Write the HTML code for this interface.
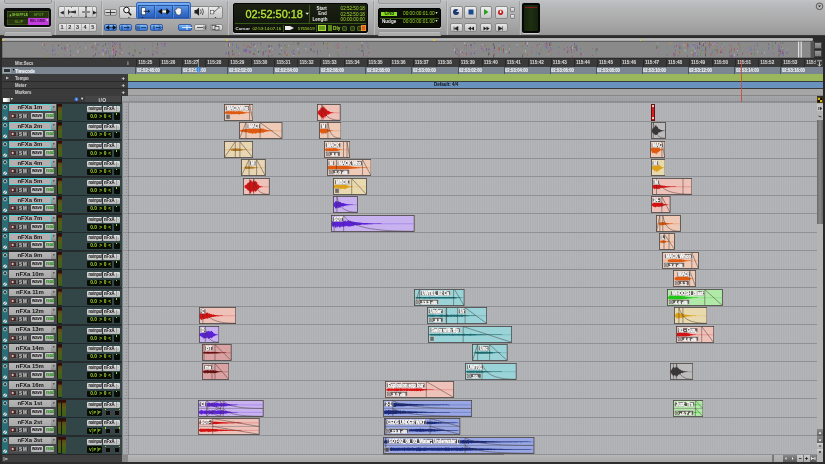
<!DOCTYPE html><html><head><meta charset="utf-8"><style>
*{margin:0;padding:0;box-sizing:border-box}
html,body{width:825px;height:464px;overflow:hidden;background:#2a2a2a}
body{position:relative;font-family:"Liberation Sans",sans-serif;}
.a{position:absolute}
.t{position:absolute;white-space:nowrap;line-height:1}
.btn{position:absolute;background:linear-gradient(#ececec,#c4c4c4);border:1px solid #8a8a8a;border-radius:2px}
.bbtn{position:absolute;background:linear-gradient(#8cc4ff,#4a90e8 50%,#3a7ad8);border:1px solid #3a5a9a;border-radius:2px}
</style></head><body><div style="position:absolute;left:0;top:0;width:825px;height:464px;overflow:hidden;will-change:transform;opacity:0.999"><div class="a" style="left:0.00px;top:0.00px;width:825.00px;height:36.00px;background:linear-gradient(#c4c5c9 0px,#bebfc0 2px,#b6b7b8 8px,#acacac 20px,#9c9c9c 33px,#969696 35px);"></div>
<div class="a" style="left:0.00px;top:35.00px;width:825.00px;height:1.00px;background:#3a3a3a"></div>
<div class="a" style="left:4.00px;top:-3.00px;width:48.00px;height:7.30px;border:0.6px solid #9a9a9a;border-radius:2px;background:linear-gradient(#bcbcbc,#b6b6b6);box-shadow:0 0.6px 0 #d2d2d2"></div>
<div class="a" style="left:4.00px;top:31.40px;width:48.00px;height:7.60px;border:0.6px solid #9a9a9a;border-radius:2px;background:linear-gradient(#b0b0b0,#a8a8a8);box-shadow:inset 0 0.6px 0 #cacaca"></div>
<div class="a" style="left:377.50px;top:-3.00px;width:63.50px;height:7.30px;border:0.6px solid #9a9a9a;border-radius:2px;background:linear-gradient(#bcbcbc,#b6b6b6);box-shadow:0 0.6px 0 #d2d2d2"></div>
<div class="a" style="left:377.50px;top:31.40px;width:63.50px;height:7.60px;border:0.6px solid #9a9a9a;border-radius:2px;background:linear-gradient(#b0b0b0,#a8a8a8);box-shadow:inset 0 0.6px 0 #cacaca"></div>
<div class="a" style="left:53.60px;top:1.00px;width:0.60px;height:34.00px;background:#a2a2a2;box-shadow:0.6px 0 0 #cfcfcf"></div>
<div class="a" style="left:100.80px;top:1.00px;width:0.60px;height:34.00px;background:#a2a2a2;box-shadow:0.6px 0 0 #cfcfcf"></div>
<div class="a" style="left:226.80px;top:1.00px;width:0.60px;height:34.00px;background:#a2a2a2;box-shadow:0.6px 0 0 #cfcfcf"></div>
<div class="a" style="left:372.50px;top:1.00px;width:0.60px;height:34.00px;background:#a2a2a2;box-shadow:0.6px 0 0 #cfcfcf"></div>
<div class="a" style="left:445.50px;top:1.00px;width:0.60px;height:34.00px;background:#a2a2a2;box-shadow:0.6px 0 0 #cfcfcf"></div>
<div class="a" style="left:518.50px;top:1.00px;width:0.60px;height:34.00px;background:#a2a2a2;box-shadow:0.6px 0 0 #cfcfcf"></div>
<div class="a" style="left:4.10px;top:8.20px;width:47.00px;height:19.20px;background:#0e0e0e;border-radius:2.5px;box-shadow:0 1px 0 #d8d8d8"></div>
<div class="a" style="left:7.00px;top:11.00px;width:42.10px;height:14.40px;background:#26350f;border:0.5px solid #3c5418"></div>
<div class="a" style="left:27.60px;top:11.20px;width:0.30px;height:14.00px;background:#1a2408"></div>
<div class="a" style="left:7.20px;top:18.00px;width:41.70px;height:0.30px;background:#1a2408"></div>
<div class="a" style="left:27.80px;top:18.20px;width:21.10px;height:6.90px;background:#c43de0"></div>
<svg class="a" style="left:8.8px;top:13.2px" width="3" height="4"><path d="M0.3 3.2 L1.4 1 L2.5 3.2z" fill="#8ad040"/></svg>
<div class="t" style="left:11.6px;top:13.7px;font-size:3.7px;font-weight:bold;color:#86c83a;transform:scaleX(0.95);transform-origin:0 0">SHUFFLE</div>
<div class="t" style="left:33.4px;top:13.1px;font-size:3.9px;font-weight:bold;color:#5c8e28">SPOT</div>
<div class="t" style="left:14.6px;top:20.1px;font-size:3.9px;font-weight:bold;color:#5c8e28">SLIP</div>
<div class="t" style="left:29.6px;top:20.3px;font-size:3.5px;font-weight:bold;color:#3a1048;transform:scaleX(0.92);transform-origin:0 0">REL GRID</div>
<svg class="a" style="left:46px;top:18.6px" width="3" height="3"><path d="M0.3 0.5h2.2L1.4 2z" fill="#f0f0f0"/></svg>
<div class="a" style="left:58.40px;top:5.60px;width:38.30px;height:12.80px;background:linear-gradient(#ececec,#c8c8c8);border:1px solid #8e8e8e;border-radius:2px"></div>
<div class="a" style="left:63.50px;top:6.20px;width:0.60px;height:11.60px;background:#a8a8a8"></div>
<div class="a" style="left:77.50px;top:6.20px;width:0.60px;height:11.60px;background:#a8a8a8"></div>
<div class="a" style="left:91.50px;top:6.20px;width:0.60px;height:11.60px;background:#a8a8a8"></div>
<div class="t" style="left:59.6px;top:9.5px;font-size:5px;color:#222">&#9664;</div>
<div class="t" style="left:92.6px;top:9.5px;font-size:5px;color:#222">&#9654;</div>
<svg class="a" style="left:64px;top:6px" width="32" height="12" viewBox="0 0 32 12"><path d="M3 6 L12 4.5 L12 7.5 Z M4 3 L6 6 L4 9 Z" fill="#333"/><path d="M7 1 l1 1 l-1 0z M7 11 l1 -1 l-1 0z" fill="#222"/><path d="M18 6 h8 M22 2 v8" stroke="#8a8a8a" stroke-width="2"/><circle cx="22" cy="1.2" r="0.8" fill="#222"/><circle cx="22" cy="10.8" r="0.8" fill="#222"/></svg>
<div class="a" style="left:58.40px;top:23.30px;width:38.30px;height:8.60px;background:linear-gradient(#ececec,#c8c8c8);border:1px solid #8e8e8e;border-radius:2px"></div>
<div class="t" style="left:60.60px;top:25.2px;font-size:5.5px;font-weight:bold;color:#333">1</div>
<div class="a" style="left:66.06px;top:23.80px;width:0.50px;height:7.60px;background:#b0b0b0"></div>
<div class="t" style="left:68.26px;top:25.2px;font-size:5.5px;font-weight:bold;color:#333">2</div>
<div class="a" style="left:73.72px;top:23.80px;width:0.50px;height:7.60px;background:#b0b0b0"></div>
<div class="t" style="left:75.92px;top:25.2px;font-size:5.5px;font-weight:bold;color:#333">3</div>
<div class="a" style="left:81.38px;top:23.80px;width:0.50px;height:7.60px;background:#b0b0b0"></div>
<div class="t" style="left:83.58px;top:25.2px;font-size:5.5px;font-weight:bold;color:#333">4</div>
<div class="a" style="left:89.04px;top:23.80px;width:0.50px;height:7.60px;background:#b0b0b0"></div>
<div class="t" style="left:91.24px;top:25.2px;font-size:5.5px;font-weight:bold;color:#333">5</div>
<div class="a" style="left:103.90px;top:8.70px;width:13.10px;height:7.80px;background:linear-gradient(#e8e8e8,#c0c0c0);border:1px solid #8a8a8a;border-radius:2px"></div>
<svg class="a" style="left:104px;top:9px" width="13" height="7"><path d="M1.5 3.5h10M6.5 1v5" stroke="#333" stroke-width="0.9"/></svg>
<div class="a" style="left:119.20px;top:5.50px;width:103.40px;height:13.10px;background:linear-gradient(#ececec,#c4c4c4);border:1px solid #8a8a8a;border-radius:2px"></div>
<div class="a" style="left:135.50px;top:1.90px;width:55.10px;height:16.70px;background:linear-gradient(#7ab4f4,#5a94e4 30%,#4a84d8);border:0.8px solid #3a66b8;border-radius:2px"></div>
<div class="a" style="left:137.60px;top:4.60px;width:51.00px;height:13.60px;background:linear-gradient(#5e9ae8,#3a74d0 55%,#2c62c0);border:0.5px solid #2a56a8"></div>
<div class="a" style="left:154.30px;top:4.80px;width:0.60px;height:13.20px;background:#2a56a8;box-shadow:0.6px 0 0 #6a9ee8"></div>
<div class="a" style="left:171.60px;top:4.80px;width:0.60px;height:13.20px;background:#2a56a8;box-shadow:0.6px 0 0 #6a9ee8"></div>
<div class="a" style="left:207.80px;top:6.00px;width:0.60px;height:12.00px;background:#a0a0a0"></div>
<svg class="a" style="left:119px;top:5px" width="104" height="14" viewBox="0 0 104 14"><circle cx="7.5" cy="5" r="2.8" stroke="#111" stroke-width="1" fill="#f8f8f8"/><path d="M9.5 7.2 L12.2 10.2" stroke="#111" stroke-width="1.5"/><path d="M9 12 h2 l-1 1z" fill="#222"/><rect x="22.5" y="2.8" width="4" height="7" fill="#fff" stroke="#111" stroke-width="0.5"/><path d="M24.5 6.3 h6 M29 5 l1.5 1.3 l-1.5 1.3" stroke="#112" stroke-width="0.8" fill="none"/><path d="M22.5 12 h2 l-1 1z" fill="#112"/><path d="M39 6.5 L43 3.5 L43 5 L47.5 5 L47.5 3 L51 6.5 L47.5 10 L47.5 8 L43 8 L43 9.5 Z" fill="#111"/><rect x="43.3" y="5.3" width="3.8" height="2.4" fill="#fff"/><path d="M57.5 9.5 L56 5.5 Q56 3.8 57.2 4.6 L57.6 3.2 Q58.6 2.6 59 3.4 L59.6 2.6 Q60.6 2.4 60.8 3.4 L61.6 3.2 Q62.6 3.4 62.4 4.6 L62.2 8 Q61.8 10 60 10.2 Z" fill="#f6f6f6" stroke="#222" stroke-width="0.5"/><path d="M75.5 5 h1.8 l2.8 -2.4 v8.2 l-2.8 -2.4 h-1.8z" fill="#222"/><path d="M81.6 4.4 q1.2 2.3 0 4.6 M83.4 3.4 q2 3.3 0 6.6" stroke="#333" stroke-width="0.8" fill="none"/><rect x="91.5" y="5.5" width="3.4" height="3.4" fill="#f4f4f4" stroke="#333" stroke-width="0.5"/><path d="M94.5 7.5 L100 2.5 M99 1.5 l2 2" stroke="#333" stroke-width="0.7"/><path d="M95.5 12 h2 l-1 1z" fill="#222"/></svg>
<div class="bbtn" style="left:103.5px;top:23.6px;width:13.0px;height:7.9px"></div>
<div class="bbtn" style="left:119.2px;top:23.6px;width:13.1px;height:7.9px"></div>
<div class="bbtn" style="left:134.7px;top:23.6px;width:12.9px;height:7.9px"></div>
<div class="bbtn" style="left:150.1px;top:23.6px;width:12.9px;height:7.9px"></div>
<div class="bbtn" style="left:178.3px;top:23.6px;width:13.4px;height:7.9px"></div>
<div class="btn" style="left:194.2px;top:23.6px;width:12.6px;height:7.9px"></div>
<div class="btn" style="left:209.5px;top:23.6px;width:13.1px;height:7.9px"></div>
<svg class="a" style="left:103px;top:23px" width="120" height="9" viewBox="0 0 120 9"><path d="M3 4.5 L6 2.5 V6.5Z M10 2.5 L13 4.5 L10 6.5Z M6 4.5h4" fill="#111" stroke="#111" stroke-width="0.5"/><path d="M19 2.5v4 M21 4.5h5 M24 2.5 L26 4.5 L24 6.5" stroke="#112" stroke-width="0.7" fill="none"/><path d="M34 2.5v4 M36 2.5v4 M38 4.5h5" stroke="#223" stroke-width="0.7" fill="none"/><path d="M51 2.5v4 M53 4.5h4 M56 2.5 L58 4.5 L56 6.5" stroke="#112" stroke-width="0.7" fill="none"/><path d="M79 4.5h10 M84 2v5" stroke="#fff" stroke-width="0.8"/><path d="M94 4.5h6 M101 2.5v4 M102.5 2.5v4" stroke="#222" stroke-width="0.7"/><rect x="109" y="2.5" width="4" height="4" fill="none" stroke="#222" stroke-width="0.6"/><rect x="112" y="3.5" width="4" height="3.5" fill="#ddd" stroke="#222" stroke-width="0.6"/></svg>
<div class="a" style="left:233.20px;top:2.70px;width:134.50px;height:30.00px;background:linear-gradient(#1c2214,#10140c);border:1px solid #050505;border-radius:2px;box-shadow:0 1px 0 #d4d4d4"></div>
<div class="t" style="left:245.5px;top:9.3px;font-size:10.95px;color:#bae834;letter-spacing:-0.05px;-webkit-text-stroke:0.3px #bae834">02:52:50:18</div>
<svg class="a" style="left:304.6px;top:12.4px" width="5" height="4"><path d="M0.4 0.8h3.6l-1.8 2z" fill="#eee"/></svg>
<div class="a" style="left:309.30px;top:5.00px;width:0.50px;height:18.00px;background:#3a5a18"></div>
<div class="a" style="left:235.00px;top:23.40px;width:131.00px;height:0.50px;background:#3a5a18"></div>
<div class="t" style="left:316.5px;top:6.60px;font-size:4.5px;font-weight:bold;color:#e8e8e8">Start</div>
<div class="t" style="left:318.2px;top:12.10px;font-size:4.5px;font-weight:bold;color:#e8e8e8">End</div>
<div class="t" style="left:312.6px;top:17.60px;font-size:4.5px;font-weight:bold;color:#e8e8e8">Length</div>
<div class="t" style="left:340.6px;top:7.20px;font-size:4.6px;color:#a8dc30">02:52:50:18</div>
<div class="t" style="left:340.6px;top:12.70px;font-size:4.6px;color:#a8dc30">02:52:50:18</div>
<div class="t" style="left:340.6px;top:18.20px;font-size:4.6px;color:#a8dc30">00:00:00:00</div>
<div class="t" style="left:235.5px;top:26.6px;font-size:4.4px;font-weight:bold;color:#e8e8e8">Cursor</div>
<div class="t" style="left:252.4px;top:26.9px;font-size:4.3px;color:#b8e838">02:53:14:07.16</div>
<div class="a" style="left:282.80px;top:24.50px;width:0.40px;height:7.00px;background:#3a5a18"></div>
<svg class="a" style="left:284px;top:25px" width="12" height="6"><path d="M1 1h5l4 2l-4 2h-5z" fill="#eee"/></svg>
<div class="t" style="left:297.8px;top:26.9px;font-size:4.3px;color:#b8e838">5765619</div>
<div class="a" style="left:316.00px;top:24.50px;width:0.40px;height:7.00px;background:#3a5a18"></div>
<div class="a" style="left:318.20px;top:25.00px;width:8.30px;height:6.20px;background:#6a9a20;border:0.5px solid #a8d838"></div>
<div class="a" style="left:328.00px;top:25.20px;width:4.00px;height:5.80px;background:#5a8a18"></div>
<div class="t" style="left:333px;top:26.8px;font-size:4.8px;font-weight:bold;color:#a8dc30">Dly</div>
<div class="a" style="left:342.00px;top:25.50px;width:5.00px;height:5.30px;background:#2a3a14;border:0.5px solid #4a6a20;border-radius:1px"></div>
<div class="a" style="left:349.50px;top:25.50px;width:5.00px;height:5.30px;background:#2a3a14;border:0.5px solid #4a6a20;border-radius:1px"></div>
<div class="a" style="left:356.50px;top:25.50px;width:5.00px;height:5.30px;background:#2a3a14;border:0.5px solid #4a6a20;border-radius:1px"></div>
<div class="a" style="left:360.50px;top:25.30px;width:5.50px;height:5.70px;background:#e06018;border:0.5px solid #f09030"></div>
<div class="a" style="left:377.90px;top:8.20px;width:63.00px;height:19.40px;background:#0c0f08;border:1px solid #030303;border-radius:2px;box-shadow:0 1px 0 #d4d4d4"></div>
<div class="a" style="left:380.90px;top:11.50px;width:15.80px;height:4.90px;background:#8ae020"></div>
<div class="t" style="left:384.6px;top:11.9px;font-size:4.6px;font-weight:bold;color:#1e3a04;-webkit-text-stroke:0.1px #1e3a04">Grid</div>
<div class="t" style="left:403px;top:12.1px;font-size:4.75px;color:#9cd828">00:00:00:01.00</div>
<div class="t" style="left:434.8px;top:12.4px;font-size:3.6px;color:#ddd">&#9660;</div>
<div class="a" style="left:380.00px;top:17.80px;width:59.00px;height:0.40px;background:#3c6014"></div>
<div class="t" style="left:382px;top:20.1px;font-size:4.6px;font-weight:bold;color:#eee">Nudge</div>
<div class="t" style="left:403px;top:20.2px;font-size:4.75px;color:#9cd828">00:00:00:01.00</div>
<div class="t" style="left:434.8px;top:20.4px;font-size:3.6px;color:#ddd">&#9660;</div>
<div class="btn" style="left:449.5px;top:5.8px;width:13.0px;height:12.8px;background:linear-gradient(#f0f0f0,#c6c6c6)"></div>
<div class="btn" style="left:449.5px;top:23.3px;width:13.0px;height:8.4px;background:linear-gradient(#eaeaea,#c2c2c2)"></div>
<div class="btn" style="left:464.4px;top:5.8px;width:13.1px;height:12.8px;background:linear-gradient(#f0f0f0,#c6c6c6)"></div>
<div class="btn" style="left:464.4px;top:23.3px;width:13.1px;height:8.4px;background:linear-gradient(#eaeaea,#c2c2c2)"></div>
<div class="btn" style="left:479.6px;top:5.8px;width:12.8px;height:12.8px;background:linear-gradient(#f0f0f0,#c6c6c6)"></div>
<div class="btn" style="left:479.6px;top:23.3px;width:12.8px;height:8.4px;background:linear-gradient(#eaeaea,#c2c2c2)"></div>
<div class="btn" style="left:494.5px;top:5.8px;width:13.1px;height:12.8px;background:linear-gradient(#f0f0f0,#c6c6c6)"></div>
<div class="btn" style="left:494.5px;top:23.3px;width:13.1px;height:8.4px;background:linear-gradient(#eaeaea,#c2c2c2)"></div>
<svg class="a" style="left:449px;top:5px" width="60" height="28" viewBox="0 0 60 28"><circle cx="7" cy="7" r="3" fill="#1a3a70"/><path d="M7 7 L10 4 L10 7z" fill="#ddd"/><rect x="19.5" y="4.5" width="5" height="5" fill="#1a4a90"/><path d="M35 4 L39.5 7 L35 10z" fill="#2aa020"/><circle cx="51.6" cy="7.3" r="2.6" fill="#c01818"/><rect x="50.8" y="5.5" width="1.6" height="2.6" fill="#fff"/><path d="M5 21.5 v4 M5.5 23.5 L9 21.5 V25.5z" fill="#222" stroke="#222" stroke-width="0.6"/><path d="M22 21.5 L19 23.5 L22 25.5z M25 21.5 L22 23.5 L25 25.5z" fill="#222"/><path d="M34.5 21.5 L37.5 23.5 L34.5 25.5z M37.5 21.5 L40.5 23.5 L37.5 25.5z" fill="#222"/><path d="M49.5 21.5 L53 23.5 L49.5 25.5z M53.5 21.5 v4" fill="#222" stroke="#222" stroke-width="0.6"/></svg>
<div class="a" style="left:510.00px;top:7.30px;width:5.30px;height:4.30px;background:linear-gradient(#eee,#c0c0c0);border:0.5px solid #888;border-radius:1px"></div>
<div class="a" style="left:510.00px;top:13.80px;width:5.30px;height:4.80px;background:linear-gradient(#eee,#c0c0c0);border:0.5px solid #888;border-radius:1px"></div>
<div class="a" style="left:522.20px;top:2.90px;width:17.40px;height:30.30px;background:#080808;border-radius:2px;box-shadow:0 1px 0 #d4d4d4"></div>
<div class="a" style="left:524.20px;top:5.00px;width:13.40px;height:26.20px;background:linear-gradient(90deg,#16240e,#1e3012 50%,#16240e)"></div>
<div class="a" style="left:525.00px;top:7.20px;width:12.00px;height:0.60px;background:#8a1a1a"></div>
<svg class="a" style="left:815px;top:2px" width="9" height="9"><circle cx="4.5" cy="4.3" r="3.3" fill="#b8b8b8" stroke="#333" stroke-width="0.7"/><path d="M3 3.5h3l-1.5 1.8z" fill="#222"/></svg>
<div class="a" style="left:0.00px;top:36.00px;width:825.00px;height:23.00px;background:#2c2c2c"></div>
<div class="a" style="left:2.00px;top:38.30px;width:811.00px;height:2.60px;background:linear-gradient(#a8a8a8,#bcbcbc 50%,#a0a0a0);border-radius:1.3px"></div>
<div class="a" style="left:2.00px;top:41.10px;width:808.50px;height:16.50px;background:#8b8b8b;box-shadow:inset 0 0.6px 0 #555, inset 0 0 0 0.5px #5a5a5a"></div>
<div class="a" style="left:2.3px;top:38.8px;width:1.8px;height:1.8px;border-radius:1px;background:#f0d020"></div>
<div class="a" style="left:226.1px;top:38.8px;width:1.8px;height:1.8px;border-radius:1px;background:#f0d020"></div>
<div class="a" style="left:433.1px;top:38.8px;width:1.8px;height:1.8px;border-radius:1px;background:#f0d020"></div>
<div class="a" style="left:639.6px;top:38.8px;width:1.8px;height:1.8px;border-radius:1px;background:#f0d020"></div>
<svg class="a" style="left:0;top:0" width="825" height="60"><path d="M75.5 47.3v0.8M110.0 47.6v1M98.5 51.8v1.5M62.0 47.3v2M58.5 54.9v1.5M52.5 49.7v1.5M52.5 50.6v1.5M163.5 53.3v0.8M115.5 47.8v0.8M70.0 45.4v0.8M93.5 47.2v1M306.0 43.6v1M226.0 52.0v3M368.0 44.3v0.8M280.0 53.1v2M263.0 51.7v3M244.0 48.2v3M367.0 55.3v1.5M292.0 50.6v2M346.5 46.8v1.5M363.5 51.3v1M263.5 46.0v1M293.5 52.7v2M254.0 43.5v0.8M275.5 49.3v1M545.0 43.3v2M571.0 48.5v2M568.0 50.9v1M503.5 50.2v3M550.5 47.1v2M459.0 50.3v3M551.0 42.2v0.8M539.0 52.7v2M536.5 51.6v1M674.5 45.6v0.8M697.5 55.0v2M711.0 52.7v1M709.5 46.2v2M749.0 46.3v0.8M757.5 42.9v1.5M762.0 52.5v1.5M694.0 55.4v2M721.0 46.3v1.5M712.5 51.6v1.5M731.5 55.2v3M730.0 54.3v3M722.5 52.8v0.8M717.0 45.7v1.5" stroke="#8a50a8" stroke-width="0.8" opacity="0.7"/><path d="M75.5 53.1v0.8M108.5 49.9v1M135.5 49.9v2M67.5 44.0v3M46.5 44.0v0.8M46.5 54.9v3M133.0 49.0v1M135.0 44.7v2M58.5 54.9v2M115.5 53.3v2M65.0 53.3v0.8M42.5 52.6v1M112.5 45.8v0.8M333.0 46.2v2M317.5 46.7v0.8M284.5 46.2v3M281.5 53.1v2M246.5 42.3v0.8M327.5 42.8v3M230.0 43.4v1M326.0 42.9v3M271.5 54.6v0.8M545.0 47.7v0.8M528.0 51.8v3M494.0 53.2v1.5M483.5 52.5v0.8M509.5 50.2v1.5M592.5 55.0v0.8M499.5 46.9v3M488.5 47.0v0.8M488.5 46.3v0.8M547.0 44.3v1.5M521.0 43.1v3M476.0 49.8v0.8M781.5 42.5v0.8M751.5 53.8v0.8M693.5 49.4v3M714.5 49.0v2M748.5 44.3v1.5M709.5 55.0v2M730.0 44.6v1.5M658.5 45.4v2M732.0 45.4v2M681.5 46.4v2M715.0 48.5v1M714.0 46.0v2M685.0 51.3v1M685.0 49.5v2M717.0 52.5v1M717.0 48.8v1.5" stroke="#a09030" stroke-width="0.8" opacity="0.7"/><path d="M110.0 44.9v0.8M108.5 50.4v2M55.0 49.4v1M55.0 53.7v1.5M113.5 52.1v1M65.0 46.4v3M157.5 53.3v1M157.5 43.0v1M152.5 45.7v1M52.5 45.8v1M113.5 42.2v3M120.0 42.6v3M165.0 45.4v1.5M238.5 47.2v2M229.0 42.3v2M229.0 43.1v1M359.0 48.7v1.5M368.0 45.8v1.5M299.0 52.2v1M317.5 53.0v1.5M281.5 44.7v0.8M281.5 49.4v1.5M281.5 46.2v1M269.0 46.8v1M245.5 49.0v3M293.5 51.4v0.8M294.0 50.3v0.8M509.0 52.7v1.5M455.5 52.0v2M577.0 50.5v0.8M489.0 48.5v0.8M546.5 42.2v2M567.5 51.5v1.5M551.0 49.5v1.5M483.5 51.0v0.8M581.0 53.6v1M525.5 42.5v0.8M592.5 54.9v1M493.5 54.5v1.5M474.5 52.2v1.5M574.5 42.9v3M754.5 49.0v1M754.5 45.6v1M754.5 53.8v0.8M715.0 49.2v1M667.0 54.9v1M695.5 52.4v3M695.5 49.0v3M783.0 49.1v0.8M787.0 51.3v3M740.0 48.8v1M740.0 46.8v0.8M783.0 53.1v3M693.0 46.9v1.5M780.5 42.7v1M724.5 46.5v0.8M694.0 43.5v2" stroke="#5050c8" stroke-width="0.8" opacity="0.7"/><path d="M110.0 49.4v0.8M109.0 47.7v3M108.5 53.0v1M115.5 52.8v0.8M103.0 43.9v3M129.0 46.6v1.5M129.0 52.1v2M165.0 53.5v1.5M229.5 55.1v1M336.0 52.3v1.5M255.0 50.4v1M294.0 53.8v1M232.5 52.5v0.8M281.5 54.2v2M261.0 51.0v1.5M338.0 53.6v3M236.5 45.1v0.8M294.0 42.4v3M539.5 52.6v3M509.0 45.7v0.8M577.0 53.5v1M551.0 43.1v2M457.0 50.4v1.5M483.5 50.4v1M525.5 48.4v2M464.5 47.8v0.8M524.0 53.7v2M596.0 53.1v2M501.5 48.2v2M657.5 45.2v2M721.5 52.3v0.8M779.0 50.4v1.5M779.0 54.8v1.5M700.5 53.1v3M754.5 52.3v3M722.0 44.0v1.5M740.0 44.5v3M772.5 44.1v3M680.0 47.3v1.5M708.5 45.1v1M729.5 50.5v3M712.5 50.4v1M705.5 53.0v1.5M705.5 46.8v1.5" stroke="#4a9a4a" stroke-width="0.8" opacity="0.7"/><path d="M110.0 54.8v3M109.0 42.7v1M108.5 43.3v0.8M133.0 54.6v2M70.5 50.2v2M113.5 54.9v3M85.5 43.4v2M85.5 44.2v1.5M103.0 52.6v0.8M103.0 45.4v1.5M161.5 43.1v1.5M121.5 50.1v1.5M153.0 53.3v3M144.5 48.5v1.5M229.0 51.5v1.5M228.5 43.9v0.8M279.0 53.0v2M279.5 46.9v1.5M294.0 53.3v1.5M284.5 51.0v2M261.0 42.6v3M248.0 45.2v1.5M254.0 43.6v3M246.5 48.6v3M311.0 45.4v0.8M311.0 44.5v1M236.5 46.5v1.5M366.5 42.4v1M471.0 52.2v3M546.5 45.7v2M486.5 48.4v3M494.0 47.7v3M499.0 43.7v0.8M457.0 47.8v3M580.5 48.1v1M551.0 54.3v0.8M571.5 45.6v1M466.5 47.6v1M527.5 44.5v2M493.5 44.5v1.5M674.0 52.5v2M674.0 52.9v0.8M779.0 45.7v3M695.5 47.3v1.5M674.5 46.8v1M702.0 50.4v0.8M702.0 45.0v2M732.0 54.2v3M732.0 55.2v0.8M687.5 43.4v2M705.5 54.8v2" stroke="#6a50b0" stroke-width="0.8" opacity="0.7"/><path d="M109.0 49.5v1M67.5 44.7v1.5M67.5 49.2v1M85.5 47.3v1.5M74.0 54.6v0.8M112.5 51.2v2M338.5 49.7v0.8M226.0 44.8v1M288.5 45.3v1M338.0 44.6v2M258.5 52.0v0.8M258.5 53.1v1.5M293.5 54.9v1M239.5 52.7v1M539.5 45.5v1M506.0 51.9v0.8M499.5 44.6v1M517.0 44.1v1.5M527.5 42.0v3M462.5 49.8v0.8M734.5 54.0v2M722.0 45.9v1.5M787.0 48.9v0.8M713.0 44.1v0.8M732.0 54.6v0.8M724.5 43.8v1.5M670.5 42.6v1.5M782.5 47.7v1M764.5 51.8v1.5" stroke="#c8c8c8" stroke-width="0.8" opacity="0.7"/><path d="M135.5 46.0v1M55.0 55.3v2M135.0 52.9v2M106.0 55.0v0.8M153.0 49.7v0.8M140.0 45.2v1M306.0 44.8v2M265.5 49.1v3M279.0 42.4v2M258.5 51.9v0.8M269.0 44.1v0.8M493.5 53.5v2M545.0 49.8v0.8M596.0 48.3v3M580.5 48.4v1.5M541.0 47.2v2M556.5 45.5v3M547.0 47.0v1M521.0 52.8v1M517.0 45.6v2M474.5 55.4v1M536.5 53.4v3M493.5 43.8v1.5M773.0 45.3v0.8M721.5 43.6v1M751.5 49.0v1.5M669.5 48.8v0.8M779.0 49.0v2M715.0 49.8v3M667.0 46.4v3M702.0 47.9v3M697.5 45.3v2M687.5 49.5v2M695.0 49.9v1.5M658.5 45.9v1.5M713.0 50.5v1M762.0 47.6v2M724.5 43.8v1M685.0 51.0v2M779.0 53.1v0.8M699.5 46.5v0.8" stroke="#4a9aa0" stroke-width="0.8" opacity="0.7"/><path d="M135.5 43.1v1.5M96.0 49.0v1M113.5 42.2v0.8M163.0 45.4v1.5M65.0 54.1v3M103.0 49.5v1.5M107.0 48.0v3M113.0 51.4v2M113.0 49.2v2M163.5 44.2v2M106.0 49.0v1.5M155.5 50.4v0.8M92.0 42.5v0.8M115.5 51.0v2M116.0 42.0v0.8M116.0 54.1v0.8M93.5 49.8v1M338.5 55.0v1.5M317.5 43.3v1.5M228.5 46.4v1M272.5 45.4v1M232.5 54.6v1.5M308.0 46.7v1M346.5 52.8v3M248.0 50.0v3M317.5 55.0v2M246.5 50.4v2M245.5 53.0v1M271.5 54.3v3M537.0 44.3v0.8M482.5 47.8v3M471.0 46.7v1.5M537.5 46.5v1M559.0 51.8v3M476.0 49.3v2M545.0 46.1v2M551.0 48.7v1M574.5 46.5v1.5M459.0 50.2v0.8M531.5 49.8v1.5M476.0 49.0v2M773.0 48.0v0.8M657.5 50.6v2M781.5 51.4v3M696.0 43.6v3M709.5 44.9v0.8M749.0 49.6v1.5M780.5 52.0v2M715.0 42.0v3M712.5 43.0v0.8M731.5 43.1v1.5M731.5 46.0v1.5M685.0 50.8v1M730.0 49.3v0.8M770.0 52.8v1M679.5 45.1v3M679.5 43.0v1.5" stroke="#a060c0" stroke-width="0.8" opacity="0.7"/><path d="M98.5 43.6v2M70.5 54.7v1.5M53.0 48.5v3M44.5 48.3v0.8M103.0 48.9v2M103.0 50.2v1M62.0 47.4v2M155.5 51.6v0.8M287.0 44.6v0.8M228.5 51.9v0.8M299.0 49.5v1.5M255.0 48.7v2M232.5 43.2v3M251.5 42.6v3M263.5 53.9v0.8M593.5 55.2v0.8M577.0 45.3v2M503.5 44.8v2M488.5 49.3v0.8M547.0 47.3v2M574.5 51.9v1.5M657.5 46.7v0.8M693.5 46.0v0.8M779.0 51.0v1M772.5 42.4v0.8M688.5 44.2v3M658.5 54.2v0.8M751.0 47.5v3M678.5 45.4v0.8M681.5 48.0v0.8M768.5 47.0v3M703.0 43.5v1.5M679.5 47.3v2" stroke="#5a6ac0" stroke-width="0.8" opacity="0.7"/><path d="M133.0 55.0v0.8M135.0 49.3v3M115.5 54.0v2M157.5 43.6v2M80.0 51.7v0.8M106.0 51.5v2M92.0 46.9v1.5M114.5 43.0v1M129.0 53.3v0.8M287.0 46.6v0.8M285.0 44.8v1.5M228.5 44.5v2M279.5 44.6v0.8M244.0 50.2v1.5M268.5 55.2v2M320.5 50.6v0.8M254.0 44.2v1.5M258.5 50.6v3M362.0 44.6v2M471.0 44.1v2M559.0 46.7v1M489.0 49.0v1M571.0 46.8v1.5M549.5 42.8v3M550.5 42.3v0.8M457.0 53.6v1.5M522.5 54.8v3M522.5 45.9v0.8M466.5 45.4v0.8M596.0 50.5v1M501.5 45.5v0.8M597.0 48.0v3M576.5 49.0v1.5M781.5 46.6v1M751.5 53.4v0.8M780.0 53.6v1M705.5 47.4v3M783.0 51.2v3M680.0 46.5v2M768.5 43.4v1.5M699.5 47.2v1.5" stroke="#505050" stroke-width="0.8" opacity="0.7"/><path d="M78.0 50.0v3M95.5 42.8v1.5M85.5 44.6v1M103.0 52.4v3M42.5 43.9v1M113.5 42.9v0.8M105.5 48.9v1M122.0 51.6v1.5M329.5 54.6v2M306.0 48.1v1.5M229.5 43.0v3M257.5 49.1v0.8M362.0 42.1v1.5M255.0 45.2v2M272.5 49.1v0.8M281.5 47.3v1.5M298.0 48.3v2M369.0 46.9v0.8M270.0 47.1v2M482.5 44.3v1M493.5 48.8v1.5M476.0 49.0v0.8M454.5 49.0v2M572.5 46.8v2M549.0 53.5v1M525.5 49.8v2M506.0 50.5v2M464.5 42.5v1.5M460.5 51.1v1.5M509.5 48.5v1M583.5 53.4v0.8M657.5 42.6v0.8M721.5 53.6v1M696.0 54.2v0.8M692.0 52.0v1.5M737.5 49.4v1.5M722.0 47.1v2M695.5 50.0v1.5M695.0 48.8v1M695.0 51.1v1.5M693.0 46.7v2M757.5 51.1v1M694.0 43.0v0.8M715.0 43.2v0.8M685.0 49.2v3M703.0 42.3v3M684.0 44.3v1.5" stroke="#d0d0d0" stroke-width="0.8" opacity="0.7"/><path d="M78.0 42.9v0.8M46.5 50.3v1M97.0 43.9v1.5M133.0 55.2v0.8M129.5 52.7v2M92.0 45.7v0.8M121.5 48.2v1M116.0 51.2v2M116.0 42.9v2M93.5 55.1v2M157.0 51.6v1.5M165.0 43.0v2M250.0 46.6v1.5M285.0 52.2v2M336.0 45.1v1M279.5 42.8v0.8M338.0 46.0v3M232.5 53.7v2M317.5 50.8v2M363.5 53.2v3M254.0 54.1v1M317.5 49.8v0.8M369.0 52.0v1.5M327.5 43.3v1M236.5 44.4v0.8M263.5 51.2v3M271.5 45.5v1.5M471.0 44.3v2M577.0 48.1v1.5M567.5 46.8v1M581.0 52.6v3M571.5 51.3v1.5M481.5 48.3v1M493.5 49.9v1M564.0 48.4v1.5M474.5 53.3v0.8M527.5 54.3v1M738.5 42.3v1M674.0 53.7v3M780.0 49.5v2M700.5 43.9v1M779.0 48.7v3M697.5 46.1v3M730.0 45.2v0.8M780.5 52.3v0.8M678.5 55.1v1M694.0 52.1v1.5M721.0 50.7v3M706.0 49.4v1.5M705.5 42.5v1M675.5 49.9v1.5" stroke="#8a3a8a" stroke-width="0.8" opacity="0.7"/><path d="M70.5 54.0v1.5M53.0 44.0v1M96.0 46.9v3M44.5 44.3v1M113.5 49.4v1M163.0 53.2v1M52.5 54.1v1.5M299.0 52.4v2M229.5 55.1v2M257.5 43.1v0.8M362.0 47.2v1M263.0 54.5v1.5M272.5 55.4v0.8M338.0 50.8v1M327.5 47.4v1.5M270.0 50.5v2M537.0 44.7v0.8M455.5 50.2v2M567.5 51.2v2M568.0 49.2v1.5M550.5 44.4v1.5M532.5 47.4v0.8M464.5 44.9v1M547.0 42.8v3M509.5 45.2v1M574.5 49.9v1M773.0 52.9v1M738.5 43.4v1.5M721.5 52.1v1M737.5 48.3v1.5M687.5 55.1v2M656.5 46.1v3M779.0 53.4v3M783.0 52.9v0.8M711.0 53.8v2M693.0 54.6v1M703.5 45.2v1M779.0 44.3v1.5" stroke="#9a4a5a" stroke-width="0.8" opacity="0.7"/><path d="M62.0 43.7v1M113.5 48.2v3M152.5 53.5v1.5M105.0 53.2v1M153.0 50.6v0.8M112.5 45.1v2M157.0 47.0v2M250.0 52.0v1.5M287.0 54.0v2M228.5 43.4v2M232.5 50.6v1M338.0 43.1v3M311.0 42.8v0.8M254.0 54.0v0.8M493.5 48.3v0.8M454.5 44.8v1M549.5 44.1v1.5M499.0 47.4v3M459.0 54.3v3M541.0 49.9v1M503.5 49.3v2M481.5 46.2v0.8M531.5 52.4v1M466.5 44.7v1M583.5 52.5v0.8M462.5 51.6v1.5M751.5 52.9v1.5M687.5 44.5v3M722.0 46.8v3M742.5 52.6v2M711.0 44.3v1.5M676.5 44.9v2M709.5 43.2v1.5M757.5 45.1v1M721.0 52.1v0.8M714.0 54.2v1M717.0 52.5v0.8M679.5 51.4v2" stroke="#c03838" stroke-width="0.8" opacity="0.7"/><path d="M46.5 50.3v0.8M135.0 50.6v3M157.5 53.8v1.5M163.5 47.5v2M105.0 55.1v1.5M105.0 55.3v1.5M92.0 45.3v1.5M34.5 48.6v0.8M122.0 48.3v0.8M299.0 53.0v2M287.0 45.2v1.5M285.0 51.3v3M359.0 46.9v2M363.0 54.4v0.8M368.0 54.9v0.8M280.0 42.7v2M338.0 47.0v1.5M288.5 53.9v3M232.5 55.1v3M317.5 46.6v0.8M317.5 55.5v0.8M323.5 50.4v0.8M285.0 53.7v1.5M250.0 43.5v2M248.0 45.4v2M357.0 42.2v3M263.5 45.5v1M254.0 43.4v1M593.5 55.0v0.8M586.5 42.5v3M596.0 54.5v0.8M551.0 52.6v1.5M457.0 48.4v3M574.5 52.7v1.5M464.5 55.3v0.8M499.5 50.0v1M493.5 42.3v0.8M460.5 46.3v0.8M574.5 44.8v3M669.5 42.9v2M737.5 45.0v2M740.0 45.9v3M772.5 48.9v1M676.5 50.5v3M757.5 53.3v2M670.5 42.2v2M731.5 53.9v0.8M687.0 42.6v3M684.0 50.0v0.8M789.0 54.4v0.8" stroke="#b08a4a" stroke-width="0.8" opacity="0.7"/><path d="M95.5 53.5v2M58.5 45.0v1M58.5 44.7v1M115.5 54.3v1M105.5 43.4v2M80.0 46.5v0.8M120.0 47.3v1.5M140.0 52.0v2M112.5 42.3v0.8M314.0 50.7v1.5M250.0 50.9v1.5M265.5 50.7v1M363.0 50.2v1M279.0 44.6v1.5M228.5 52.7v2M299.0 42.9v0.8M323.5 42.4v2M232.5 50.3v1M298.0 42.3v3M269.0 44.8v3M311.0 48.0v3M362.0 50.1v2M254.0 53.1v1.5M503.5 48.6v1M539.5 53.0v1M539.5 44.2v0.8M489.0 52.5v2M486.5 48.5v1M488.5 53.4v2M574.5 46.7v1M509.5 51.8v1M494.5 45.7v3M493.5 55.4v3M576.0 45.5v3M474.5 42.8v1M493.5 43.2v2M737.5 54.0v1.5M775.5 42.3v1.5M705.5 53.9v2M780.5 51.1v1M703.5 43.8v2M717.0 49.3v1M703.0 43.5v0.8M783.0 42.3v1M699.5 42.1v3" stroke="#404040" stroke-width="0.8" opacity="0.7"/><path d="M44.5 44.0v2M113.5 55.2v1.5M65.0 47.7v3M70.0 45.6v0.8M116.0 49.9v3M120.0 44.0v3M120.0 51.9v3M153.0 43.1v0.8M114.5 45.4v1.5M93.5 45.5v1.5M165.0 42.7v1.5M314.0 42.7v3M285.0 49.8v1.5M238.5 54.9v0.8M363.0 47.6v0.8M244.0 44.5v1.5M234.0 52.7v3M292.0 43.8v0.8M308.0 52.0v1M251.5 47.2v0.8M346.5 47.4v0.8M248.0 45.7v2M369.0 47.1v1.5M246.5 46.9v0.8M269.0 49.9v3M293.5 49.6v1M537.5 44.6v1.5M596.0 48.2v1M572.5 55.4v3M549.0 50.2v3M571.5 48.9v2M525.5 42.9v2M592.5 48.3v1M522.5 53.7v0.8M494.5 53.0v3M499.5 47.4v3M488.5 50.5v0.8M466.5 52.4v3M485.0 44.4v2M466.5 53.2v1.5M734.5 47.9v3M705.5 50.8v3M772.5 47.5v0.8M730.0 51.0v1.5M687.5 43.3v1.5M709.5 42.4v3M693.0 53.4v2M703.5 43.2v1.5M721.0 50.8v0.8M706.0 46.3v1.5M782.5 50.1v0.8M782.5 51.3v1M731.5 48.2v3M731.5 54.9v2M687.0 48.2v0.8M675.5 53.8v2M717.0 42.6v1M717.0 49.7v3" stroke="#b04a4a" stroke-width="0.8" opacity="0.7"/><rect x="798" y="41.5" width="1.2" height="16" fill="#e0e0e0"/><rect x="800.6" y="41.5" width="1.2" height="16" fill="#e0e0e0"/></svg>
<div class="a" style="left:811.00px;top:41.20px;width:2.50px;height:16.40px;background:#555"></div>
<div class="a" style="left:814.30px;top:41.50px;width:7.70px;height:7.10px;background:linear-gradient(#9a9a9a,#7a7a7a);border:0.5px solid #444"></div>
<div class="a" style="left:814.30px;top:49.80px;width:7.70px;height:7.20px;background:linear-gradient(#9a9a9a,#7a7a7a);border:0.5px solid #444"></div>
<div class="a" style="left:2.00px;top:59.00px;width:821.00px;height:7.90px;background:#3b3b3b"></div>
<div class="t" style="left:15.1px;top:61.1px;font-size:5px;font-weight:bold;color:#c8c8c8;transform:scaleX(0.84);transform-origin:0 0;-webkit-text-stroke:0.12px #c8c8c8">Min:Secs</div>
<div class="t" style="left:127.3px;top:60.6px;font-size:5px;font-weight:bold;color:#ccc">i</div>
<div class="a" style="left:136.20px;top:59.00px;width:0.70px;height:7.90px;background:#2a2a2a"></div>
<div class="t" style="left:138.20px;top:61.2px;font-size:4.6px;font-weight:bold;color:#d4d4d4;-webkit-text-stroke:0.08px #d4d4d4">115:25</div>
<div class="a" style="left:159.24px;top:59.00px;width:0.70px;height:7.90px;background:#2a2a2a"></div>
<div class="t" style="left:161.24px;top:61.2px;font-size:4.6px;font-weight:bold;color:#d4d4d4;-webkit-text-stroke:0.08px #d4d4d4">115:26</div>
<div class="a" style="left:182.27px;top:59.00px;width:0.70px;height:7.90px;background:#2a2a2a"></div>
<div class="t" style="left:184.27px;top:61.2px;font-size:4.6px;font-weight:bold;color:#d4d4d4;-webkit-text-stroke:0.08px #d4d4d4">115:27</div>
<div class="a" style="left:205.31px;top:59.00px;width:0.70px;height:7.90px;background:#2a2a2a"></div>
<div class="t" style="left:207.31px;top:61.2px;font-size:4.6px;font-weight:bold;color:#d4d4d4;-webkit-text-stroke:0.08px #d4d4d4">115:28</div>
<div class="a" style="left:228.34px;top:59.00px;width:0.70px;height:7.90px;background:#2a2a2a"></div>
<div class="t" style="left:230.34px;top:61.2px;font-size:4.6px;font-weight:bold;color:#d4d4d4;-webkit-text-stroke:0.08px #d4d4d4">115:29</div>
<div class="a" style="left:251.38px;top:59.00px;width:0.70px;height:7.90px;background:#2a2a2a"></div>
<div class="t" style="left:253.38px;top:61.2px;font-size:4.6px;font-weight:bold;color:#d4d4d4;-webkit-text-stroke:0.08px #d4d4d4">115:30</div>
<div class="a" style="left:274.42px;top:59.00px;width:0.70px;height:7.90px;background:#2a2a2a"></div>
<div class="t" style="left:276.42px;top:61.2px;font-size:4.6px;font-weight:bold;color:#d4d4d4;-webkit-text-stroke:0.08px #d4d4d4">115:31</div>
<div class="a" style="left:297.45px;top:59.00px;width:0.70px;height:7.90px;background:#2a2a2a"></div>
<div class="t" style="left:299.45px;top:61.2px;font-size:4.6px;font-weight:bold;color:#d4d4d4;-webkit-text-stroke:0.08px #d4d4d4">115:32</div>
<div class="a" style="left:320.49px;top:59.00px;width:0.70px;height:7.90px;background:#2a2a2a"></div>
<div class="t" style="left:322.49px;top:61.2px;font-size:4.6px;font-weight:bold;color:#d4d4d4;-webkit-text-stroke:0.08px #d4d4d4">115:33</div>
<div class="a" style="left:343.52px;top:59.00px;width:0.70px;height:7.90px;background:#2a2a2a"></div>
<div class="t" style="left:345.52px;top:61.2px;font-size:4.6px;font-weight:bold;color:#d4d4d4;-webkit-text-stroke:0.08px #d4d4d4">115:34</div>
<div class="a" style="left:366.56px;top:59.00px;width:0.70px;height:7.90px;background:#2a2a2a"></div>
<div class="t" style="left:368.56px;top:61.2px;font-size:4.6px;font-weight:bold;color:#d4d4d4;-webkit-text-stroke:0.08px #d4d4d4">115:35</div>
<div class="a" style="left:389.60px;top:59.00px;width:0.70px;height:7.90px;background:#2a2a2a"></div>
<div class="t" style="left:391.60px;top:61.2px;font-size:4.6px;font-weight:bold;color:#d4d4d4;-webkit-text-stroke:0.08px #d4d4d4">115:36</div>
<div class="a" style="left:412.63px;top:59.00px;width:0.70px;height:7.90px;background:#2a2a2a"></div>
<div class="t" style="left:414.63px;top:61.2px;font-size:4.6px;font-weight:bold;color:#d4d4d4;-webkit-text-stroke:0.08px #d4d4d4">115:37</div>
<div class="a" style="left:435.67px;top:59.00px;width:0.70px;height:7.90px;background:#2a2a2a"></div>
<div class="t" style="left:437.67px;top:61.2px;font-size:4.6px;font-weight:bold;color:#d4d4d4;-webkit-text-stroke:0.08px #d4d4d4">115:38</div>
<div class="a" style="left:458.70px;top:59.00px;width:0.70px;height:7.90px;background:#2a2a2a"></div>
<div class="t" style="left:460.70px;top:61.2px;font-size:4.6px;font-weight:bold;color:#d4d4d4;-webkit-text-stroke:0.08px #d4d4d4">115:39</div>
<div class="a" style="left:481.74px;top:59.00px;width:0.70px;height:7.90px;background:#2a2a2a"></div>
<div class="t" style="left:483.74px;top:61.2px;font-size:4.6px;font-weight:bold;color:#d4d4d4;-webkit-text-stroke:0.08px #d4d4d4">115:40</div>
<div class="a" style="left:504.78px;top:59.00px;width:0.70px;height:7.90px;background:#2a2a2a"></div>
<div class="t" style="left:506.78px;top:61.2px;font-size:4.6px;font-weight:bold;color:#d4d4d4;-webkit-text-stroke:0.08px #d4d4d4">115:41</div>
<div class="a" style="left:527.81px;top:59.00px;width:0.70px;height:7.90px;background:#2a2a2a"></div>
<div class="t" style="left:529.81px;top:61.2px;font-size:4.6px;font-weight:bold;color:#d4d4d4;-webkit-text-stroke:0.08px #d4d4d4">115:42</div>
<div class="a" style="left:550.85px;top:59.00px;width:0.70px;height:7.90px;background:#2a2a2a"></div>
<div class="t" style="left:552.85px;top:61.2px;font-size:4.6px;font-weight:bold;color:#d4d4d4;-webkit-text-stroke:0.08px #d4d4d4">115:43</div>
<div class="a" style="left:573.88px;top:59.00px;width:0.70px;height:7.90px;background:#2a2a2a"></div>
<div class="t" style="left:575.88px;top:61.2px;font-size:4.6px;font-weight:bold;color:#d4d4d4;-webkit-text-stroke:0.08px #d4d4d4">115:44</div>
<div class="a" style="left:596.92px;top:59.00px;width:0.70px;height:7.90px;background:#2a2a2a"></div>
<div class="t" style="left:598.92px;top:61.2px;font-size:4.6px;font-weight:bold;color:#d4d4d4;-webkit-text-stroke:0.08px #d4d4d4">115:45</div>
<div class="a" style="left:619.96px;top:59.00px;width:0.70px;height:7.90px;background:#2a2a2a"></div>
<div class="t" style="left:621.96px;top:61.2px;font-size:4.6px;font-weight:bold;color:#d4d4d4;-webkit-text-stroke:0.08px #d4d4d4">115:46</div>
<div class="a" style="left:642.99px;top:59.00px;width:0.70px;height:7.90px;background:#2a2a2a"></div>
<div class="t" style="left:644.99px;top:61.2px;font-size:4.6px;font-weight:bold;color:#d4d4d4;-webkit-text-stroke:0.08px #d4d4d4">115:47</div>
<div class="a" style="left:666.03px;top:59.00px;width:0.70px;height:7.90px;background:#2a2a2a"></div>
<div class="t" style="left:668.03px;top:61.2px;font-size:4.6px;font-weight:bold;color:#d4d4d4;-webkit-text-stroke:0.08px #d4d4d4">115:48</div>
<div class="a" style="left:689.06px;top:59.00px;width:0.70px;height:7.90px;background:#2a2a2a"></div>
<div class="t" style="left:691.06px;top:61.2px;font-size:4.6px;font-weight:bold;color:#d4d4d4;-webkit-text-stroke:0.08px #d4d4d4">115:49</div>
<div class="a" style="left:712.10px;top:59.00px;width:0.70px;height:7.90px;background:#2a2a2a"></div>
<div class="t" style="left:714.10px;top:61.2px;font-size:4.6px;font-weight:bold;color:#d4d4d4;-webkit-text-stroke:0.08px #d4d4d4">115:50</div>
<div class="a" style="left:735.14px;top:59.00px;width:0.70px;height:7.90px;background:#2a2a2a"></div>
<div class="t" style="left:737.14px;top:61.2px;font-size:4.6px;font-weight:bold;color:#d4d4d4;-webkit-text-stroke:0.08px #d4d4d4">115:51</div>
<div class="a" style="left:758.17px;top:59.00px;width:0.70px;height:7.90px;background:#2a2a2a"></div>
<div class="t" style="left:760.17px;top:61.2px;font-size:4.6px;font-weight:bold;color:#d4d4d4;-webkit-text-stroke:0.08px #d4d4d4">115:52</div>
<div class="a" style="left:781.21px;top:59.00px;width:0.70px;height:7.90px;background:#2a2a2a"></div>
<div class="t" style="left:783.21px;top:61.2px;font-size:4.6px;font-weight:bold;color:#d4d4d4;-webkit-text-stroke:0.08px #d4d4d4">115:53</div>
<div class="a" style="left:804.24px;top:59.00px;width:0.70px;height:7.90px;background:#2a2a2a"></div>
<div class="t" style="left:806.24px;top:61.2px;font-size:4.6px;font-weight:bold;color:#d4d4d4;-webkit-text-stroke:0.08px #d4d4d4">115:54</div>
<div class="a" style="left:2.00px;top:66.90px;width:821.00px;height:0.30px;background:#2a2a2a"></div>
<div class="a" style="left:2.00px;top:67.20px;width:821.00px;height:6.80px;background:#7c8793"></div>
<div class="a" style="left:3.00px;top:68.20px;width:8.20px;height:4.80px;background:#2e3338;border:0.5px solid #9aa"></div>
<div class="t" style="left:12px;top:68.6px;font-size:3.5px;color:#111">&#9660;</div>
<div class="t" style="left:15.4px;top:68.8px;font-size:5.1px;font-weight:bold;color:#fafafa;transform:scaleX(0.84);transform-origin:0 0;-webkit-text-stroke:0.12px #fafafa">Timecode</div>
<div class="a" style="left:135.00px;top:67.20px;width:0.70px;height:6.80px;background:#4a5460"></div>
<div class="t" style="left:136.60px;top:69.1px;font-size:4.9px;font-weight:bold;color:#f6f6f6;transform:scaleX(0.86);transform-origin:0 0;-webkit-text-stroke:0.12px #f6f6f6">02:52:48:00</div>
<div class="a" style="left:181.07px;top:67.20px;width:0.70px;height:6.80px;background:#4a5460"></div>
<div class="t" style="left:182.67px;top:69.1px;font-size:4.9px;font-weight:bold;color:#f6f6f6;transform:scaleX(0.86);transform-origin:0 0;-webkit-text-stroke:0.12px #f6f6f6">02:52:50:00</div>
<div class="a" style="left:227.14px;top:67.20px;width:0.70px;height:6.80px;background:#4a5460"></div>
<div class="t" style="left:228.74px;top:69.1px;font-size:4.9px;font-weight:bold;color:#f6f6f6;transform:scaleX(0.86);transform-origin:0 0;-webkit-text-stroke:0.12px #f6f6f6">02:52:52:00</div>
<div class="a" style="left:273.22px;top:67.20px;width:0.70px;height:6.80px;background:#4a5460"></div>
<div class="t" style="left:274.82px;top:69.1px;font-size:4.9px;font-weight:bold;color:#f6f6f6;transform:scaleX(0.86);transform-origin:0 0;-webkit-text-stroke:0.12px #f6f6f6">02:52:54:00</div>
<div class="a" style="left:319.29px;top:67.20px;width:0.70px;height:6.80px;background:#4a5460"></div>
<div class="t" style="left:320.89px;top:69.1px;font-size:4.9px;font-weight:bold;color:#f6f6f6;transform:scaleX(0.86);transform-origin:0 0;-webkit-text-stroke:0.12px #f6f6f6">02:52:56:00</div>
<div class="a" style="left:365.36px;top:67.20px;width:0.70px;height:6.80px;background:#4a5460"></div>
<div class="t" style="left:366.96px;top:69.1px;font-size:4.9px;font-weight:bold;color:#f6f6f6;transform:scaleX(0.86);transform-origin:0 0;-webkit-text-stroke:0.12px #f6f6f6">02:52:58:00</div>
<div class="a" style="left:411.43px;top:67.20px;width:0.70px;height:6.80px;background:#4a5460"></div>
<div class="t" style="left:413.03px;top:69.1px;font-size:4.9px;font-weight:bold;color:#f6f6f6;transform:scaleX(0.86);transform-origin:0 0;-webkit-text-stroke:0.12px #f6f6f6">02:53:00:00</div>
<div class="a" style="left:457.50px;top:67.20px;width:0.70px;height:6.80px;background:#4a5460"></div>
<div class="t" style="left:459.10px;top:69.1px;font-size:4.9px;font-weight:bold;color:#f6f6f6;transform:scaleX(0.86);transform-origin:0 0;-webkit-text-stroke:0.12px #f6f6f6">02:53:02:00</div>
<div class="a" style="left:503.58px;top:67.20px;width:0.70px;height:6.80px;background:#4a5460"></div>
<div class="t" style="left:505.18px;top:69.1px;font-size:4.9px;font-weight:bold;color:#f6f6f6;transform:scaleX(0.86);transform-origin:0 0;-webkit-text-stroke:0.12px #f6f6f6">02:53:04:00</div>
<div class="a" style="left:549.65px;top:67.20px;width:0.70px;height:6.80px;background:#4a5460"></div>
<div class="t" style="left:551.25px;top:69.1px;font-size:4.9px;font-weight:bold;color:#f6f6f6;transform:scaleX(0.86);transform-origin:0 0;-webkit-text-stroke:0.12px #f6f6f6">02:53:06:00</div>
<div class="a" style="left:595.72px;top:67.20px;width:0.70px;height:6.80px;background:#4a5460"></div>
<div class="t" style="left:597.32px;top:69.1px;font-size:4.9px;font-weight:bold;color:#f6f6f6;transform:scaleX(0.86);transform-origin:0 0;-webkit-text-stroke:0.12px #f6f6f6">02:53:08:00</div>
<div class="a" style="left:641.79px;top:67.20px;width:0.70px;height:6.80px;background:#4a5460"></div>
<div class="t" style="left:643.39px;top:69.1px;font-size:4.9px;font-weight:bold;color:#f6f6f6;transform:scaleX(0.86);transform-origin:0 0;-webkit-text-stroke:0.12px #f6f6f6">02:53:10:00</div>
<div class="a" style="left:687.86px;top:67.20px;width:0.70px;height:6.80px;background:#4a5460"></div>
<div class="t" style="left:689.46px;top:69.1px;font-size:4.9px;font-weight:bold;color:#f6f6f6;transform:scaleX(0.86);transform-origin:0 0;-webkit-text-stroke:0.12px #f6f6f6">02:53:12:00</div>
<div class="a" style="left:733.94px;top:67.20px;width:0.70px;height:6.80px;background:#4a5460"></div>
<div class="t" style="left:735.54px;top:69.1px;font-size:4.9px;font-weight:bold;color:#f6f6f6;transform:scaleX(0.86);transform-origin:0 0;-webkit-text-stroke:0.12px #f6f6f6">02:53:14:00</div>
<div class="a" style="left:780.01px;top:67.20px;width:0.70px;height:6.80px;background:#4a5460"></div>
<div class="t" style="left:781.61px;top:69.1px;font-size:4.9px;font-weight:bold;color:#f6f6f6;transform:scaleX(0.86);transform-origin:0 0;-webkit-text-stroke:0.12px #f6f6f6">02:53:16:00</div>
<svg class="a" style="left:194px;top:59px" width="9" height="16"><path d="M4.5 0v10" stroke="#e8e8e8" stroke-width="0.5"/><path d="M2.6 8.5 q1.9 -1.5 3.8 0 v3 l-1.9 3 l-1.9 -3z" fill="#3a88e0"/><path d="M4.5 9v5" stroke="#aad0ff" stroke-width="0.4"/></svg>
<div class="a" style="left:2.00px;top:74.00px;width:821.00px;height:0.30px;background:#2a2a2a"></div>
<div class="a" style="left:128.00px;top:74.00px;width:695.00px;height:22.20px;background:#454a4e"></div>
<div class="a" style="left:2.00px;top:74.30px;width:126.00px;height:7.10px;background:#3c3c3c"></div>
<div class="a" style="left:128.00px;top:74.30px;width:695.00px;height:7.10px;background:#9cb85c"></div>
<div class="t" style="left:15.1px;top:75.90px;font-size:5px;font-weight:bold;color:#c8c8c8;transform:scaleX(0.85);transform-origin:0 0;-webkit-text-stroke:0.12px #c8c8c8">Tempo</div>
<div class="t" style="left:121.6px;top:74.90px;font-size:6px;font-weight:bold;color:#e8e8e8">+</div>
<div class="a" style="left:128.00px;top:80.80px;width:695.00px;height:0.60px;background:rgba(0,0,0,0.18)"></div>
<div class="a" style="left:2.00px;top:81.40px;width:126.00px;height:0.20px;background:#2a2a2a"></div>
<div class="a" style="left:2.00px;top:81.60px;width:126.00px;height:6.90px;background:#3c3c3c"></div>
<div class="a" style="left:128.00px;top:81.60px;width:695.00px;height:6.90px;background:#6b93c0"></div>
<div class="t" style="left:15.1px;top:83.20px;font-size:5px;font-weight:bold;color:#c8c8c8;transform:scaleX(0.85);transform-origin:0 0;-webkit-text-stroke:0.12px #c8c8c8">Meter</div>
<div class="t" style="left:121.6px;top:82.20px;font-size:6px;font-weight:bold;color:#e8e8e8">+</div>
<div class="a" style="left:128.00px;top:87.90px;width:695.00px;height:0.60px;background:rgba(0,0,0,0.18)"></div>
<div class="a" style="left:2.00px;top:88.50px;width:126.00px;height:0.20px;background:#2a2a2a"></div>
<div class="a" style="left:2.00px;top:88.70px;width:126.00px;height:7.30px;background:#3c3c3c"></div>
<div class="a" style="left:128.00px;top:88.70px;width:695.00px;height:7.30px;background:#a7a7a7"></div>
<div class="t" style="left:15.1px;top:90.30px;font-size:5px;font-weight:bold;color:#c8c8c8;transform:scaleX(0.85);transform-origin:0 0;-webkit-text-stroke:0.12px #c8c8c8">Markers</div>
<div class="t" style="left:121.6px;top:89.30px;font-size:6px;font-weight:bold;color:#e8e8e8">+</div>
<div class="a" style="left:128.00px;top:95.40px;width:695.00px;height:0.60px;background:rgba(0,0,0,0.18)"></div>
<div class="a" style="left:2.00px;top:96.00px;width:126.00px;height:0.20px;background:#2a2a2a"></div>
<div class="t" style="left:6px;top:75.6px;font-size:4px;color:#bbb">&#9654;</div>
<div class="t" style="left:433.8px;top:82.4px;font-size:5px;font-weight:bold;color:#111;transform:scaleX(0.9);transform-origin:0 0">Default: 4/4</div>
<div class="a" style="left:816.30px;top:59.00px;width:6.70px;height:7.90px;background:#3b3b3b"></div>
<svg class="a" style="left:816px;top:59.5px" width="7" height="7"><path d="M1.2 0.8h4.6M3.5 1.8v4.4M1.8 4.4l1.7 1.8l1.7-1.8" stroke="#e0e0e0" stroke-width="0.8" fill="none"/></svg>
<div class="a" style="left:2.00px;top:96.20px;width:83.00px;height:6.55px;background:#3b3b3b"></div>
<div class="a" style="left:85.30px;top:96.20px;width:36.20px;height:6.55px;background:#464646"></div>
<div class="a" style="left:3.20px;top:97.50px;width:6.60px;height:4.10px;background:linear-gradient(90deg,#fff 40%,#aaa)"></div>
<div class="t" style="left:10px;top:97.8px;font-size:3.6px;color:#eee">&#9660;</div>
<svg class="a" style="left:74px;top:97.4px" width="5" height="5"><circle cx="2.4" cy="2.2" r="1.9" fill="#3a78d8"/><path d="M2.4 1.5v1.8" stroke="#fff" stroke-width="0.6"/></svg>
<div class="t" style="left:80.2px;top:97.6px;font-size:3.8px;color:#eee">&#9660;</div>
<div class="t" style="left:98.6px;top:97.6px;font-size:5px;font-weight:bold;color:#d8d8d8;letter-spacing:0.5px">I/O</div>
<div class="a" style="left:122.00px;top:96.20px;width:695.00px;height:6.55px;background:linear-gradient(#a6a9ac 0,#a2a5a8 65%,#8c8f92 80%,#878a8d)"></div>
<div class="a" style="left:816.70px;top:96.50px;width:6.00px;height:6.70px;background:#d8b020;border:0.5px solid #604a00"></div>
<svg class="a" style="left:817px;top:97px" width="6" height="6"><rect x="3" y="0.5" width="2.5" height="2.5" fill="#111"/><rect x="0.5" y="3" width="2.5" height="2.5" fill="#111"/></svg>
<div class="a" style="left:740.50px;top:60.00px;width:0.80px;height:43.20px;background:#d84838;opacity:0.85"></div>
<div class="a" style="left:121.50px;top:102.75px;width:6.50px;height:351.50px;background:#a9abae;box-shadow:inset 1px 0 0 #7a7c7e"></div>
<div class="a" style="left:128.00px;top:102.75px;width:689.00px;height:351.50px;background:#b5b6b9"></div>
<svg class="a" style="left:128px;top:96.2px" width="689" height="360"><path d="M1.74 0v360M4.04 0v360M6.35 0v360M8.65 0v360M10.95 0v360M13.26 0v360M15.56 0v360M17.86 0v360M20.16 0v360M22.47 0v360M24.77 0v360M27.07 0v360M29.38 0v360M31.68 0v360M33.98 0v360M36.29 0v360M38.59 0v360M40.89 0v360M43.19 0v360M45.50 0v360M47.80 0v360M50.10 0v360M52.41 0v360M54.71 0v360M57.01 0v360M59.32 0v360M61.62 0v360M63.92 0v360M66.22 0v360M68.53 0v360M70.83 0v360M73.13 0v360M75.44 0v360M77.74 0v360M80.04 0v360M82.35 0v360M84.65 0v360M86.95 0v360M89.25 0v360M91.56 0v360M93.86 0v360M96.16 0v360M98.47 0v360M100.77 0v360M103.07 0v360M105.38 0v360M107.68 0v360M109.98 0v360M112.28 0v360M114.59 0v360M116.89 0v360M119.19 0v360M121.50 0v360M123.80 0v360M126.10 0v360M128.41 0v360M130.71 0v360M133.01 0v360M135.31 0v360M137.62 0v360M139.92 0v360M142.22 0v360M144.53 0v360M146.83 0v360M149.13 0v360M151.44 0v360M153.74 0v360M156.04 0v360M158.34 0v360M160.65 0v360M162.95 0v360M165.25 0v360M167.56 0v360M169.86 0v360M172.16 0v360M174.47 0v360M176.77 0v360M179.07 0v360M181.37 0v360M183.68 0v360M185.98 0v360M188.28 0v360M190.59 0v360M192.89 0v360M195.19 0v360M197.50 0v360M199.80 0v360M202.10 0v360M204.40 0v360M206.71 0v360M209.01 0v360M211.31 0v360M213.62 0v360M215.92 0v360M218.22 0v360M220.53 0v360M222.83 0v360M225.13 0v360M227.43 0v360M229.74 0v360M232.04 0v360M234.34 0v360M236.65 0v360M238.95 0v360M241.25 0v360M243.56 0v360M245.86 0v360M248.16 0v360M250.46 0v360M252.77 0v360M255.07 0v360M257.37 0v360M259.68 0v360M261.98 0v360M264.28 0v360M266.59 0v360M268.89 0v360M271.19 0v360M273.49 0v360M275.80 0v360M278.10 0v360M280.40 0v360M282.71 0v360M285.01 0v360M287.31 0v360M289.62 0v360M291.92 0v360M294.22 0v360M296.52 0v360M298.83 0v360M301.13 0v360M303.43 0v360M305.74 0v360M308.04 0v360M310.34 0v360M312.65 0v360M314.95 0v360M317.25 0v360M319.55 0v360M321.86 0v360M324.16 0v360M326.46 0v360M328.77 0v360M331.07 0v360M333.37 0v360M335.68 0v360M337.98 0v360M340.28 0v360M342.58 0v360M344.89 0v360M347.19 0v360M349.49 0v360M351.80 0v360M354.10 0v360M356.40 0v360M358.71 0v360M361.01 0v360M363.31 0v360M365.61 0v360M367.92 0v360M370.22 0v360M372.52 0v360M374.83 0v360M377.13 0v360M379.43 0v360M381.74 0v360M384.04 0v360M386.34 0v360M388.64 0v360M390.95 0v360M393.25 0v360M395.55 0v360M397.86 0v360M400.16 0v360M402.46 0v360M404.77 0v360M407.07 0v360M409.37 0v360M411.67 0v360M413.98 0v360M416.28 0v360M418.58 0v360M420.89 0v360M423.19 0v360M425.49 0v360M427.80 0v360M430.10 0v360M432.40 0v360M434.70 0v360M437.01 0v360M439.31 0v360M441.61 0v360M443.92 0v360M446.22 0v360M448.52 0v360M450.83 0v360M453.13 0v360M455.43 0v360M457.73 0v360M460.04 0v360M462.34 0v360M464.64 0v360M466.95 0v360M469.25 0v360M471.55 0v360M473.86 0v360M476.16 0v360M478.46 0v360M480.76 0v360M483.07 0v360M485.37 0v360M487.67 0v360M489.98 0v360M492.28 0v360M494.58 0v360M496.89 0v360M499.19 0v360M501.49 0v360M503.79 0v360M506.10 0v360M508.40 0v360M510.70 0v360M513.01 0v360M515.31 0v360M517.61 0v360M519.92 0v360M522.22 0v360M524.52 0v360M526.82 0v360M529.13 0v360M531.43 0v360M533.73 0v360M536.04 0v360M538.34 0v360M540.64 0v360M542.95 0v360M545.25 0v360M547.55 0v360M549.85 0v360M552.16 0v360M554.46 0v360M556.76 0v360M559.07 0v360M561.37 0v360M563.67 0v360M565.98 0v360M568.28 0v360M570.58 0v360M572.88 0v360M575.19 0v360M577.49 0v360M579.79 0v360M582.10 0v360M584.40 0v360M586.70 0v360M589.01 0v360M591.31 0v360M593.61 0v360M595.91 0v360M598.22 0v360M600.52 0v360M602.82 0v360M605.13 0v360M607.43 0v360M609.73 0v360M612.04 0v360M614.34 0v360M616.64 0v360M618.94 0v360M621.25 0v360M623.55 0v360M625.85 0v360M628.16 0v360M630.46 0v360M632.76 0v360M635.07 0v360M637.37 0v360M639.67 0v360M641.97 0v360M644.28 0v360M646.58 0v360M648.88 0v360M651.19 0v360M653.49 0v360M655.79 0v360M658.10 0v360M660.40 0v360M662.70 0v360M665.00 0v360M667.31 0v360M669.61 0v360M671.91 0v360M674.22 0v360M676.52 0v360M678.82 0v360M681.13 0v360M683.43 0v360M685.73 0v360M688.03 0v360" stroke="#000" stroke-width="0.9" opacity="0.04"/></svg>
<div class="a" style="left:122.00px;top:102.25px;width:695.00px;height:1.00px;background:#909295"></div>
<div class="a" style="left:2.00px;top:102.25px;width:119.50px;height:1.00px;background:#222b2e"></div>
<div class="a" style="left:122.00px;top:120.75px;width:695.00px;height:1.00px;background:#909295"></div>
<div class="a" style="left:2.00px;top:120.75px;width:119.50px;height:1.00px;background:#222b2e"></div>
<div class="a" style="left:122.00px;top:139.25px;width:695.00px;height:1.00px;background:#909295"></div>
<div class="a" style="left:2.00px;top:139.25px;width:119.50px;height:1.00px;background:#222b2e"></div>
<div class="a" style="left:122.00px;top:157.75px;width:695.00px;height:1.00px;background:#909295"></div>
<div class="a" style="left:2.00px;top:157.75px;width:119.50px;height:1.00px;background:#222b2e"></div>
<div class="a" style="left:122.00px;top:176.25px;width:695.00px;height:1.00px;background:#909295"></div>
<div class="a" style="left:2.00px;top:176.25px;width:119.50px;height:1.00px;background:#222b2e"></div>
<div class="a" style="left:122.00px;top:194.75px;width:695.00px;height:1.00px;background:#909295"></div>
<div class="a" style="left:2.00px;top:194.75px;width:119.50px;height:1.00px;background:#222b2e"></div>
<div class="a" style="left:122.00px;top:213.25px;width:695.00px;height:1.00px;background:#909295"></div>
<div class="a" style="left:2.00px;top:213.25px;width:119.50px;height:1.00px;background:#222b2e"></div>
<div class="a" style="left:122.00px;top:231.75px;width:695.00px;height:1.00px;background:#909295"></div>
<div class="a" style="left:2.00px;top:231.75px;width:119.50px;height:1.00px;background:#222b2e"></div>
<div class="a" style="left:122.00px;top:250.25px;width:695.00px;height:1.00px;background:#909295"></div>
<div class="a" style="left:2.00px;top:250.25px;width:119.50px;height:1.00px;background:#222b2e"></div>
<div class="a" style="left:122.00px;top:268.75px;width:695.00px;height:1.00px;background:#909295"></div>
<div class="a" style="left:2.00px;top:268.75px;width:119.50px;height:1.00px;background:#222b2e"></div>
<div class="a" style="left:122.00px;top:287.25px;width:695.00px;height:1.00px;background:#909295"></div>
<div class="a" style="left:2.00px;top:287.25px;width:119.50px;height:1.00px;background:#222b2e"></div>
<div class="a" style="left:122.00px;top:305.75px;width:695.00px;height:1.00px;background:#909295"></div>
<div class="a" style="left:2.00px;top:305.75px;width:119.50px;height:1.00px;background:#222b2e"></div>
<div class="a" style="left:122.00px;top:324.25px;width:695.00px;height:1.00px;background:#909295"></div>
<div class="a" style="left:2.00px;top:324.25px;width:119.50px;height:1.00px;background:#222b2e"></div>
<div class="a" style="left:122.00px;top:342.75px;width:695.00px;height:1.00px;background:#909295"></div>
<div class="a" style="left:2.00px;top:342.75px;width:119.50px;height:1.00px;background:#222b2e"></div>
<div class="a" style="left:122.00px;top:361.25px;width:695.00px;height:1.00px;background:#909295"></div>
<div class="a" style="left:2.00px;top:361.25px;width:119.50px;height:1.00px;background:#222b2e"></div>
<div class="a" style="left:122.00px;top:379.75px;width:695.00px;height:1.00px;background:#909295"></div>
<div class="a" style="left:2.00px;top:379.75px;width:119.50px;height:1.00px;background:#222b2e"></div>
<div class="a" style="left:122.00px;top:398.25px;width:695.00px;height:1.00px;background:#909295"></div>
<div class="a" style="left:2.00px;top:398.25px;width:119.50px;height:1.00px;background:#222b2e"></div>
<div class="a" style="left:122.00px;top:416.75px;width:695.00px;height:1.00px;background:#909295"></div>
<div class="a" style="left:2.00px;top:416.75px;width:119.50px;height:1.00px;background:#222b2e"></div>
<div class="a" style="left:122.00px;top:435.25px;width:695.00px;height:1.00px;background:#909295"></div>
<div class="a" style="left:2.00px;top:435.25px;width:119.50px;height:1.00px;background:#222b2e"></div>
<div class="a" style="left:122.00px;top:453.75px;width:695.00px;height:1.00px;background:#909295"></div>
<div class="a" style="left:2.00px;top:453.75px;width:119.50px;height:1.00px;background:#222b2e"></div>
<div class="a" style="left:2.00px;top:103.65px;width:119.50px;height:17.10px;background:#334748"></div>
<div class="a" style="left:8.20px;top:103.65px;width:48.40px;height:17.10px;background:#464a4c"></div>
<div class="a" style="left:56.60px;top:103.65px;width:5.80px;height:17.10px;background:#1e2426"></div>
<div class="a" style="left:2.00px;top:103.65px;width:6.20px;height:17.10px;background:#2a6e77"></div>
<svg class="a" style="left:2px;top:103.75px" width="6.2" height="17" viewBox="0 0 6.2 17"><circle cx="3.1" cy="3.2" r="1.7" fill="#2e3a3c" stroke="#b8c8ca" stroke-width="0.9"/><circle cx="3.1" cy="14.3" r="1.8" fill="#e8eeee"/><path d="M2 15.4 L4.2 13.2" stroke="#333" stroke-width="0.7"/></svg>
<div class="a" style="left:8.60px;top:103.85px;width:42.50px;height:7.20px;background:#b8b0b0;border:0.8px solid #4ed6d8"></div>
<div class="t" style="left:8.6px;width:42.5px;text-align:center;top:105.05px;font-size:5.95px;font-weight:bold;color:#141414">nFXa 1m</div>
<div class="a" style="left:51.40px;top:103.85px;width:4.60px;height:7.20px;background:linear-gradient(#b0b0b0,#8e8e8e)"></div>
<div class="t" style="left:52.3px;top:105.75px;font-size:3.2px;color:#333">&#9660;</div>
<div class="a" style="left:9.80px;top:112.85px;width:19.10px;height:5.90px;background:linear-gradient(#3a3a3a,#2e2e2e);border-radius:1.5px;border:0.5px solid #5a5a5a"></div>
<svg class="a" style="left:9.8px;top:112.85px" width="19.1" height="5.9" viewBox="0 0 19.1 5.9"><circle cx="2.7" cy="2.95" r="2.2" fill="#5c2222"/><path d="M1.5 2.95h2.4M2.7 1.75v2.4" stroke="#f0f0f0" stroke-width="0.8"/><path d="M7 1.2v3.5" stroke="#c0c0c0" stroke-width="0.9"/></svg>
<div class="t" style="left:19px;top:113.65px;font-size:5px;font-weight:bold;color:#d0d0d0;transform:scaleX(0.9);transform-origin:0 0;-webkit-text-stroke:0.1px #d0d0d0">S</div>
<div class="t" style="left:23.3px;top:113.65px;font-size:5px;font-weight:bold;color:#d0d0d0;transform:scaleX(0.9);transform-origin:0 0;-webkit-text-stroke:0.1px #d0d0d0">M</div>
<div class="a" style="left:30.80px;top:112.85px;width:12.40px;height:5.90px;background:linear-gradient(#d8d8d8,#b0b0b0);border-radius:1px"></div>
<div class="t" style="left:32.2px;top:113.85px;font-size:4.8px;font-weight:bold;color:#1a1a1a;transform:scaleX(0.85);transform-origin:0 0;-webkit-text-stroke:0.1px #1a1a1a">wave</div>
<div class="a" style="left:44.90px;top:112.85px;width:9.20px;height:5.90px;background:linear-gradient(#d0d0d0,#a8a8a8);border-radius:1px"></div>
<div class="t" style="left:45.7px;top:113.85px;font-size:4.8px;font-weight:bold;color:#2a8a1c;transform:scaleX(0.85);transform-origin:0 0;-webkit-text-stroke:0.1px #2a8a1c">read</div>
<div class="a" style="left:57.10px;top:103.95px;width:4.90px;height:16.00px;background:#161a14"></div>
<div class="a" style="left:57.50px;top:104.25px;width:4.10px;height:15.40px;background:linear-gradient(#3a0c08 0,#3a0c08 14%,#5a4a16 20%,#5e5a18 45%,#4a6216 62%,#42601a 100%)"></div>
<div class="a" style="left:86.80px;top:105.65px;width:15.00px;height:6.10px;background:linear-gradient(#e4e4e4,#bcbcbc);border-radius:1px"></div>
<div class="t" style="left:86.8px;width:15px;text-align:center;top:106.65px;font-size:4.8px;font-weight:bold;color:#1a1a1a;transform:scaleX(0.8);transform-origin:50% 0;-webkit-text-stroke:0.1px #1a1a1a">noinput</div>
<div class="a" style="left:103.20px;top:105.65px;width:16.80px;height:6.10px;background:linear-gradient(#e0e0e0,#b8b8b8);border-radius:1px"></div>
<div class="a" style="left:116.20px;top:106.05px;width:0.40px;height:5.30px;background:#999"></div>
<div class="t" style="left:104.4px;top:106.65px;font-size:4.8px;font-weight:bold;color:#1a1a1a;transform:scaleX(0.88);transform-origin:0 0;-webkit-text-stroke:0.1px #1a1a1a">nFxA</div>
<div class="t" style="left:117.2px;top:107.05px;font-size:3.2px;color:#666">&#8597;</div>
<div class="a" style="left:86.80px;top:113.15px;width:25.00px;height:6.50px;background:#0a0c08;border-radius:1px"></div>
<div class="t" style="left:90.3px;top:114.65px;font-size:4.8px;font-weight:bold;color:#a6e024">0.0</div>
<div class="t" style="left:99.3px;top:114.65px;font-size:4.8px;font-weight:bold;color:#a6e024">&gt;</div>
<div class="t" style="left:103.8px;top:114.65px;font-size:4.8px;font-weight:bold;color:#a6e024">0</div>
<div class="t" style="left:108.3px;top:114.65px;font-size:4.8px;font-weight:bold;color:#a6e024">&lt;</div>
<div class="a" style="left:114.00px;top:113.15px;width:5.80px;height:6.50px;background:#0a0c08;border-radius:1px"></div>
<div class="a" style="left:116.3px;top:113.35px;width:1.2px;height:1.2px;background:#90e020"></div>
<div class="a" style="left:125.80px;top:105.75px;width:1.40px;height:0.40px;background:#8a8c8e"></div>
<div class="a" style="left:125.80px;top:108.75px;width:1.40px;height:0.40px;background:#8a8c8e"></div>
<div class="a" style="left:125.80px;top:111.75px;width:1.40px;height:0.40px;background:#8a8c8e"></div>
<div class="a" style="left:125.80px;top:114.75px;width:1.40px;height:0.40px;background:#8a8c8e"></div>
<div class="a" style="left:125.80px;top:117.75px;width:1.40px;height:0.40px;background:#8a8c8e"></div>
<div class="a" style="left:2.00px;top:122.15px;width:119.50px;height:17.10px;background:#334748"></div>
<div class="a" style="left:8.20px;top:122.15px;width:48.40px;height:17.10px;background:#464a4c"></div>
<div class="a" style="left:56.60px;top:122.15px;width:5.80px;height:17.10px;background:#1e2426"></div>
<div class="a" style="left:2.00px;top:122.15px;width:6.20px;height:17.10px;background:#2a6e77"></div>
<svg class="a" style="left:2px;top:122.25px" width="6.2" height="17" viewBox="0 0 6.2 17"><circle cx="3.1" cy="3.2" r="1.7" fill="#2e3a3c" stroke="#b8c8ca" stroke-width="0.9"/><circle cx="3.1" cy="14.3" r="1.8" fill="#e8eeee"/><path d="M2 15.4 L4.2 13.2" stroke="#333" stroke-width="0.7"/></svg>
<div class="a" style="left:8.60px;top:122.35px;width:42.50px;height:7.20px;background:#b8b0b0;border:0.8px solid #4ed6d8"></div>
<div class="t" style="left:8.6px;width:42.5px;text-align:center;top:123.55px;font-size:5.95px;font-weight:bold;color:#141414">nFXa 2m</div>
<div class="a" style="left:51.40px;top:122.35px;width:4.60px;height:7.20px;background:linear-gradient(#b0b0b0,#8e8e8e)"></div>
<div class="t" style="left:52.3px;top:124.25px;font-size:3.2px;color:#333">&#9660;</div>
<div class="a" style="left:9.80px;top:131.35px;width:19.10px;height:5.90px;background:linear-gradient(#3a3a3a,#2e2e2e);border-radius:1.5px;border:0.5px solid #5a5a5a"></div>
<svg class="a" style="left:9.8px;top:131.35px" width="19.1" height="5.9" viewBox="0 0 19.1 5.9"><circle cx="2.7" cy="2.95" r="2.2" fill="#5c2222"/><path d="M1.5 2.95h2.4M2.7 1.75v2.4" stroke="#f0f0f0" stroke-width="0.8"/><path d="M7 1.2v3.5" stroke="#c0c0c0" stroke-width="0.9"/></svg>
<div class="t" style="left:19px;top:132.15px;font-size:5px;font-weight:bold;color:#d0d0d0;transform:scaleX(0.9);transform-origin:0 0;-webkit-text-stroke:0.1px #d0d0d0">S</div>
<div class="t" style="left:23.3px;top:132.15px;font-size:5px;font-weight:bold;color:#d0d0d0;transform:scaleX(0.9);transform-origin:0 0;-webkit-text-stroke:0.1px #d0d0d0">M</div>
<div class="a" style="left:30.80px;top:131.35px;width:12.40px;height:5.90px;background:linear-gradient(#d8d8d8,#b0b0b0);border-radius:1px"></div>
<div class="t" style="left:32.2px;top:132.35px;font-size:4.8px;font-weight:bold;color:#1a1a1a;transform:scaleX(0.85);transform-origin:0 0;-webkit-text-stroke:0.1px #1a1a1a">wave</div>
<div class="a" style="left:44.90px;top:131.35px;width:9.20px;height:5.90px;background:linear-gradient(#d0d0d0,#a8a8a8);border-radius:1px"></div>
<div class="t" style="left:45.7px;top:132.35px;font-size:4.8px;font-weight:bold;color:#2a8a1c;transform:scaleX(0.85);transform-origin:0 0;-webkit-text-stroke:0.1px #2a8a1c">read</div>
<div class="a" style="left:57.10px;top:122.45px;width:4.90px;height:16.00px;background:#161a14"></div>
<div class="a" style="left:57.50px;top:122.75px;width:4.10px;height:15.40px;background:linear-gradient(#3a0c08 0,#3a0c08 14%,#5a4a16 20%,#5e5a18 45%,#4a6216 62%,#42601a 100%)"></div>
<div class="a" style="left:86.80px;top:124.15px;width:15.00px;height:6.10px;background:linear-gradient(#e4e4e4,#bcbcbc);border-radius:1px"></div>
<div class="t" style="left:86.8px;width:15px;text-align:center;top:125.15px;font-size:4.8px;font-weight:bold;color:#1a1a1a;transform:scaleX(0.8);transform-origin:50% 0;-webkit-text-stroke:0.1px #1a1a1a">noinput</div>
<div class="a" style="left:103.20px;top:124.15px;width:16.80px;height:6.10px;background:linear-gradient(#e0e0e0,#b8b8b8);border-radius:1px"></div>
<div class="a" style="left:116.20px;top:124.55px;width:0.40px;height:5.30px;background:#999"></div>
<div class="t" style="left:104.4px;top:125.15px;font-size:4.8px;font-weight:bold;color:#1a1a1a;transform:scaleX(0.88);transform-origin:0 0;-webkit-text-stroke:0.1px #1a1a1a">nFxA</div>
<div class="t" style="left:117.2px;top:125.55px;font-size:3.2px;color:#666">&#8597;</div>
<div class="a" style="left:86.80px;top:131.65px;width:25.00px;height:6.50px;background:#0a0c08;border-radius:1px"></div>
<div class="t" style="left:90.3px;top:133.15px;font-size:4.8px;font-weight:bold;color:#a6e024">0.0</div>
<div class="t" style="left:99.3px;top:133.15px;font-size:4.8px;font-weight:bold;color:#a6e024">&gt;</div>
<div class="t" style="left:103.8px;top:133.15px;font-size:4.8px;font-weight:bold;color:#a6e024">0</div>
<div class="t" style="left:108.3px;top:133.15px;font-size:4.8px;font-weight:bold;color:#a6e024">&lt;</div>
<div class="a" style="left:114.00px;top:131.65px;width:5.80px;height:6.50px;background:#0a0c08;border-radius:1px"></div>
<div class="a" style="left:116.3px;top:131.85px;width:1.2px;height:1.2px;background:#90e020"></div>
<div class="a" style="left:125.80px;top:124.25px;width:1.40px;height:0.40px;background:#8a8c8e"></div>
<div class="a" style="left:125.80px;top:127.25px;width:1.40px;height:0.40px;background:#8a8c8e"></div>
<div class="a" style="left:125.80px;top:130.25px;width:1.40px;height:0.40px;background:#8a8c8e"></div>
<div class="a" style="left:125.80px;top:133.25px;width:1.40px;height:0.40px;background:#8a8c8e"></div>
<div class="a" style="left:125.80px;top:136.25px;width:1.40px;height:0.40px;background:#8a8c8e"></div>
<div class="a" style="left:2.00px;top:140.65px;width:119.50px;height:17.10px;background:#334748"></div>
<div class="a" style="left:8.20px;top:140.65px;width:48.40px;height:17.10px;background:#464a4c"></div>
<div class="a" style="left:56.60px;top:140.65px;width:5.80px;height:17.10px;background:#1e2426"></div>
<div class="a" style="left:2.00px;top:140.65px;width:6.20px;height:17.10px;background:#2a6e77"></div>
<svg class="a" style="left:2px;top:140.75px" width="6.2" height="17" viewBox="0 0 6.2 17"><circle cx="3.1" cy="3.2" r="1.7" fill="#2e3a3c" stroke="#b8c8ca" stroke-width="0.9"/><circle cx="3.1" cy="14.3" r="1.8" fill="#e8eeee"/><path d="M2 15.4 L4.2 13.2" stroke="#333" stroke-width="0.7"/></svg>
<div class="a" style="left:8.60px;top:140.85px;width:42.50px;height:7.20px;background:#b8b0b0;border:0.8px solid #4ed6d8"></div>
<div class="t" style="left:8.6px;width:42.5px;text-align:center;top:142.05px;font-size:5.95px;font-weight:bold;color:#141414">nFXa 3m</div>
<div class="a" style="left:51.40px;top:140.85px;width:4.60px;height:7.20px;background:linear-gradient(#b0b0b0,#8e8e8e)"></div>
<div class="t" style="left:52.3px;top:142.75px;font-size:3.2px;color:#333">&#9660;</div>
<div class="a" style="left:9.80px;top:149.85px;width:19.10px;height:5.90px;background:linear-gradient(#3a3a3a,#2e2e2e);border-radius:1.5px;border:0.5px solid #5a5a5a"></div>
<svg class="a" style="left:9.8px;top:149.85px" width="19.1" height="5.9" viewBox="0 0 19.1 5.9"><circle cx="2.7" cy="2.95" r="2.2" fill="#5c2222"/><path d="M1.5 2.95h2.4M2.7 1.75v2.4" stroke="#f0f0f0" stroke-width="0.8"/><path d="M7 1.2v3.5" stroke="#c0c0c0" stroke-width="0.9"/></svg>
<div class="t" style="left:19px;top:150.65px;font-size:5px;font-weight:bold;color:#d0d0d0;transform:scaleX(0.9);transform-origin:0 0;-webkit-text-stroke:0.1px #d0d0d0">S</div>
<div class="t" style="left:23.3px;top:150.65px;font-size:5px;font-weight:bold;color:#d0d0d0;transform:scaleX(0.9);transform-origin:0 0;-webkit-text-stroke:0.1px #d0d0d0">M</div>
<div class="a" style="left:30.80px;top:149.85px;width:12.40px;height:5.90px;background:linear-gradient(#d8d8d8,#b0b0b0);border-radius:1px"></div>
<div class="t" style="left:32.2px;top:150.85px;font-size:4.8px;font-weight:bold;color:#1a1a1a;transform:scaleX(0.85);transform-origin:0 0;-webkit-text-stroke:0.1px #1a1a1a">wave</div>
<div class="a" style="left:44.90px;top:149.85px;width:9.20px;height:5.90px;background:linear-gradient(#d0d0d0,#a8a8a8);border-radius:1px"></div>
<div class="t" style="left:45.7px;top:150.85px;font-size:4.8px;font-weight:bold;color:#2a8a1c;transform:scaleX(0.85);transform-origin:0 0;-webkit-text-stroke:0.1px #2a8a1c">read</div>
<div class="a" style="left:57.10px;top:140.95px;width:4.90px;height:16.00px;background:#161a14"></div>
<div class="a" style="left:57.50px;top:141.25px;width:4.10px;height:15.40px;background:linear-gradient(#3a0c08 0,#3a0c08 14%,#5a4a16 20%,#5e5a18 45%,#4a6216 62%,#42601a 100%)"></div>
<div class="a" style="left:86.80px;top:142.65px;width:15.00px;height:6.10px;background:linear-gradient(#e4e4e4,#bcbcbc);border-radius:1px"></div>
<div class="t" style="left:86.8px;width:15px;text-align:center;top:143.65px;font-size:4.8px;font-weight:bold;color:#1a1a1a;transform:scaleX(0.8);transform-origin:50% 0;-webkit-text-stroke:0.1px #1a1a1a">noinput</div>
<div class="a" style="left:103.20px;top:142.65px;width:16.80px;height:6.10px;background:linear-gradient(#e0e0e0,#b8b8b8);border-radius:1px"></div>
<div class="a" style="left:116.20px;top:143.05px;width:0.40px;height:5.30px;background:#999"></div>
<div class="t" style="left:104.4px;top:143.65px;font-size:4.8px;font-weight:bold;color:#1a1a1a;transform:scaleX(0.88);transform-origin:0 0;-webkit-text-stroke:0.1px #1a1a1a">nFxA</div>
<div class="t" style="left:117.2px;top:144.05px;font-size:3.2px;color:#666">&#8597;</div>
<div class="a" style="left:86.80px;top:150.15px;width:25.00px;height:6.50px;background:#0a0c08;border-radius:1px"></div>
<div class="t" style="left:90.3px;top:151.65px;font-size:4.8px;font-weight:bold;color:#a6e024">0.0</div>
<div class="t" style="left:99.3px;top:151.65px;font-size:4.8px;font-weight:bold;color:#a6e024">&gt;</div>
<div class="t" style="left:103.8px;top:151.65px;font-size:4.8px;font-weight:bold;color:#a6e024">0</div>
<div class="t" style="left:108.3px;top:151.65px;font-size:4.8px;font-weight:bold;color:#a6e024">&lt;</div>
<div class="a" style="left:114.00px;top:150.15px;width:5.80px;height:6.50px;background:#0a0c08;border-radius:1px"></div>
<div class="a" style="left:116.3px;top:150.35px;width:1.2px;height:1.2px;background:#90e020"></div>
<div class="a" style="left:125.80px;top:142.75px;width:1.40px;height:0.40px;background:#8a8c8e"></div>
<div class="a" style="left:125.80px;top:145.75px;width:1.40px;height:0.40px;background:#8a8c8e"></div>
<div class="a" style="left:125.80px;top:148.75px;width:1.40px;height:0.40px;background:#8a8c8e"></div>
<div class="a" style="left:125.80px;top:151.75px;width:1.40px;height:0.40px;background:#8a8c8e"></div>
<div class="a" style="left:125.80px;top:154.75px;width:1.40px;height:0.40px;background:#8a8c8e"></div>
<div class="a" style="left:2.00px;top:159.15px;width:119.50px;height:17.10px;background:#334748"></div>
<div class="a" style="left:8.20px;top:159.15px;width:48.40px;height:17.10px;background:#464a4c"></div>
<div class="a" style="left:56.60px;top:159.15px;width:5.80px;height:17.10px;background:#1e2426"></div>
<div class="a" style="left:2.00px;top:159.15px;width:6.20px;height:17.10px;background:#2a6e77"></div>
<svg class="a" style="left:2px;top:159.25px" width="6.2" height="17" viewBox="0 0 6.2 17"><circle cx="3.1" cy="3.2" r="1.7" fill="#2e3a3c" stroke="#b8c8ca" stroke-width="0.9"/><circle cx="3.1" cy="14.3" r="1.8" fill="#e8eeee"/><path d="M2 15.4 L4.2 13.2" stroke="#333" stroke-width="0.7"/></svg>
<div class="a" style="left:8.60px;top:159.35px;width:42.50px;height:7.20px;background:#b8b0b0;border:0.8px solid #4ed6d8"></div>
<div class="t" style="left:8.6px;width:42.5px;text-align:center;top:160.55px;font-size:5.95px;font-weight:bold;color:#141414">nFXa 4m</div>
<div class="a" style="left:51.40px;top:159.35px;width:4.60px;height:7.20px;background:linear-gradient(#b0b0b0,#8e8e8e)"></div>
<div class="t" style="left:52.3px;top:161.25px;font-size:3.2px;color:#333">&#9660;</div>
<div class="a" style="left:9.80px;top:168.35px;width:19.10px;height:5.90px;background:linear-gradient(#3a3a3a,#2e2e2e);border-radius:1.5px;border:0.5px solid #5a5a5a"></div>
<svg class="a" style="left:9.8px;top:168.35px" width="19.1" height="5.9" viewBox="0 0 19.1 5.9"><circle cx="2.7" cy="2.95" r="2.2" fill="#5c2222"/><path d="M1.5 2.95h2.4M2.7 1.75v2.4" stroke="#f0f0f0" stroke-width="0.8"/><path d="M7 1.2v3.5" stroke="#c0c0c0" stroke-width="0.9"/></svg>
<div class="t" style="left:19px;top:169.15px;font-size:5px;font-weight:bold;color:#d0d0d0;transform:scaleX(0.9);transform-origin:0 0;-webkit-text-stroke:0.1px #d0d0d0">S</div>
<div class="t" style="left:23.3px;top:169.15px;font-size:5px;font-weight:bold;color:#d0d0d0;transform:scaleX(0.9);transform-origin:0 0;-webkit-text-stroke:0.1px #d0d0d0">M</div>
<div class="a" style="left:30.80px;top:168.35px;width:12.40px;height:5.90px;background:linear-gradient(#d8d8d8,#b0b0b0);border-radius:1px"></div>
<div class="t" style="left:32.2px;top:169.35px;font-size:4.8px;font-weight:bold;color:#1a1a1a;transform:scaleX(0.85);transform-origin:0 0;-webkit-text-stroke:0.1px #1a1a1a">wave</div>
<div class="a" style="left:44.90px;top:168.35px;width:9.20px;height:5.90px;background:linear-gradient(#d0d0d0,#a8a8a8);border-radius:1px"></div>
<div class="t" style="left:45.7px;top:169.35px;font-size:4.8px;font-weight:bold;color:#2a8a1c;transform:scaleX(0.85);transform-origin:0 0;-webkit-text-stroke:0.1px #2a8a1c">read</div>
<div class="a" style="left:57.10px;top:159.45px;width:4.90px;height:16.00px;background:#161a14"></div>
<div class="a" style="left:57.50px;top:159.75px;width:4.10px;height:15.40px;background:linear-gradient(#3a0c08 0,#3a0c08 14%,#5a4a16 20%,#5e5a18 45%,#4a6216 62%,#42601a 100%)"></div>
<div class="a" style="left:86.80px;top:161.15px;width:15.00px;height:6.10px;background:linear-gradient(#e4e4e4,#bcbcbc);border-radius:1px"></div>
<div class="t" style="left:86.8px;width:15px;text-align:center;top:162.15px;font-size:4.8px;font-weight:bold;color:#1a1a1a;transform:scaleX(0.8);transform-origin:50% 0;-webkit-text-stroke:0.1px #1a1a1a">noinput</div>
<div class="a" style="left:103.20px;top:161.15px;width:16.80px;height:6.10px;background:linear-gradient(#e0e0e0,#b8b8b8);border-radius:1px"></div>
<div class="a" style="left:116.20px;top:161.55px;width:0.40px;height:5.30px;background:#999"></div>
<div class="t" style="left:104.4px;top:162.15px;font-size:4.8px;font-weight:bold;color:#1a1a1a;transform:scaleX(0.88);transform-origin:0 0;-webkit-text-stroke:0.1px #1a1a1a">nFxA</div>
<div class="t" style="left:117.2px;top:162.55px;font-size:3.2px;color:#666">&#8597;</div>
<div class="a" style="left:86.80px;top:168.65px;width:25.00px;height:6.50px;background:#0a0c08;border-radius:1px"></div>
<div class="t" style="left:90.3px;top:170.15px;font-size:4.8px;font-weight:bold;color:#a6e024">0.0</div>
<div class="t" style="left:99.3px;top:170.15px;font-size:4.8px;font-weight:bold;color:#a6e024">&gt;</div>
<div class="t" style="left:103.8px;top:170.15px;font-size:4.8px;font-weight:bold;color:#a6e024">0</div>
<div class="t" style="left:108.3px;top:170.15px;font-size:4.8px;font-weight:bold;color:#a6e024">&lt;</div>
<div class="a" style="left:114.00px;top:168.65px;width:5.80px;height:6.50px;background:#0a0c08;border-radius:1px"></div>
<div class="a" style="left:116.3px;top:168.85px;width:1.2px;height:1.2px;background:#90e020"></div>
<div class="a" style="left:125.80px;top:161.25px;width:1.40px;height:0.40px;background:#8a8c8e"></div>
<div class="a" style="left:125.80px;top:164.25px;width:1.40px;height:0.40px;background:#8a8c8e"></div>
<div class="a" style="left:125.80px;top:167.25px;width:1.40px;height:0.40px;background:#8a8c8e"></div>
<div class="a" style="left:125.80px;top:170.25px;width:1.40px;height:0.40px;background:#8a8c8e"></div>
<div class="a" style="left:125.80px;top:173.25px;width:1.40px;height:0.40px;background:#8a8c8e"></div>
<div class="a" style="left:2.00px;top:177.65px;width:119.50px;height:17.10px;background:#334748"></div>
<div class="a" style="left:8.20px;top:177.65px;width:48.40px;height:17.10px;background:#464a4c"></div>
<div class="a" style="left:56.60px;top:177.65px;width:5.80px;height:17.10px;background:#1e2426"></div>
<div class="a" style="left:2.00px;top:177.65px;width:6.20px;height:17.10px;background:#2a6e77"></div>
<svg class="a" style="left:2px;top:177.75px" width="6.2" height="17" viewBox="0 0 6.2 17"><circle cx="3.1" cy="3.2" r="1.7" fill="#2e3a3c" stroke="#b8c8ca" stroke-width="0.9"/><circle cx="3.1" cy="14.3" r="1.8" fill="#e8eeee"/><path d="M2 15.4 L4.2 13.2" stroke="#333" stroke-width="0.7"/></svg>
<div class="a" style="left:8.60px;top:177.85px;width:42.50px;height:7.20px;background:#b8b0b0;border:0.8px solid #4ed6d8"></div>
<div class="t" style="left:8.6px;width:42.5px;text-align:center;top:179.05px;font-size:5.95px;font-weight:bold;color:#141414">nFXa 5m</div>
<div class="a" style="left:51.40px;top:177.85px;width:4.60px;height:7.20px;background:linear-gradient(#b0b0b0,#8e8e8e)"></div>
<div class="t" style="left:52.3px;top:179.75px;font-size:3.2px;color:#333">&#9660;</div>
<div class="a" style="left:9.80px;top:186.85px;width:19.10px;height:5.90px;background:linear-gradient(#3a3a3a,#2e2e2e);border-radius:1.5px;border:0.5px solid #5a5a5a"></div>
<svg class="a" style="left:9.8px;top:186.85px" width="19.1" height="5.9" viewBox="0 0 19.1 5.9"><circle cx="2.7" cy="2.95" r="2.2" fill="#5c2222"/><path d="M1.5 2.95h2.4M2.7 1.75v2.4" stroke="#f0f0f0" stroke-width="0.8"/><path d="M7 1.2v3.5" stroke="#c0c0c0" stroke-width="0.9"/></svg>
<div class="t" style="left:19px;top:187.65px;font-size:5px;font-weight:bold;color:#d0d0d0;transform:scaleX(0.9);transform-origin:0 0;-webkit-text-stroke:0.1px #d0d0d0">S</div>
<div class="t" style="left:23.3px;top:187.65px;font-size:5px;font-weight:bold;color:#d0d0d0;transform:scaleX(0.9);transform-origin:0 0;-webkit-text-stroke:0.1px #d0d0d0">M</div>
<div class="a" style="left:30.80px;top:186.85px;width:12.40px;height:5.90px;background:linear-gradient(#d8d8d8,#b0b0b0);border-radius:1px"></div>
<div class="t" style="left:32.2px;top:187.85px;font-size:4.8px;font-weight:bold;color:#1a1a1a;transform:scaleX(0.85);transform-origin:0 0;-webkit-text-stroke:0.1px #1a1a1a">wave</div>
<div class="a" style="left:44.90px;top:186.85px;width:9.20px;height:5.90px;background:linear-gradient(#d0d0d0,#a8a8a8);border-radius:1px"></div>
<div class="t" style="left:45.7px;top:187.85px;font-size:4.8px;font-weight:bold;color:#2a8a1c;transform:scaleX(0.85);transform-origin:0 0;-webkit-text-stroke:0.1px #2a8a1c">read</div>
<div class="a" style="left:57.10px;top:177.95px;width:4.90px;height:16.00px;background:#161a14"></div>
<div class="a" style="left:57.50px;top:178.25px;width:4.10px;height:15.40px;background:linear-gradient(#3a0c08 0,#3a0c08 14%,#5a4a16 20%,#5e5a18 45%,#4a6216 62%,#42601a 100%)"></div>
<div class="a" style="left:86.80px;top:179.65px;width:15.00px;height:6.10px;background:linear-gradient(#e4e4e4,#bcbcbc);border-radius:1px"></div>
<div class="t" style="left:86.8px;width:15px;text-align:center;top:180.65px;font-size:4.8px;font-weight:bold;color:#1a1a1a;transform:scaleX(0.8);transform-origin:50% 0;-webkit-text-stroke:0.1px #1a1a1a">noinput</div>
<div class="a" style="left:103.20px;top:179.65px;width:16.80px;height:6.10px;background:linear-gradient(#e0e0e0,#b8b8b8);border-radius:1px"></div>
<div class="a" style="left:116.20px;top:180.05px;width:0.40px;height:5.30px;background:#999"></div>
<div class="t" style="left:104.4px;top:180.65px;font-size:4.8px;font-weight:bold;color:#1a1a1a;transform:scaleX(0.88);transform-origin:0 0;-webkit-text-stroke:0.1px #1a1a1a">nFxA</div>
<div class="t" style="left:117.2px;top:181.05px;font-size:3.2px;color:#666">&#8597;</div>
<div class="a" style="left:86.80px;top:187.15px;width:25.00px;height:6.50px;background:#0a0c08;border-radius:1px"></div>
<div class="t" style="left:90.3px;top:188.65px;font-size:4.8px;font-weight:bold;color:#a6e024">0.0</div>
<div class="t" style="left:99.3px;top:188.65px;font-size:4.8px;font-weight:bold;color:#a6e024">&gt;</div>
<div class="t" style="left:103.8px;top:188.65px;font-size:4.8px;font-weight:bold;color:#a6e024">0</div>
<div class="t" style="left:108.3px;top:188.65px;font-size:4.8px;font-weight:bold;color:#a6e024">&lt;</div>
<div class="a" style="left:114.00px;top:187.15px;width:5.80px;height:6.50px;background:#0a0c08;border-radius:1px"></div>
<div class="a" style="left:116.3px;top:187.35px;width:1.2px;height:1.2px;background:#90e020"></div>
<div class="a" style="left:125.80px;top:179.75px;width:1.40px;height:0.40px;background:#8a8c8e"></div>
<div class="a" style="left:125.80px;top:182.75px;width:1.40px;height:0.40px;background:#8a8c8e"></div>
<div class="a" style="left:125.80px;top:185.75px;width:1.40px;height:0.40px;background:#8a8c8e"></div>
<div class="a" style="left:125.80px;top:188.75px;width:1.40px;height:0.40px;background:#8a8c8e"></div>
<div class="a" style="left:125.80px;top:191.75px;width:1.40px;height:0.40px;background:#8a8c8e"></div>
<div class="a" style="left:2.00px;top:196.15px;width:119.50px;height:17.10px;background:#334748"></div>
<div class="a" style="left:8.20px;top:196.15px;width:48.40px;height:17.10px;background:#464a4c"></div>
<div class="a" style="left:56.60px;top:196.15px;width:5.80px;height:17.10px;background:#1e2426"></div>
<div class="a" style="left:2.00px;top:196.15px;width:6.20px;height:17.10px;background:#2a6e77"></div>
<svg class="a" style="left:2px;top:196.25px" width="6.2" height="17" viewBox="0 0 6.2 17"><circle cx="3.1" cy="3.2" r="1.7" fill="#2e3a3c" stroke="#b8c8ca" stroke-width="0.9"/><circle cx="3.1" cy="14.3" r="1.8" fill="#e8eeee"/><path d="M2 15.4 L4.2 13.2" stroke="#333" stroke-width="0.7"/></svg>
<div class="a" style="left:8.60px;top:196.35px;width:42.50px;height:7.20px;background:#b8b0b0;border:0.8px solid #4ed6d8"></div>
<div class="t" style="left:8.6px;width:42.5px;text-align:center;top:197.55px;font-size:5.95px;font-weight:bold;color:#141414">nFXa 6m</div>
<div class="a" style="left:51.40px;top:196.35px;width:4.60px;height:7.20px;background:linear-gradient(#b0b0b0,#8e8e8e)"></div>
<div class="t" style="left:52.3px;top:198.25px;font-size:3.2px;color:#333">&#9660;</div>
<div class="a" style="left:9.80px;top:205.35px;width:19.10px;height:5.90px;background:linear-gradient(#3a3a3a,#2e2e2e);border-radius:1.5px;border:0.5px solid #5a5a5a"></div>
<svg class="a" style="left:9.8px;top:205.35px" width="19.1" height="5.9" viewBox="0 0 19.1 5.9"><circle cx="2.7" cy="2.95" r="2.2" fill="#5c2222"/><path d="M1.5 2.95h2.4M2.7 1.75v2.4" stroke="#f0f0f0" stroke-width="0.8"/><path d="M7 1.2v3.5" stroke="#c0c0c0" stroke-width="0.9"/></svg>
<div class="t" style="left:19px;top:206.15px;font-size:5px;font-weight:bold;color:#d0d0d0;transform:scaleX(0.9);transform-origin:0 0;-webkit-text-stroke:0.1px #d0d0d0">S</div>
<div class="t" style="left:23.3px;top:206.15px;font-size:5px;font-weight:bold;color:#d0d0d0;transform:scaleX(0.9);transform-origin:0 0;-webkit-text-stroke:0.1px #d0d0d0">M</div>
<div class="a" style="left:30.80px;top:205.35px;width:12.40px;height:5.90px;background:linear-gradient(#d8d8d8,#b0b0b0);border-radius:1px"></div>
<div class="t" style="left:32.2px;top:206.35px;font-size:4.8px;font-weight:bold;color:#1a1a1a;transform:scaleX(0.85);transform-origin:0 0;-webkit-text-stroke:0.1px #1a1a1a">wave</div>
<div class="a" style="left:44.90px;top:205.35px;width:9.20px;height:5.90px;background:linear-gradient(#d0d0d0,#a8a8a8);border-radius:1px"></div>
<div class="t" style="left:45.7px;top:206.35px;font-size:4.8px;font-weight:bold;color:#2a8a1c;transform:scaleX(0.85);transform-origin:0 0;-webkit-text-stroke:0.1px #2a8a1c">read</div>
<div class="a" style="left:57.10px;top:196.45px;width:4.90px;height:16.00px;background:#161a14"></div>
<div class="a" style="left:57.50px;top:196.75px;width:4.10px;height:15.40px;background:linear-gradient(#3a0c08 0,#3a0c08 14%,#5a4a16 20%,#5e5a18 45%,#4a6216 62%,#42601a 100%)"></div>
<div class="a" style="left:86.80px;top:198.15px;width:15.00px;height:6.10px;background:linear-gradient(#e4e4e4,#bcbcbc);border-radius:1px"></div>
<div class="t" style="left:86.8px;width:15px;text-align:center;top:199.15px;font-size:4.8px;font-weight:bold;color:#1a1a1a;transform:scaleX(0.8);transform-origin:50% 0;-webkit-text-stroke:0.1px #1a1a1a">noinput</div>
<div class="a" style="left:103.20px;top:198.15px;width:16.80px;height:6.10px;background:linear-gradient(#e0e0e0,#b8b8b8);border-radius:1px"></div>
<div class="a" style="left:116.20px;top:198.55px;width:0.40px;height:5.30px;background:#999"></div>
<div class="t" style="left:104.4px;top:199.15px;font-size:4.8px;font-weight:bold;color:#1a1a1a;transform:scaleX(0.88);transform-origin:0 0;-webkit-text-stroke:0.1px #1a1a1a">nFxA</div>
<div class="t" style="left:117.2px;top:199.55px;font-size:3.2px;color:#666">&#8597;</div>
<div class="a" style="left:86.80px;top:205.65px;width:25.00px;height:6.50px;background:#0a0c08;border-radius:1px"></div>
<div class="t" style="left:90.3px;top:207.15px;font-size:4.8px;font-weight:bold;color:#a6e024">0.0</div>
<div class="t" style="left:99.3px;top:207.15px;font-size:4.8px;font-weight:bold;color:#a6e024">&gt;</div>
<div class="t" style="left:103.8px;top:207.15px;font-size:4.8px;font-weight:bold;color:#a6e024">0</div>
<div class="t" style="left:108.3px;top:207.15px;font-size:4.8px;font-weight:bold;color:#a6e024">&lt;</div>
<div class="a" style="left:114.00px;top:205.65px;width:5.80px;height:6.50px;background:#0a0c08;border-radius:1px"></div>
<div class="a" style="left:116.3px;top:205.85px;width:1.2px;height:1.2px;background:#90e020"></div>
<div class="a" style="left:125.80px;top:198.25px;width:1.40px;height:0.40px;background:#8a8c8e"></div>
<div class="a" style="left:125.80px;top:201.25px;width:1.40px;height:0.40px;background:#8a8c8e"></div>
<div class="a" style="left:125.80px;top:204.25px;width:1.40px;height:0.40px;background:#8a8c8e"></div>
<div class="a" style="left:125.80px;top:207.25px;width:1.40px;height:0.40px;background:#8a8c8e"></div>
<div class="a" style="left:125.80px;top:210.25px;width:1.40px;height:0.40px;background:#8a8c8e"></div>
<div class="a" style="left:2.00px;top:214.65px;width:119.50px;height:17.10px;background:#334748"></div>
<div class="a" style="left:8.20px;top:214.65px;width:48.40px;height:17.10px;background:#464a4c"></div>
<div class="a" style="left:56.60px;top:214.65px;width:5.80px;height:17.10px;background:#1e2426"></div>
<div class="a" style="left:2.00px;top:214.65px;width:6.20px;height:17.10px;background:#2a6e77"></div>
<svg class="a" style="left:2px;top:214.75px" width="6.2" height="17" viewBox="0 0 6.2 17"><circle cx="3.1" cy="3.2" r="1.7" fill="#2e3a3c" stroke="#b8c8ca" stroke-width="0.9"/><circle cx="3.1" cy="14.3" r="1.8" fill="#e8eeee"/><path d="M2 15.4 L4.2 13.2" stroke="#333" stroke-width="0.7"/></svg>
<div class="a" style="left:8.60px;top:214.85px;width:42.50px;height:7.20px;background:#b8b0b0;border:0.8px solid #4ed6d8"></div>
<div class="t" style="left:8.6px;width:42.5px;text-align:center;top:216.05px;font-size:5.95px;font-weight:bold;color:#141414">nFXa 7m</div>
<div class="a" style="left:51.40px;top:214.85px;width:4.60px;height:7.20px;background:linear-gradient(#b0b0b0,#8e8e8e)"></div>
<div class="t" style="left:52.3px;top:216.75px;font-size:3.2px;color:#333">&#9660;</div>
<div class="a" style="left:9.80px;top:223.85px;width:19.10px;height:5.90px;background:linear-gradient(#3a3a3a,#2e2e2e);border-radius:1.5px;border:0.5px solid #5a5a5a"></div>
<svg class="a" style="left:9.8px;top:223.85px" width="19.1" height="5.9" viewBox="0 0 19.1 5.9"><circle cx="2.7" cy="2.95" r="2.2" fill="#5c2222"/><path d="M1.5 2.95h2.4M2.7 1.75v2.4" stroke="#f0f0f0" stroke-width="0.8"/><path d="M7 1.2v3.5" stroke="#c0c0c0" stroke-width="0.9"/></svg>
<div class="t" style="left:19px;top:224.65px;font-size:5px;font-weight:bold;color:#d0d0d0;transform:scaleX(0.9);transform-origin:0 0;-webkit-text-stroke:0.1px #d0d0d0">S</div>
<div class="t" style="left:23.3px;top:224.65px;font-size:5px;font-weight:bold;color:#d0d0d0;transform:scaleX(0.9);transform-origin:0 0;-webkit-text-stroke:0.1px #d0d0d0">M</div>
<div class="a" style="left:30.80px;top:223.85px;width:12.40px;height:5.90px;background:linear-gradient(#d8d8d8,#b0b0b0);border-radius:1px"></div>
<div class="t" style="left:32.2px;top:224.85px;font-size:4.8px;font-weight:bold;color:#1a1a1a;transform:scaleX(0.85);transform-origin:0 0;-webkit-text-stroke:0.1px #1a1a1a">wave</div>
<div class="a" style="left:44.90px;top:223.85px;width:9.20px;height:5.90px;background:linear-gradient(#d0d0d0,#a8a8a8);border-radius:1px"></div>
<div class="t" style="left:45.7px;top:224.85px;font-size:4.8px;font-weight:bold;color:#2a8a1c;transform:scaleX(0.85);transform-origin:0 0;-webkit-text-stroke:0.1px #2a8a1c">read</div>
<div class="a" style="left:57.10px;top:214.95px;width:4.90px;height:16.00px;background:#161a14"></div>
<div class="a" style="left:57.50px;top:215.25px;width:4.10px;height:15.40px;background:linear-gradient(#3a0c08 0,#3a0c08 14%,#5a4a16 20%,#5e5a18 45%,#4a6216 62%,#42601a 100%)"></div>
<div class="a" style="left:86.80px;top:216.65px;width:15.00px;height:6.10px;background:linear-gradient(#e4e4e4,#bcbcbc);border-radius:1px"></div>
<div class="t" style="left:86.8px;width:15px;text-align:center;top:217.65px;font-size:4.8px;font-weight:bold;color:#1a1a1a;transform:scaleX(0.8);transform-origin:50% 0;-webkit-text-stroke:0.1px #1a1a1a">noinput</div>
<div class="a" style="left:103.20px;top:216.65px;width:16.80px;height:6.10px;background:linear-gradient(#e0e0e0,#b8b8b8);border-radius:1px"></div>
<div class="a" style="left:116.20px;top:217.05px;width:0.40px;height:5.30px;background:#999"></div>
<div class="t" style="left:104.4px;top:217.65px;font-size:4.8px;font-weight:bold;color:#1a1a1a;transform:scaleX(0.88);transform-origin:0 0;-webkit-text-stroke:0.1px #1a1a1a">nFxA</div>
<div class="t" style="left:117.2px;top:218.05px;font-size:3.2px;color:#666">&#8597;</div>
<div class="a" style="left:86.80px;top:224.15px;width:25.00px;height:6.50px;background:#0a0c08;border-radius:1px"></div>
<div class="t" style="left:90.3px;top:225.65px;font-size:4.8px;font-weight:bold;color:#a6e024">0.0</div>
<div class="t" style="left:99.3px;top:225.65px;font-size:4.8px;font-weight:bold;color:#a6e024">&gt;</div>
<div class="t" style="left:103.8px;top:225.65px;font-size:4.8px;font-weight:bold;color:#a6e024">0</div>
<div class="t" style="left:108.3px;top:225.65px;font-size:4.8px;font-weight:bold;color:#a6e024">&lt;</div>
<div class="a" style="left:114.00px;top:224.15px;width:5.80px;height:6.50px;background:#0a0c08;border-radius:1px"></div>
<div class="a" style="left:116.3px;top:224.35px;width:1.2px;height:1.2px;background:#90e020"></div>
<div class="a" style="left:125.80px;top:216.75px;width:1.40px;height:0.40px;background:#8a8c8e"></div>
<div class="a" style="left:125.80px;top:219.75px;width:1.40px;height:0.40px;background:#8a8c8e"></div>
<div class="a" style="left:125.80px;top:222.75px;width:1.40px;height:0.40px;background:#8a8c8e"></div>
<div class="a" style="left:125.80px;top:225.75px;width:1.40px;height:0.40px;background:#8a8c8e"></div>
<div class="a" style="left:125.80px;top:228.75px;width:1.40px;height:0.40px;background:#8a8c8e"></div>
<div class="a" style="left:2.00px;top:233.15px;width:119.50px;height:17.10px;background:#334748"></div>
<div class="a" style="left:8.20px;top:233.15px;width:48.40px;height:17.10px;background:#464a4c"></div>
<div class="a" style="left:56.60px;top:233.15px;width:5.80px;height:17.10px;background:#1e2426"></div>
<div class="a" style="left:2.00px;top:233.15px;width:6.20px;height:17.10px;background:#2a6e77"></div>
<svg class="a" style="left:2px;top:233.25px" width="6.2" height="17" viewBox="0 0 6.2 17"><circle cx="3.1" cy="3.2" r="1.7" fill="#2e3a3c" stroke="#b8c8ca" stroke-width="0.9"/><circle cx="3.1" cy="14.3" r="1.8" fill="#e8eeee"/><path d="M2 15.4 L4.2 13.2" stroke="#333" stroke-width="0.7"/></svg>
<div class="a" style="left:8.60px;top:233.35px;width:42.50px;height:7.20px;background:#b8b0b0;border:0.8px solid #4ed6d8"></div>
<div class="t" style="left:8.6px;width:42.5px;text-align:center;top:234.55px;font-size:5.95px;font-weight:bold;color:#141414">nFXa 8m</div>
<div class="a" style="left:51.40px;top:233.35px;width:4.60px;height:7.20px;background:linear-gradient(#b0b0b0,#8e8e8e)"></div>
<div class="t" style="left:52.3px;top:235.25px;font-size:3.2px;color:#333">&#9660;</div>
<div class="a" style="left:9.80px;top:242.35px;width:19.10px;height:5.90px;background:linear-gradient(#3a3a3a,#2e2e2e);border-radius:1.5px;border:0.5px solid #5a5a5a"></div>
<svg class="a" style="left:9.8px;top:242.35px" width="19.1" height="5.9" viewBox="0 0 19.1 5.9"><circle cx="2.7" cy="2.95" r="2.2" fill="#5c2222"/><path d="M1.5 2.95h2.4M2.7 1.75v2.4" stroke="#f0f0f0" stroke-width="0.8"/><path d="M7 1.2v3.5" stroke="#c0c0c0" stroke-width="0.9"/></svg>
<div class="t" style="left:19px;top:243.15px;font-size:5px;font-weight:bold;color:#d0d0d0;transform:scaleX(0.9);transform-origin:0 0;-webkit-text-stroke:0.1px #d0d0d0">S</div>
<div class="t" style="left:23.3px;top:243.15px;font-size:5px;font-weight:bold;color:#d0d0d0;transform:scaleX(0.9);transform-origin:0 0;-webkit-text-stroke:0.1px #d0d0d0">M</div>
<div class="a" style="left:30.80px;top:242.35px;width:12.40px;height:5.90px;background:linear-gradient(#d8d8d8,#b0b0b0);border-radius:1px"></div>
<div class="t" style="left:32.2px;top:243.35px;font-size:4.8px;font-weight:bold;color:#1a1a1a;transform:scaleX(0.85);transform-origin:0 0;-webkit-text-stroke:0.1px #1a1a1a">wave</div>
<div class="a" style="left:44.90px;top:242.35px;width:9.20px;height:5.90px;background:linear-gradient(#d0d0d0,#a8a8a8);border-radius:1px"></div>
<div class="t" style="left:45.7px;top:243.35px;font-size:4.8px;font-weight:bold;color:#2a8a1c;transform:scaleX(0.85);transform-origin:0 0;-webkit-text-stroke:0.1px #2a8a1c">read</div>
<div class="a" style="left:57.10px;top:233.45px;width:4.90px;height:16.00px;background:#161a14"></div>
<div class="a" style="left:57.50px;top:233.75px;width:4.10px;height:15.40px;background:linear-gradient(#3a0c08 0,#3a0c08 14%,#5a4a16 20%,#5e5a18 45%,#4a6216 62%,#42601a 100%)"></div>
<div class="a" style="left:86.80px;top:235.15px;width:15.00px;height:6.10px;background:linear-gradient(#e4e4e4,#bcbcbc);border-radius:1px"></div>
<div class="t" style="left:86.8px;width:15px;text-align:center;top:236.15px;font-size:4.8px;font-weight:bold;color:#1a1a1a;transform:scaleX(0.8);transform-origin:50% 0;-webkit-text-stroke:0.1px #1a1a1a">noinput</div>
<div class="a" style="left:103.20px;top:235.15px;width:16.80px;height:6.10px;background:linear-gradient(#e0e0e0,#b8b8b8);border-radius:1px"></div>
<div class="a" style="left:116.20px;top:235.55px;width:0.40px;height:5.30px;background:#999"></div>
<div class="t" style="left:104.4px;top:236.15px;font-size:4.8px;font-weight:bold;color:#1a1a1a;transform:scaleX(0.88);transform-origin:0 0;-webkit-text-stroke:0.1px #1a1a1a">nFxA</div>
<div class="t" style="left:117.2px;top:236.55px;font-size:3.2px;color:#666">&#8597;</div>
<div class="a" style="left:86.80px;top:242.65px;width:25.00px;height:6.50px;background:#0a0c08;border-radius:1px"></div>
<div class="t" style="left:90.3px;top:244.15px;font-size:4.8px;font-weight:bold;color:#a6e024">0.0</div>
<div class="t" style="left:99.3px;top:244.15px;font-size:4.8px;font-weight:bold;color:#a6e024">&gt;</div>
<div class="t" style="left:103.8px;top:244.15px;font-size:4.8px;font-weight:bold;color:#a6e024">0</div>
<div class="t" style="left:108.3px;top:244.15px;font-size:4.8px;font-weight:bold;color:#a6e024">&lt;</div>
<div class="a" style="left:114.00px;top:242.65px;width:5.80px;height:6.50px;background:#0a0c08;border-radius:1px"></div>
<div class="a" style="left:116.3px;top:242.85px;width:1.2px;height:1.2px;background:#90e020"></div>
<div class="a" style="left:125.80px;top:235.25px;width:1.40px;height:0.40px;background:#8a8c8e"></div>
<div class="a" style="left:125.80px;top:238.25px;width:1.40px;height:0.40px;background:#8a8c8e"></div>
<div class="a" style="left:125.80px;top:241.25px;width:1.40px;height:0.40px;background:#8a8c8e"></div>
<div class="a" style="left:125.80px;top:244.25px;width:1.40px;height:0.40px;background:#8a8c8e"></div>
<div class="a" style="left:125.80px;top:247.25px;width:1.40px;height:0.40px;background:#8a8c8e"></div>
<div class="a" style="left:2.00px;top:251.65px;width:119.50px;height:17.10px;background:#334748"></div>
<div class="a" style="left:8.20px;top:251.65px;width:48.40px;height:17.10px;background:#464a4c"></div>
<div class="a" style="left:56.60px;top:251.65px;width:5.80px;height:17.10px;background:#1e2426"></div>
<div class="a" style="left:2.00px;top:251.65px;width:6.20px;height:17.10px;background:#2a6e77"></div>
<svg class="a" style="left:2px;top:251.75px" width="6.2" height="17" viewBox="0 0 6.2 17"><circle cx="3.1" cy="3.2" r="1.7" fill="#2e3a3c" stroke="#b8c8ca" stroke-width="0.9"/><circle cx="3.1" cy="14.3" r="1.8" fill="#e8eeee"/><path d="M2 15.4 L4.2 13.2" stroke="#333" stroke-width="0.7"/></svg>
<div class="a" style="left:8.60px;top:251.85px;width:42.50px;height:7.20px;background:linear-gradient(#b8b8b8,#aaaaaa)"></div>
<div class="t" style="left:8.6px;width:42.5px;text-align:center;top:253.05px;font-size:5.95px;font-weight:bold;color:#141414">nFXa 9m</div>
<div class="a" style="left:51.40px;top:251.85px;width:4.60px;height:7.20px;background:linear-gradient(#b0b0b0,#8e8e8e)"></div>
<div class="t" style="left:52.3px;top:253.75px;font-size:3.2px;color:#333">&#9660;</div>
<div class="a" style="left:9.80px;top:260.85px;width:19.10px;height:5.90px;background:linear-gradient(#3a3a3a,#2e2e2e);border-radius:1.5px;border:0.5px solid #5a5a5a"></div>
<svg class="a" style="left:9.8px;top:260.85px" width="19.1" height="5.9" viewBox="0 0 19.1 5.9"><circle cx="2.7" cy="2.95" r="2.2" fill="#5c2222"/><path d="M1.5 2.95h2.4M2.7 1.75v2.4" stroke="#f0f0f0" stroke-width="0.8"/><path d="M7 1.2v3.5" stroke="#c0c0c0" stroke-width="0.9"/></svg>
<div class="t" style="left:19px;top:261.65px;font-size:5px;font-weight:bold;color:#d0d0d0;transform:scaleX(0.9);transform-origin:0 0;-webkit-text-stroke:0.1px #d0d0d0">S</div>
<div class="t" style="left:23.3px;top:261.65px;font-size:5px;font-weight:bold;color:#d0d0d0;transform:scaleX(0.9);transform-origin:0 0;-webkit-text-stroke:0.1px #d0d0d0">M</div>
<div class="a" style="left:30.80px;top:260.85px;width:12.40px;height:5.90px;background:linear-gradient(#d8d8d8,#b0b0b0);border-radius:1px"></div>
<div class="t" style="left:32.2px;top:261.85px;font-size:4.8px;font-weight:bold;color:#1a1a1a;transform:scaleX(0.85);transform-origin:0 0;-webkit-text-stroke:0.1px #1a1a1a">wave</div>
<div class="a" style="left:44.90px;top:260.85px;width:9.20px;height:5.90px;background:linear-gradient(#d0d0d0,#a8a8a8);border-radius:1px"></div>
<div class="t" style="left:45.7px;top:261.85px;font-size:4.8px;font-weight:bold;color:#2a8a1c;transform:scaleX(0.85);transform-origin:0 0;-webkit-text-stroke:0.1px #2a8a1c">read</div>
<div class="a" style="left:57.10px;top:251.95px;width:4.90px;height:16.00px;background:#161a14"></div>
<div class="a" style="left:57.50px;top:252.25px;width:4.10px;height:15.40px;background:linear-gradient(#3a0c08 0,#3a0c08 14%,#5a4a16 20%,#5e5a18 45%,#4a6216 62%,#42601a 100%)"></div>
<div class="a" style="left:86.80px;top:253.65px;width:15.00px;height:6.10px;background:linear-gradient(#e4e4e4,#bcbcbc);border-radius:1px"></div>
<div class="t" style="left:86.8px;width:15px;text-align:center;top:254.65px;font-size:4.8px;font-weight:bold;color:#1a1a1a;transform:scaleX(0.8);transform-origin:50% 0;-webkit-text-stroke:0.1px #1a1a1a">noinput</div>
<div class="a" style="left:103.20px;top:253.65px;width:16.80px;height:6.10px;background:linear-gradient(#e0e0e0,#b8b8b8);border-radius:1px"></div>
<div class="a" style="left:116.20px;top:254.05px;width:0.40px;height:5.30px;background:#999"></div>
<div class="t" style="left:104.4px;top:254.65px;font-size:4.8px;font-weight:bold;color:#1a1a1a;transform:scaleX(0.88);transform-origin:0 0;-webkit-text-stroke:0.1px #1a1a1a">nFxA</div>
<div class="t" style="left:117.2px;top:255.05px;font-size:3.2px;color:#666">&#8597;</div>
<div class="a" style="left:86.80px;top:261.15px;width:25.00px;height:6.50px;background:#0a0c08;border-radius:1px"></div>
<div class="t" style="left:90.3px;top:262.65px;font-size:4.8px;font-weight:bold;color:#a6e024">0.0</div>
<div class="t" style="left:99.3px;top:262.65px;font-size:4.8px;font-weight:bold;color:#a6e024">&gt;</div>
<div class="t" style="left:103.8px;top:262.65px;font-size:4.8px;font-weight:bold;color:#a6e024">0</div>
<div class="t" style="left:108.3px;top:262.65px;font-size:4.8px;font-weight:bold;color:#a6e024">&lt;</div>
<div class="a" style="left:114.00px;top:261.15px;width:5.80px;height:6.50px;background:#0a0c08;border-radius:1px"></div>
<div class="a" style="left:116.3px;top:261.35px;width:1.2px;height:1.2px;background:#90e020"></div>
<div class="a" style="left:125.80px;top:253.75px;width:1.40px;height:0.40px;background:#8a8c8e"></div>
<div class="a" style="left:125.80px;top:256.75px;width:1.40px;height:0.40px;background:#8a8c8e"></div>
<div class="a" style="left:125.80px;top:259.75px;width:1.40px;height:0.40px;background:#8a8c8e"></div>
<div class="a" style="left:125.80px;top:262.75px;width:1.40px;height:0.40px;background:#8a8c8e"></div>
<div class="a" style="left:125.80px;top:265.75px;width:1.40px;height:0.40px;background:#8a8c8e"></div>
<div class="a" style="left:2.00px;top:270.15px;width:119.50px;height:17.10px;background:#334748"></div>
<div class="a" style="left:8.20px;top:270.15px;width:48.40px;height:17.10px;background:#464a4c"></div>
<div class="a" style="left:56.60px;top:270.15px;width:5.80px;height:17.10px;background:#1e2426"></div>
<div class="a" style="left:2.00px;top:270.15px;width:6.20px;height:17.10px;background:#2a6e77"></div>
<svg class="a" style="left:2px;top:270.25px" width="6.2" height="17" viewBox="0 0 6.2 17"><circle cx="3.1" cy="3.2" r="1.7" fill="#2e3a3c" stroke="#b8c8ca" stroke-width="0.9"/><circle cx="3.1" cy="14.3" r="1.8" fill="#e8eeee"/><path d="M2 15.4 L4.2 13.2" stroke="#333" stroke-width="0.7"/></svg>
<div class="a" style="left:8.60px;top:270.35px;width:42.50px;height:7.20px;background:linear-gradient(#b8b8b8,#aaaaaa)"></div>
<div class="t" style="left:8.6px;width:42.5px;text-align:center;top:271.55px;font-size:5.95px;font-weight:bold;color:#141414">nFXa 10m</div>
<div class="a" style="left:51.40px;top:270.35px;width:4.60px;height:7.20px;background:linear-gradient(#b0b0b0,#8e8e8e)"></div>
<div class="t" style="left:52.3px;top:272.25px;font-size:3.2px;color:#333">&#9660;</div>
<div class="a" style="left:9.80px;top:279.35px;width:19.10px;height:5.90px;background:linear-gradient(#3a3a3a,#2e2e2e);border-radius:1.5px;border:0.5px solid #5a5a5a"></div>
<svg class="a" style="left:9.8px;top:279.35px" width="19.1" height="5.9" viewBox="0 0 19.1 5.9"><circle cx="2.7" cy="2.95" r="2.2" fill="#5c2222"/><path d="M1.5 2.95h2.4M2.7 1.75v2.4" stroke="#f0f0f0" stroke-width="0.8"/><path d="M7 1.2v3.5" stroke="#c0c0c0" stroke-width="0.9"/></svg>
<div class="t" style="left:19px;top:280.15px;font-size:5px;font-weight:bold;color:#d0d0d0;transform:scaleX(0.9);transform-origin:0 0;-webkit-text-stroke:0.1px #d0d0d0">S</div>
<div class="t" style="left:23.3px;top:280.15px;font-size:5px;font-weight:bold;color:#d0d0d0;transform:scaleX(0.9);transform-origin:0 0;-webkit-text-stroke:0.1px #d0d0d0">M</div>
<div class="a" style="left:30.80px;top:279.35px;width:12.40px;height:5.90px;background:linear-gradient(#d8d8d8,#b0b0b0);border-radius:1px"></div>
<div class="t" style="left:32.2px;top:280.35px;font-size:4.8px;font-weight:bold;color:#1a1a1a;transform:scaleX(0.85);transform-origin:0 0;-webkit-text-stroke:0.1px #1a1a1a">wave</div>
<div class="a" style="left:44.90px;top:279.35px;width:9.20px;height:5.90px;background:linear-gradient(#d0d0d0,#a8a8a8);border-radius:1px"></div>
<div class="t" style="left:45.7px;top:280.35px;font-size:4.8px;font-weight:bold;color:#2a8a1c;transform:scaleX(0.85);transform-origin:0 0;-webkit-text-stroke:0.1px #2a8a1c">read</div>
<div class="a" style="left:57.10px;top:270.45px;width:4.90px;height:16.00px;background:#161a14"></div>
<div class="a" style="left:57.50px;top:270.75px;width:4.10px;height:15.40px;background:linear-gradient(#3a0c08 0,#3a0c08 14%,#5a4a16 20%,#5e5a18 45%,#4a6216 62%,#42601a 100%)"></div>
<div class="a" style="left:86.80px;top:272.15px;width:15.00px;height:6.10px;background:linear-gradient(#e4e4e4,#bcbcbc);border-radius:1px"></div>
<div class="t" style="left:86.8px;width:15px;text-align:center;top:273.15px;font-size:4.8px;font-weight:bold;color:#1a1a1a;transform:scaleX(0.8);transform-origin:50% 0;-webkit-text-stroke:0.1px #1a1a1a">noinput</div>
<div class="a" style="left:103.20px;top:272.15px;width:16.80px;height:6.10px;background:linear-gradient(#e0e0e0,#b8b8b8);border-radius:1px"></div>
<div class="a" style="left:116.20px;top:272.55px;width:0.40px;height:5.30px;background:#999"></div>
<div class="t" style="left:104.4px;top:273.15px;font-size:4.8px;font-weight:bold;color:#1a1a1a;transform:scaleX(0.88);transform-origin:0 0;-webkit-text-stroke:0.1px #1a1a1a">nFxA</div>
<div class="t" style="left:117.2px;top:273.55px;font-size:3.2px;color:#666">&#8597;</div>
<div class="a" style="left:86.80px;top:279.65px;width:25.00px;height:6.50px;background:#0a0c08;border-radius:1px"></div>
<div class="t" style="left:90.3px;top:281.15px;font-size:4.8px;font-weight:bold;color:#a6e024">0.0</div>
<div class="t" style="left:99.3px;top:281.15px;font-size:4.8px;font-weight:bold;color:#a6e024">&gt;</div>
<div class="t" style="left:103.8px;top:281.15px;font-size:4.8px;font-weight:bold;color:#a6e024">0</div>
<div class="t" style="left:108.3px;top:281.15px;font-size:4.8px;font-weight:bold;color:#a6e024">&lt;</div>
<div class="a" style="left:114.00px;top:279.65px;width:5.80px;height:6.50px;background:#0a0c08;border-radius:1px"></div>
<div class="a" style="left:116.3px;top:279.85px;width:1.2px;height:1.2px;background:#90e020"></div>
<div class="a" style="left:125.80px;top:272.25px;width:1.40px;height:0.40px;background:#8a8c8e"></div>
<div class="a" style="left:125.80px;top:275.25px;width:1.40px;height:0.40px;background:#8a8c8e"></div>
<div class="a" style="left:125.80px;top:278.25px;width:1.40px;height:0.40px;background:#8a8c8e"></div>
<div class="a" style="left:125.80px;top:281.25px;width:1.40px;height:0.40px;background:#8a8c8e"></div>
<div class="a" style="left:125.80px;top:284.25px;width:1.40px;height:0.40px;background:#8a8c8e"></div>
<div class="a" style="left:2.00px;top:288.65px;width:119.50px;height:17.10px;background:#334748"></div>
<div class="a" style="left:8.20px;top:288.65px;width:48.40px;height:17.10px;background:#464a4c"></div>
<div class="a" style="left:56.60px;top:288.65px;width:5.80px;height:17.10px;background:#1e2426"></div>
<div class="a" style="left:2.00px;top:288.65px;width:6.20px;height:17.10px;background:#2a6e77"></div>
<svg class="a" style="left:2px;top:288.75px" width="6.2" height="17" viewBox="0 0 6.2 17"><circle cx="3.1" cy="3.2" r="1.7" fill="#2e3a3c" stroke="#b8c8ca" stroke-width="0.9"/><circle cx="3.1" cy="14.3" r="1.8" fill="#e8eeee"/><path d="M2 15.4 L4.2 13.2" stroke="#333" stroke-width="0.7"/></svg>
<div class="a" style="left:8.60px;top:288.85px;width:42.50px;height:7.20px;background:linear-gradient(#b8b8b8,#aaaaaa)"></div>
<div class="t" style="left:8.6px;width:42.5px;text-align:center;top:290.05px;font-size:5.95px;font-weight:bold;color:#141414">nFXa 11m</div>
<div class="a" style="left:51.40px;top:288.85px;width:4.60px;height:7.20px;background:linear-gradient(#b0b0b0,#8e8e8e)"></div>
<div class="t" style="left:52.3px;top:290.75px;font-size:3.2px;color:#333">&#9660;</div>
<div class="a" style="left:9.80px;top:297.85px;width:19.10px;height:5.90px;background:linear-gradient(#3a3a3a,#2e2e2e);border-radius:1.5px;border:0.5px solid #5a5a5a"></div>
<svg class="a" style="left:9.8px;top:297.85px" width="19.1" height="5.9" viewBox="0 0 19.1 5.9"><circle cx="2.7" cy="2.95" r="2.2" fill="#5c2222"/><path d="M1.5 2.95h2.4M2.7 1.75v2.4" stroke="#f0f0f0" stroke-width="0.8"/><path d="M7 1.2v3.5" stroke="#c0c0c0" stroke-width="0.9"/></svg>
<div class="t" style="left:19px;top:298.65px;font-size:5px;font-weight:bold;color:#d0d0d0;transform:scaleX(0.9);transform-origin:0 0;-webkit-text-stroke:0.1px #d0d0d0">S</div>
<div class="t" style="left:23.3px;top:298.65px;font-size:5px;font-weight:bold;color:#d0d0d0;transform:scaleX(0.9);transform-origin:0 0;-webkit-text-stroke:0.1px #d0d0d0">M</div>
<div class="a" style="left:30.80px;top:297.85px;width:12.40px;height:5.90px;background:linear-gradient(#d8d8d8,#b0b0b0);border-radius:1px"></div>
<div class="t" style="left:32.2px;top:298.85px;font-size:4.8px;font-weight:bold;color:#1a1a1a;transform:scaleX(0.85);transform-origin:0 0;-webkit-text-stroke:0.1px #1a1a1a">wave</div>
<div class="a" style="left:44.90px;top:297.85px;width:9.20px;height:5.90px;background:linear-gradient(#d0d0d0,#a8a8a8);border-radius:1px"></div>
<div class="t" style="left:45.7px;top:298.85px;font-size:4.8px;font-weight:bold;color:#2a8a1c;transform:scaleX(0.85);transform-origin:0 0;-webkit-text-stroke:0.1px #2a8a1c">read</div>
<div class="a" style="left:57.10px;top:288.95px;width:4.90px;height:16.00px;background:#161a14"></div>
<div class="a" style="left:57.50px;top:289.25px;width:4.10px;height:15.40px;background:linear-gradient(#3a0c08 0,#3a0c08 14%,#5a4a16 20%,#5e5a18 45%,#4a6216 62%,#42601a 100%)"></div>
<div class="a" style="left:86.80px;top:290.65px;width:15.00px;height:6.10px;background:linear-gradient(#e4e4e4,#bcbcbc);border-radius:1px"></div>
<div class="t" style="left:86.8px;width:15px;text-align:center;top:291.65px;font-size:4.8px;font-weight:bold;color:#1a1a1a;transform:scaleX(0.8);transform-origin:50% 0;-webkit-text-stroke:0.1px #1a1a1a">noinput</div>
<div class="a" style="left:103.20px;top:290.65px;width:16.80px;height:6.10px;background:linear-gradient(#e0e0e0,#b8b8b8);border-radius:1px"></div>
<div class="a" style="left:116.20px;top:291.05px;width:0.40px;height:5.30px;background:#999"></div>
<div class="t" style="left:104.4px;top:291.65px;font-size:4.8px;font-weight:bold;color:#1a1a1a;transform:scaleX(0.88);transform-origin:0 0;-webkit-text-stroke:0.1px #1a1a1a">nFxA</div>
<div class="t" style="left:117.2px;top:292.05px;font-size:3.2px;color:#666">&#8597;</div>
<div class="a" style="left:86.80px;top:298.15px;width:25.00px;height:6.50px;background:#0a0c08;border-radius:1px"></div>
<div class="t" style="left:90.3px;top:299.65px;font-size:4.8px;font-weight:bold;color:#a6e024">0.0</div>
<div class="t" style="left:99.3px;top:299.65px;font-size:4.8px;font-weight:bold;color:#a6e024">&gt;</div>
<div class="t" style="left:103.8px;top:299.65px;font-size:4.8px;font-weight:bold;color:#a6e024">0</div>
<div class="t" style="left:108.3px;top:299.65px;font-size:4.8px;font-weight:bold;color:#a6e024">&lt;</div>
<div class="a" style="left:114.00px;top:298.15px;width:5.80px;height:6.50px;background:#0a0c08;border-radius:1px"></div>
<div class="a" style="left:116.3px;top:298.35px;width:1.2px;height:1.2px;background:#90e020"></div>
<div class="a" style="left:125.80px;top:290.75px;width:1.40px;height:0.40px;background:#8a8c8e"></div>
<div class="a" style="left:125.80px;top:293.75px;width:1.40px;height:0.40px;background:#8a8c8e"></div>
<div class="a" style="left:125.80px;top:296.75px;width:1.40px;height:0.40px;background:#8a8c8e"></div>
<div class="a" style="left:125.80px;top:299.75px;width:1.40px;height:0.40px;background:#8a8c8e"></div>
<div class="a" style="left:125.80px;top:302.75px;width:1.40px;height:0.40px;background:#8a8c8e"></div>
<div class="a" style="left:2.00px;top:307.15px;width:119.50px;height:17.10px;background:#334748"></div>
<div class="a" style="left:8.20px;top:307.15px;width:48.40px;height:17.10px;background:#464a4c"></div>
<div class="a" style="left:56.60px;top:307.15px;width:5.80px;height:17.10px;background:#1e2426"></div>
<div class="a" style="left:2.00px;top:307.15px;width:6.20px;height:17.10px;background:#2a6e77"></div>
<svg class="a" style="left:2px;top:307.25px" width="6.2" height="17" viewBox="0 0 6.2 17"><circle cx="3.1" cy="3.2" r="1.7" fill="#2e3a3c" stroke="#b8c8ca" stroke-width="0.9"/><circle cx="3.1" cy="14.3" r="1.8" fill="#e8eeee"/><path d="M2 15.4 L4.2 13.2" stroke="#333" stroke-width="0.7"/></svg>
<div class="a" style="left:8.60px;top:307.35px;width:42.50px;height:7.20px;background:linear-gradient(#b8b8b8,#aaaaaa)"></div>
<div class="t" style="left:8.6px;width:42.5px;text-align:center;top:308.55px;font-size:5.95px;font-weight:bold;color:#141414">nFXa 12m</div>
<div class="a" style="left:51.40px;top:307.35px;width:4.60px;height:7.20px;background:linear-gradient(#b0b0b0,#8e8e8e)"></div>
<div class="t" style="left:52.3px;top:309.25px;font-size:3.2px;color:#333">&#9660;</div>
<div class="a" style="left:9.80px;top:316.35px;width:19.10px;height:5.90px;background:linear-gradient(#3a3a3a,#2e2e2e);border-radius:1.5px;border:0.5px solid #5a5a5a"></div>
<svg class="a" style="left:9.8px;top:316.35px" width="19.1" height="5.9" viewBox="0 0 19.1 5.9"><circle cx="2.7" cy="2.95" r="2.2" fill="#5c2222"/><path d="M1.5 2.95h2.4M2.7 1.75v2.4" stroke="#f0f0f0" stroke-width="0.8"/><path d="M7 1.2v3.5" stroke="#c0c0c0" stroke-width="0.9"/></svg>
<div class="t" style="left:19px;top:317.15px;font-size:5px;font-weight:bold;color:#d0d0d0;transform:scaleX(0.9);transform-origin:0 0;-webkit-text-stroke:0.1px #d0d0d0">S</div>
<div class="t" style="left:23.3px;top:317.15px;font-size:5px;font-weight:bold;color:#d0d0d0;transform:scaleX(0.9);transform-origin:0 0;-webkit-text-stroke:0.1px #d0d0d0">M</div>
<div class="a" style="left:30.80px;top:316.35px;width:12.40px;height:5.90px;background:linear-gradient(#d8d8d8,#b0b0b0);border-radius:1px"></div>
<div class="t" style="left:32.2px;top:317.35px;font-size:4.8px;font-weight:bold;color:#1a1a1a;transform:scaleX(0.85);transform-origin:0 0;-webkit-text-stroke:0.1px #1a1a1a">wave</div>
<div class="a" style="left:44.90px;top:316.35px;width:9.20px;height:5.90px;background:linear-gradient(#d0d0d0,#a8a8a8);border-radius:1px"></div>
<div class="t" style="left:45.7px;top:317.35px;font-size:4.8px;font-weight:bold;color:#2a8a1c;transform:scaleX(0.85);transform-origin:0 0;-webkit-text-stroke:0.1px #2a8a1c">read</div>
<div class="a" style="left:57.10px;top:307.45px;width:4.90px;height:16.00px;background:#161a14"></div>
<div class="a" style="left:57.50px;top:307.75px;width:4.10px;height:15.40px;background:linear-gradient(#3a0c08 0,#3a0c08 14%,#5a4a16 20%,#5e5a18 45%,#4a6216 62%,#42601a 100%)"></div>
<div class="a" style="left:86.80px;top:309.15px;width:15.00px;height:6.10px;background:linear-gradient(#e4e4e4,#bcbcbc);border-radius:1px"></div>
<div class="t" style="left:86.8px;width:15px;text-align:center;top:310.15px;font-size:4.8px;font-weight:bold;color:#1a1a1a;transform:scaleX(0.8);transform-origin:50% 0;-webkit-text-stroke:0.1px #1a1a1a">noinput</div>
<div class="a" style="left:103.20px;top:309.15px;width:16.80px;height:6.10px;background:linear-gradient(#e0e0e0,#b8b8b8);border-radius:1px"></div>
<div class="a" style="left:116.20px;top:309.55px;width:0.40px;height:5.30px;background:#999"></div>
<div class="t" style="left:104.4px;top:310.15px;font-size:4.8px;font-weight:bold;color:#1a1a1a;transform:scaleX(0.88);transform-origin:0 0;-webkit-text-stroke:0.1px #1a1a1a">nFxA</div>
<div class="t" style="left:117.2px;top:310.55px;font-size:3.2px;color:#666">&#8597;</div>
<div class="a" style="left:86.80px;top:316.65px;width:25.00px;height:6.50px;background:#0a0c08;border-radius:1px"></div>
<div class="t" style="left:90.3px;top:318.15px;font-size:4.8px;font-weight:bold;color:#a6e024">0.0</div>
<div class="t" style="left:99.3px;top:318.15px;font-size:4.8px;font-weight:bold;color:#a6e024">&gt;</div>
<div class="t" style="left:103.8px;top:318.15px;font-size:4.8px;font-weight:bold;color:#a6e024">0</div>
<div class="t" style="left:108.3px;top:318.15px;font-size:4.8px;font-weight:bold;color:#a6e024">&lt;</div>
<div class="a" style="left:114.00px;top:316.65px;width:5.80px;height:6.50px;background:#0a0c08;border-radius:1px"></div>
<div class="a" style="left:116.3px;top:316.85px;width:1.2px;height:1.2px;background:#90e020"></div>
<div class="a" style="left:125.80px;top:309.25px;width:1.40px;height:0.40px;background:#8a8c8e"></div>
<div class="a" style="left:125.80px;top:312.25px;width:1.40px;height:0.40px;background:#8a8c8e"></div>
<div class="a" style="left:125.80px;top:315.25px;width:1.40px;height:0.40px;background:#8a8c8e"></div>
<div class="a" style="left:125.80px;top:318.25px;width:1.40px;height:0.40px;background:#8a8c8e"></div>
<div class="a" style="left:125.80px;top:321.25px;width:1.40px;height:0.40px;background:#8a8c8e"></div>
<div class="a" style="left:2.00px;top:325.65px;width:119.50px;height:17.10px;background:#334748"></div>
<div class="a" style="left:8.20px;top:325.65px;width:48.40px;height:17.10px;background:#464a4c"></div>
<div class="a" style="left:56.60px;top:325.65px;width:5.80px;height:17.10px;background:#1e2426"></div>
<div class="a" style="left:2.00px;top:325.65px;width:6.20px;height:17.10px;background:#2a6e77"></div>
<svg class="a" style="left:2px;top:325.75px" width="6.2" height="17" viewBox="0 0 6.2 17"><circle cx="3.1" cy="3.2" r="1.7" fill="#2e3a3c" stroke="#b8c8ca" stroke-width="0.9"/><circle cx="3.1" cy="14.3" r="1.8" fill="#e8eeee"/><path d="M2 15.4 L4.2 13.2" stroke="#333" stroke-width="0.7"/></svg>
<div class="a" style="left:8.60px;top:325.85px;width:42.50px;height:7.20px;background:linear-gradient(#b8b8b8,#aaaaaa)"></div>
<div class="t" style="left:8.6px;width:42.5px;text-align:center;top:327.05px;font-size:5.95px;font-weight:bold;color:#141414">nFXa 13m</div>
<div class="a" style="left:51.40px;top:325.85px;width:4.60px;height:7.20px;background:linear-gradient(#b0b0b0,#8e8e8e)"></div>
<div class="t" style="left:52.3px;top:327.75px;font-size:3.2px;color:#333">&#9660;</div>
<div class="a" style="left:9.80px;top:334.85px;width:19.10px;height:5.90px;background:linear-gradient(#3a3a3a,#2e2e2e);border-radius:1.5px;border:0.5px solid #5a5a5a"></div>
<svg class="a" style="left:9.8px;top:334.85px" width="19.1" height="5.9" viewBox="0 0 19.1 5.9"><circle cx="2.7" cy="2.95" r="2.2" fill="#5c2222"/><path d="M1.5 2.95h2.4M2.7 1.75v2.4" stroke="#f0f0f0" stroke-width="0.8"/><path d="M7 1.2v3.5" stroke="#c0c0c0" stroke-width="0.9"/></svg>
<div class="t" style="left:19px;top:335.65px;font-size:5px;font-weight:bold;color:#d0d0d0;transform:scaleX(0.9);transform-origin:0 0;-webkit-text-stroke:0.1px #d0d0d0">S</div>
<div class="t" style="left:23.3px;top:335.65px;font-size:5px;font-weight:bold;color:#d0d0d0;transform:scaleX(0.9);transform-origin:0 0;-webkit-text-stroke:0.1px #d0d0d0">M</div>
<div class="a" style="left:30.80px;top:334.85px;width:12.40px;height:5.90px;background:linear-gradient(#d8d8d8,#b0b0b0);border-radius:1px"></div>
<div class="t" style="left:32.2px;top:335.85px;font-size:4.8px;font-weight:bold;color:#1a1a1a;transform:scaleX(0.85);transform-origin:0 0;-webkit-text-stroke:0.1px #1a1a1a">wave</div>
<div class="a" style="left:44.90px;top:334.85px;width:9.20px;height:5.90px;background:linear-gradient(#d0d0d0,#a8a8a8);border-radius:1px"></div>
<div class="t" style="left:45.7px;top:335.85px;font-size:4.8px;font-weight:bold;color:#2a8a1c;transform:scaleX(0.85);transform-origin:0 0;-webkit-text-stroke:0.1px #2a8a1c">read</div>
<div class="a" style="left:57.10px;top:325.95px;width:4.90px;height:16.00px;background:#161a14"></div>
<div class="a" style="left:57.50px;top:326.25px;width:4.10px;height:15.40px;background:linear-gradient(#3a0c08 0,#3a0c08 14%,#5a4a16 20%,#5e5a18 45%,#4a6216 62%,#42601a 100%)"></div>
<div class="a" style="left:86.80px;top:327.65px;width:15.00px;height:6.10px;background:linear-gradient(#e4e4e4,#bcbcbc);border-radius:1px"></div>
<div class="t" style="left:86.8px;width:15px;text-align:center;top:328.65px;font-size:4.8px;font-weight:bold;color:#1a1a1a;transform:scaleX(0.8);transform-origin:50% 0;-webkit-text-stroke:0.1px #1a1a1a">noinput</div>
<div class="a" style="left:103.20px;top:327.65px;width:16.80px;height:6.10px;background:linear-gradient(#e0e0e0,#b8b8b8);border-radius:1px"></div>
<div class="a" style="left:116.20px;top:328.05px;width:0.40px;height:5.30px;background:#999"></div>
<div class="t" style="left:104.4px;top:328.65px;font-size:4.8px;font-weight:bold;color:#1a1a1a;transform:scaleX(0.88);transform-origin:0 0;-webkit-text-stroke:0.1px #1a1a1a">nFxA</div>
<div class="t" style="left:117.2px;top:329.05px;font-size:3.2px;color:#666">&#8597;</div>
<div class="a" style="left:86.80px;top:335.15px;width:25.00px;height:6.50px;background:#0a0c08;border-radius:1px"></div>
<div class="t" style="left:90.3px;top:336.65px;font-size:4.8px;font-weight:bold;color:#a6e024">0.0</div>
<div class="t" style="left:99.3px;top:336.65px;font-size:4.8px;font-weight:bold;color:#a6e024">&gt;</div>
<div class="t" style="left:103.8px;top:336.65px;font-size:4.8px;font-weight:bold;color:#a6e024">0</div>
<div class="t" style="left:108.3px;top:336.65px;font-size:4.8px;font-weight:bold;color:#a6e024">&lt;</div>
<div class="a" style="left:114.00px;top:335.15px;width:5.80px;height:6.50px;background:#0a0c08;border-radius:1px"></div>
<div class="a" style="left:116.3px;top:335.35px;width:1.2px;height:1.2px;background:#90e020"></div>
<div class="a" style="left:125.80px;top:327.75px;width:1.40px;height:0.40px;background:#8a8c8e"></div>
<div class="a" style="left:125.80px;top:330.75px;width:1.40px;height:0.40px;background:#8a8c8e"></div>
<div class="a" style="left:125.80px;top:333.75px;width:1.40px;height:0.40px;background:#8a8c8e"></div>
<div class="a" style="left:125.80px;top:336.75px;width:1.40px;height:0.40px;background:#8a8c8e"></div>
<div class="a" style="left:125.80px;top:339.75px;width:1.40px;height:0.40px;background:#8a8c8e"></div>
<div class="a" style="left:2.00px;top:344.15px;width:119.50px;height:17.10px;background:#334748"></div>
<div class="a" style="left:8.20px;top:344.15px;width:48.40px;height:17.10px;background:#464a4c"></div>
<div class="a" style="left:56.60px;top:344.15px;width:5.80px;height:17.10px;background:#1e2426"></div>
<div class="a" style="left:2.00px;top:344.15px;width:6.20px;height:17.10px;background:#2a6e77"></div>
<svg class="a" style="left:2px;top:344.25px" width="6.2" height="17" viewBox="0 0 6.2 17"><circle cx="3.1" cy="3.2" r="1.7" fill="#2e3a3c" stroke="#b8c8ca" stroke-width="0.9"/><circle cx="3.1" cy="14.3" r="1.8" fill="#e8eeee"/><path d="M2 15.4 L4.2 13.2" stroke="#333" stroke-width="0.7"/></svg>
<div class="a" style="left:8.60px;top:344.35px;width:42.50px;height:7.20px;background:linear-gradient(#b8b8b8,#aaaaaa)"></div>
<div class="t" style="left:8.6px;width:42.5px;text-align:center;top:345.55px;font-size:5.95px;font-weight:bold;color:#141414">nFXa 14m</div>
<div class="a" style="left:51.40px;top:344.35px;width:4.60px;height:7.20px;background:linear-gradient(#b0b0b0,#8e8e8e)"></div>
<div class="t" style="left:52.3px;top:346.25px;font-size:3.2px;color:#333">&#9660;</div>
<div class="a" style="left:9.80px;top:353.35px;width:19.10px;height:5.90px;background:linear-gradient(#3a3a3a,#2e2e2e);border-radius:1.5px;border:0.5px solid #5a5a5a"></div>
<svg class="a" style="left:9.8px;top:353.35px" width="19.1" height="5.9" viewBox="0 0 19.1 5.9"><circle cx="2.7" cy="2.95" r="2.2" fill="#5c2222"/><path d="M1.5 2.95h2.4M2.7 1.75v2.4" stroke="#f0f0f0" stroke-width="0.8"/><path d="M7 1.2v3.5" stroke="#c0c0c0" stroke-width="0.9"/></svg>
<div class="t" style="left:19px;top:354.15px;font-size:5px;font-weight:bold;color:#d0d0d0;transform:scaleX(0.9);transform-origin:0 0;-webkit-text-stroke:0.1px #d0d0d0">S</div>
<div class="t" style="left:23.3px;top:354.15px;font-size:5px;font-weight:bold;color:#d0d0d0;transform:scaleX(0.9);transform-origin:0 0;-webkit-text-stroke:0.1px #d0d0d0">M</div>
<div class="a" style="left:30.80px;top:353.35px;width:12.40px;height:5.90px;background:linear-gradient(#d8d8d8,#b0b0b0);border-radius:1px"></div>
<div class="t" style="left:32.2px;top:354.35px;font-size:4.8px;font-weight:bold;color:#1a1a1a;transform:scaleX(0.85);transform-origin:0 0;-webkit-text-stroke:0.1px #1a1a1a">wave</div>
<div class="a" style="left:44.90px;top:353.35px;width:9.20px;height:5.90px;background:linear-gradient(#d0d0d0,#a8a8a8);border-radius:1px"></div>
<div class="t" style="left:45.7px;top:354.35px;font-size:4.8px;font-weight:bold;color:#2a8a1c;transform:scaleX(0.85);transform-origin:0 0;-webkit-text-stroke:0.1px #2a8a1c">read</div>
<div class="a" style="left:57.10px;top:344.45px;width:4.90px;height:16.00px;background:#161a14"></div>
<div class="a" style="left:57.50px;top:344.75px;width:4.10px;height:15.40px;background:linear-gradient(#3a0c08 0,#3a0c08 14%,#5a4a16 20%,#5e5a18 45%,#4a6216 62%,#42601a 100%)"></div>
<div class="a" style="left:86.80px;top:346.15px;width:15.00px;height:6.10px;background:linear-gradient(#e4e4e4,#bcbcbc);border-radius:1px"></div>
<div class="t" style="left:86.8px;width:15px;text-align:center;top:347.15px;font-size:4.8px;font-weight:bold;color:#1a1a1a;transform:scaleX(0.8);transform-origin:50% 0;-webkit-text-stroke:0.1px #1a1a1a">noinput</div>
<div class="a" style="left:103.20px;top:346.15px;width:16.80px;height:6.10px;background:linear-gradient(#e0e0e0,#b8b8b8);border-radius:1px"></div>
<div class="a" style="left:116.20px;top:346.55px;width:0.40px;height:5.30px;background:#999"></div>
<div class="t" style="left:104.4px;top:347.15px;font-size:4.8px;font-weight:bold;color:#1a1a1a;transform:scaleX(0.88);transform-origin:0 0;-webkit-text-stroke:0.1px #1a1a1a">nFxA</div>
<div class="t" style="left:117.2px;top:347.55px;font-size:3.2px;color:#666">&#8597;</div>
<div class="a" style="left:86.80px;top:353.65px;width:25.00px;height:6.50px;background:#0a0c08;border-radius:1px"></div>
<div class="t" style="left:90.3px;top:355.15px;font-size:4.8px;font-weight:bold;color:#a6e024">0.0</div>
<div class="t" style="left:99.3px;top:355.15px;font-size:4.8px;font-weight:bold;color:#a6e024">&gt;</div>
<div class="t" style="left:103.8px;top:355.15px;font-size:4.8px;font-weight:bold;color:#a6e024">0</div>
<div class="t" style="left:108.3px;top:355.15px;font-size:4.8px;font-weight:bold;color:#a6e024">&lt;</div>
<div class="a" style="left:114.00px;top:353.65px;width:5.80px;height:6.50px;background:#0a0c08;border-radius:1px"></div>
<div class="a" style="left:116.3px;top:353.85px;width:1.2px;height:1.2px;background:#90e020"></div>
<div class="a" style="left:125.80px;top:346.25px;width:1.40px;height:0.40px;background:#8a8c8e"></div>
<div class="a" style="left:125.80px;top:349.25px;width:1.40px;height:0.40px;background:#8a8c8e"></div>
<div class="a" style="left:125.80px;top:352.25px;width:1.40px;height:0.40px;background:#8a8c8e"></div>
<div class="a" style="left:125.80px;top:355.25px;width:1.40px;height:0.40px;background:#8a8c8e"></div>
<div class="a" style="left:125.80px;top:358.25px;width:1.40px;height:0.40px;background:#8a8c8e"></div>
<div class="a" style="left:2.00px;top:362.65px;width:119.50px;height:17.10px;background:#334748"></div>
<div class="a" style="left:8.20px;top:362.65px;width:48.40px;height:17.10px;background:#464a4c"></div>
<div class="a" style="left:56.60px;top:362.65px;width:5.80px;height:17.10px;background:#1e2426"></div>
<div class="a" style="left:2.00px;top:362.65px;width:6.20px;height:17.10px;background:#2a6e77"></div>
<svg class="a" style="left:2px;top:362.75px" width="6.2" height="17" viewBox="0 0 6.2 17"><circle cx="3.1" cy="3.2" r="1.7" fill="#2e3a3c" stroke="#b8c8ca" stroke-width="0.9"/><circle cx="3.1" cy="14.3" r="1.8" fill="#e8eeee"/><path d="M2 15.4 L4.2 13.2" stroke="#333" stroke-width="0.7"/></svg>
<div class="a" style="left:8.60px;top:362.85px;width:42.50px;height:7.20px;background:linear-gradient(#b8b8b8,#aaaaaa)"></div>
<div class="t" style="left:8.6px;width:42.5px;text-align:center;top:364.05px;font-size:5.95px;font-weight:bold;color:#141414">nFXa 15m</div>
<div class="a" style="left:51.40px;top:362.85px;width:4.60px;height:7.20px;background:linear-gradient(#b0b0b0,#8e8e8e)"></div>
<div class="t" style="left:52.3px;top:364.75px;font-size:3.2px;color:#333">&#9660;</div>
<div class="a" style="left:9.80px;top:371.85px;width:19.10px;height:5.90px;background:linear-gradient(#3a3a3a,#2e2e2e);border-radius:1.5px;border:0.5px solid #5a5a5a"></div>
<svg class="a" style="left:9.8px;top:371.85px" width="19.1" height="5.9" viewBox="0 0 19.1 5.9"><circle cx="2.7" cy="2.95" r="2.2" fill="#5c2222"/><path d="M1.5 2.95h2.4M2.7 1.75v2.4" stroke="#f0f0f0" stroke-width="0.8"/><path d="M7 1.2v3.5" stroke="#c0c0c0" stroke-width="0.9"/></svg>
<div class="t" style="left:19px;top:372.65px;font-size:5px;font-weight:bold;color:#d0d0d0;transform:scaleX(0.9);transform-origin:0 0;-webkit-text-stroke:0.1px #d0d0d0">S</div>
<div class="t" style="left:23.3px;top:372.65px;font-size:5px;font-weight:bold;color:#d0d0d0;transform:scaleX(0.9);transform-origin:0 0;-webkit-text-stroke:0.1px #d0d0d0">M</div>
<div class="a" style="left:30.80px;top:371.85px;width:12.40px;height:5.90px;background:linear-gradient(#d8d8d8,#b0b0b0);border-radius:1px"></div>
<div class="t" style="left:32.2px;top:372.85px;font-size:4.8px;font-weight:bold;color:#1a1a1a;transform:scaleX(0.85);transform-origin:0 0;-webkit-text-stroke:0.1px #1a1a1a">wave</div>
<div class="a" style="left:44.90px;top:371.85px;width:9.20px;height:5.90px;background:linear-gradient(#d0d0d0,#a8a8a8);border-radius:1px"></div>
<div class="t" style="left:45.7px;top:372.85px;font-size:4.8px;font-weight:bold;color:#2a8a1c;transform:scaleX(0.85);transform-origin:0 0;-webkit-text-stroke:0.1px #2a8a1c">read</div>
<div class="a" style="left:57.10px;top:362.95px;width:4.90px;height:16.00px;background:#161a14"></div>
<div class="a" style="left:57.50px;top:363.25px;width:4.10px;height:15.40px;background:linear-gradient(#3a0c08 0,#3a0c08 14%,#5a4a16 20%,#5e5a18 45%,#4a6216 62%,#42601a 100%)"></div>
<div class="a" style="left:86.80px;top:364.65px;width:15.00px;height:6.10px;background:linear-gradient(#e4e4e4,#bcbcbc);border-radius:1px"></div>
<div class="t" style="left:86.8px;width:15px;text-align:center;top:365.65px;font-size:4.8px;font-weight:bold;color:#1a1a1a;transform:scaleX(0.8);transform-origin:50% 0;-webkit-text-stroke:0.1px #1a1a1a">noinput</div>
<div class="a" style="left:103.20px;top:364.65px;width:16.80px;height:6.10px;background:linear-gradient(#e0e0e0,#b8b8b8);border-radius:1px"></div>
<div class="a" style="left:116.20px;top:365.05px;width:0.40px;height:5.30px;background:#999"></div>
<div class="t" style="left:104.4px;top:365.65px;font-size:4.8px;font-weight:bold;color:#1a1a1a;transform:scaleX(0.88);transform-origin:0 0;-webkit-text-stroke:0.1px #1a1a1a">nFxA</div>
<div class="t" style="left:117.2px;top:366.05px;font-size:3.2px;color:#666">&#8597;</div>
<div class="a" style="left:86.80px;top:372.15px;width:25.00px;height:6.50px;background:#0a0c08;border-radius:1px"></div>
<div class="t" style="left:90.3px;top:373.65px;font-size:4.8px;font-weight:bold;color:#a6e024">0.0</div>
<div class="t" style="left:99.3px;top:373.65px;font-size:4.8px;font-weight:bold;color:#a6e024">&gt;</div>
<div class="t" style="left:103.8px;top:373.65px;font-size:4.8px;font-weight:bold;color:#a6e024">0</div>
<div class="t" style="left:108.3px;top:373.65px;font-size:4.8px;font-weight:bold;color:#a6e024">&lt;</div>
<div class="a" style="left:114.00px;top:372.15px;width:5.80px;height:6.50px;background:#0a0c08;border-radius:1px"></div>
<div class="a" style="left:116.3px;top:372.35px;width:1.2px;height:1.2px;background:#90e020"></div>
<div class="a" style="left:125.80px;top:364.75px;width:1.40px;height:0.40px;background:#8a8c8e"></div>
<div class="a" style="left:125.80px;top:367.75px;width:1.40px;height:0.40px;background:#8a8c8e"></div>
<div class="a" style="left:125.80px;top:370.75px;width:1.40px;height:0.40px;background:#8a8c8e"></div>
<div class="a" style="left:125.80px;top:373.75px;width:1.40px;height:0.40px;background:#8a8c8e"></div>
<div class="a" style="left:125.80px;top:376.75px;width:1.40px;height:0.40px;background:#8a8c8e"></div>
<div class="a" style="left:2.00px;top:381.15px;width:119.50px;height:17.10px;background:#334748"></div>
<div class="a" style="left:8.20px;top:381.15px;width:48.40px;height:17.10px;background:#464a4c"></div>
<div class="a" style="left:56.60px;top:381.15px;width:5.80px;height:17.10px;background:#1e2426"></div>
<div class="a" style="left:2.00px;top:381.15px;width:6.20px;height:17.10px;background:#2a6e77"></div>
<svg class="a" style="left:2px;top:381.25px" width="6.2" height="17" viewBox="0 0 6.2 17"><circle cx="3.1" cy="3.2" r="1.7" fill="#2e3a3c" stroke="#b8c8ca" stroke-width="0.9"/><circle cx="3.1" cy="14.3" r="1.8" fill="#e8eeee"/><path d="M2 15.4 L4.2 13.2" stroke="#333" stroke-width="0.7"/></svg>
<div class="a" style="left:8.60px;top:381.35px;width:42.50px;height:7.20px;background:linear-gradient(#b8b8b8,#aaaaaa)"></div>
<div class="t" style="left:8.6px;width:42.5px;text-align:center;top:382.55px;font-size:5.95px;font-weight:bold;color:#141414">nFXa 16m</div>
<div class="a" style="left:51.40px;top:381.35px;width:4.60px;height:7.20px;background:linear-gradient(#b0b0b0,#8e8e8e)"></div>
<div class="t" style="left:52.3px;top:383.25px;font-size:3.2px;color:#333">&#9660;</div>
<div class="a" style="left:9.80px;top:390.35px;width:19.10px;height:5.90px;background:linear-gradient(#3a3a3a,#2e2e2e);border-radius:1.5px;border:0.5px solid #5a5a5a"></div>
<svg class="a" style="left:9.8px;top:390.35px" width="19.1" height="5.9" viewBox="0 0 19.1 5.9"><circle cx="2.7" cy="2.95" r="2.2" fill="#5c2222"/><path d="M1.5 2.95h2.4M2.7 1.75v2.4" stroke="#f0f0f0" stroke-width="0.8"/><path d="M7 1.2v3.5" stroke="#c0c0c0" stroke-width="0.9"/></svg>
<div class="t" style="left:19px;top:391.15px;font-size:5px;font-weight:bold;color:#d0d0d0;transform:scaleX(0.9);transform-origin:0 0;-webkit-text-stroke:0.1px #d0d0d0">S</div>
<div class="t" style="left:23.3px;top:391.15px;font-size:5px;font-weight:bold;color:#d0d0d0;transform:scaleX(0.9);transform-origin:0 0;-webkit-text-stroke:0.1px #d0d0d0">M</div>
<div class="a" style="left:30.80px;top:390.35px;width:12.40px;height:5.90px;background:linear-gradient(#d8d8d8,#b0b0b0);border-radius:1px"></div>
<div class="t" style="left:32.2px;top:391.35px;font-size:4.8px;font-weight:bold;color:#1a1a1a;transform:scaleX(0.85);transform-origin:0 0;-webkit-text-stroke:0.1px #1a1a1a">wave</div>
<div class="a" style="left:44.90px;top:390.35px;width:9.20px;height:5.90px;background:linear-gradient(#d0d0d0,#a8a8a8);border-radius:1px"></div>
<div class="t" style="left:45.7px;top:391.35px;font-size:4.8px;font-weight:bold;color:#2a8a1c;transform:scaleX(0.85);transform-origin:0 0;-webkit-text-stroke:0.1px #2a8a1c">read</div>
<div class="a" style="left:57.10px;top:381.45px;width:4.90px;height:16.00px;background:#161a14"></div>
<div class="a" style="left:57.50px;top:381.75px;width:4.10px;height:15.40px;background:linear-gradient(#3a0c08 0,#3a0c08 14%,#5a4a16 20%,#5e5a18 45%,#4a6216 62%,#42601a 100%)"></div>
<div class="a" style="left:86.80px;top:383.15px;width:15.00px;height:6.10px;background:linear-gradient(#e4e4e4,#bcbcbc);border-radius:1px"></div>
<div class="t" style="left:86.8px;width:15px;text-align:center;top:384.15px;font-size:4.8px;font-weight:bold;color:#1a1a1a;transform:scaleX(0.8);transform-origin:50% 0;-webkit-text-stroke:0.1px #1a1a1a">noinput</div>
<div class="a" style="left:103.20px;top:383.15px;width:16.80px;height:6.10px;background:linear-gradient(#e0e0e0,#b8b8b8);border-radius:1px"></div>
<div class="a" style="left:116.20px;top:383.55px;width:0.40px;height:5.30px;background:#999"></div>
<div class="t" style="left:104.4px;top:384.15px;font-size:4.8px;font-weight:bold;color:#1a1a1a;transform:scaleX(0.88);transform-origin:0 0;-webkit-text-stroke:0.1px #1a1a1a">nFxA</div>
<div class="t" style="left:117.2px;top:384.55px;font-size:3.2px;color:#666">&#8597;</div>
<div class="a" style="left:86.80px;top:390.65px;width:25.00px;height:6.50px;background:#0a0c08;border-radius:1px"></div>
<div class="t" style="left:90.3px;top:392.15px;font-size:4.8px;font-weight:bold;color:#a6e024">0.0</div>
<div class="t" style="left:99.3px;top:392.15px;font-size:4.8px;font-weight:bold;color:#a6e024">&gt;</div>
<div class="t" style="left:103.8px;top:392.15px;font-size:4.8px;font-weight:bold;color:#a6e024">0</div>
<div class="t" style="left:108.3px;top:392.15px;font-size:4.8px;font-weight:bold;color:#a6e024">&lt;</div>
<div class="a" style="left:114.00px;top:390.65px;width:5.80px;height:6.50px;background:#0a0c08;border-radius:1px"></div>
<div class="a" style="left:116.3px;top:390.85px;width:1.2px;height:1.2px;background:#90e020"></div>
<div class="a" style="left:125.80px;top:383.25px;width:1.40px;height:0.40px;background:#8a8c8e"></div>
<div class="a" style="left:125.80px;top:386.25px;width:1.40px;height:0.40px;background:#8a8c8e"></div>
<div class="a" style="left:125.80px;top:389.25px;width:1.40px;height:0.40px;background:#8a8c8e"></div>
<div class="a" style="left:125.80px;top:392.25px;width:1.40px;height:0.40px;background:#8a8c8e"></div>
<div class="a" style="left:125.80px;top:395.25px;width:1.40px;height:0.40px;background:#8a8c8e"></div>
<div class="a" style="left:2.00px;top:399.65px;width:119.50px;height:17.10px;background:#334748"></div>
<div class="a" style="left:8.20px;top:399.65px;width:48.40px;height:17.10px;background:#464a4c"></div>
<div class="a" style="left:56.60px;top:399.65px;width:5.80px;height:17.10px;background:#1e2426"></div>
<div class="a" style="left:2.00px;top:399.65px;width:6.20px;height:17.10px;background:#2a6e77"></div>
<svg class="a" style="left:2px;top:399.75px" width="6.2" height="17" viewBox="0 0 6.2 17"><circle cx="3.1" cy="3.2" r="1.7" fill="#2e3a3c" stroke="#b8c8ca" stroke-width="0.9"/><circle cx="3.1" cy="14.3" r="1.8" fill="#e8eeee"/><path d="M2 15.4 L4.2 13.2" stroke="#333" stroke-width="0.7"/></svg>
<div class="a" style="left:8.60px;top:399.85px;width:42.50px;height:7.20px;background:linear-gradient(#b8b8b8,#aaaaaa)"></div>
<div class="t" style="left:8.6px;width:42.5px;text-align:center;top:401.05px;font-size:5.95px;font-weight:bold;color:#141414">nFXa 1st</div>
<div class="a" style="left:51.40px;top:399.85px;width:4.60px;height:7.20px;background:linear-gradient(#b0b0b0,#8e8e8e)"></div>
<div class="t" style="left:52.3px;top:401.75px;font-size:3.2px;color:#333">&#9660;</div>
<div class="a" style="left:9.80px;top:408.85px;width:19.10px;height:5.90px;background:linear-gradient(#3a3a3a,#2e2e2e);border-radius:1.5px;border:0.5px solid #5a5a5a"></div>
<svg class="a" style="left:9.8px;top:408.85px" width="19.1" height="5.9" viewBox="0 0 19.1 5.9"><circle cx="2.7" cy="2.95" r="2.2" fill="#5c2222"/><path d="M1.5 2.95h2.4M2.7 1.75v2.4" stroke="#f0f0f0" stroke-width="0.8"/><path d="M7 1.2v3.5" stroke="#c0c0c0" stroke-width="0.9"/></svg>
<div class="t" style="left:19px;top:409.65px;font-size:5px;font-weight:bold;color:#d0d0d0;transform:scaleX(0.9);transform-origin:0 0;-webkit-text-stroke:0.1px #d0d0d0">S</div>
<div class="t" style="left:23.3px;top:409.65px;font-size:5px;font-weight:bold;color:#d0d0d0;transform:scaleX(0.9);transform-origin:0 0;-webkit-text-stroke:0.1px #d0d0d0">M</div>
<div class="a" style="left:30.80px;top:408.85px;width:12.40px;height:5.90px;background:linear-gradient(#d8d8d8,#b0b0b0);border-radius:1px"></div>
<div class="t" style="left:32.2px;top:409.85px;font-size:4.8px;font-weight:bold;color:#1a1a1a;transform:scaleX(0.85);transform-origin:0 0;-webkit-text-stroke:0.1px #1a1a1a">wave</div>
<div class="a" style="left:44.90px;top:408.85px;width:9.20px;height:5.90px;background:linear-gradient(#d0d0d0,#a8a8a8);border-radius:1px"></div>
<div class="t" style="left:45.7px;top:409.85px;font-size:4.8px;font-weight:bold;color:#2a8a1c;transform:scaleX(0.85);transform-origin:0 0;-webkit-text-stroke:0.1px #2a8a1c">read</div>
<div class="a" style="left:57.10px;top:399.95px;width:9.00px;height:16.00px;background:#161a14"></div>
<div class="a" style="left:57.50px;top:400.25px;width:3.90px;height:15.40px;background:linear-gradient(#3a0c08 0,#3a0c08 14%,#5a4a16 20%,#5e5a18 45%,#4a6216 62%,#42601a 100%)"></div>
<div class="a" style="left:61.80px;top:400.25px;width:3.90px;height:15.40px;background:linear-gradient(#3a0c08 0,#3a0c08 14%,#5a4a16 20%,#5e5a18 45%,#4a6216 62%,#42601a 100%)"></div>
<div class="a" style="left:86.80px;top:401.65px;width:15.00px;height:6.10px;background:linear-gradient(#e4e4e4,#bcbcbc);border-radius:1px"></div>
<div class="t" style="left:86.8px;width:15px;text-align:center;top:402.65px;font-size:4.8px;font-weight:bold;color:#1a1a1a;transform:scaleX(0.8);transform-origin:50% 0;-webkit-text-stroke:0.1px #1a1a1a">noinput</div>
<div class="a" style="left:103.20px;top:401.65px;width:16.80px;height:6.10px;background:linear-gradient(#e0e0e0,#b8b8b8);border-radius:1px"></div>
<div class="a" style="left:116.20px;top:402.05px;width:0.40px;height:5.30px;background:#999"></div>
<div class="t" style="left:104.4px;top:402.65px;font-size:4.8px;font-weight:bold;color:#1a1a1a;transform:scaleX(0.88);transform-origin:0 0;-webkit-text-stroke:0.1px #1a1a1a">nFxA</div>
<div class="t" style="left:117.2px;top:403.05px;font-size:3.2px;color:#666">&#8597;</div>
<div class="a" style="left:86.80px;top:409.15px;width:15.00px;height:6.50px;background:#0a0c08;border-radius:1px"></div>
<div class="t" style="left:89px;top:410.85px;font-size:4px;font-weight:bold;color:#a6e024">V</div>
<div class="t" style="left:93.6px;top:410.85px;font-size:4px;font-weight:bold;color:#a6e024">P</div>
<div class="t" style="left:98px;top:410.85px;font-size:4px;font-weight:bold;color:#a6e024">P</div>
<div class="a" style="left:92.20px;top:409.75px;width:0.40px;height:5.30px;background:#3a5a18"></div>
<div class="a" style="left:96.60px;top:409.75px;width:0.40px;height:5.30px;background:#3a5a18"></div>
<div class="a" style="left:104.80px;top:409.65px;width:5.80px;height:6.00px;background:#0a0c08;border:0.5px solid #444;border-radius:1px"></div>
<div class="a" style="left:114.00px;top:409.65px;width:5.80px;height:6.00px;background:#0a0c08;border:0.5px solid #444;border-radius:1px"></div>
<div class="a" style="left:104.6px;top:408.85px;width:1.3px;height:1.3px;background:#90e020"></div>
<div class="a" style="left:118.9px;top:408.85px;width:1.3px;height:1.3px;background:#90e020"></div>
<div class="a" style="left:125.80px;top:401.75px;width:1.40px;height:0.40px;background:#8a8c8e"></div>
<div class="a" style="left:125.80px;top:404.75px;width:1.40px;height:0.40px;background:#8a8c8e"></div>
<div class="a" style="left:125.80px;top:407.75px;width:1.40px;height:0.40px;background:#8a8c8e"></div>
<div class="a" style="left:125.80px;top:410.75px;width:1.40px;height:0.40px;background:#8a8c8e"></div>
<div class="a" style="left:125.80px;top:413.75px;width:1.40px;height:0.40px;background:#8a8c8e"></div>
<div class="a" style="left:2.00px;top:418.15px;width:119.50px;height:17.10px;background:#334748"></div>
<div class="a" style="left:8.20px;top:418.15px;width:48.40px;height:17.10px;background:#464a4c"></div>
<div class="a" style="left:56.60px;top:418.15px;width:5.80px;height:17.10px;background:#1e2426"></div>
<div class="a" style="left:2.00px;top:418.15px;width:6.20px;height:17.10px;background:#2a6e77"></div>
<svg class="a" style="left:2px;top:418.25px" width="6.2" height="17" viewBox="0 0 6.2 17"><circle cx="3.1" cy="3.2" r="1.7" fill="#2e3a3c" stroke="#b8c8ca" stroke-width="0.9"/><circle cx="3.1" cy="14.3" r="1.8" fill="#e8eeee"/><path d="M2 15.4 L4.2 13.2" stroke="#333" stroke-width="0.7"/></svg>
<div class="a" style="left:8.60px;top:418.35px;width:42.50px;height:7.20px;background:linear-gradient(#b8b8b8,#aaaaaa)"></div>
<div class="t" style="left:8.6px;width:42.5px;text-align:center;top:419.55px;font-size:5.95px;font-weight:bold;color:#141414">nFXa 2st</div>
<div class="a" style="left:51.40px;top:418.35px;width:4.60px;height:7.20px;background:linear-gradient(#b0b0b0,#8e8e8e)"></div>
<div class="t" style="left:52.3px;top:420.25px;font-size:3.2px;color:#333">&#9660;</div>
<div class="a" style="left:9.80px;top:427.35px;width:19.10px;height:5.90px;background:linear-gradient(#3a3a3a,#2e2e2e);border-radius:1.5px;border:0.5px solid #5a5a5a"></div>
<svg class="a" style="left:9.8px;top:427.35px" width="19.1" height="5.9" viewBox="0 0 19.1 5.9"><circle cx="2.7" cy="2.95" r="2.2" fill="#5c2222"/><path d="M1.5 2.95h2.4M2.7 1.75v2.4" stroke="#f0f0f0" stroke-width="0.8"/><path d="M7 1.2v3.5" stroke="#c0c0c0" stroke-width="0.9"/></svg>
<div class="t" style="left:19px;top:428.15px;font-size:5px;font-weight:bold;color:#d0d0d0;transform:scaleX(0.9);transform-origin:0 0;-webkit-text-stroke:0.1px #d0d0d0">S</div>
<div class="t" style="left:23.3px;top:428.15px;font-size:5px;font-weight:bold;color:#d0d0d0;transform:scaleX(0.9);transform-origin:0 0;-webkit-text-stroke:0.1px #d0d0d0">M</div>
<div class="a" style="left:30.80px;top:427.35px;width:12.40px;height:5.90px;background:linear-gradient(#d8d8d8,#b0b0b0);border-radius:1px"></div>
<div class="t" style="left:32.2px;top:428.35px;font-size:4.8px;font-weight:bold;color:#1a1a1a;transform:scaleX(0.85);transform-origin:0 0;-webkit-text-stroke:0.1px #1a1a1a">wave</div>
<div class="a" style="left:44.90px;top:427.35px;width:9.20px;height:5.90px;background:linear-gradient(#d0d0d0,#a8a8a8);border-radius:1px"></div>
<div class="t" style="left:45.7px;top:428.35px;font-size:4.8px;font-weight:bold;color:#2a8a1c;transform:scaleX(0.85);transform-origin:0 0;-webkit-text-stroke:0.1px #2a8a1c">read</div>
<div class="a" style="left:57.10px;top:418.45px;width:9.00px;height:16.00px;background:#161a14"></div>
<div class="a" style="left:57.50px;top:418.75px;width:3.90px;height:15.40px;background:linear-gradient(#3a0c08 0,#3a0c08 14%,#5a4a16 20%,#5e5a18 45%,#4a6216 62%,#42601a 100%)"></div>
<div class="a" style="left:61.80px;top:418.75px;width:3.90px;height:15.40px;background:linear-gradient(#3a0c08 0,#3a0c08 14%,#5a4a16 20%,#5e5a18 45%,#4a6216 62%,#42601a 100%)"></div>
<div class="a" style="left:86.80px;top:420.15px;width:15.00px;height:6.10px;background:linear-gradient(#e4e4e4,#bcbcbc);border-radius:1px"></div>
<div class="t" style="left:86.8px;width:15px;text-align:center;top:421.15px;font-size:4.8px;font-weight:bold;color:#1a1a1a;transform:scaleX(0.8);transform-origin:50% 0;-webkit-text-stroke:0.1px #1a1a1a">noinput</div>
<div class="a" style="left:103.20px;top:420.15px;width:16.80px;height:6.10px;background:linear-gradient(#e0e0e0,#b8b8b8);border-radius:1px"></div>
<div class="a" style="left:116.20px;top:420.55px;width:0.40px;height:5.30px;background:#999"></div>
<div class="t" style="left:104.4px;top:421.15px;font-size:4.8px;font-weight:bold;color:#1a1a1a;transform:scaleX(0.88);transform-origin:0 0;-webkit-text-stroke:0.1px #1a1a1a">nFxA</div>
<div class="t" style="left:117.2px;top:421.55px;font-size:3.2px;color:#666">&#8597;</div>
<div class="a" style="left:86.80px;top:427.65px;width:15.00px;height:6.50px;background:#0a0c08;border-radius:1px"></div>
<div class="t" style="left:89px;top:429.35px;font-size:4px;font-weight:bold;color:#a6e024">V</div>
<div class="t" style="left:93.6px;top:429.35px;font-size:4px;font-weight:bold;color:#a6e024">P</div>
<div class="t" style="left:98px;top:429.35px;font-size:4px;font-weight:bold;color:#a6e024">P</div>
<div class="a" style="left:92.20px;top:428.25px;width:0.40px;height:5.30px;background:#3a5a18"></div>
<div class="a" style="left:96.60px;top:428.25px;width:0.40px;height:5.30px;background:#3a5a18"></div>
<div class="a" style="left:104.80px;top:428.15px;width:5.80px;height:6.00px;background:#0a0c08;border:0.5px solid #444;border-radius:1px"></div>
<div class="a" style="left:114.00px;top:428.15px;width:5.80px;height:6.00px;background:#0a0c08;border:0.5px solid #444;border-radius:1px"></div>
<div class="a" style="left:104.6px;top:427.35px;width:1.3px;height:1.3px;background:#90e020"></div>
<div class="a" style="left:118.9px;top:427.35px;width:1.3px;height:1.3px;background:#90e020"></div>
<div class="a" style="left:125.80px;top:420.25px;width:1.40px;height:0.40px;background:#8a8c8e"></div>
<div class="a" style="left:125.80px;top:423.25px;width:1.40px;height:0.40px;background:#8a8c8e"></div>
<div class="a" style="left:125.80px;top:426.25px;width:1.40px;height:0.40px;background:#8a8c8e"></div>
<div class="a" style="left:125.80px;top:429.25px;width:1.40px;height:0.40px;background:#8a8c8e"></div>
<div class="a" style="left:125.80px;top:432.25px;width:1.40px;height:0.40px;background:#8a8c8e"></div>
<div class="a" style="left:2.00px;top:436.65px;width:119.50px;height:17.10px;background:#334748"></div>
<div class="a" style="left:8.20px;top:436.65px;width:48.40px;height:17.10px;background:#464a4c"></div>
<div class="a" style="left:56.60px;top:436.65px;width:5.80px;height:17.10px;background:#1e2426"></div>
<div class="a" style="left:2.00px;top:436.65px;width:6.20px;height:17.10px;background:#2a6e77"></div>
<svg class="a" style="left:2px;top:436.75px" width="6.2" height="17" viewBox="0 0 6.2 17"><circle cx="3.1" cy="3.2" r="1.7" fill="#2e3a3c" stroke="#b8c8ca" stroke-width="0.9"/><circle cx="3.1" cy="14.3" r="1.8" fill="#e8eeee"/><path d="M2 15.4 L4.2 13.2" stroke="#333" stroke-width="0.7"/></svg>
<div class="a" style="left:8.60px;top:436.85px;width:42.50px;height:7.20px;background:linear-gradient(#b8b8b8,#aaaaaa)"></div>
<div class="t" style="left:8.6px;width:42.5px;text-align:center;top:438.05px;font-size:5.95px;font-weight:bold;color:#141414">nFXa 3st</div>
<div class="a" style="left:51.40px;top:436.85px;width:4.60px;height:7.20px;background:linear-gradient(#b0b0b0,#8e8e8e)"></div>
<div class="t" style="left:52.3px;top:438.75px;font-size:3.2px;color:#333">&#9660;</div>
<div class="a" style="left:9.80px;top:445.85px;width:19.10px;height:5.90px;background:linear-gradient(#3a3a3a,#2e2e2e);border-radius:1.5px;border:0.5px solid #5a5a5a"></div>
<svg class="a" style="left:9.8px;top:445.85px" width="19.1" height="5.9" viewBox="0 0 19.1 5.9"><circle cx="2.7" cy="2.95" r="2.2" fill="#5c2222"/><path d="M1.5 2.95h2.4M2.7 1.75v2.4" stroke="#f0f0f0" stroke-width="0.8"/><path d="M7 1.2v3.5" stroke="#c0c0c0" stroke-width="0.9"/></svg>
<div class="t" style="left:19px;top:446.65px;font-size:5px;font-weight:bold;color:#d0d0d0;transform:scaleX(0.9);transform-origin:0 0;-webkit-text-stroke:0.1px #d0d0d0">S</div>
<div class="t" style="left:23.3px;top:446.65px;font-size:5px;font-weight:bold;color:#d0d0d0;transform:scaleX(0.9);transform-origin:0 0;-webkit-text-stroke:0.1px #d0d0d0">M</div>
<div class="a" style="left:30.80px;top:445.85px;width:12.40px;height:5.90px;background:linear-gradient(#d8d8d8,#b0b0b0);border-radius:1px"></div>
<div class="t" style="left:32.2px;top:446.85px;font-size:4.8px;font-weight:bold;color:#1a1a1a;transform:scaleX(0.85);transform-origin:0 0;-webkit-text-stroke:0.1px #1a1a1a">wave</div>
<div class="a" style="left:44.90px;top:445.85px;width:9.20px;height:5.90px;background:linear-gradient(#d0d0d0,#a8a8a8);border-radius:1px"></div>
<div class="t" style="left:45.7px;top:446.85px;font-size:4.8px;font-weight:bold;color:#2a8a1c;transform:scaleX(0.85);transform-origin:0 0;-webkit-text-stroke:0.1px #2a8a1c">read</div>
<div class="a" style="left:57.10px;top:436.95px;width:9.00px;height:16.00px;background:#161a14"></div>
<div class="a" style="left:57.50px;top:437.25px;width:3.90px;height:15.40px;background:linear-gradient(#3a0c08 0,#3a0c08 14%,#5a4a16 20%,#5e5a18 45%,#4a6216 62%,#42601a 100%)"></div>
<div class="a" style="left:61.80px;top:437.25px;width:3.90px;height:15.40px;background:linear-gradient(#3a0c08 0,#3a0c08 14%,#5a4a16 20%,#5e5a18 45%,#4a6216 62%,#42601a 100%)"></div>
<div class="a" style="left:86.80px;top:438.65px;width:15.00px;height:6.10px;background:linear-gradient(#e4e4e4,#bcbcbc);border-radius:1px"></div>
<div class="t" style="left:86.8px;width:15px;text-align:center;top:439.65px;font-size:4.8px;font-weight:bold;color:#1a1a1a;transform:scaleX(0.8);transform-origin:50% 0;-webkit-text-stroke:0.1px #1a1a1a">noinput</div>
<div class="a" style="left:103.20px;top:438.65px;width:16.80px;height:6.10px;background:linear-gradient(#e0e0e0,#b8b8b8);border-radius:1px"></div>
<div class="a" style="left:116.20px;top:439.05px;width:0.40px;height:5.30px;background:#999"></div>
<div class="t" style="left:104.4px;top:439.65px;font-size:4.8px;font-weight:bold;color:#1a1a1a;transform:scaleX(0.88);transform-origin:0 0;-webkit-text-stroke:0.1px #1a1a1a">nFxA</div>
<div class="t" style="left:117.2px;top:440.05px;font-size:3.2px;color:#666">&#8597;</div>
<div class="a" style="left:86.80px;top:446.15px;width:15.00px;height:6.50px;background:#0a0c08;border-radius:1px"></div>
<div class="t" style="left:89px;top:447.85px;font-size:4px;font-weight:bold;color:#a6e024">V</div>
<div class="t" style="left:93.6px;top:447.85px;font-size:4px;font-weight:bold;color:#a6e024">P</div>
<div class="t" style="left:98px;top:447.85px;font-size:4px;font-weight:bold;color:#a6e024">P</div>
<div class="a" style="left:92.20px;top:446.75px;width:0.40px;height:5.30px;background:#3a5a18"></div>
<div class="a" style="left:96.60px;top:446.75px;width:0.40px;height:5.30px;background:#3a5a18"></div>
<div class="a" style="left:104.80px;top:446.65px;width:5.80px;height:6.00px;background:#0a0c08;border:0.5px solid #444;border-radius:1px"></div>
<div class="a" style="left:114.00px;top:446.65px;width:5.80px;height:6.00px;background:#0a0c08;border:0.5px solid #444;border-radius:1px"></div>
<div class="a" style="left:104.6px;top:445.85px;width:1.3px;height:1.3px;background:#90e020"></div>
<div class="a" style="left:118.9px;top:445.85px;width:1.3px;height:1.3px;background:#90e020"></div>
<div class="a" style="left:125.80px;top:438.75px;width:1.40px;height:0.40px;background:#8a8c8e"></div>
<div class="a" style="left:125.80px;top:441.75px;width:1.40px;height:0.40px;background:#8a8c8e"></div>
<div class="a" style="left:125.80px;top:444.75px;width:1.40px;height:0.40px;background:#8a8c8e"></div>
<div class="a" style="left:125.80px;top:447.75px;width:1.40px;height:0.40px;background:#8a8c8e"></div>
<div class="a" style="left:125.80px;top:450.75px;width:1.40px;height:0.40px;background:#8a8c8e"></div>
<div class="a" style="left:127.50px;top:102.75px;width:0.70px;height:351.50px;background:rgba(70,72,75,0.35)"></div>
<svg class="a" style="left:224.00px;top:103.95px" width="29.40" height="16.90" viewBox="0 0 29.40 16.90"><rect x="0.4" y="0.4" width="28.60" height="16.10" fill="#efcbb8"/><path d="M0.8 8.79 H28.60" stroke="#e05a10" stroke-width="0.45" opacity="0.55"/><path d="M1.0 8.3 L1.5 8.0 L1.9 7.5 L2.4 7.1 L2.8 7.3 L3.3 7.0 L3.8 7.5 L4.2 7.2 L4.7 7.0 L5.2 7.1 L5.6 7.4 L6.1 7.0 L6.5 7.3 L7.0 7.3 L7.5 7.0 L7.9 7.3 L8.4 7.5 L8.8 7.3 L9.3 7.1 L9.8 7.1 L10.2 7.7 L10.7 7.0 L11.2 7.4 L11.6 7.5 L12.1 7.5 L12.5 7.1 L13.0 7.6 L13.5 7.3 L13.9 7.6 L14.4 7.1 L14.8 7.1 L15.3 7.0 L15.8 7.2 L16.2 7.2 L16.7 7.2 L17.2 7.6 L17.6 7.4 L18.1 7.6 L18.5 7.6 L19.0 7.7 L19.5 7.9 L19.9 8.1 L20.4 8.1 L20.8 8.2 L21.3 8.3 L21.8 8.3 L22.2 8.4 L22.7 8.4 L23.2 8.5 L23.6 8.5 L24.1 8.5 L24.5 8.5 L25.0 8.5 L25.0 9.0 L24.5 9.0 L24.1 9.1 L23.6 9.0 L23.2 9.0 L22.7 9.2 L22.2 9.1 L21.8 9.2 L21.3 9.3 L20.8 9.4 L20.4 9.3 L19.9 9.4 L19.5 9.7 L19.0 9.9 L18.5 9.9 L18.1 9.7 L17.6 10.1 L17.2 9.8 L16.7 10.1 L16.2 10.1 L15.8 10.2 L15.3 10.5 L14.8 10.4 L14.4 10.3 L13.9 9.9 L13.5 10.3 L13.0 9.8 L12.5 10.3 L12.1 10.1 L11.6 10.0 L11.2 10.2 L10.7 10.2 L10.2 9.8 L9.8 10.4 L9.3 10.2 L8.8 9.9 L8.4 10.1 L7.9 10.3 L7.5 10.6 L7.0 10.1 L6.5 9.9 L6.1 10.5 L5.6 10.1 L5.2 10.5 L4.7 10.7 L4.2 10.1 L3.8 10.1 L3.3 10.4 L2.8 10.2 L2.4 10.2 L1.9 9.9 L1.5 9.5 L1.0 9.3 Z" fill="#e05a10"/><path d="M25.60 0.6 V16.30" stroke="#3c3430" stroke-width="0.55" fill="none" opacity="0.85"/><path d="M25.60 0.60 L28.80 16.30" stroke="#3c3430" stroke-width="0.55" fill="none" opacity="0.85"/><rect x="1.80" y="1.9" width="23.78" height="4.6" rx="0.8" fill="#554a46" fill-opacity="0.85" stroke="#e8e8e8" stroke-opacity="0.85" stroke-width="0.55"/><text x="2.90" y="5.75" font-family="Liberation Sans" font-weight="bold" font-size="4.5" fill="#fff" stroke="#fff" stroke-width="0.32" textLength="21.38" lengthAdjust="spacingAndGlyphs">MACKWho</text><rect x="1.8" y="10.30" width="4.4" height="5" rx="0.6" fill="#5a5250" fill-opacity="0.8" stroke="#f4f4f4" stroke-opacity="0.85" stroke-width="0.6"/><rect x="0.4" y="0.4" width="28.60" height="16.10" fill="none" stroke="#4a4442" stroke-width="0.8"/></svg>
<svg class="a" style="left:317.40px;top:103.95px" width="23.60" height="16.90" viewBox="0 0 23.60 16.90"><rect x="0.4" y="0.4" width="22.80" height="16.10" fill="#efc2ba"/><path d="M0.8 8.79 H22.80" stroke="#d41414" stroke-width="0.45" opacity="0.55"/><path d="M0.9 7.7 L1.4 7.2 L1.8 6.4 L2.3 6.1 L2.7 5.7 L3.2 5.8 L3.7 3.7 L4.1 3.4 L4.6 4.1 L5.1 2.8 L5.5 2.7 L6.0 4.4 L6.4 1.8 L6.9 2.9 L7.4 4.8 L7.8 2.3 L8.3 4.5 L8.8 5.1 L9.2 5.3 L9.7 5.4 L10.1 6.5 L10.6 6.5 L11.1 6.7 L11.5 6.9 L12.0 7.1 L12.4 7.5 L12.9 7.8 L13.4 7.9 L13.8 8.2 L14.3 8.2 L14.8 8.4 L15.2 8.5 L15.7 8.5 L16.1 8.5 L16.6 8.5 L16.6 9.0 L16.1 9.0 L15.7 9.0 L15.2 9.1 L14.8 9.1 L14.3 9.3 L13.8 9.4 L13.4 9.5 L12.9 9.6 L12.4 9.9 L12.0 10.2 L11.5 10.5 L11.1 10.8 L10.6 10.5 L10.1 10.7 L9.7 12.2 L9.2 11.5 L8.8 12.2 L8.3 13.2 L7.8 14.3 L7.4 12.0 L6.9 13.3 L6.4 16.1 L6.0 13.1 L5.5 14.6 L5.1 14.1 L4.6 12.7 L4.1 13.8 L3.7 12.7 L3.2 11.9 L2.7 11.4 L2.3 11.0 L1.8 11.1 L1.4 10.1 L0.9 9.7 Z" fill="#d41414"/><path d="M4.90 0.6 V16.30" stroke="#3c3430" stroke-width="0.55" fill="none" opacity="0.85"/><path d="M4.90 0.60 C7.14 12.37 12.38 16.20 23.00 16.30" stroke="#3c3430" stroke-width="0.55" fill="none" opacity="0.85"/><rect x="0.4" y="0.4" width="22.80" height="16.10" fill="none" stroke="#4a4442" stroke-width="0.8"/></svg>
<svg class="a" style="left:239.20px;top:122.45px" width="43.40" height="16.90" viewBox="0 0 43.40 16.90"><rect x="0.4" y="0.4" width="42.60" height="16.10" fill="#efcbb8"/><path d="M0.8 8.79 H42.60" stroke="#e05a10" stroke-width="0.45" opacity="0.55"/><path d="M1.3 8.1 L1.8 8.0 L2.2 8.0 L2.7 7.7 L3.1 7.7 L3.6 7.7 L4.0 7.8 L4.5 7.2 L5.0 7.6 L5.4 6.9 L5.9 7.2 L6.3 6.8 L6.8 7.3 L7.3 7.3 L7.7 7.1 L8.2 6.9 L8.6 6.9 L9.1 7.0 L9.5 5.9 L10.0 6.6 L10.5 5.9 L10.9 6.6 L11.4 5.9 L11.8 6.6 L12.3 6.0 L12.7 6.5 L13.2 5.5 L13.7 5.3 L14.1 6.3 L14.6 5.9 L15.0 6.1 L15.5 5.6 L15.9 5.5 L16.4 5.8 L16.9 5.7 L17.3 6.0 L17.8 6.7 L18.2 6.6 L18.7 6.3 L19.2 5.7 L19.6 6.4 L20.1 5.8 L20.5 6.7 L21.0 6.5 L21.4 6.8 L21.9 5.8 L22.4 6.6 L22.8 6.6 L23.3 6.4 L23.7 6.9 L24.2 6.9 L24.6 6.5 L25.1 7.1 L25.6 7.5 L26.0 7.4 L26.5 7.3 L26.9 7.7 L27.4 7.7 L27.8 8.0 L28.3 8.0 L28.8 8.1 L29.2 8.2 L29.7 8.2 L30.1 8.3 L30.6 8.4 L31.1 8.4 L31.5 8.4 L32.0 8.5 L32.4 8.5 L32.9 8.5 L33.3 8.5 L33.8 8.5 L33.8 9.0 L33.3 9.0 L32.9 9.0 L32.4 9.1 L32.0 9.1 L31.5 9.1 L31.1 9.2 L30.6 9.2 L30.1 9.3 L29.7 9.2 L29.2 9.3 L28.8 9.5 L28.3 9.6 L27.8 9.6 L27.4 9.6 L26.9 9.7 L26.5 10.0 L26.0 10.1 L25.6 10.0 L25.1 10.1 L24.6 10.9 L24.2 10.5 L23.7 10.4 L23.3 10.7 L22.8 10.6 L22.4 10.6 L21.9 11.5 L21.4 10.3 L21.0 10.9 L20.5 10.4 L20.1 11.3 L19.6 10.6 L19.2 11.2 L18.7 10.7 L18.2 10.7 L17.8 10.8 L17.3 11.5 L16.9 12.0 L16.4 11.3 L15.9 11.3 L15.5 11.3 L15.0 11.6 L14.6 11.4 L14.1 10.8 L13.7 12.0 L13.2 11.9 L12.7 11.1 L12.3 11.3 L11.8 10.9 L11.4 11.3 L10.9 10.9 L10.5 11.2 L10.0 10.4 L9.5 11.2 L9.1 10.5 L8.6 10.2 L8.2 10.6 L7.7 10.4 L7.3 9.9 L6.8 10.1 L6.3 10.6 L5.9 10.3 L5.4 10.4 L5.0 9.8 L4.5 10.2 L4.0 9.6 L3.6 9.9 L3.1 9.6 L2.7 9.9 L2.2 9.5 L1.8 9.6 L1.3 9.5 Z" fill="#e05a10"/><path d="M7.00 0.6 V16.30" stroke="#3c3430" stroke-width="0.55" fill="none" opacity="0.85"/><path d="M21.10 0.6 V16.30" stroke="#3c3430" stroke-width="0.55" fill="none" opacity="0.85"/><path d="M0.6 16.30 L7.00 0.60" stroke="#3c3430" stroke-width="0.55" fill="none" opacity="0.85"/><path d="M21.10 0.60 L42.80 16.30" stroke="#3c3430" stroke-width="0.55" fill="none" opacity="0.85"/><rect x="8.30" y="1.9" width="12.98" height="4.6" rx="0.8" fill="#554a46" fill-opacity="0.85" stroke="#e8e8e8" stroke-opacity="0.85" stroke-width="0.55"/><text x="9.40" y="5.75" font-family="Liberation Sans" font-weight="bold" font-size="4.5" fill="#fff" stroke="#fff" stroke-width="0.32" textLength="10.58" lengthAdjust="spacingAndGlyphs">MACI</text><rect x="0.4" y="0.4" width="42.60" height="16.10" fill="none" stroke="#4a4442" stroke-width="0.8"/></svg>
<svg class="a" style="left:319.10px;top:122.45px" width="22.40" height="16.90" viewBox="0 0 22.40 16.90"><rect x="0.4" y="0.4" width="21.60" height="16.10" fill="#efcbb8"/><path d="M0.8 8.79 H21.60" stroke="#e05a10" stroke-width="0.45" opacity="0.55"/><path d="M0.9 8.2 L1.4 6.8 L1.8 6.5 L2.3 6.2 L2.8 5.4 L3.2 5.3 L3.7 6.4 L4.1 6.5 L4.6 5.9 L5.1 5.4 L5.5 6.0 L6.0 6.7 L6.5 5.8 L6.9 6.0 L7.4 6.3 L7.9 7.2 L8.3 7.2 L8.8 7.0 L9.3 7.8 L9.7 7.8 L10.2 8.0 L10.6 8.1 L11.1 8.3 L11.6 8.3 L12.0 8.4 L12.5 8.5 L13.0 8.5 L13.4 8.5 L13.9 8.5 L13.9 9.0 L13.4 9.1 L13.0 9.0 L12.5 9.1 L12.0 9.2 L11.6 9.3 L11.1 9.3 L10.6 9.4 L10.2 9.6 L9.7 9.7 L9.3 9.6 L8.8 10.2 L8.3 10.4 L7.9 10.3 L7.4 11.4 L6.9 11.5 L6.5 11.7 L6.0 10.8 L5.5 10.9 L5.1 12.0 L4.6 11.7 L4.1 11.0 L3.7 10.6 L3.2 12.4 L2.8 11.8 L2.3 11.2 L1.8 10.7 L1.4 10.6 L0.9 9.3 Z" fill="#e05a10"/><path d="M8.90 0.6 V16.30" stroke="#3c3430" stroke-width="0.55" fill="none" opacity="0.85"/><path d="M8.90 0.60 C10.52 12.37 14.30 16.20 21.80 16.30" stroke="#3c3430" stroke-width="0.55" fill="none" opacity="0.85"/><rect x="1.70" y="1.9" width="5.85" height="4.6" rx="0.8" fill="#554a46" fill-opacity="0.85" stroke="#e8e8e8" stroke-opacity="0.85" stroke-width="0.55"/><text x="2.80" y="5.75" font-family="Liberation Sans" font-weight="bold" font-size="4.5" fill="#fff" stroke="#fff" stroke-width="0.32" textLength="3.45" lengthAdjust="spacingAndGlyphs">M</text><rect x="0.4" y="0.4" width="21.60" height="16.10" fill="none" stroke="#4a4442" stroke-width="0.8"/></svg>
<svg class="a" style="left:650.70px;top:122.45px" width="15.00" height="16.90" viewBox="0 0 15.00 16.90"><rect x="0.4" y="0.4" width="14.20" height="16.10" fill="#bdbdbd"/><path d="M0.8 8.79 H14.20" stroke="#3a3a3a" stroke-width="0.45" opacity="0.55"/><path d="M0.8 7.9 L1.3 7.6 L1.7 6.0 L2.2 6.5 L2.7 4.5 L3.1 5.6 L3.6 5.2 L4.0 4.0 L4.5 3.1 L5.0 4.0 L5.4 3.3 L5.9 4.9 L6.4 4.7 L6.8 5.3 L7.3 6.5 L7.7 6.9 L8.2 7.3 L8.7 7.0 L9.1 7.2 L9.6 7.9 L10.1 8.1 L10.5 8.1 L11.0 8.3 L11.4 8.4 L11.9 8.4 L12.4 8.5 L12.8 8.5 L13.3 8.5 L13.3 9.0 L12.8 9.1 L12.4 9.1 L11.9 9.1 L11.4 9.2 L11.0 9.2 L10.5 9.4 L10.1 9.4 L9.6 9.6 L9.1 10.4 L8.7 10.4 L8.2 10.1 L7.7 10.3 L7.3 11.0 L6.8 12.3 L6.4 12.0 L5.9 12.7 L5.4 13.1 L5.0 12.5 L4.5 13.3 L4.0 13.1 L3.6 12.2 L3.1 12.0 L2.7 12.6 L2.2 10.8 L1.7 11.4 L1.3 9.8 L0.8 9.7 Z" fill="#3a3a3a"/><path d="M2.30 0.6 V16.30" stroke="#3c3430" stroke-width="0.55" fill="none" opacity="0.85"/><path d="M2.30 0.60 C3.82 12.37 7.38 16.20 14.40 16.30" stroke="#3c3430" stroke-width="0.55" fill="none" opacity="0.85"/><rect x="0.4" y="0.4" width="14.20" height="16.10" fill="none" stroke="#4a4442" stroke-width="0.8"/></svg>
<svg class="a" style="left:224.40px;top:140.95px" width="29.10" height="16.90" viewBox="0 0 29.10 16.90"><rect x="0.4" y="0.4" width="28.30" height="16.10" fill="#e9d6b2"/><path d="M0.8 8.79 H28.30" stroke="#b27a22" stroke-width="0.45" opacity="0.55"/><path d="M6.6 8.4 L7.1 8.0 L7.5 7.7 L8.0 7.8 L8.4 7.4 L8.9 7.7 L9.3 7.2 L9.8 7.7 L10.3 7.6 L10.7 7.5 L11.2 7.3 L11.6 7.4 L12.1 7.4 L12.5 7.6 L13.0 7.7 L13.5 7.4 L13.9 7.3 L14.4 7.4 L14.8 7.7 L15.3 7.7 L15.7 7.8 L16.2 7.8 L16.7 8.0 L17.1 8.1 L17.6 8.1 L18.0 8.3 L18.5 8.3 L18.9 8.4 L19.4 8.4 L19.9 8.4 L20.3 8.5 L20.8 8.5 L21.2 8.5 L21.7 8.5 L22.1 8.5 L22.6 8.5 L22.6 9.0 L22.1 9.0 L21.7 9.0 L21.2 9.0 L20.8 9.1 L20.3 9.1 L19.9 9.1 L19.4 9.0 L18.9 9.2 L18.5 9.2 L18.0 9.2 L17.6 9.5 L17.1 9.5 L16.7 9.6 L16.2 9.8 L15.7 9.8 L15.3 9.8 L14.8 9.7 L14.4 10.0 L13.9 10.0 L13.5 9.9 L13.0 9.9 L12.5 9.8 L12.1 10.1 L11.6 10.2 L11.2 10.3 L10.7 10.0 L10.3 9.9 L9.8 9.9 L9.3 10.1 L8.9 9.8 L8.4 9.8 L8.0 9.6 L7.5 9.9 L7.1 9.4 L6.6 9.1 Z" fill="#b27a22"/><path d="M11.30 0.6 V16.30" stroke="#3c3430" stroke-width="0.55" fill="none" opacity="0.85"/><path d="M15.90 0.6 V16.30" stroke="#3c3430" stroke-width="0.55" fill="none" opacity="0.85"/><path d="M0.6 16.30 L11.30 0.60" stroke="#3c3430" stroke-width="0.55" fill="none" opacity="0.85"/><path d="M15.90 0.60 L28.50 16.30" stroke="#3c3430" stroke-width="0.55" fill="none" opacity="0.85"/><rect x="0.4" y="0.4" width="28.30" height="16.10" fill="none" stroke="#4a4442" stroke-width="0.8"/></svg>
<svg class="a" style="left:324.00px;top:140.95px" width="26.30" height="16.90" viewBox="0 0 26.30 16.90"><rect x="0.4" y="0.4" width="25.50" height="16.10" fill="#efcbb8"/><path d="M0.8 8.79 H25.50" stroke="#e05a10" stroke-width="0.45" opacity="0.55"/><path d="M1.0 8.4 L1.5 8.0 L1.9 7.4 L2.4 6.8 L2.8 6.9 L3.3 7.4 L3.8 7.4 L4.2 7.5 L4.7 7.4 L5.1 7.0 L5.6 7.1 L6.1 7.1 L6.5 7.5 L7.0 7.5 L7.4 7.3 L7.9 7.3 L8.4 7.4 L8.8 6.8 L9.3 6.9 L9.7 7.0 L10.2 7.3 L10.6 7.2 L11.1 7.0 L11.6 7.1 L12.0 7.4 L12.5 7.5 L12.9 7.3 L13.4 7.7 L13.9 8.0 L14.3 7.9 L14.8 8.2 L15.2 8.3 L15.7 8.3 L16.2 8.4 L16.6 8.5 L17.1 8.5 L17.5 8.5 L18.0 8.5 L18.0 9.0 L17.5 9.0 L17.1 9.0 L16.6 9.1 L16.2 9.1 L15.7 9.2 L15.2 9.2 L14.8 9.4 L14.3 9.7 L13.9 9.5 L13.4 9.8 L12.9 10.2 L12.5 10.0 L12.0 10.0 L11.6 10.1 L11.1 10.1 L10.6 10.3 L10.2 10.1 L9.7 10.2 L9.3 10.3 L8.8 10.4 L8.4 10.2 L7.9 10.3 L7.4 10.0 L7.0 9.9 L6.5 9.9 L6.1 10.4 L5.6 10.3 L5.1 10.5 L4.7 9.9 L4.2 10.0 L3.8 10.2 L3.3 10.0 L2.8 10.6 L2.4 10.7 L1.9 9.9 L1.5 9.6 L1.0 9.2 Z" fill="#e05a10"/><path d="M19.50 0.6 V16.30" stroke="#3c3430" stroke-width="0.55" fill="none" opacity="0.85"/><path d="M23.00 0.6 V16.30" stroke="#3c3430" stroke-width="0.55" fill="none" opacity="0.85"/><path d="M23.00 0.60 L25.70 16.30" stroke="#3c3430" stroke-width="0.55" fill="none" opacity="0.85"/><rect x="1.80" y="1.9" width="14.82" height="4.6" rx="0.8" fill="#554a46" fill-opacity="0.85" stroke="#e8e8e8" stroke-opacity="0.85" stroke-width="0.55"/><text x="2.90" y="5.75" font-family="Liberation Sans" font-weight="bold" font-size="4.5" fill="#fff" stroke="#fff" stroke-width="0.32" textLength="12.42" lengthAdjust="spacingAndGlyphs">MACK</text><rect x="1.8" y="10.60" width="14.22" height="4.6" rx="0.7" fill="#554a46" fill-opacity="0.85" stroke="#e8e8e8" stroke-opacity="0.85" stroke-width="0.55"/><circle cx="4.2" cy="12.90" r="1.5" fill="none" stroke="#fff" stroke-width="0.45"/><path d="M4.2 11.90 v2" stroke="#fff" stroke-width="0.45"/><text x="6.4" y="14.60" font-family="Liberation Sans" font-weight="bold" font-size="4.3" fill="#fff" stroke="#fff" stroke-width="0.3">-8.6</text><rect x="0.4" y="0.4" width="25.50" height="16.10" fill="none" stroke="#4a4442" stroke-width="0.8"/></svg>
<svg class="a" style="left:650.10px;top:140.95px" width="15.30" height="16.90" viewBox="0 0 15.30 16.90"><rect x="0.4" y="0.4" width="14.50" height="16.10" fill="#efcbb8"/><path d="M0.8 8.79 H14.50" stroke="#e05a10" stroke-width="0.45" opacity="0.55"/><path d="M0.9 7.8 L1.4 7.2 L1.8 5.8 L2.3 5.4 L2.7 4.5 L3.2 4.9 L3.7 5.6 L4.1 5.2 L4.6 4.8 L5.1 5.7 L5.5 3.6 L6.0 4.8 L6.4 5.5 L6.9 3.8 L7.4 6.0 L7.8 6.3 L8.3 6.0 L8.7 6.6 L9.2 7.0 L9.7 7.3 L10.1 7.9 L10.6 8.0 L11.1 8.2 L11.5 8.4 L12.0 8.5 L12.4 8.5 L12.9 8.5 L12.9 9.0 L12.4 9.0 L12.0 9.1 L11.5 9.2 L11.1 9.4 L10.6 9.6 L10.1 9.5 L9.7 10.2 L9.2 10.3 L8.7 11.0 L8.3 11.3 L7.8 11.3 L7.4 11.7 L6.9 13.8 L6.4 12.0 L6.0 12.7 L5.5 12.7 L5.1 11.4 L4.6 11.9 L4.1 12.4 L3.7 11.5 L3.2 12.1 L2.7 12.6 L2.3 11.9 L1.8 11.1 L1.4 10.0 L0.9 9.6 Z" fill="#e05a10"/><path d="M11.90 0.6 V16.30" stroke="#3c3430" stroke-width="0.55" fill="none" opacity="0.85"/><path d="M11.90 0.60 L14.70 16.30" stroke="#3c3430" stroke-width="0.55" fill="none" opacity="0.85"/><rect x="1.40" y="1.9" width="11.83" height="4.6" rx="0.8" fill="#554a46" fill-opacity="0.85" stroke="#e8e8e8" stroke-opacity="0.85" stroke-width="0.55"/><text x="2.50" y="5.75" font-family="Liberation Sans" font-weight="bold" font-size="4.5" fill="#fff" stroke="#fff" stroke-width="0.32" textLength="9.43" lengthAdjust="spacingAndGlyphs">MAC</text><rect x="0.4" y="0.4" width="14.50" height="16.10" fill="none" stroke="#4a4442" stroke-width="0.8"/></svg>
<svg class="a" style="left:241.40px;top:159.45px" width="24.70" height="16.90" viewBox="0 0 24.70 16.90"><rect x="0.4" y="0.4" width="23.90" height="16.10" fill="#e9d6b2"/><path d="M0.8 8.79 H23.90" stroke="#b27a22" stroke-width="0.45" opacity="0.55"/><path d="M3.6 8.4 L4.1 8.0 L4.5 7.8 L5.0 7.6 L5.5 7.3 L5.9 7.3 L6.4 7.8 L6.8 7.3 L7.3 7.7 L7.8 7.3 L8.2 7.6 L8.7 7.3 L9.2 7.7 L9.6 7.8 L10.1 7.8 L10.6 7.6 L11.0 7.6 L11.5 7.7 L12.0 8.0 L12.4 8.0 L12.9 8.2 L13.3 8.2 L13.8 8.3 L14.3 8.4 L14.7 8.5 L15.2 8.5 L15.7 8.5 L16.1 8.5 L16.6 8.5 L16.6 9.0 L16.1 9.1 L15.7 9.0 L15.2 9.0 L14.7 9.0 L14.3 9.1 L13.8 9.2 L13.3 9.3 L12.9 9.4 L12.4 9.5 L12.0 9.5 L11.5 9.7 L11.0 9.8 L10.6 9.8 L10.1 9.7 L9.6 9.6 L9.2 9.7 L8.7 10.0 L8.2 9.7 L7.8 10.0 L7.3 9.8 L6.8 10.2 L6.4 9.6 L5.9 10.3 L5.5 10.3 L5.0 9.9 L4.5 9.7 L4.1 9.6 L3.6 9.1 Z" fill="#b27a22"/><path d="M8.10 0.6 V16.30" stroke="#3c3430" stroke-width="0.55" fill="none" opacity="0.85"/><path d="M15.60 0.6 V16.30" stroke="#3c3430" stroke-width="0.55" fill="none" opacity="0.85"/><path d="M0.6 16.30 L8.10 0.60" stroke="#3c3430" stroke-width="0.55" fill="none" opacity="0.85"/><path d="M15.60 0.60 L24.10 16.30" stroke="#3c3430" stroke-width="0.55" fill="none" opacity="0.85"/><rect x="8.90" y="1.9" width="5.85" height="4.6" rx="0.8" fill="#554a46" fill-opacity="0.85" stroke="#e8e8e8" stroke-opacity="0.85" stroke-width="0.55"/><text x="10.00" y="5.75" font-family="Liberation Sans" font-weight="bold" font-size="4.5" fill="#fff" stroke="#fff" stroke-width="0.32" textLength="3.45" lengthAdjust="spacingAndGlyphs">M</text><rect x="0.4" y="0.4" width="23.90" height="16.10" fill="none" stroke="#4a4442" stroke-width="0.8"/></svg>
<svg class="a" style="left:326.50px;top:159.45px" width="44.50" height="16.90" viewBox="0 0 44.50 16.90"><rect x="0.4" y="0.4" width="43.70" height="16.10" fill="#efcbb8"/><path d="M0.8 8.79 H43.70" stroke="#e05a10" stroke-width="0.45" opacity="0.55"/><path d="M0.5 8.3 L1.0 7.6 L1.4 7.0 L1.9 6.8 L2.3 6.4 L2.8 7.0 L3.3 6.5 L3.7 6.6 L4.2 6.4 L4.6 6.4 L5.1 6.5 L5.5 6.6 L6.0 6.8 L6.5 7.1 L6.9 6.8 L7.4 7.2 L7.8 6.3 L8.3 6.4 L8.8 6.5 L9.2 6.5 L9.7 6.5 L10.1 7.0 L10.6 6.9 L11.1 6.9 L11.5 6.7 L12.0 6.3 L12.4 7.2 L12.9 6.6 L13.3 6.3 L13.8 6.3 L14.3 7.1 L14.7 6.9 L15.2 6.7 L15.6 6.7 L16.1 7.1 L16.6 6.2 L17.0 6.6 L17.5 6.6 L17.9 6.9 L18.4 7.0 L18.9 6.6 L19.3 7.3 L19.8 6.8 L20.2 7.0 L20.7 7.3 L21.1 6.7 L21.6 7.0 L22.1 7.4 L22.5 7.6 L23.0 7.1 L23.4 7.3 L23.9 7.7 L24.4 7.6 L24.8 7.5 L25.3 7.8 L25.7 7.8 L26.2 7.7 L26.7 7.8 L27.1 7.9 L27.6 8.0 L28.0 7.9 L28.5 8.1 L28.9 8.1 L29.4 8.1 L29.9 8.2 L30.3 8.2 L30.8 8.2 L31.2 8.3 L31.7 8.3 L32.2 8.3 L32.6 8.3 L33.1 8.4 L33.5 8.4 L34.0 8.4 L34.5 8.5 L34.9 8.5 L35.4 8.5 L35.8 8.5 L36.3 8.5 L36.7 8.5 L37.2 8.5 L37.7 8.5 L38.1 8.5 L38.6 8.5 L39.0 8.5 L39.5 8.5 L39.5 9.0 L39.0 9.0 L38.6 9.0 L38.1 9.0 L37.7 9.1 L37.2 9.0 L36.7 9.0 L36.3 9.0 L35.8 9.0 L35.4 9.0 L34.9 9.1 L34.5 9.1 L34.0 9.1 L33.5 9.1 L33.1 9.1 L32.6 9.1 L32.2 9.2 L31.7 9.2 L31.2 9.2 L30.8 9.3 L30.3 9.3 L29.9 9.2 L29.4 9.3 L28.9 9.5 L28.5 9.4 L28.0 9.6 L27.6 9.4 L27.1 9.7 L26.7 9.6 L26.2 9.7 L25.7 9.7 L25.3 9.6 L24.8 9.8 L24.4 9.9 L23.9 9.6 L23.4 10.0 L23.0 10.3 L22.5 9.7 L22.1 10.0 L21.6 10.2 L21.1 10.9 L20.7 10.2 L20.2 10.6 L19.8 10.7 L19.3 10.0 L18.9 10.9 L18.4 10.6 L17.9 10.4 L17.5 10.6 L17.0 10.9 L16.6 10.9 L16.1 10.5 L15.6 10.8 L15.2 10.8 L14.7 10.3 L14.3 10.1 L13.8 11.2 L13.3 11.2 L12.9 10.7 L12.4 10.1 L12.0 11.3 L11.5 10.6 L11.1 10.7 L10.6 10.5 L10.1 10.2 L9.7 10.7 L9.2 10.9 L8.8 11.0 L8.3 10.9 L7.8 11.4 L7.4 10.3 L6.9 10.3 L6.5 10.1 L6.0 10.9 L5.5 10.5 L5.1 10.6 L4.6 10.6 L4.2 10.8 L3.7 11.1 L3.3 10.5 L2.8 10.2 L2.3 10.7 L1.9 10.8 L1.4 10.3 L1.0 9.9 L0.5 9.2 Z" fill="#e05a10"/><path d="M9.50 0.6 V16.30" stroke="#3c3430" stroke-width="0.55" fill="none" opacity="0.85"/><path d="M35.50 0.6 V16.30" stroke="#3c3430" stroke-width="0.55" fill="none" opacity="0.85"/><path d="M35.50 0.60 L43.90 16.30" stroke="#3c3430" stroke-width="0.55" fill="none" opacity="0.85"/><rect x="1.30" y="1.9" width="5.85" height="4.6" rx="0.8" fill="#554a46" fill-opacity="0.85" stroke="#e8e8e8" stroke-opacity="0.85" stroke-width="0.55"/><text x="2.40" y="5.75" font-family="Liberation Sans" font-weight="bold" font-size="4.5" fill="#fff" stroke="#fff" stroke-width="0.32" textLength="3.45" lengthAdjust="spacingAndGlyphs">M</text><rect x="10.50" y="1.9" width="24.93" height="4.6" rx="0.8" fill="#554a46" fill-opacity="0.85" stroke="#e8e8e8" stroke-opacity="0.85" stroke-width="0.55"/><text x="11.60" y="5.75" font-family="Liberation Sans" font-weight="bold" font-size="4.5" fill="#fff" stroke="#fff" stroke-width="0.32" textLength="22.53" lengthAdjust="spacingAndGlyphs">MACK Who</text><rect x="1.8" y="10.60" width="20.59" height="4.6" rx="0.7" fill="#554a46" fill-opacity="0.85" stroke="#e8e8e8" stroke-opacity="0.85" stroke-width="0.55"/><circle cx="4.2" cy="12.90" r="1.5" fill="none" stroke="#fff" stroke-width="0.45"/><path d="M4.2 11.90 v2" stroke="#fff" stroke-width="0.45"/><text x="6.4" y="14.60" font-family="Liberation Sans" font-weight="bold" font-size="4.3" fill="#fff" stroke="#fff" stroke-width="0.3">-1.0 dB</text><rect x="0.4" y="0.4" width="43.70" height="16.10" fill="none" stroke="#4a4442" stroke-width="0.8"/></svg>
<svg class="a" style="left:650.70px;top:159.45px" width="14.50" height="16.90" viewBox="0 0 14.50 16.90"><rect x="0.4" y="0.4" width="13.70" height="16.10" fill="#eadab0"/><path d="M0.8 8.79 H13.70" stroke="#dca21c" stroke-width="0.45" opacity="0.55"/><path d="M0.5 8.1 L1.0 7.4 L1.4 6.9 L1.9 6.3 L2.3 6.8 L2.8 6.5 L3.2 4.5 L3.7 5.3 L4.2 5.5 L4.6 5.5 L5.1 4.5 L5.5 5.4 L6.0 4.7 L6.4 4.1 L6.9 4.5 L7.4 5.9 L7.8 5.0 L8.3 6.5 L8.7 6.0 L9.2 7.0 L9.6 7.0 L10.1 7.6 L10.6 7.8 L11.0 8.0 L11.5 8.3 L11.9 8.4 L12.4 8.5 L12.8 8.5 L13.3 8.5 L13.3 9.0 L12.8 9.0 L12.4 9.1 L11.9 9.1 L11.5 9.2 L11.0 9.5 L10.6 9.7 L10.1 10.0 L9.6 10.2 L9.2 10.5 L8.7 11.1 L8.3 11.1 L7.8 12.3 L7.4 11.3 L6.9 12.2 L6.4 12.5 L6.0 13.0 L5.5 12.3 L5.1 13.2 L4.6 11.6 L4.2 11.5 L3.7 12.2 L3.2 12.4 L2.8 11.1 L2.3 10.6 L1.9 11.0 L1.4 10.4 L1.0 10.1 L0.5 9.4 Z" fill="#dca21c"/><rect x="1.30" y="1.9" width="5.85" height="4.6" rx="0.8" fill="#554a46" fill-opacity="0.85" stroke="#e8e8e8" stroke-opacity="0.85" stroke-width="0.55"/><text x="2.40" y="5.75" font-family="Liberation Sans" font-weight="bold" font-size="4.5" fill="#fff" stroke="#fff" stroke-width="0.32" textLength="3.45" lengthAdjust="spacingAndGlyphs">M</text><rect x="0.4" y="0.4" width="13.70" height="16.10" fill="none" stroke="#4a4442" stroke-width="0.8"/></svg>
<svg class="a" style="left:243.30px;top:177.95px" width="26.70" height="16.90" viewBox="0 0 26.70 16.90"><rect x="0.4" y="0.4" width="25.90" height="16.10" fill="#efc2ba"/><path d="M0.8 8.79 H25.90" stroke="#d41414" stroke-width="0.45" opacity="0.55"/><path d="M1.7 7.5 L2.2 7.2 L2.6 7.0 L3.1 6.6 L3.5 6.4 L4.0 6.6 L4.5 4.8 L4.9 4.9 L5.4 4.9 L5.9 4.0 L6.3 4.4 L6.8 2.2 L7.2 2.4 L7.7 2.0 L8.2 2.1 L8.6 3.5 L9.1 3.4 L9.5 3.3 L10.0 4.3 L10.5 2.3 L10.9 2.1 L11.4 4.0 L11.9 3.4 L12.3 3.3 L12.8 3.0 L13.2 4.1 L13.7 3.8 L14.2 4.7 L14.6 6.6 L15.1 6.4 L15.5 6.4 L16.0 7.5 L16.5 7.8 L16.9 8.0 L17.4 8.1 L17.9 8.2 L18.3 8.4 L18.8 8.5 L19.2 8.5 L19.7 8.5 L19.7 9.0 L19.2 9.0 L18.8 9.1 L18.3 9.1 L17.9 9.3 L17.4 9.5 L16.9 9.6 L16.5 9.6 L16.0 10.1 L15.5 11.2 L15.1 10.7 L14.6 11.1 L14.2 12.2 L13.7 13.2 L13.2 12.4 L12.8 14.0 L12.3 13.6 L11.9 13.2 L11.4 12.6 L10.9 13.8 L10.5 15.5 L10.0 12.3 L9.5 13.5 L9.1 14.2 L8.6 13.1 L8.2 14.2 L7.7 15.9 L7.2 14.4 L6.8 15.6 L6.3 12.8 L5.9 12.8 L5.4 12.4 L4.9 12.4 L4.5 12.0 L4.0 11.0 L3.5 10.8 L3.1 10.5 L2.6 10.3 L2.2 10.1 L1.7 9.9 Z" fill="#d41414"/><path d="M6.70 0.6 V16.30" stroke="#3c3430" stroke-width="0.55" fill="none" opacity="0.85"/><path d="M10.70 0.6 V16.30" stroke="#3c3430" stroke-width="0.55" fill="none" opacity="0.85"/><path d="M10.70 0.60 C12.62 12.38 17.10 16.20 26.10 16.30" stroke="#3c3430" stroke-width="0.55" fill="none" opacity="0.85"/><rect x="0.4" y="0.4" width="25.90" height="16.10" fill="none" stroke="#4a4442" stroke-width="0.8"/></svg>
<svg class="a" style="left:333.30px;top:177.95px" width="34.00" height="16.90" viewBox="0 0 34.00 16.90"><rect x="0.4" y="0.4" width="33.20" height="16.10" fill="#eadab0"/><path d="M0.8 8.79 H33.20" stroke="#dca21c" stroke-width="0.45" opacity="0.55"/><path d="M0.7 8.2 L1.2 7.3 L1.6 6.8 L2.1 7.0 L2.6 6.8 L3.0 6.7 L3.5 6.0 L3.9 6.7 L4.4 6.8 L4.9 6.5 L5.3 7.0 L5.8 6.1 L6.3 7.0 L6.7 6.6 L7.2 6.2 L7.7 6.6 L8.1 6.5 L8.6 6.3 L9.0 7.1 L9.5 6.8 L10.0 6.4 L10.4 6.6 L10.9 6.5 L11.4 6.3 L11.8 5.9 L12.3 6.5 L12.7 6.7 L13.2 6.8 L13.7 7.3 L14.1 7.3 L14.6 7.7 L15.1 7.5 L15.5 7.8 L16.0 8.2 L16.5 8.2 L16.9 8.2 L17.4 8.3 L17.8 8.4 L18.3 8.5 L18.8 8.5 L19.2 8.5 L19.7 8.5 L19.7 9.0 L19.2 9.0 L18.8 9.0 L18.3 9.0 L17.8 9.1 L17.4 9.3 L16.9 9.3 L16.5 9.3 L16.0 9.4 L15.5 9.6 L15.1 9.8 L14.6 9.8 L14.1 10.3 L13.7 10.0 L13.2 10.6 L12.7 10.9 L12.3 11.0 L11.8 11.2 L11.4 10.9 L10.9 10.6 L10.4 10.8 L10.0 10.7 L9.5 10.8 L9.0 10.3 L8.6 10.7 L8.1 11.1 L7.7 10.7 L7.2 11.3 L6.7 10.7 L6.3 10.6 L5.8 11.4 L5.3 10.3 L4.9 10.8 L4.4 10.4 L3.9 10.4 L3.5 11.5 L3.0 10.8 L2.6 10.4 L2.1 10.6 L1.6 10.8 L1.2 10.2 L0.7 9.2 Z" fill="#dca21c"/><path d="M18.70 0.6 V16.30" stroke="#3c3430" stroke-width="0.55" fill="none" opacity="0.85"/><path d="M18.70 0.60 L33.40 16.30" stroke="#3c3430" stroke-width="0.55" fill="none" opacity="0.85"/><rect x="1.90" y="1.9" width="14.82" height="4.6" rx="0.8" fill="#554a46" fill-opacity="0.85" stroke="#e8e8e8" stroke-opacity="0.85" stroke-width="0.55"/><text x="3.00" y="5.75" font-family="Liberation Sans" font-weight="bold" font-size="4.5" fill="#fff" stroke="#fff" stroke-width="0.32" textLength="12.42" lengthAdjust="spacingAndGlyphs">MBCK</text><rect x="1.8" y="10.30" width="4.4" height="5" rx="0.6" fill="#5a5250" fill-opacity="0.8" stroke="#f4f4f4" stroke-opacity="0.85" stroke-width="0.6"/><rect x="0.4" y="0.4" width="33.20" height="16.10" fill="none" stroke="#4a4442" stroke-width="0.8"/></svg>
<svg class="a" style="left:652.00px;top:177.95px" width="40.30" height="16.90" viewBox="0 0 40.30 16.90"><rect x="0.4" y="0.4" width="39.50" height="16.10" fill="#efc2ba"/><path d="M0.8 8.79 H39.50" stroke="#d41414" stroke-width="0.45" opacity="0.55"/><path d="M0.5 8.2 L1.0 7.4 L1.4 6.8 L1.9 6.8 L2.3 6.0 L2.8 6.5 L3.3 7.0 L3.7 6.3 L4.2 6.7 L4.6 6.0 L5.1 7.1 L5.6 6.1 L6.0 6.3 L6.5 6.8 L7.0 6.7 L7.4 6.8 L7.9 6.6 L8.3 7.4 L8.8 7.5 L9.3 7.5 L9.7 7.4 L10.2 7.5 L10.6 7.5 L11.1 7.4 L11.6 7.8 L12.0 7.8 L12.5 7.6 L12.9 7.9 L13.4 7.9 L13.9 8.1 L14.3 8.1 L14.8 8.1 L15.2 8.2 L15.7 8.2 L16.2 8.3 L16.6 8.3 L17.1 8.3 L17.5 8.3 L18.0 8.3 L18.5 8.4 L18.9 8.4 L19.4 8.5 L19.9 8.5 L20.3 8.5 L20.8 8.5 L21.2 8.5 L21.7 8.5 L22.2 8.5 L22.6 8.5 L23.1 8.5 L23.5 8.5 L24.0 8.5 L24.0 9.0 L23.5 9.0 L23.1 9.0 L22.6 9.0 L22.2 9.0 L21.7 9.1 L21.2 9.0 L20.8 9.1 L20.3 9.0 L19.9 9.0 L19.4 9.1 L18.9 9.1 L18.5 9.1 L18.0 9.2 L17.5 9.1 L17.1 9.2 L16.6 9.2 L16.2 9.3 L15.7 9.3 L15.2 9.3 L14.8 9.4 L14.3 9.4 L13.9 9.4 L13.4 9.7 L12.9 9.5 L12.5 9.7 L12.0 9.7 L11.6 9.6 L11.1 10.0 L10.6 9.7 L10.2 10.1 L9.7 9.9 L9.3 9.8 L8.8 9.8 L8.3 10.2 L7.9 11.1 L7.4 10.8 L7.0 10.7 L6.5 10.7 L6.0 11.4 L5.6 11.1 L5.1 10.5 L4.6 11.2 L4.2 10.6 L3.7 10.8 L3.3 10.5 L2.8 11.0 L2.3 11.5 L1.9 10.5 L1.4 10.3 L1.0 10.1 L0.5 9.3 Z" fill="#d41414"/><path d="M4.50 0.6 V16.30" stroke="#3c3430" stroke-width="0.55" fill="none" opacity="0.85"/><path d="M31.00 0.6 V16.30" stroke="#3c3430" stroke-width="0.55" fill="none" opacity="0.85"/><path d="M4.50 0.60 C8.80 12.38 18.82 16.20 39.70 16.30" stroke="#3c3430" stroke-width="0.55" fill="none" opacity="0.85"/><rect x="1.30" y="1.9" width="5.85" height="4.6" rx="0.8" fill="#554a46" fill-opacity="0.85" stroke="#e8e8e8" stroke-opacity="0.85" stroke-width="0.55"/><text x="2.40" y="5.75" font-family="Liberation Sans" font-weight="bold" font-size="4.5" fill="#fff" stroke="#fff" stroke-width="0.32" textLength="3.45" lengthAdjust="spacingAndGlyphs">M</text><rect x="0.4" y="0.4" width="39.50" height="16.10" fill="none" stroke="#4a4442" stroke-width="0.8"/></svg>
<svg class="a" style="left:333.10px;top:196.45px" width="24.80" height="16.90" viewBox="0 0 24.80 16.90"><rect x="0.4" y="0.4" width="24.00" height="16.10" fill="#c9b3f1"/><path d="M0.8 8.79 H24.00" stroke="#5c22d8" stroke-width="0.45" opacity="0.55"/><path d="M0.5 8.0 L1.0 7.2 L1.4 6.6 L1.9 6.2 L2.3 4.9 L2.8 5.5 L3.3 4.5 L3.7 5.9 L4.2 4.9 L4.7 6.1 L5.1 5.6 L5.6 5.2 L6.0 6.4 L6.5 5.8 L7.0 6.1 L7.4 5.8 L7.9 6.6 L8.4 7.0 L8.8 6.9 L9.3 7.0 L9.7 6.9 L10.2 7.1 L10.7 7.2 L11.1 7.6 L11.6 7.6 L12.0 7.8 L12.5 7.7 L13.0 7.8 L13.4 8.1 L13.9 8.1 L14.4 8.2 L14.8 8.3 L15.3 8.3 L15.7 8.4 L16.2 8.4 L16.7 8.4 L17.1 8.5 L17.6 8.5 L18.1 8.5 L18.5 8.5 L19.0 8.5 L19.4 8.5 L19.9 8.5 L19.9 9.0 L19.4 9.0 L19.0 9.0 L18.5 9.0 L18.1 9.0 L17.6 9.0 L17.1 9.1 L16.7 9.1 L16.2 9.2 L15.7 9.2 L15.3 9.3 L14.8 9.3 L14.4 9.4 L13.9 9.4 L13.4 9.3 L13.0 9.6 L12.5 9.8 L12.0 9.7 L11.6 10.0 L11.1 10.0 L10.7 10.5 L10.2 10.5 L9.7 10.4 L9.3 10.2 L8.8 10.3 L8.4 10.2 L7.9 10.6 L7.4 11.8 L7.0 11.4 L6.5 11.7 L6.0 11.2 L5.6 12.1 L5.1 11.7 L4.7 11.2 L4.2 12.8 L3.7 11.7 L3.3 12.3 L2.8 12.2 L2.3 12.7 L1.9 10.9 L1.4 10.9 L1.0 10.2 L0.5 9.4 Z" fill="#5c22d8"/><path d="M3.90 0.6 V16.30" stroke="#3c3430" stroke-width="0.55" fill="none" opacity="0.85"/><path d="M3.90 0.60 C6.41 12.38 12.26 16.20 24.20 16.30" stroke="#3c3430" stroke-width="0.55" fill="none" opacity="0.85"/><rect x="0.4" y="0.4" width="24.00" height="16.10" fill="none" stroke="#4a4442" stroke-width="0.8"/></svg>
<svg class="a" style="left:651.20px;top:196.45px" width="19.50" height="16.90" viewBox="0 0 19.50 16.90"><rect x="0.4" y="0.4" width="18.70" height="16.10" fill="#efc2ba"/><path d="M0.8 8.79 H18.70" stroke="#d41414" stroke-width="0.45" opacity="0.55"/><path d="M0.8 8.2 L1.3 7.8 L1.7 7.0 L2.2 7.0 L2.6 6.7 L3.1 6.0 L3.5 6.2 L4.0 6.1 L4.5 6.1 L4.9 6.0 L5.4 6.5 L5.8 7.0 L6.3 6.4 L6.7 6.8 L7.2 6.5 L7.7 6.5 L8.1 7.1 L8.6 6.4 L9.0 6.9 L9.5 6.8 L9.9 6.5 L10.4 7.1 L10.9 6.1 L11.3 6.7 L11.8 7.5 L12.2 7.7 L12.7 7.6 L13.1 7.9 L13.6 8.1 L14.1 8.1 L14.5 8.3 L15.0 8.4 L15.4 8.5 L15.9 8.5 L16.3 8.5 L16.8 8.5 L16.8 9.0 L16.3 9.0 L15.9 9.1 L15.4 9.1 L15.0 9.1 L14.5 9.3 L14.1 9.5 L13.6 9.5 L13.1 9.5 L12.7 9.7 L12.2 9.7 L11.8 10.1 L11.3 10.5 L10.9 11.6 L10.4 10.2 L9.9 10.7 L9.5 10.4 L9.0 10.2 L8.6 11.3 L8.1 10.5 L7.7 11.1 L7.2 10.8 L6.7 10.7 L6.3 10.7 L5.8 10.5 L5.4 10.6 L4.9 11.4 L4.5 11.2 L4.0 10.9 L3.5 10.7 L3.1 11.2 L2.6 10.8 L2.2 10.5 L1.7 10.3 L1.3 9.7 L0.8 9.4 Z" fill="#d41414"/><path d="M10.80 0.6 V16.30" stroke="#3c3430" stroke-width="0.55" fill="none" opacity="0.85"/><path d="M10.80 0.60 L18.90 16.30" stroke="#3c3430" stroke-width="0.55" fill="none" opacity="0.85"/><rect x="1.30" y="1.9" width="8.38" height="4.6" rx="0.8" fill="#554a46" fill-opacity="0.85" stroke="#e8e8e8" stroke-opacity="0.85" stroke-width="0.55"/><text x="2.40" y="5.75" font-family="Liberation Sans" font-weight="bold" font-size="4.5" fill="#fff" stroke="#fff" stroke-width="0.32" textLength="5.98" lengthAdjust="spacingAndGlyphs">24-</text><rect x="0.4" y="0.4" width="18.70" height="16.10" fill="none" stroke="#4a4442" stroke-width="0.8"/></svg>
<svg class="a" style="left:331.40px;top:214.95px" width="83.60" height="16.90" viewBox="0 0 83.60 16.90"><rect x="0.4" y="0.4" width="82.80" height="16.10" fill="#c9b3f1"/><path d="M0.8 8.79 H82.80" stroke="#5c22d8" stroke-width="0.45" opacity="0.55"/><path d="M0.6 8.2 L1.1 7.3 L1.5 5.6 L2.0 5.2 L2.4 4.8 L2.9 5.7 L3.3 6.1 L3.8 5.4 L4.2 5.4 L4.7 4.7 L5.1 4.5 L5.6 6.2 L6.1 4.5 L6.5 4.8 L7.0 6.1 L7.4 5.5 L7.9 4.9 L8.3 5.1 L8.8 4.4 L9.2 4.8 L9.7 5.1 L10.1 6.1 L10.6 5.2 L11.1 5.2 L11.5 6.0 L12.0 6.0 L12.4 4.4 L12.9 6.0 L13.3 6.2 L13.8 5.9 L14.2 5.2 L14.7 6.3 L15.1 6.3 L15.6 6.5 L16.1 6.2 L16.5 5.1 L17.0 6.5 L17.4 5.7 L17.9 5.4 L18.3 5.5 L18.8 6.4 L19.2 5.8 L19.7 5.7 L20.1 6.2 L20.6 6.4 L21.1 6.6 L21.5 6.8 L22.0 6.4 L22.4 6.4 L22.9 6.7 L23.3 7.1 L23.8 7.0 L24.2 7.1 L24.7 7.0 L25.1 7.4 L25.6 7.1 L26.1 7.3 L26.5 7.2 L27.0 7.5 L27.4 7.4 L27.9 7.5 L28.3 7.3 L28.8 7.7 L29.2 7.7 L29.7 7.5 L30.1 7.5 L30.6 7.9 L31.1 7.9 L31.5 7.8 L32.0 7.9 L32.4 7.9 L32.9 7.9 L33.3 7.9 L33.8 8.0 L34.2 7.9 L34.7 8.0 L35.1 8.2 L35.6 8.1 L36.1 8.0 L36.5 8.1 L37.0 8.1 L37.4 8.3 L37.9 8.3 L38.3 8.3 L38.8 8.2 L39.2 8.3 L39.7 8.3 L40.1 8.4 L40.6 8.3 L41.1 8.3 L41.5 8.4 L42.0 8.4 L42.4 8.4 L42.9 8.4 L43.3 8.4 L43.8 8.4 L44.2 8.5 L44.7 8.5 L45.1 8.5 L45.6 8.5 L46.1 8.5 L46.5 8.5 L47.0 8.5 L47.4 8.5 L47.9 8.5 L48.3 8.5 L48.8 8.5 L49.2 8.5 L49.7 8.5 L50.1 8.5 L50.6 8.5 L50.6 9.0 L50.1 9.0 L49.7 9.0 L49.2 9.0 L48.8 9.0 L48.3 9.0 L47.9 9.0 L47.4 9.0 L47.0 9.0 L46.5 9.1 L46.1 9.1 L45.6 9.0 L45.1 9.1 L44.7 9.0 L44.2 9.0 L43.8 9.1 L43.3 9.1 L42.9 9.1 L42.4 9.1 L42.0 9.1 L41.5 9.2 L41.1 9.2 L40.6 9.2 L40.1 9.2 L39.7 9.2 L39.2 9.2 L38.8 9.3 L38.3 9.2 L37.9 9.2 L37.4 9.3 L37.0 9.5 L36.5 9.4 L36.1 9.6 L35.6 9.3 L35.1 9.4 L34.7 9.4 L34.2 9.7 L33.8 9.4 L33.3 9.7 L32.9 9.6 L32.4 9.5 L32.0 9.5 L31.5 9.6 L31.1 9.5 L30.6 9.6 L30.1 9.9 L29.7 10.1 L29.2 9.7 L28.8 9.9 L28.3 10.3 L27.9 10.0 L27.4 9.9 L27.0 10.0 L26.5 10.3 L26.1 10.0 L25.6 10.5 L25.1 9.9 L24.7 10.6 L24.2 10.1 L23.8 10.2 L23.3 10.2 L22.9 10.5 L22.4 11.2 L22.0 11.2 L21.5 10.8 L21.1 11.0 L20.6 10.9 L20.1 11.3 L19.7 11.7 L19.2 11.2 L18.8 10.9 L18.3 11.8 L17.9 11.5 L17.4 11.7 L17.0 10.6 L16.5 12.0 L16.1 10.7 L15.6 10.9 L15.1 11.0 L14.7 11.2 L14.2 11.6 L13.8 11.5 L13.3 10.9 L12.9 11.6 L12.4 12.4 L12.0 10.9 L11.5 11.4 L11.1 12.1 L10.6 11.7 L10.1 11.3 L9.7 11.8 L9.2 12.8 L8.8 12.8 L8.3 11.9 L7.9 11.7 L7.4 11.6 L7.0 10.9 L6.5 12.6 L6.1 12.3 L5.6 11.2 L5.1 12.9 L4.7 13.0 L4.2 12.2 L3.8 11.8 L3.3 10.8 L2.9 11.2 L2.4 12.3 L2.0 12.4 L1.5 11.6 L1.1 10.2 L0.6 9.3 Z" fill="#5c22d8"/><path d="M3.10 0.6 V16.30" stroke="#3c3430" stroke-width="0.55" fill="none" opacity="0.85"/><path d="M12.60 0.6 V16.30" stroke="#3c3430" stroke-width="0.55" fill="none" opacity="0.85"/><path d="M12.60 0.60 C21.12 12.38 41.00 16.20 83.00 16.30" stroke="#3c3430" stroke-width="0.55" fill="none" opacity="0.85"/><rect x="1.60" y="1.9" width="10.91" height="4.6" rx="0.8" fill="#554a46" fill-opacity="0.85" stroke="#e8e8e8" stroke-opacity="0.85" stroke-width="0.55"/><text x="2.70" y="5.75" font-family="Liberation Sans" font-weight="bold" font-size="4.5" fill="#fff" stroke="#fff" stroke-width="0.32" textLength="8.51" lengthAdjust="spacingAndGlyphs">SOT</text><rect x="0.4" y="0.4" width="82.80" height="16.10" fill="none" stroke="#4a4442" stroke-width="0.8"/></svg>
<svg class="a" style="left:656.20px;top:214.95px" width="24.80" height="16.90" viewBox="0 0 24.80 16.90"><rect x="0.4" y="0.4" width="24.00" height="16.10" fill="#efcbb8"/><path d="M0.8 8.79 H24.00" stroke="#e05a10" stroke-width="0.45" opacity="0.55"/><path d="M2.8 8.3 L3.3 7.8 L3.7 7.5 L4.2 7.3 L4.7 7.4 L5.1 7.2 L5.6 7.0 L6.1 7.4 L6.5 7.0 L7.0 7.0 L7.5 7.3 L7.9 7.1 L8.4 7.2 L8.9 7.3 L9.3 7.8 L9.8 7.9 L10.3 8.0 L10.7 7.7 L11.2 7.9 L11.7 8.1 L12.1 8.2 L12.6 8.3 L13.1 8.3 L13.5 8.4 L14.0 8.4 L14.5 8.5 L14.9 8.5 L15.4 8.5 L15.9 8.5 L16.3 8.5 L16.8 8.5 L16.8 9.0 L16.3 9.0 L15.9 9.1 L15.4 9.0 L14.9 9.1 L14.5 9.1 L14.0 9.1 L13.5 9.2 L13.1 9.2 L12.6 9.2 L12.1 9.2 L11.7 9.4 L11.2 9.5 L10.7 9.6 L10.3 9.5 L9.8 9.6 L9.3 9.7 L8.9 10.1 L8.4 10.2 L7.9 10.1 L7.5 9.9 L7.0 10.2 L6.5 10.2 L6.1 10.1 L5.6 10.5 L5.1 10.2 L4.7 10.2 L4.2 10.2 L3.7 9.9 L3.3 9.7 L2.8 9.3 Z" fill="#e05a10"/><path d="M3.80 0.6 V16.30" stroke="#3c3430" stroke-width="0.55" fill="none" opacity="0.85"/><path d="M6.80 0.6 V16.30" stroke="#3c3430" stroke-width="0.55" fill="none" opacity="0.85"/><path d="M0.6 16.30 L3.80 0.60" stroke="#3c3430" stroke-width="0.55" fill="none" opacity="0.85"/><path d="M6.80 0.60 C8.96 12.38 14.00 16.20 24.20 16.30" stroke="#3c3430" stroke-width="0.55" fill="none" opacity="0.85"/><rect x="0.4" y="0.4" width="24.00" height="16.10" fill="none" stroke="#4a4442" stroke-width="0.8"/></svg>
<svg class="a" style="left:659.00px;top:233.45px" width="16.00" height="16.90" viewBox="0 0 16.00 16.90"><rect x="0.4" y="0.4" width="15.20" height="16.10" fill="#efcbb8"/><path d="M0.8 8.79 H15.20" stroke="#e05a10" stroke-width="0.45" opacity="0.55"/><path d="M1.0 8.4 L1.5 7.9 L1.9 7.6 L2.4 7.7 L2.9 7.3 L3.4 7.6 L3.8 7.4 L4.3 7.3 L4.8 7.6 L5.3 7.3 L5.7 7.9 L6.2 7.8 L6.7 8.1 L7.2 8.2 L7.6 8.4 L8.1 8.4 L8.6 8.5 L9.1 8.5 L9.5 8.5 L10.0 8.5 L10.0 9.0 L9.5 9.0 L9.1 9.1 L8.6 9.1 L8.1 9.1 L7.6 9.1 L7.2 9.3 L6.7 9.5 L6.2 9.8 L5.7 9.6 L5.3 9.9 L4.8 9.8 L4.3 10.3 L3.8 10.0 L3.4 9.7 L2.9 10.0 L2.4 9.7 L1.9 9.8 L1.5 9.5 L1.0 9.2 Z" fill="#e05a10"/><path d="M5.00 0.6 V16.30" stroke="#3c3430" stroke-width="0.55" fill="none" opacity="0.85"/><path d="M10.00 0.6 V16.30" stroke="#3c3430" stroke-width="0.55" fill="none" opacity="0.85"/><path d="M5.00 0.60 L15.40 16.30" stroke="#3c3430" stroke-width="0.55" fill="none" opacity="0.85"/><rect x="1.50" y="1.9" width="4.93" height="4.6" rx="0.8" fill="#554a46" fill-opacity="0.85" stroke="#e8e8e8" stroke-opacity="0.85" stroke-width="0.55"/><text x="2.60" y="5.75" font-family="Liberation Sans" font-weight="bold" font-size="4.5" fill="#fff" stroke="#fff" stroke-width="0.32" textLength="2.53" lengthAdjust="spacingAndGlyphs">L</text><rect x="0.4" y="0.4" width="15.20" height="16.10" fill="none" stroke="#4a4442" stroke-width="0.8"/></svg>
<svg class="a" style="left:662.20px;top:251.95px" width="36.90" height="16.90" viewBox="0 0 36.90 16.90"><rect x="0.4" y="0.4" width="36.10" height="16.10" fill="#efcbb8"/><path d="M0.8 8.79 H36.10" stroke="#e05a10" stroke-width="0.45" opacity="0.55"/><path d="M5.8 8.4 L6.3 7.8 L6.7 7.6 L7.2 7.5 L7.6 7.1 L8.1 7.6 L8.6 7.6 L9.0 7.2 L9.5 7.6 L9.9 7.1 L10.4 7.2 L10.9 7.3 L11.3 7.3 L11.8 7.3 L12.2 7.2 L12.7 7.2 L13.2 7.0 L13.6 7.2 L14.1 7.4 L14.5 7.2 L15.0 7.5 L15.5 7.6 L15.9 7.6 L16.4 7.5 L16.8 7.4 L17.3 7.1 L17.8 7.1 L18.2 7.0 L18.7 7.5 L19.1 7.3 L19.6 7.0 L20.1 7.7 L20.5 7.4 L21.0 7.6 L21.4 7.6 L21.9 7.8 L22.4 8.0 L22.8 8.0 L23.3 8.2 L23.7 8.1 L24.2 8.3 L24.7 8.3 L25.1 8.4 L25.6 8.4 L26.0 8.4 L26.5 8.5 L27.0 8.5 L27.4 8.5 L27.9 8.5 L28.3 8.5 L28.8 8.5 L28.8 9.0 L28.3 9.0 L27.9 9.0 L27.4 9.0 L27.0 9.0 L26.5 9.1 L26.0 9.1 L25.6 9.0 L25.1 9.2 L24.7 9.2 L24.2 9.3 L23.7 9.3 L23.3 9.3 L22.8 9.4 L22.4 9.4 L21.9 9.7 L21.4 9.9 L21.0 9.8 L20.5 10.1 L20.1 9.8 L19.6 10.2 L19.1 10.0 L18.7 10.0 L18.2 10.3 L17.8 10.3 L17.3 10.5 L16.8 10.1 L16.4 10.0 L15.9 9.9 L15.5 10.0 L15.0 9.9 L14.5 10.1 L14.1 9.9 L13.6 10.2 L13.2 10.6 L12.7 10.1 L12.2 10.2 L11.8 10.1 L11.3 10.2 L10.9 10.3 L10.4 10.4 L9.9 10.1 L9.5 10.0 L9.0 10.2 L8.6 9.9 L8.1 10.0 L7.6 10.6 L7.2 10.0 L6.7 10.1 L6.3 9.6 L5.8 9.2 Z" fill="#e05a10"/><path d="M29.80 0.6 V16.30" stroke="#3c3430" stroke-width="0.55" fill="none" opacity="0.85"/><path d="M29.80 0.60 L36.30 16.30" stroke="#3c3430" stroke-width="0.55" fill="none" opacity="0.85"/><rect x="2.80" y="1.9" width="27.46" height="4.6" rx="0.8" fill="#554a46" fill-opacity="0.85" stroke="#e8e8e8" stroke-opacity="0.85" stroke-width="0.55"/><text x="3.90" y="5.75" font-family="Liberation Sans" font-weight="bold" font-size="4.5" fill="#fff" stroke="#fff" stroke-width="0.32" textLength="25.06" lengthAdjust="spacingAndGlyphs">MACK Whoo</text><rect x="1.8" y="10.60" width="20.59" height="4.6" rx="0.7" fill="#554a46" fill-opacity="0.85" stroke="#e8e8e8" stroke-opacity="0.85" stroke-width="0.55"/><circle cx="4.2" cy="12.90" r="1.5" fill="none" stroke="#fff" stroke-width="0.45"/><path d="M4.2 11.90 v2" stroke="#fff" stroke-width="0.45"/><text x="6.4" y="14.60" font-family="Liberation Sans" font-weight="bold" font-size="4.3" fill="#fff" stroke="#fff" stroke-width="0.3">-2.6 dB</text><rect x="0.4" y="0.4" width="36.10" height="16.10" fill="none" stroke="#4a4442" stroke-width="0.8"/></svg>
<svg class="a" style="left:673.40px;top:270.45px" width="23.10" height="16.90" viewBox="0 0 23.10 16.90"><rect x="0.4" y="0.4" width="22.30" height="16.10" fill="#efcbb8"/><path d="M0.8 8.79 H22.30" stroke="#e05a10" stroke-width="0.45" opacity="0.55"/><path d="M1.6 8.2 L2.1 7.6 L2.5 7.1 L3.0 7.4 L3.4 6.9 L3.9 6.5 L4.4 6.3 L4.8 5.9 L5.3 5.8 L5.7 5.7 L6.2 5.6 L6.7 6.2 L7.1 6.2 L7.6 5.0 L8.0 5.0 L8.5 6.1 L9.0 5.1 L9.4 6.2 L9.9 6.0 L10.3 5.5 L10.8 5.1 L11.2 5.7 L11.7 6.0 L12.2 6.3 L12.6 4.9 L13.1 5.8 L13.5 5.1 L14.0 5.9 L14.5 6.4 L14.9 6.4 L15.4 7.2 L15.8 7.5 L16.3 7.4 L16.8 8.0 L17.2 8.3 L17.7 8.4 L18.1 8.5 L18.6 8.5 L18.6 9.0 L18.1 9.0 L17.7 9.2 L17.2 9.1 L16.8 9.5 L16.3 10.1 L15.8 9.9 L15.4 10.2 L14.9 11.1 L14.5 10.9 L14.0 11.4 L13.5 12.4 L13.1 11.7 L12.6 12.3 L12.2 11.2 L11.7 11.7 L11.2 12.1 L10.8 12.6 L10.3 12.0 L9.9 11.5 L9.4 11.2 L9.0 12.4 L8.5 11.4 L8.0 11.7 L7.6 12.1 L7.1 11.1 L6.7 10.8 L6.2 11.8 L5.7 11.7 L5.3 11.1 L4.8 11.5 L4.4 11.3 L3.9 10.8 L3.4 10.2 L3.0 10.0 L2.5 10.2 L2.1 9.7 L1.6 9.3 Z" fill="#e05a10"/><path d="M16.60 0.6 V16.30" stroke="#3c3430" stroke-width="0.55" fill="none" opacity="0.85"/><path d="M16.60 0.60 L22.50 16.30" stroke="#3c3430" stroke-width="0.55" fill="none" opacity="0.85"/><rect x="4.10" y="1.9" width="13.21" height="4.6" rx="0.8" fill="#554a46" fill-opacity="0.85" stroke="#e8e8e8" stroke-opacity="0.85" stroke-width="0.55"/><text x="5.20" y="5.75" font-family="Liberation Sans" font-weight="bold" font-size="4.5" fill="#fff" stroke="#fff" stroke-width="0.32" textLength="10.81" lengthAdjust="spacingAndGlyphs">MACt</text><rect x="1.8" y="10.60" width="14.22" height="4.6" rx="0.7" fill="#554a46" fill-opacity="0.85" stroke="#e8e8e8" stroke-opacity="0.85" stroke-width="0.55"/><circle cx="4.2" cy="12.90" r="1.5" fill="none" stroke="#fff" stroke-width="0.45"/><path d="M4.2 11.90 v2" stroke="#fff" stroke-width="0.45"/><text x="6.4" y="14.60" font-family="Liberation Sans" font-weight="bold" font-size="4.3" fill="#fff" stroke="#fff" stroke-width="0.3">-1.2</text><rect x="0.4" y="0.4" width="22.30" height="16.10" fill="none" stroke="#4a4442" stroke-width="0.8"/></svg>
<svg class="a" style="left:414.40px;top:288.95px" width="50.50" height="16.90" viewBox="0 0 50.50 16.90"><rect x="0.4" y="0.4" width="49.70" height="16.10" fill="#9cd5d9"/><path d="M0.8 8.79 H49.70" stroke="#1e6a70" stroke-width="0.45" opacity="0.55"/><path d="M1.6 8.5 L2.1 8.2 L2.5 8.2 L3.0 8.1 L3.4 8.1 L3.9 8.0 L4.3 8.1 L4.8 8.1 L5.2 8.1 L5.7 8.0 L6.2 8.1 L6.6 8.0 L7.1 7.9 L7.5 8.1 L8.0 7.9 L8.4 8.0 L8.9 8.1 L9.3 8.1 L9.8 7.9 L10.3 7.9 L10.7 8.0 L11.2 7.9 L11.6 7.9 L12.1 8.0 L12.5 8.0 L13.0 8.1 L13.4 7.9 L13.9 8.1 L14.4 8.0 L14.8 7.9 L15.3 7.8 L15.7 7.8 L16.2 8.0 L16.6 7.9 L17.1 8.1 L17.5 8.0 L18.0 8.0 L18.5 7.9 L18.9 8.1 L19.4 8.1 L19.8 8.1 L20.3 8.0 L20.7 7.9 L21.2 8.2 L21.6 7.9 L22.1 8.1 L22.6 7.9 L23.0 8.1 L23.5 8.0 L23.9 8.1 L24.4 8.1 L24.8 7.9 L25.3 8.0 L25.7 7.9 L26.2 8.0 L26.6 8.1 L27.1 8.0 L27.6 7.9 L28.0 8.0 L28.5 8.0 L28.9 8.1 L29.4 8.1 L29.8 7.9 L30.3 7.9 L30.7 7.9 L31.2 8.0 L31.7 7.9 L32.1 8.0 L32.6 7.9 L33.0 8.0 L33.5 8.0 L33.9 8.0 L34.4 7.8 L34.8 8.1 L35.3 8.1 L35.8 7.9 L36.2 7.9 L36.7 8.0 L37.1 7.9 L37.6 8.0 L38.0 7.8 L38.5 8.1 L38.9 8.1 L39.4 8.1 L39.9 7.9 L40.3 8.0 L40.8 8.1 L41.2 8.0 L41.7 8.2 L42.1 8.3 L42.6 8.3 L43.0 8.3 L43.5 8.4 L44.0 8.4 L44.4 8.4 L44.9 8.5 L45.3 8.5 L45.8 8.5 L46.2 8.5 L46.7 8.5 L47.1 8.5 L47.6 8.5 L47.6 9.0 L47.1 9.0 L46.7 9.0 L46.2 9.0 L45.8 9.0 L45.3 9.1 L44.9 9.0 L44.4 9.1 L44.0 9.1 L43.5 9.1 L43.0 9.2 L42.6 9.3 L42.1 9.2 L41.7 9.4 L41.2 9.4 L40.8 9.5 L40.3 9.6 L39.9 9.6 L39.4 9.4 L38.9 9.5 L38.5 9.4 L38.0 9.6 L37.6 9.5 L37.1 9.6 L36.7 9.5 L36.2 9.5 L35.8 9.5 L35.3 9.4 L34.8 9.4 L34.4 9.5 L33.9 9.5 L33.5 9.5 L33.0 9.6 L32.6 9.5 L32.1 9.5 L31.7 9.7 L31.2 9.4 L30.7 9.5 L30.3 9.5 L29.8 9.7 L29.4 9.4 L28.9 9.3 L28.5 9.5 L28.0 9.5 L27.6 9.6 L27.1 9.5 L26.6 9.5 L26.2 9.6 L25.7 9.5 L25.3 9.4 L24.8 9.7 L24.4 9.5 L23.9 9.5 L23.5 9.6 L23.0 9.3 L22.6 9.7 L22.1 9.4 L21.6 9.7 L21.2 9.4 L20.7 9.5 L20.3 9.5 L19.8 9.5 L19.4 9.3 L18.9 9.4 L18.5 9.5 L18.0 9.5 L17.5 9.6 L17.1 9.4 L16.6 9.7 L16.2 9.5 L15.7 9.7 L15.3 9.7 L14.8 9.5 L14.4 9.4 L13.9 9.4 L13.4 9.5 L13.0 9.5 L12.5 9.5 L12.1 9.5 L11.6 9.6 L11.2 9.7 L10.7 9.6 L10.3 9.7 L9.8 9.5 L9.3 9.5 L8.9 9.4 L8.4 9.4 L8.0 9.5 L7.5 9.3 L7.1 9.5 L6.6 9.5 L6.2 9.5 L5.7 9.6 L5.2 9.5 L4.8 9.4 L4.3 9.3 L3.9 9.6 L3.4 9.4 L3.0 9.3 L2.5 9.2 L2.1 9.3 L1.6 9.1 Z" fill="#1e6a70"/><path d="M5.60 0.6 V16.30" stroke="#3c3430" stroke-width="0.55" fill="none" opacity="0.85"/><path d="M39.60 0.6 V16.30" stroke="#3c3430" stroke-width="0.55" fill="none" opacity="0.85"/><path d="M0.6 16.30 L5.60 0.60" stroke="#3c3430" stroke-width="0.55" fill="none" opacity="0.85"/><path d="M40.60 0.60 L49.90 16.30" stroke="#3c3430" stroke-width="0.55" fill="none" opacity="0.85"/><rect x="6.60" y="1.9" width="29.78" height="4.6" rx="0.8" fill="#554a46" fill-opacity="0.85" stroke="#e8e8e8" stroke-opacity="0.85" stroke-width="0.55"/><text x="7.70" y="5.75" font-family="Liberation Sans" font-weight="bold" font-size="4.5" fill="#fff" stroke="#fff" stroke-width="0.32" textLength="27.38" lengthAdjust="spacingAndGlyphs">UWT01_02 Ca</text><rect x="1.8" y="10.60" width="22.79" height="4.6" rx="0.7" fill="#554a46" fill-opacity="0.85" stroke="#e8e8e8" stroke-opacity="0.85" stroke-width="0.55"/><circle cx="4.2" cy="12.90" r="1.5" fill="none" stroke="#fff" stroke-width="0.45"/><path d="M4.2 11.90 v2" stroke="#fff" stroke-width="0.45"/><text x="6.4" y="14.60" font-family="Liberation Sans" font-weight="bold" font-size="4.3" fill="#fff" stroke="#fff" stroke-width="0.3">-13.3 dB</text><rect x="0.4" y="0.4" width="49.70" height="16.10" fill="none" stroke="#4a4442" stroke-width="0.8"/></svg>
<svg class="a" style="left:667.20px;top:288.95px" width="55.80" height="16.90" viewBox="0 0 55.80 16.90"><rect x="0.4" y="0.4" width="55.00" height="16.10" fill="#b2eaaa"/><path d="M0.8 8.79 H55.00" stroke="#22c818" stroke-width="0.45" opacity="0.55"/><path d="M0.8 8.1 L1.3 7.9 L1.7 7.6 L2.2 7.0 L2.6 6.5 L3.1 6.7 L3.5 6.1 L4.0 6.5 L4.4 6.0 L4.9 6.3 L5.3 5.7 L5.8 5.7 L6.3 6.3 L6.7 6.7 L7.2 5.8 L7.6 6.5 L8.1 6.8 L8.5 5.6 L9.0 6.2 L9.4 6.1 L9.9 5.9 L10.3 5.7 L10.8 6.4 L11.3 5.9 L11.7 5.7 L12.2 6.3 L12.6 6.9 L13.1 6.1 L13.5 7.0 L14.0 6.9 L14.4 6.5 L14.9 7.1 L15.3 7.3 L15.8 7.2 L16.3 7.3 L16.7 7.2 L17.2 7.1 L17.6 7.6 L18.1 7.2 L18.5 7.7 L19.0 7.9 L19.4 7.5 L19.9 7.9 L20.3 7.8 L20.8 8.0 L21.3 8.1 L21.7 8.1 L22.2 8.1 L22.6 8.2 L23.1 8.2 L23.5 8.3 L24.0 8.2 L24.4 8.3 L24.9 8.3 L25.3 8.4 L25.8 8.4 L26.3 8.4 L26.7 8.5 L27.2 8.5 L27.6 8.5 L28.1 8.5 L28.5 8.5 L29.0 8.5 L29.4 8.5 L29.9 8.5 L30.3 8.5 L30.8 8.5 L30.8 9.0 L30.3 9.0 L29.9 9.0 L29.4 9.1 L29.0 9.1 L28.5 9.1 L28.1 9.0 L27.6 9.0 L27.2 9.1 L26.7 9.0 L26.3 9.1 L25.8 9.1 L25.3 9.2 L24.9 9.2 L24.4 9.2 L24.0 9.4 L23.5 9.3 L23.1 9.3 L22.6 9.4 L22.2 9.5 L21.7 9.4 L21.3 9.5 L20.8 9.4 L20.3 9.8 L19.9 9.5 L19.4 9.9 L19.0 9.7 L18.5 9.9 L18.1 10.0 L17.6 9.8 L17.2 10.2 L16.7 10.3 L16.3 10.2 L15.8 10.1 L15.3 9.9 L14.9 10.5 L14.4 10.9 L14.0 10.4 L13.5 10.6 L13.1 10.8 L12.6 10.5 L12.2 11.3 L11.7 11.7 L11.3 11.4 L10.8 11.0 L10.3 11.7 L9.9 11.3 L9.4 11.1 L9.0 11.2 L8.5 11.6 L8.1 10.8 L7.6 10.6 L7.2 11.5 L6.7 10.8 L6.3 11.2 L5.8 11.3 L5.3 12.1 L4.9 10.7 L4.4 11.1 L4.0 11.0 L3.5 11.3 L3.1 10.5 L2.6 10.8 L2.2 10.2 L1.7 9.9 L1.3 9.5 L0.8 9.3 Z" fill="#22c818"/><path d="M37.80 0.6 V16.30" stroke="#3c3430" stroke-width="0.55" fill="none" opacity="0.85"/><path d="M37.80 0.60 L55.20 16.30" stroke="#3c3430" stroke-width="0.55" fill="none" opacity="0.85"/><rect x="3.80" y="1.9" width="33.91" height="4.6" rx="0.8" fill="#554a46" fill-opacity="0.85" stroke="#e8e8e8" stroke-opacity="0.85" stroke-width="0.55"/><text x="4.90" y="5.75" font-family="Liberation Sans" font-weight="bold" font-size="4.5" fill="#fff" stroke="#fff" stroke-width="0.32" textLength="31.51" lengthAdjust="spacingAndGlyphs">WHOOSH_Blast</text><rect x="1.8" y="10.60" width="20.59" height="4.6" rx="0.7" fill="#554a46" fill-opacity="0.85" stroke="#e8e8e8" stroke-opacity="0.85" stroke-width="0.55"/><circle cx="4.2" cy="12.90" r="1.5" fill="none" stroke="#fff" stroke-width="0.45"/><path d="M4.2 11.90 v2" stroke="#fff" stroke-width="0.45"/><text x="6.4" y="14.60" font-family="Liberation Sans" font-weight="bold" font-size="4.3" fill="#fff" stroke="#fff" stroke-width="0.3">-4.6 dB</text><rect x="0.4" y="0.4" width="55.00" height="16.10" fill="none" stroke="#4a4442" stroke-width="0.8"/></svg>
<svg class="a" style="left:199.10px;top:307.45px" width="37.20" height="16.90" viewBox="0 0 37.20 16.90"><rect x="0.4" y="0.4" width="36.40" height="16.10" fill="#efc2ba"/><path d="M0.8 8.79 H36.40" stroke="#d41414" stroke-width="0.45" opacity="0.55"/><path d="M0.4 8.0 L0.9 6.3 L1.3 5.4 L1.8 4.8 L2.2 4.5 L2.7 4.6 L3.2 4.8 L3.6 6.2 L4.1 4.7 L4.5 4.8 L5.0 4.5 L5.5 5.3 L5.9 5.1 L6.4 6.2 L6.9 5.6 L7.3 5.4 L7.8 6.1 L8.2 5.2 L8.7 6.1 L9.2 5.7 L9.6 7.0 L10.1 6.3 L10.5 6.7 L11.0 6.4 L11.5 7.3 L11.9 7.0 L12.4 6.8 L12.8 7.4 L13.3 7.7 L13.8 7.4 L14.2 7.3 L14.7 7.5 L15.1 7.9 L15.6 7.8 L16.1 7.9 L16.5 7.9 L17.0 8.1 L17.4 8.2 L17.9 8.2 L18.4 8.2 L18.8 8.3 L19.3 8.4 L19.8 8.4 L20.2 8.4 L20.7 8.5 L21.1 8.5 L21.6 8.5 L22.1 8.5 L22.5 8.5 L23.0 8.5 L23.4 8.5 L23.9 8.5 L23.9 9.0 L23.4 9.0 L23.0 9.0 L22.5 9.0 L22.1 9.1 L21.6 9.1 L21.1 9.1 L20.7 9.1 L20.2 9.2 L19.8 9.2 L19.3 9.2 L18.8 9.3 L18.4 9.2 L17.9 9.3 L17.4 9.2 L17.0 9.4 L16.5 9.5 L16.1 9.5 L15.6 9.7 L15.1 9.5 L14.7 9.8 L14.2 10.1 L13.8 10.0 L13.3 9.7 L12.8 10.2 L12.4 10.3 L11.9 10.2 L11.5 10.0 L11.0 11.1 L10.5 10.9 L10.1 10.8 L9.6 10.3 L9.2 11.9 L8.7 11.1 L8.2 12.2 L7.8 11.2 L7.3 11.6 L6.9 11.8 L6.4 11.5 L5.9 11.8 L5.5 12.0 L5.0 12.2 L4.5 12.2 L4.1 11.9 L3.6 11.2 L3.2 13.0 L2.7 12.7 L2.2 13.1 L1.8 12.4 L1.3 12.0 L0.9 11.3 L0.4 9.5 Z" fill="#d41414"/><path d="M3.90 0.6 V16.30" stroke="#3c3430" stroke-width="0.55" fill="none" opacity="0.85"/><path d="M3.90 0.60 C7.90 12.38 17.22 16.20 36.60 16.30" stroke="#3c3430" stroke-width="0.55" fill="none" opacity="0.85"/><rect x="1.40" y="1.9" width="5.39" height="4.6" rx="0.8" fill="#554a46" fill-opacity="0.85" stroke="#e8e8e8" stroke-opacity="0.85" stroke-width="0.55"/><text x="2.50" y="5.75" font-family="Liberation Sans" font-weight="bold" font-size="4.5" fill="#fff" stroke="#fff" stroke-width="0.32" textLength="2.99" lengthAdjust="spacingAndGlyphs">C</text><rect x="0.4" y="0.4" width="36.40" height="16.10" fill="none" stroke="#4a4442" stroke-width="0.8"/></svg>
<svg class="a" style="left:427.40px;top:307.45px" width="60.10" height="16.90" viewBox="0 0 60.10 16.90"><rect x="0.4" y="0.4" width="59.30" height="16.10" fill="#9cd5d9"/><path d="M0.8 8.79 H59.30" stroke="#1e6a70" stroke-width="0.45" opacity="0.55"/><path d="M0.6 8.4 L1.1 8.1 L1.5 7.9 L2.0 7.7 L2.4 7.8 L2.9 7.6 L3.3 7.6 L3.8 7.7 L4.3 7.8 L4.7 7.7 L5.2 7.6 L5.6 7.8 L6.1 7.6 L6.5 7.8 L7.0 7.6 L7.5 8.0 L7.9 7.8 L8.4 7.8 L8.8 8.0 L9.3 7.7 L9.7 8.0 L10.2 8.0 L10.7 7.9 L11.1 7.8 L11.6 7.9 L12.0 7.8 L12.5 7.9 L12.9 7.7 L13.4 7.8 L13.9 7.6 L14.3 7.7 L14.8 7.7 L15.2 7.6 L15.7 7.6 L16.1 7.7 L16.6 7.9 L17.1 7.9 L17.5 7.7 L18.0 7.9 L18.4 7.7 L18.9 7.6 L19.3 7.8 L19.8 7.6 L20.3 7.6 L20.7 7.8 L21.2 7.7 L21.6 7.9 L22.1 8.0 L22.5 7.9 L23.0 7.7 L23.5 7.8 L23.9 7.9 L24.4 7.6 L24.8 7.6 L25.3 7.7 L25.7 7.7 L26.2 7.9 L26.7 7.7 L27.1 7.6 L27.6 7.7 L28.0 7.8 L28.5 8.0 L28.9 7.6 L29.4 7.5 L29.9 7.9 L30.3 7.8 L30.8 7.7 L31.2 7.9 L31.7 7.8 L32.1 7.6 L32.6 7.9 L33.1 7.7 L33.5 7.9 L34.0 7.9 L34.4 7.5 L34.9 7.8 L35.3 7.8 L35.8 7.8 L36.3 7.9 L36.7 8.1 L37.2 8.2 L37.6 8.0 L38.1 8.0 L38.5 8.2 L39.0 8.2 L39.5 8.2 L39.9 8.3 L40.4 8.3 L40.8 8.4 L41.3 8.3 L41.7 8.3 L42.2 8.4 L42.7 8.4 L43.1 8.4 L43.6 8.4 L44.0 8.5 L44.5 8.5 L44.9 8.5 L45.4 8.5 L45.9 8.5 L46.3 8.5 L46.8 8.5 L47.2 8.5 L47.7 8.5 L48.1 8.5 L48.6 8.5 L48.6 9.0 L48.1 9.0 L47.7 9.0 L47.2 9.0 L46.8 9.0 L46.3 9.0 L45.9 9.0 L45.4 9.1 L44.9 9.0 L44.5 9.1 L44.0 9.0 L43.6 9.0 L43.1 9.1 L42.7 9.1 L42.2 9.1 L41.7 9.2 L41.3 9.2 L40.8 9.2 L40.4 9.2 L39.9 9.2 L39.5 9.3 L39.0 9.3 L38.5 9.3 L38.1 9.5 L37.6 9.4 L37.2 9.3 L36.7 9.3 L36.3 9.6 L35.8 9.7 L35.3 9.7 L34.9 9.8 L34.4 9.9 L34.0 9.5 L33.5 9.6 L33.1 9.7 L32.6 9.5 L32.1 10.0 L31.7 9.6 L31.2 9.6 L30.8 9.9 L30.3 9.8 L29.9 9.6 L29.4 9.9 L28.9 10.1 L28.5 9.5 L28.0 9.5 L27.6 9.9 L27.1 9.8 L26.7 9.7 L26.2 9.6 L25.7 9.6 L25.3 9.7 L24.8 9.8 L24.4 9.7 L23.9 9.7 L23.5 9.7 L23.0 9.9 L22.5 9.6 L22.1 9.5 L21.6 9.7 L21.2 10.0 L20.7 9.7 L20.3 10.0 L19.8 9.8 L19.3 9.6 L18.9 10.1 L18.4 9.7 L18.0 9.6 L17.5 9.9 L17.1 9.6 L16.6 9.5 L16.1 9.7 L15.7 9.8 L15.2 9.8 L14.8 9.9 L14.3 9.9 L13.9 9.8 L13.4 9.7 L12.9 9.9 L12.5 9.7 L12.0 9.6 L11.6 9.6 L11.1 9.7 L10.7 9.5 L10.2 9.6 L9.7 9.5 L9.3 9.9 L8.8 9.5 L8.4 9.5 L7.9 9.6 L7.5 9.5 L7.0 9.9 L6.5 9.8 L6.1 9.9 L5.6 9.7 L5.2 9.8 L4.7 9.9 L4.3 9.6 L3.8 9.7 L3.3 9.8 L2.9 9.8 L2.4 9.6 L2.0 9.7 L1.5 9.6 L1.1 9.4 L0.6 9.1 Z" fill="#1e6a70"/><path d="M19.60 0.6 V16.30" stroke="#3c3430" stroke-width="0.55" fill="none" opacity="0.85"/><path d="M30.60 0.6 V16.30" stroke="#3c3430" stroke-width="0.55" fill="none" opacity="0.85"/><path d="M38.10 0.6 V16.30" stroke="#3c3430" stroke-width="0.55" fill="none" opacity="0.85"/><path d="M38.10 0.60 L59.50 16.30" stroke="#3c3430" stroke-width="0.55" fill="none" opacity="0.85"/><path d="M19.60 8.45 A5.6 8 0 0 1 30.60 0.6 M19.60 8.45 A5.6 8 0 0 0 30.60 16.30" stroke="#3c3430" stroke-width="0.55" fill="none" opacity="0.85"/><rect x="1.60" y="1.9" width="14.36" height="4.6" rx="0.8" fill="#554a46" fill-opacity="0.85" stroke="#e8e8e8" stroke-opacity="0.85" stroke-width="0.55"/><text x="2.70" y="5.75" font-family="Liberation Sans" font-weight="bold" font-size="4.5" fill="#fff" stroke="#fff" stroke-width="0.32" textLength="11.96" lengthAdjust="spacingAndGlyphs">Under</text><rect x="31.60" y="1.9" width="7.00" height="4.6" rx="0.8" fill="#554a46" fill-opacity="0.85" stroke="#e8e8e8" stroke-opacity="0.85" stroke-width="0.55"/><text x="32.70" y="5.75" font-family="Liberation Sans" font-weight="bold" font-size="4.5" fill="#fff" stroke="#fff" stroke-width="0.32" textLength="4.60" lengthAdjust="spacingAndGlyphs">Ur</text><rect x="1.8" y="10.60" width="14.22" height="4.6" rx="0.7" fill="#554a46" fill-opacity="0.85" stroke="#e8e8e8" stroke-opacity="0.85" stroke-width="0.55"/><circle cx="4.2" cy="12.90" r="1.5" fill="none" stroke="#fff" stroke-width="0.45"/><path d="M4.2 11.90 v2" stroke="#fff" stroke-width="0.45"/><text x="6.4" y="14.60" font-family="Liberation Sans" font-weight="bold" font-size="4.3" fill="#fff" stroke="#fff" stroke-width="0.3">-8.8</text><rect x="0.4" y="0.4" width="59.30" height="16.10" fill="none" stroke="#4a4442" stroke-width="0.8"/></svg>
<svg class="a" style="left:674.10px;top:307.45px" width="33.40" height="16.90" viewBox="0 0 33.40 16.90"><rect x="0.4" y="0.4" width="32.60" height="16.10" fill="#eadab0"/><path d="M0.8 8.79 H32.60" stroke="#dca21c" stroke-width="0.45" opacity="0.55"/><path d="M0.4 8.2 L0.9 7.7 L1.3 7.6 L1.8 7.1 L2.2 6.4 L2.7 6.1 L3.1 6.3 L3.6 5.6 L4.1 5.6 L4.5 6.5 L5.0 6.5 L5.4 5.6 L5.9 6.1 L6.3 6.4 L6.8 6.6 L7.3 6.0 L7.7 6.2 L8.2 6.9 L8.6 7.1 L9.1 6.7 L9.5 7.1 L10.0 6.9 L10.5 7.4 L10.9 7.5 L11.4 7.7 L11.8 7.8 L12.3 7.7 L12.8 7.7 L13.2 7.8 L13.7 8.1 L14.1 7.9 L14.6 8.0 L15.0 8.3 L15.5 8.3 L16.0 8.2 L16.4 8.2 L16.9 8.3 L17.3 8.4 L17.8 8.4 L18.2 8.4 L18.7 8.5 L19.2 8.5 L19.6 8.5 L20.1 8.5 L20.5 8.5 L21.0 8.5 L21.4 8.5 L21.9 8.5 L21.9 9.0 L21.4 9.0 L21.0 9.0 L20.5 9.0 L20.1 9.0 L19.6 9.0 L19.2 9.0 L18.7 9.1 L18.2 9.1 L17.8 9.1 L17.3 9.2 L16.9 9.2 L16.4 9.3 L16.0 9.3 L15.5 9.3 L15.0 9.3 L14.6 9.4 L14.1 9.6 L13.7 9.3 L13.2 9.6 L12.8 9.7 L12.3 9.7 L11.8 9.8 L11.4 9.8 L10.9 10.1 L10.5 10.1 L10.0 10.3 L9.5 10.5 L9.1 10.8 L8.6 10.4 L8.2 10.6 L7.7 11.3 L7.3 11.3 L6.8 10.6 L6.3 11.0 L5.9 11.3 L5.4 11.6 L5.0 10.9 L4.5 10.8 L4.1 11.6 L3.6 11.3 L3.1 11.3 L2.7 11.2 L2.2 11.3 L1.8 10.3 L1.3 9.8 L0.9 9.7 L0.4 9.4 Z" fill="#dca21c"/><path d="M4.90 0.6 V16.30" stroke="#3c3430" stroke-width="0.55" fill="none" opacity="0.85"/><path d="M8.90 0.6 V16.30" stroke="#3c3430" stroke-width="0.55" fill="none" opacity="0.85"/><path d="M4.90 0.60 C8.32 12.38 16.30 16.20 32.80 16.30" stroke="#3c3430" stroke-width="0.55" fill="none" opacity="0.85"/><rect x="0.4" y="0.4" width="32.60" height="16.10" fill="none" stroke="#4a4442" stroke-width="0.8"/></svg>
<svg class="a" style="left:198.70px;top:325.95px" width="20.30" height="16.90" viewBox="0 0 20.30 16.90"><rect x="0.4" y="0.4" width="19.50" height="16.10" fill="#c9b3f1"/><path d="M0.8 8.79 H19.50" stroke="#5c22d8" stroke-width="0.45" opacity="0.55"/><path d="M0.3 8.1 L0.8 7.7 L1.2 7.3 L1.7 7.3 L2.2 7.0 L2.6 7.0 L3.1 6.5 L3.5 5.4 L4.0 5.4 L4.5 5.0 L4.9 4.7 L5.4 5.5 L5.9 4.9 L6.3 5.5 L6.8 5.0 L7.2 5.8 L7.7 4.8 L8.2 5.7 L8.6 4.9 L9.1 5.3 L9.6 5.1 L10.0 4.5 L10.5 5.9 L10.9 4.8 L11.4 5.7 L11.9 5.0 L12.3 5.0 L12.8 5.0 L13.3 5.9 L13.7 5.5 L14.2 6.8 L14.6 7.2 L15.1 7.2 L15.6 7.5 L16.0 7.9 L16.5 8.0 L17.0 8.2 L17.4 8.3 L17.9 8.5 L18.3 8.5 L18.8 8.5 L18.8 9.0 L18.3 9.0 L17.9 9.1 L17.4 9.2 L17.0 9.2 L16.5 9.5 L16.0 9.7 L15.6 9.9 L15.1 10.4 L14.6 10.2 L14.2 10.4 L13.7 11.5 L13.3 11.2 L12.8 12.6 L12.3 11.8 L11.9 12.3 L11.4 11.5 L10.9 12.3 L10.5 11.8 L10.0 13.2 L9.6 12.7 L9.1 12.4 L8.6 11.8 L8.2 11.5 L7.7 12.9 L7.2 11.6 L6.8 12.3 L6.3 11.9 L5.9 12.6 L5.4 11.9 L4.9 12.9 L4.5 12.0 L4.0 11.9 L3.5 11.6 L3.1 11.0 L2.6 10.7 L2.2 10.6 L1.7 10.1 L1.2 10.2 L0.8 9.8 L0.3 9.5 Z" fill="#5c22d8"/><path d="M6.30 0.6 V16.30" stroke="#3c3430" stroke-width="0.55" fill="none" opacity="0.85"/><path d="M6.30 0.60 C7.98 12.38 11.90 16.20 19.70 16.30" stroke="#3c3430" stroke-width="0.55" fill="none" opacity="0.85"/><rect x="1.50" y="1.9" width="5.39" height="4.6" rx="0.8" fill="#554a46" fill-opacity="0.85" stroke="#e8e8e8" stroke-opacity="0.85" stroke-width="0.55"/><text x="2.60" y="5.75" font-family="Liberation Sans" font-weight="bold" font-size="4.5" fill="#fff" stroke="#fff" stroke-width="0.32" textLength="2.99" lengthAdjust="spacingAndGlyphs">D</text><rect x="0.4" y="0.4" width="19.50" height="16.10" fill="none" stroke="#4a4442" stroke-width="0.8"/></svg>
<svg class="a" style="left:427.80px;top:325.95px" width="84.10" height="16.90" viewBox="0 0 84.10 16.90"><rect x="0.4" y="0.4" width="83.30" height="16.10" fill="#9cd5d9"/><path d="M0.8 8.79 H83.30" stroke="#1e6a70" stroke-width="0.45" opacity="0.55"/><path d="M1.2 8.4 L1.7 8.3 L2.1 8.1 L2.6 7.9 L3.0 7.8 L3.5 8.0 L3.9 7.8 L4.4 8.0 L4.8 7.9 L5.3 8.0 L5.8 7.8 L6.2 7.8 L6.7 7.9 L7.1 8.1 L7.6 8.0 L8.0 7.8 L8.5 8.0 L9.0 7.9 L9.4 7.8 L9.9 8.1 L10.3 7.8 L10.8 8.0 L11.2 7.8 L11.7 7.8 L12.1 7.8 L12.6 8.0 L13.1 8.0 L13.5 8.0 L14.0 8.0 L14.4 7.8 L14.9 8.0 L15.3 7.8 L15.8 7.9 L16.3 8.0 L16.7 8.0 L17.2 7.9 L17.6 7.9 L18.1 7.9 L18.5 8.1 L19.0 8.1 L19.4 7.9 L19.9 7.9 L20.4 8.1 L20.8 8.0 L21.3 7.8 L21.7 8.0 L22.2 7.9 L22.6 7.9 L23.1 8.0 L23.6 7.9 L24.0 7.8 L24.5 7.8 L24.9 8.0 L25.4 7.9 L25.8 8.0 L26.3 7.8 L26.7 8.1 L27.2 8.1 L27.7 7.9 L28.1 7.7 L28.6 7.8 L29.0 8.0 L29.5 8.0 L29.9 8.0 L30.4 8.0 L30.9 7.7 L31.3 7.9 L31.8 7.9 L32.2 7.9 L32.7 7.9 L33.1 8.1 L33.6 7.9 L34.0 7.8 L34.5 7.9 L35.0 7.9 L35.4 8.1 L35.9 8.1 L36.3 7.8 L36.8 7.8 L37.2 7.9 L37.7 8.0 L38.2 8.0 L38.6 7.9 L39.1 8.0 L39.5 7.9 L40.0 8.0 L40.4 7.9 L40.9 7.9 L41.3 7.9 L41.8 7.9 L42.3 7.8 L42.7 7.8 L43.2 8.0 L43.6 7.8 L44.1 8.1 L44.5 8.1 L45.0 7.9 L45.5 8.1 L45.9 8.1 L46.4 8.0 L46.8 8.1 L47.3 8.0 L47.7 8.0 L48.2 8.2 L48.6 8.2 L49.1 8.2 L49.6 8.2 L50.0 8.2 L50.5 8.3 L50.9 8.3 L51.4 8.2 L51.8 8.3 L52.3 8.2 L52.8 8.3 L53.2 8.3 L53.7 8.3 L54.1 8.3 L54.6 8.3 L55.0 8.4 L55.5 8.3 L55.9 8.4 L56.4 8.4 L56.9 8.4 L57.3 8.3 L57.8 8.4 L58.2 8.4 L58.7 8.4 L59.1 8.5 L59.6 8.4 L60.1 8.5 L60.5 8.4 L61.0 8.4 L61.4 8.4 L61.9 8.5 L62.3 8.5 L62.8 8.5 L63.2 8.5 L63.7 8.5 L64.2 8.5 L64.6 8.5 L65.1 8.5 L65.5 8.5 L66.0 8.5 L66.4 8.5 L66.9 8.5 L67.4 8.5 L67.8 8.5 L68.3 8.5 L68.7 8.5 L69.2 8.5 L69.6 8.5 L70.1 8.5 L70.5 8.5 L71.0 8.5 L71.5 8.5 L71.9 8.5 L72.4 8.5 L72.8 8.5 L73.3 8.5 L73.7 8.5 L74.2 8.5 L74.2 9.0 L73.7 9.0 L73.3 9.0 L72.8 9.0 L72.4 9.0 L71.9 9.0 L71.5 9.0 L71.0 9.0 L70.5 9.0 L70.1 9.0 L69.6 9.0 L69.2 9.0 L68.7 9.0 L68.3 9.1 L67.8 9.1 L67.4 9.0 L66.9 9.0 L66.4 9.0 L66.0 9.0 L65.5 9.1 L65.1 9.1 L64.6 9.0 L64.2 9.0 L63.7 9.1 L63.2 9.0 L62.8 9.1 L62.3 9.1 L61.9 9.1 L61.4 9.1 L61.0 9.1 L60.5 9.1 L60.1 9.1 L59.6 9.1 L59.1 9.1 L58.7 9.2 L58.2 9.1 L57.8 9.1 L57.3 9.2 L56.9 9.2 L56.4 9.2 L55.9 9.2 L55.5 9.3 L55.0 9.2 L54.6 9.1 L54.1 9.3 L53.7 9.2 L53.2 9.2 L52.8 9.2 L52.3 9.3 L51.8 9.2 L51.4 9.2 L50.9 9.2 L50.5 9.2 L50.0 9.4 L49.6 9.3 L49.1 9.3 L48.6 9.3 L48.2 9.3 L47.7 9.4 L47.3 9.5 L46.8 9.3 L46.4 9.5 L45.9 9.4 L45.5 9.4 L45.0 9.6 L44.5 9.4 L44.1 9.3 L43.6 9.6 L43.2 9.4 L42.7 9.7 L42.3 9.7 L41.8 9.7 L41.3 9.5 L40.9 9.8 L40.4 9.5 L40.0 9.5 L39.5 9.6 L39.1 9.6 L38.6 9.6 L38.2 9.4 L37.7 9.5 L37.2 9.6 L36.8 9.7 L36.3 9.7 L35.9 9.4 L35.4 9.5 L35.0 9.7 L34.5 9.5 L34.0 9.7 L33.6 9.5 L33.1 9.3 L32.7 9.7 L32.2 9.6 L31.8 9.6 L31.3 9.6 L30.9 9.7 L30.4 9.4 L29.9 9.5 L29.5 9.4 L29.0 9.4 L28.6 9.6 L28.1 9.6 L27.7 9.5 L27.2 9.5 L26.7 9.5 L26.3 9.6 L25.8 9.5 L25.4 9.7 L24.9 9.4 L24.5 9.8 L24.0 9.8 L23.6 9.6 L23.1 9.4 L22.6 9.5 L22.2 9.6 L21.7 9.5 L21.3 9.8 L20.8 9.5 L20.4 9.3 L19.9 9.5 L19.4 9.6 L19.0 9.5 L18.5 9.5 L18.1 9.5 L17.6 9.6 L17.2 9.5 L16.7 9.5 L16.3 9.5 L15.8 9.6 L15.3 9.6 L14.9 9.5 L14.4 9.6 L14.0 9.6 L13.5 9.6 L13.1 9.5 L12.6 9.4 L12.1 9.6 L11.7 9.8 L11.2 9.7 L10.8 9.6 L10.3 9.5 L9.9 9.5 L9.4 9.7 L9.0 9.5 L8.5 9.5 L8.0 9.7 L7.6 9.6 L7.1 9.4 L6.7 9.7 L6.2 9.7 L5.8 9.5 L5.3 9.5 L4.8 9.7 L4.4 9.5 L3.9 9.7 L3.5 9.5 L3.0 9.7 L2.6 9.5 L2.1 9.4 L1.7 9.2 L1.2 9.1 Z" fill="#1e6a70"/><path d="M35.20 0.6 V16.30" stroke="#3c3430" stroke-width="0.55" fill="none" opacity="0.85"/><path d="M35.20 0.60 L83.50 16.30" stroke="#3c3430" stroke-width="0.55" fill="none" opacity="0.85"/><rect x="2.20" y="1.9" width="30.00" height="4.6" rx="0.8" fill="#554a46" fill-opacity="0.85" stroke="#e8e8e8" stroke-opacity="0.85" stroke-width="0.55"/><text x="3.30" y="5.75" font-family="Liberation Sans" font-weight="bold" font-size="4.5" fill="#fff" stroke="#fff" stroke-width="0.32" textLength="27.60" lengthAdjust="spacingAndGlyphs">Swim with flip</text><rect x="1.8" y="10.30" width="4.4" height="5" rx="0.6" fill="#5a5250" fill-opacity="0.8" stroke="#f4f4f4" stroke-opacity="0.85" stroke-width="0.6"/><rect x="0.4" y="0.4" width="83.30" height="16.10" fill="none" stroke="#4a4442" stroke-width="0.8"/></svg>
<svg class="a" style="left:676.30px;top:325.95px" width="38.20" height="16.90" viewBox="0 0 38.20 16.90"><rect x="0.4" y="0.4" width="37.40" height="16.10" fill="#efc2ba"/><path d="M0.8 8.79 H37.40" stroke="#d41414" stroke-width="0.45" opacity="0.55"/><path d="M0.7 8.2 L1.2 7.1 L1.6 6.8 L2.1 6.0 L2.6 6.1 L3.0 5.4 L3.5 5.7 L3.9 5.8 L4.4 5.5 L4.9 6.1 L5.3 6.4 L5.8 6.0 L6.3 5.9 L6.7 5.5 L7.2 6.6 L7.7 5.6 L8.1 5.7 L8.6 6.0 L9.0 6.1 L9.5 6.2 L10.0 5.7 L10.4 6.0 L10.9 7.1 L11.4 7.3 L11.8 6.7 L12.3 7.0 L12.7 7.5 L13.2 7.4 L13.7 7.5 L14.1 7.9 L14.6 7.8 L15.1 8.2 L15.5 8.1 L16.0 8.2 L16.5 8.3 L16.9 8.4 L17.4 8.4 L17.8 8.5 L18.3 8.5 L18.8 8.5 L19.2 8.5 L19.7 8.5 L19.7 9.0 L19.2 9.1 L18.8 9.0 L18.3 9.1 L17.8 9.1 L17.4 9.1 L16.9 9.2 L16.5 9.2 L16.0 9.3 L15.5 9.4 L15.1 9.2 L14.6 9.6 L14.1 9.6 L13.7 9.9 L13.2 9.9 L12.7 9.9 L12.3 10.2 L11.8 10.4 L11.4 10.1 L10.9 10.5 L10.4 11.3 L10.0 12.0 L9.5 11.1 L9.0 10.9 L8.6 11.4 L8.1 11.3 L7.7 12.1 L7.2 10.7 L6.7 12.0 L6.3 11.0 L5.8 10.9 L5.3 10.8 L4.9 11.1 L4.4 11.9 L3.9 11.8 L3.5 11.6 L3.0 12.0 L2.6 11.4 L2.1 11.5 L1.6 10.6 L1.2 10.4 L0.7 9.3 Z" fill="#d41414"/><path d="M25.70 0.6 V16.30" stroke="#3c3430" stroke-width="0.55" fill="none" opacity="0.85"/><path d="M25.70 0.60 L37.60 16.30" stroke="#3c3430" stroke-width="0.55" fill="none" opacity="0.85"/><rect x="1.70" y="1.9" width="20.11" height="4.6" rx="0.8" fill="#554a46" fill-opacity="0.85" stroke="#e8e8e8" stroke-opacity="0.85" stroke-width="0.55"/><text x="2.80" y="5.75" font-family="Liberation Sans" font-weight="bold" font-size="4.5" fill="#fff" stroke="#fff" stroke-width="0.32" textLength="17.71" lengthAdjust="spacingAndGlyphs">01 - Gun,</text><rect x="1.8" y="10.60" width="20.59" height="4.6" rx="0.7" fill="#554a46" fill-opacity="0.85" stroke="#e8e8e8" stroke-opacity="0.85" stroke-width="0.55"/><circle cx="4.2" cy="12.90" r="1.5" fill="none" stroke="#fff" stroke-width="0.45"/><path d="M4.2 11.90 v2" stroke="#fff" stroke-width="0.45"/><text x="6.4" y="14.60" font-family="Liberation Sans" font-weight="bold" font-size="4.3" fill="#fff" stroke="#fff" stroke-width="0.3">-4.6 dB</text><rect x="0.4" y="0.4" width="37.40" height="16.10" fill="none" stroke="#4a4442" stroke-width="0.8"/></svg>
<svg class="a" style="left:202.00px;top:344.45px" width="29.60" height="16.90" viewBox="0 0 29.60 16.90"><rect x="0.4" y="0.4" width="28.80" height="16.10" fill="#dba3a3"/><path d="M0.8 8.79 H28.80" stroke="#6a1010" stroke-width="0.45" opacity="0.55"/><path d="M1.0 8.4 L1.5 8.2 L1.9 8.1 L2.4 8.0 L2.8 7.8 L3.3 7.8 L3.8 7.9 L4.2 8.0 L4.7 7.9 L5.1 7.8 L5.6 7.7 L6.1 7.9 L6.5 7.7 L7.0 7.8 L7.4 8.0 L7.9 7.9 L8.4 7.9 L8.8 8.0 L9.3 8.0 L9.7 7.8 L10.2 7.8 L10.7 8.0 L11.1 7.7 L11.6 8.0 L12.0 7.8 L12.5 8.0 L13.0 8.0 L13.4 7.8 L13.9 8.0 L14.3 8.0 L14.8 8.1 L15.3 8.0 L15.7 8.2 L16.2 8.2 L16.6 8.3 L17.1 8.3 L17.6 8.3 L18.0 8.4 L18.5 8.4 L18.9 8.4 L19.4 8.4 L19.9 8.4 L20.3 8.5 L20.8 8.5 L21.2 8.5 L21.7 8.5 L22.2 8.5 L22.6 8.5 L23.1 8.5 L23.5 8.5 L24.0 8.5 L24.0 9.0 L23.5 9.0 L23.1 9.0 L22.6 9.0 L22.2 9.1 L21.7 9.1 L21.2 9.0 L20.8 9.1 L20.3 9.0 L19.9 9.1 L19.4 9.1 L18.9 9.1 L18.5 9.2 L18.0 9.2 L17.6 9.2 L17.1 9.2 L16.6 9.2 L16.2 9.4 L15.7 9.3 L15.3 9.4 L14.8 9.4 L14.3 9.5 L13.9 9.5 L13.4 9.5 L13.0 9.5 L12.5 9.5 L12.0 9.6 L11.6 9.5 L11.1 9.7 L10.7 9.4 L10.2 9.7 L9.7 9.8 L9.3 9.5 L8.8 9.5 L8.4 9.4 L7.9 9.7 L7.4 9.4 L7.0 9.8 L6.5 9.9 L6.1 9.5 L5.6 9.7 L5.1 9.7 L4.7 9.7 L4.2 9.5 L3.8 9.5 L3.3 9.6 L2.8 9.8 L2.4 9.4 L1.9 9.5 L1.5 9.2 L1.0 9.1 Z" fill="#6a1010"/><path d="M2.00 0.6 V16.30" stroke="#3c3430" stroke-width="0.55" fill="none" opacity="0.85"/><path d="M13.00 0.6 V16.30" stroke="#3c3430" stroke-width="0.55" fill="none" opacity="0.85"/><path d="M13.00 0.60 L29.00 16.30" stroke="#3c3430" stroke-width="0.55" fill="none" opacity="0.85"/><rect x="3.00" y="1.9" width="7.92" height="4.6" rx="0.8" fill="#554a46" fill-opacity="0.85" stroke="#e8e8e8" stroke-opacity="0.85" stroke-width="0.55"/><text x="4.10" y="5.75" font-family="Liberation Sans" font-weight="bold" font-size="4.5" fill="#fff" stroke="#fff" stroke-width="0.32" textLength="5.52" lengthAdjust="spacingAndGlyphs">BT</text><rect x="0.4" y="0.4" width="28.80" height="16.10" fill="none" stroke="#4a4442" stroke-width="0.8"/></svg>
<svg class="a" style="left:472.40px;top:344.45px" width="35.60" height="16.90" viewBox="0 0 35.60 16.90"><rect x="0.4" y="0.4" width="34.80" height="16.10" fill="#9cd5d9"/><path d="M0.8 8.79 H34.80" stroke="#1e6a70" stroke-width="0.45" opacity="0.55"/><path d="M2.6 8.4 L3.1 8.3 L3.5 7.8 L4.0 7.7 L4.4 7.8 L4.9 7.9 L5.3 7.9 L5.8 7.8 L6.2 7.6 L6.7 7.9 L7.2 7.7 L7.6 7.9 L8.1 8.0 L8.5 7.7 L9.0 7.8 L9.4 7.6 L9.9 8.0 L10.4 7.6 L10.8 7.8 L11.3 7.9 L11.7 7.6 L12.2 7.6 L12.6 7.8 L13.1 7.9 L13.5 7.8 L14.0 7.6 L14.5 7.8 L14.9 7.5 L15.4 7.5 L15.8 7.8 L16.3 8.0 L16.7 7.9 L17.2 7.6 L17.7 7.9 L18.1 7.7 L18.6 7.7 L19.0 7.9 L19.5 8.1 L19.9 8.1 L20.4 8.0 L20.8 8.2 L21.3 8.3 L21.8 8.3 L22.2 8.3 L22.7 8.4 L23.1 8.4 L23.6 8.4 L24.0 8.4 L24.5 8.5 L25.0 8.5 L25.4 8.5 L25.9 8.5 L26.3 8.5 L26.8 8.5 L27.2 8.5 L27.7 8.5 L28.1 8.5 L28.6 8.5 L28.6 9.0 L28.1 9.0 L27.7 9.0 L27.2 9.0 L26.8 9.0 L26.3 9.0 L25.9 9.1 L25.4 9.1 L25.0 9.1 L24.5 9.0 L24.0 9.1 L23.6 9.1 L23.1 9.1 L22.7 9.2 L22.2 9.2 L21.8 9.1 L21.3 9.2 L20.8 9.2 L20.4 9.5 L19.9 9.4 L19.5 9.4 L19.0 9.5 L18.6 9.7 L18.1 9.8 L17.7 9.5 L17.2 10.0 L16.7 9.6 L16.3 9.5 L15.8 9.6 L15.4 9.8 L14.9 9.8 L14.5 9.7 L14.0 9.9 L13.5 9.6 L13.1 9.6 L12.6 9.8 L12.2 9.8 L11.7 9.9 L11.3 9.5 L10.8 9.7 L10.4 10.0 L9.9 9.6 L9.4 9.9 L9.0 9.8 L8.5 9.9 L8.1 9.6 L7.6 9.6 L7.2 9.9 L6.7 9.7 L6.2 9.9 L5.8 9.7 L5.3 9.6 L4.9 9.5 L4.4 9.6 L4.0 9.6 L3.5 9.6 L3.1 9.2 L2.6 9.1 Z" fill="#1e6a70"/><path d="M5.60 0.6 V16.30" stroke="#3c3430" stroke-width="0.55" fill="none" opacity="0.85"/><path d="M17.60 0.6 V16.30" stroke="#3c3430" stroke-width="0.55" fill="none" opacity="0.85"/><path d="M0.6 16.30 L5.60 0.60" stroke="#3c3430" stroke-width="0.55" fill="none" opacity="0.85"/><path d="M17.60 0.60 L35.00 16.30" stroke="#3c3430" stroke-width="0.55" fill="none" opacity="0.85"/><rect x="6.60" y="1.9" width="10.22" height="4.6" rx="0.8" fill="#554a46" fill-opacity="0.85" stroke="#e8e8e8" stroke-opacity="0.85" stroke-width="0.55"/><text x="7.70" y="5.75" font-family="Liberation Sans" font-weight="bold" font-size="4.5" fill="#fff" stroke="#fff" stroke-width="0.32" textLength="7.82" lengthAdjust="spacingAndGlyphs">Unc</text><rect x="0.4" y="0.4" width="34.80" height="16.10" fill="none" stroke="#4a4442" stroke-width="0.8"/></svg>
<svg class="a" style="left:202.00px;top:362.95px" width="27.30" height="16.90" viewBox="0 0 27.30 16.90"><rect x="0.4" y="0.4" width="26.50" height="16.10" fill="#dba3a3"/><path d="M0.8 8.79 H26.50" stroke="#6a1010" stroke-width="0.45" opacity="0.55"/><path d="M1.0 8.4 L1.5 8.1 L1.9 7.6 L2.4 7.4 L2.9 7.5 L3.3 7.2 L3.8 7.6 L4.2 7.6 L4.7 7.3 L5.2 7.2 L5.6 7.1 L6.1 7.3 L6.6 7.3 L7.0 7.5 L7.5 7.6 L8.0 7.7 L8.4 7.1 L8.9 7.2 L9.3 7.4 L9.8 7.5 L10.3 7.4 L10.7 7.4 L11.2 7.3 L11.7 7.1 L12.1 7.6 L12.6 7.4 L13.0 7.4 L13.5 7.4 L14.0 7.5 L14.4 7.7 L14.9 8.0 L15.4 8.1 L15.8 8.2 L16.3 8.2 L16.8 8.3 L17.2 8.4 L17.7 8.5 L18.1 8.5 L18.6 8.5 L19.1 8.5 L19.5 8.5 L20.0 8.5 L20.0 9.0 L19.5 9.0 L19.1 9.0 L18.6 9.0 L18.1 9.0 L17.7 9.1 L17.2 9.2 L16.8 9.3 L16.3 9.3 L15.8 9.4 L15.4 9.4 L14.9 9.4 L14.4 9.8 L14.0 10.0 L13.5 10.2 L13.0 9.9 L12.6 10.3 L12.1 9.9 L11.7 10.4 L11.2 10.1 L10.7 10.1 L10.3 10.1 L9.8 10.0 L9.3 10.1 L8.9 10.3 L8.4 10.3 L8.0 9.9 L7.5 9.7 L7.0 9.9 L6.6 10.1 L6.1 10.0 L5.6 10.4 L5.2 10.3 L4.7 10.0 L4.2 9.7 L3.8 9.8 L3.3 10.4 L2.9 9.9 L2.4 10.2 L1.9 10.0 L1.5 9.4 L1.0 9.1 Z" fill="#6a1010"/><path d="M10.00 0.6 V16.30" stroke="#3c3430" stroke-width="0.55" fill="none" opacity="0.85"/><path d="M13.00 0.6 V16.30" stroke="#3c3430" stroke-width="0.55" fill="none" opacity="0.85"/><path d="M13.00 0.60 L26.70 16.30" stroke="#3c3430" stroke-width="0.55" fill="none" opacity="0.85"/><rect x="2.00" y="1.9" width="8.38" height="4.6" rx="0.8" fill="#554a46" fill-opacity="0.85" stroke="#e8e8e8" stroke-opacity="0.85" stroke-width="0.55"/><text x="3.10" y="5.75" font-family="Liberation Sans" font-weight="bold" font-size="4.5" fill="#fff" stroke="#fff" stroke-width="0.32" textLength="5.98" lengthAdjust="spacingAndGlyphs">me</text><rect x="0.4" y="0.4" width="26.50" height="16.10" fill="none" stroke="#4a4442" stroke-width="0.8"/></svg>
<svg class="a" style="left:465.00px;top:362.95px" width="51.60" height="16.90" viewBox="0 0 51.60 16.90"><rect x="0.4" y="0.4" width="50.80" height="16.10" fill="#9cd5d9"/><path d="M0.8 8.79 H50.80" stroke="#1e6a70" stroke-width="0.45" opacity="0.55"/><path d="M1.0 8.4 L1.5 8.2 L1.9 8.0 L2.4 7.8 L2.8 7.8 L3.3 7.7 L3.7 7.9 L4.2 7.8 L4.6 7.6 L5.1 7.7 L5.6 7.7 L6.0 7.8 L6.5 7.6 L6.9 7.8 L7.4 7.7 L7.8 7.8 L8.3 7.8 L8.7 7.6 L9.2 7.6 L9.7 7.8 L10.1 7.8 L10.6 7.9 L11.0 7.6 L11.5 7.8 L11.9 7.6 L12.4 7.7 L12.8 7.9 L13.3 7.8 L13.8 7.7 L14.2 7.6 L14.7 7.6 L15.1 7.9 L15.6 7.7 L16.0 7.7 L16.5 7.8 L16.9 7.9 L17.4 7.8 L17.9 7.9 L18.3 8.1 L18.8 8.0 L19.2 8.1 L19.7 8.2 L20.1 8.2 L20.6 8.1 L21.1 8.3 L21.5 8.2 L22.0 8.2 L22.4 8.3 L22.9 8.3 L23.3 8.3 L23.8 8.4 L24.2 8.3 L24.7 8.3 L25.2 8.3 L25.6 8.4 L26.1 8.4 L26.5 8.4 L27.0 8.4 L27.4 8.4 L27.9 8.4 L28.3 8.4 L28.8 8.5 L29.3 8.4 L29.7 8.5 L30.2 8.5 L30.6 8.5 L31.1 8.5 L31.5 8.5 L32.0 8.5 L32.4 8.5 L32.9 8.5 L33.4 8.5 L33.8 8.5 L34.3 8.5 L34.7 8.5 L35.2 8.5 L35.6 8.5 L36.1 8.5 L36.5 8.5 L37.0 8.5 L37.0 9.0 L36.5 9.0 L36.1 9.0 L35.6 9.0 L35.2 9.0 L34.7 9.0 L34.3 9.0 L33.8 9.0 L33.4 9.0 L32.9 9.0 L32.4 9.0 L32.0 9.0 L31.5 9.0 L31.1 9.0 L30.6 9.1 L30.2 9.1 L29.7 9.1 L29.3 9.1 L28.8 9.0 L28.3 9.1 L27.9 9.1 L27.4 9.1 L27.0 9.2 L26.5 9.1 L26.1 9.1 L25.6 9.1 L25.2 9.2 L24.7 9.3 L24.2 9.2 L23.8 9.1 L23.3 9.2 L22.9 9.2 L22.4 9.3 L22.0 9.3 L21.5 9.3 L21.1 9.3 L20.6 9.5 L20.1 9.3 L19.7 9.2 L19.2 9.4 L18.8 9.5 L18.3 9.4 L17.9 9.6 L17.4 9.7 L16.9 9.5 L16.5 9.7 L16.0 9.7 L15.6 9.7 L15.1 9.5 L14.7 9.8 L14.2 9.9 L13.8 9.7 L13.3 9.5 L12.8 9.7 L12.4 9.9 L11.9 10.0 L11.5 9.7 L11.0 9.8 L10.6 9.6 L10.1 9.5 L9.7 9.6 L9.2 9.8 L8.7 9.9 L8.3 9.6 L7.8 9.7 L7.4 9.8 L6.9 9.6 L6.5 9.7 L6.0 9.8 L5.6 9.9 L5.1 9.7 L4.6 9.9 L4.2 9.6 L3.7 9.6 L3.3 9.7 L2.8 9.7 L2.4 9.8 L1.9 9.4 L1.5 9.3 L1.0 9.1 Z" fill="#1e6a70"/><path d="M17.00 0.6 V16.30" stroke="#3c3430" stroke-width="0.55" fill="none" opacity="0.85"/><path d="M17.00 0.60 C21.15 12.38 30.84 16.20 51.00 16.30" stroke="#3c3430" stroke-width="0.55" fill="none" opacity="0.85"/><rect x="2.00" y="1.9" width="16.43" height="4.6" rx="0.8" fill="#554a46" fill-opacity="0.85" stroke="#e8e8e8" stroke-opacity="0.85" stroke-width="0.55"/><text x="3.10" y="5.75" font-family="Liberation Sans" font-weight="bold" font-size="4.5" fill="#fff" stroke="#fff" stroke-width="0.32" textLength="14.03" lengthAdjust="spacingAndGlyphs">UWT01</text><rect x="1.8" y="10.60" width="14.22" height="4.6" rx="0.7" fill="#554a46" fill-opacity="0.85" stroke="#e8e8e8" stroke-opacity="0.85" stroke-width="0.55"/><circle cx="4.2" cy="12.90" r="1.5" fill="none" stroke="#fff" stroke-width="0.45"/><path d="M4.2 11.90 v2" stroke="#fff" stroke-width="0.45"/><text x="6.4" y="14.60" font-family="Liberation Sans" font-weight="bold" font-size="4.3" fill="#fff" stroke="#fff" stroke-width="0.3">-10.</text><rect x="0.4" y="0.4" width="50.80" height="16.10" fill="none" stroke="#4a4442" stroke-width="0.8"/></svg>
<svg class="a" style="left:669.60px;top:362.95px" width="23.20" height="16.90" viewBox="0 0 23.20 16.90"><rect x="0.4" y="0.4" width="22.40" height="16.10" fill="#bdbdbd"/><path d="M0.8 8.79 H22.40" stroke="#3a3a3a" stroke-width="0.45" opacity="0.55"/><path d="M0.4 7.8 L0.9 7.0 L1.3 7.2 L1.8 6.3 L2.2 5.2 L2.7 5.6 L3.2 3.8 L3.6 3.7 L4.1 4.3 L4.5 5.5 L5.0 3.9 L5.5 5.1 L5.9 3.7 L6.4 3.6 L6.8 4.4 L7.3 4.3 L7.8 5.2 L8.2 4.7 L8.7 5.7 L9.1 5.7 L9.6 6.2 L10.0 6.8 L10.5 6.5 L11.0 7.1 L11.4 7.4 L11.9 7.7 L12.3 7.5 L12.8 7.8 L13.3 8.1 L13.7 8.0 L14.2 8.3 L14.6 8.3 L15.1 8.3 L15.6 8.4 L16.0 8.5 L16.5 8.5 L16.9 8.5 L17.4 8.5 L17.4 9.0 L16.9 9.0 L16.5 9.0 L16.0 9.1 L15.6 9.1 L15.1 9.2 L14.6 9.2 L14.2 9.3 L13.7 9.5 L13.3 9.3 L12.8 9.7 L12.3 10.2 L11.9 9.9 L11.4 10.0 L11.0 10.1 L10.5 11.2 L10.0 10.7 L9.6 11.2 L9.1 11.8 L8.7 11.6 L8.2 11.9 L7.8 12.6 L7.3 13.4 L6.8 12.3 L6.4 14.2 L5.9 13.4 L5.5 12.1 L5.0 13.5 L4.5 12.1 L4.1 12.2 L3.6 12.7 L3.2 12.9 L2.7 11.3 L2.2 12.4 L1.8 11.3 L1.3 10.3 L0.9 10.4 L0.4 9.7 Z" fill="#3a3a3a"/><path d="M3.40 0.6 V16.30" stroke="#3c3430" stroke-width="0.55" fill="none" opacity="0.85"/><path d="M6.40 0.6 V16.30" stroke="#3c3430" stroke-width="0.55" fill="none" opacity="0.85"/><path d="M6.40 0.60 C8.42 12.38 13.12 16.20 22.60 16.30" stroke="#3c3430" stroke-width="0.55" fill="none" opacity="0.85"/><rect x="0.4" y="0.4" width="22.40" height="16.10" fill="none" stroke="#4a4442" stroke-width="0.8"/></svg>
<svg class="a" style="left:384.70px;top:381.45px" width="69.10" height="16.90" viewBox="0 0 69.10 16.90"><rect x="0.4" y="0.4" width="68.30" height="16.10" fill="#efc2ba"/><path d="M0.8 8.79 H68.30" stroke="#d41414" stroke-width="0.45" opacity="0.55"/><path d="M1.3 8.4 L1.8 8.1 L2.2 7.9 L2.7 7.6 L3.1 7.3 L3.6 7.7 L4.0 7.3 L4.5 7.5 L5.0 7.8 L5.4 7.7 L5.9 7.5 L6.3 7.7 L6.8 7.4 L7.2 7.5 L7.7 7.8 L8.1 7.4 L8.6 7.7 L9.1 7.5 L9.5 7.5 L10.0 7.3 L10.4 7.6 L10.9 7.7 L11.3 7.3 L11.8 7.3 L12.3 7.6 L12.7 7.4 L13.2 7.4 L13.6 7.4 L14.1 7.8 L14.5 7.6 L15.0 7.6 L15.4 7.3 L15.9 7.3 L16.4 7.6 L16.8 7.4 L17.3 7.8 L17.7 7.6 L18.2 7.6 L18.6 7.7 L19.1 7.7 L19.6 7.3 L20.0 7.8 L20.5 7.4 L20.9 7.8 L21.4 7.4 L21.8 7.2 L22.3 7.5 L22.7 7.6 L23.2 7.8 L23.7 7.5 L24.1 7.7 L24.6 7.7 L25.0 7.7 L25.5 7.5 L25.9 7.6 L26.4 7.7 L26.9 7.5 L27.3 7.4 L27.8 7.7 L28.2 7.4 L28.7 7.8 L29.1 7.3 L29.6 7.3 L30.0 7.8 L30.5 7.5 L31.0 7.8 L31.4 7.3 L31.9 7.3 L32.3 7.3 L32.8 7.4 L33.2 7.4 L33.7 7.5 L34.2 7.7 L34.6 7.5 L35.1 7.3 L35.5 7.4 L36.0 7.5 L36.4 7.5 L36.9 7.6 L37.3 8.0 L37.8 7.9 L38.3 8.0 L38.7 8.1 L39.2 8.1 L39.6 8.1 L40.1 8.3 L40.5 8.3 L41.0 8.2 L41.5 8.3 L41.9 8.3 L42.4 8.4 L42.8 8.4 L43.3 8.4 L43.7 8.4 L44.2 8.4 L44.6 8.5 L45.1 8.5 L45.6 8.5 L46.0 8.5 L46.5 8.5 L46.9 8.5 L47.4 8.5 L47.8 8.5 L48.3 8.5 L48.3 9.0 L47.8 9.0 L47.4 9.0 L46.9 9.0 L46.5 9.0 L46.0 9.1 L45.6 9.0 L45.1 9.0 L44.6 9.1 L44.2 9.1 L43.7 9.1 L43.3 9.1 L42.8 9.1 L42.4 9.1 L41.9 9.3 L41.5 9.3 L41.0 9.4 L40.5 9.2 L40.1 9.3 L39.6 9.3 L39.2 9.3 L38.7 9.4 L38.3 9.5 L37.8 9.7 L37.3 9.5 L36.9 9.8 L36.4 9.8 L36.0 10.1 L35.5 10.3 L35.1 10.3 L34.6 10.0 L34.2 9.6 L33.7 10.1 L33.2 9.9 L32.8 9.9 L32.3 9.9 L31.9 10.3 L31.4 10.3 L31.0 9.8 L30.5 9.9 L30.0 9.8 L29.6 10.0 L29.1 10.2 L28.7 9.8 L28.2 10.1 L27.8 9.7 L27.3 10.1 L26.9 10.0 L26.4 9.9 L25.9 9.8 L25.5 9.9 L25.0 9.8 L24.6 9.7 L24.1 9.9 L23.7 9.8 L23.2 9.6 L22.7 9.9 L22.3 10.0 L21.8 10.3 L21.4 10.0 L20.9 9.7 L20.5 9.8 L20.0 9.6 L19.6 10.0 L19.1 9.8 L18.6 9.7 L18.2 9.8 L17.7 9.7 L17.3 9.8 L16.8 10.0 L16.4 9.8 L15.9 10.0 L15.4 10.2 L15.0 9.8 L14.5 9.8 L14.1 9.6 L13.6 10.0 L13.2 10.0 L12.7 9.9 L12.3 10.0 L11.8 10.3 L11.3 10.4 L10.9 9.7 L10.4 9.7 L10.0 10.3 L9.5 10.0 L9.1 9.8 L8.6 9.7 L8.1 9.8 L7.7 9.8 L7.2 9.8 L6.8 9.9 L6.3 9.7 L5.9 9.8 L5.4 9.7 L5.0 9.7 L4.5 9.8 L4.0 10.0 L3.6 9.9 L3.1 10.1 L2.7 9.9 L2.2 9.5 L1.8 9.5 L1.3 9.1 Z" fill="#d41414"/><path d="M41.30 0.6 V16.30" stroke="#3c3430" stroke-width="0.55" fill="none" opacity="0.85"/><path d="M41.30 0.60 L68.50 16.30" stroke="#3c3430" stroke-width="0.55" fill="none" opacity="0.85"/><rect x="1.60" y="1.9" width="38.28" height="4.6" rx="0.8" fill="#554a46" fill-opacity="0.85" stroke="#e8e8e8" stroke-opacity="0.85" stroke-width="0.55"/><text x="2.70" y="5.75" font-family="Liberation Sans" font-weight="bold" font-size="4.5" fill="#fff" stroke="#fff" stroke-width="0.32" textLength="35.88" lengthAdjust="spacingAndGlyphs">Explosion exp bur</text><rect x="1.8" y="10.60" width="20.59" height="4.6" rx="0.7" fill="#554a46" fill-opacity="0.85" stroke="#e8e8e8" stroke-opacity="0.85" stroke-width="0.55"/><circle cx="4.2" cy="12.90" r="1.5" fill="none" stroke="#fff" stroke-width="0.45"/><path d="M4.2 11.90 v2" stroke="#fff" stroke-width="0.45"/><text x="6.4" y="14.60" font-family="Liberation Sans" font-weight="bold" font-size="4.3" fill="#fff" stroke="#fff" stroke-width="0.3">-9.0 dB</text><rect x="0.4" y="0.4" width="68.30" height="16.10" fill="none" stroke="#4a4442" stroke-width="0.8"/></svg>
<svg class="a" style="left:198.30px;top:399.95px" width="65.60" height="16.90" viewBox="0 0 65.60 16.90"><rect x="0.4" y="0.4" width="64.80" height="16.10" fill="#c9b3f1"/><path d="M0.8 4.90 H64.80" stroke="#5c22d8" stroke-width="0.45" opacity="0.55"/><path d="M0.7 4.4 L1.2 3.9 L1.6 3.2 L2.1 2.8 L2.5 2.9 L3.0 2.6 L3.5 3.3 L3.9 3.2 L4.4 2.7 L4.8 3.0 L5.3 3.1 L5.7 3.1 L6.2 3.0 L6.7 3.3 L7.1 3.2 L7.6 3.1 L8.0 2.7 L8.5 3.3 L9.0 2.8 L9.4 3.4 L9.9 2.6 L10.3 3.1 L10.8 3.1 L11.3 3.1 L11.7 2.8 L12.2 2.9 L12.6 3.4 L13.1 3.2 L13.5 3.0 L14.0 2.7 L14.5 3.0 L14.9 2.6 L15.4 3.4 L15.8 3.1 L16.3 2.7 L16.8 2.9 L17.2 3.3 L17.7 2.6 L18.1 2.7 L18.6 2.7 L19.1 2.7 L19.5 2.7 L20.0 2.9 L20.4 3.3 L20.9 3.3 L21.3 3.4 L21.8 3.2 L22.3 3.4 L22.7 3.4 L23.2 3.0 L23.6 2.8 L24.1 3.2 L24.6 3.5 L25.0 3.4 L25.5 3.0 L25.9 3.3 L26.4 2.8 L26.9 3.1 L27.3 3.5 L27.8 3.5 L28.2 3.7 L28.7 3.5 L29.1 4.0 L29.6 4.0 L30.1 4.0 L30.5 3.9 L31.0 4.1 L31.4 4.1 L31.9 4.2 L32.4 4.4 L32.8 4.3 L33.3 4.3 L33.7 4.4 L34.2 4.4 L34.7 4.5 L35.1 4.5 L35.6 4.6 L36.0 4.6 L36.5 4.6 L36.9 4.6 L37.4 4.6 L37.9 4.6 L38.3 4.6 L38.8 4.6 L39.2 4.6 L39.7 4.7 L39.7 5.1 L39.2 5.1 L38.8 5.1 L38.3 5.1 L37.9 5.2 L37.4 5.2 L36.9 5.1 L36.5 5.2 L36.0 5.2 L35.6 5.2 L35.1 5.3 L34.7 5.2 L34.2 5.4 L33.7 5.4 L33.3 5.5 L32.8 5.4 L32.4 5.4 L31.9 5.5 L31.4 5.7 L31.0 5.7 L30.5 5.9 L30.1 5.6 L29.6 5.8 L29.1 5.8 L28.7 6.2 L28.2 5.9 L27.8 6.3 L27.3 6.2 L26.9 6.4 L26.4 6.6 L25.9 6.1 L25.5 6.8 L25.0 6.3 L24.6 6.2 L24.1 6.6 L23.6 6.9 L23.2 6.6 L22.7 6.1 L22.3 6.1 L21.8 6.2 L21.3 6.5 L20.9 6.5 L20.4 6.5 L20.0 6.4 L19.5 6.5 L19.1 6.7 L18.6 7.1 L18.1 7.2 L17.7 6.7 L17.2 6.4 L16.8 6.8 L16.3 6.9 L15.8 6.5 L15.4 6.4 L14.9 6.7 L14.5 6.7 L14.0 6.8 L13.5 6.5 L13.1 6.3 L12.6 6.5 L12.2 6.7 L11.7 6.8 L11.3 6.4 L10.8 6.7 L10.3 6.2 L9.9 7.0 L9.4 6.3 L9.0 7.1 L8.5 6.2 L8.0 7.2 L7.6 6.6 L7.1 6.6 L6.7 6.5 L6.2 6.5 L5.7 6.7 L5.3 6.7 L4.8 6.6 L4.4 7.2 L3.9 6.4 L3.5 6.5 L3.0 7.0 L2.5 6.8 L2.1 6.6 L1.6 6.6 L1.2 5.8 L0.7 5.4 Z" fill="#5c22d8"/><path d="M0.8 12.34 H64.80" stroke="#5c22d8" stroke-width="0.45" opacity="0.55"/><path d="M0.7 11.8 L1.2 11.4 L1.6 10.4 L2.1 10.5 L2.5 10.5 L3.0 10.2 L3.5 10.1 L3.9 10.0 L4.4 10.6 L4.8 10.5 L5.3 10.9 L5.7 10.7 L6.2 10.7 L6.7 10.5 L7.1 10.7 L7.6 10.2 L8.0 10.4 L8.5 10.6 L9.0 10.0 L9.4 10.7 L9.9 10.8 L10.3 10.9 L10.8 10.7 L11.3 10.6 L11.7 10.1 L12.2 10.8 L12.6 10.7 L13.1 10.4 L13.5 10.1 L14.0 10.8 L14.5 10.0 L14.9 10.2 L15.4 10.3 L15.8 10.6 L16.3 10.6 L16.8 10.5 L17.2 10.9 L17.7 10.0 L18.1 10.9 L18.6 10.5 L19.1 10.7 L19.5 10.2 L20.0 10.2 L20.4 10.6 L20.9 10.3 L21.3 10.4 L21.8 10.2 L22.3 10.2 L22.7 10.8 L23.2 10.0 L23.6 10.0 L24.1 10.7 L24.6 10.4 L25.0 10.1 L25.5 10.7 L25.9 10.1 L26.4 10.9 L26.9 11.0 L27.3 11.0 L27.8 10.7 L28.2 11.3 L28.7 11.0 L29.1 11.1 L29.6 11.4 L30.1 11.5 L30.5 11.5 L31.0 11.5 L31.4 11.5 L31.9 11.6 L32.4 11.7 L32.8 11.8 L33.3 11.8 L33.7 11.9 L34.2 11.9 L34.7 12.0 L35.1 11.9 L35.6 12.0 L36.0 12.0 L36.5 12.0 L36.9 12.0 L37.4 12.1 L37.9 12.1 L38.3 12.1 L38.8 12.1 L39.2 12.1 L39.7 12.1 L39.7 12.5 L39.2 12.5 L38.8 12.5 L38.3 12.6 L37.9 12.6 L37.4 12.6 L36.9 12.7 L36.5 12.6 L36.0 12.6 L35.6 12.6 L35.1 12.6 L34.7 12.7 L34.2 12.8 L33.7 12.7 L33.3 12.9 L32.8 12.8 L32.4 12.8 L31.9 13.0 L31.4 13.1 L31.0 13.0 L30.5 13.2 L30.1 13.2 L29.6 13.3 L29.1 13.3 L28.7 13.6 L28.2 13.4 L27.8 13.7 L27.3 13.7 L26.9 13.7 L26.4 13.5 L25.9 14.0 L25.5 14.0 L25.0 14.3 L24.6 14.1 L24.1 13.7 L23.6 14.3 L23.2 14.2 L22.7 13.7 L22.3 14.4 L21.8 14.3 L21.3 14.1 L20.9 14.2 L20.4 13.7 L20.0 14.1 L19.5 14.5 L19.1 14.0 L18.6 14.0 L18.1 13.8 L17.7 14.2 L17.2 13.6 L16.8 13.9 L16.3 13.8 L15.8 13.7 L15.4 13.9 L14.9 14.4 L14.5 14.5 L14.0 14.0 L13.5 14.6 L13.1 14.2 L12.6 13.7 L12.2 13.8 L11.7 14.0 L11.3 14.1 L10.8 13.8 L10.3 13.7 L9.9 13.6 L9.4 14.0 L9.0 14.2 L8.5 14.2 L8.0 14.3 L7.6 14.1 L7.1 13.8 L6.7 14.2 L6.2 13.7 L5.7 13.8 L5.3 13.6 L4.8 13.8 L4.4 14.1 L3.9 14.6 L3.5 14.5 L3.0 14.3 L2.5 13.9 L2.1 13.8 L1.6 14.0 L1.2 13.1 L0.7 12.8 Z" fill="#5c22d8"/><path d="M8.70 0.6 V16.30" stroke="#3c3430" stroke-width="0.55" fill="none" opacity="0.85"/><path d="M22.70 0.6 V16.30" stroke="#3c3430" stroke-width="0.55" fill="none" opacity="0.85"/><path d="M25.20 0.6 V16.30" stroke="#3c3430" stroke-width="0.55" fill="none" opacity="0.85"/><path d="M25.20 0.60 C30.05 6.49 41.36 8.35 65.00 8.45" stroke="#3c3430" stroke-width="0.55" fill="none" opacity="0.85"/><path d="M8.70 0.60 Q15.70 7.67 22.70 8.45 M8.70 8.45 Q15.70 1.39 22.70 0.60" stroke="#3c3430" stroke-width="0.55" fill="none" opacity="0.85"/><path d="M25.20 8.45 C30.05 14.34 41.36 16.20 65.00 16.30" stroke="#3c3430" stroke-width="0.55" fill="none" opacity="0.85"/><path d="M8.70 8.45 Q15.70 15.52 22.70 16.30 M8.70 16.30 Q15.70 9.24 22.70 8.45" stroke="#3c3430" stroke-width="0.55" fill="none" opacity="0.85"/><path d="M0.6 8.45 H65.00" stroke="#4a4442" stroke-width="0.5" opacity="0.7"/><rect x="1.70" y="1.9" width="6.54" height="4.6" rx="0.8" fill="#554a46" fill-opacity="0.85" stroke="#e8e8e8" stroke-opacity="0.85" stroke-width="0.55"/><text x="2.80" y="5.75" font-family="Liberation Sans" font-weight="bold" font-size="4.5" fill="#fff" stroke="#fff" stroke-width="0.32" textLength="4.14" lengthAdjust="spacingAndGlyphs">Cl</text><rect x="0.4" y="0.4" width="64.80" height="16.10" fill="none" stroke="#4a4442" stroke-width="0.8"/></svg>
<svg class="a" style="left:383.20px;top:399.95px" width="89.10" height="16.90" viewBox="0 0 89.10 16.90"><rect x="0.4" y="0.4" width="88.30" height="16.10" fill="#9aa8e6"/><path d="M0.8 4.90 H88.30" stroke="#1a2a78" stroke-width="0.45" opacity="0.55"/><path d="M0.8 4.3 L1.3 3.6 L1.7 3.5 L2.2 2.5 L2.6 2.6 L3.1 3.3 L3.5 3.0 L4.0 2.6 L4.4 2.9 L4.9 3.3 L5.4 3.2 L5.8 2.6 L6.3 2.5 L6.7 3.0 L7.2 2.8 L7.6 2.9 L8.1 3.1 L8.5 2.8 L9.0 3.0 L9.4 3.2 L9.9 2.6 L10.4 2.7 L10.8 3.2 L11.3 3.0 L11.7 2.9 L12.2 2.7 L12.6 2.8 L13.1 3.1 L13.5 2.9 L14.0 3.5 L14.5 3.5 L14.9 2.9 L15.4 3.2 L15.8 3.5 L16.3 2.9 L16.7 3.7 L17.2 3.5 L17.6 3.3 L18.1 3.4 L18.6 3.6 L19.0 3.5 L19.5 3.1 L19.9 3.6 L20.4 3.4 L20.8 3.3 L21.3 3.5 L21.7 3.7 L22.2 3.6 L22.6 3.4 L23.1 3.8 L23.6 3.7 L24.0 3.7 L24.5 3.8 L24.9 3.7 L25.4 3.9 L25.8 3.7 L26.3 4.0 L26.7 3.7 L27.2 3.7 L27.7 3.7 L28.1 3.9 L28.6 3.8 L29.0 4.0 L29.5 4.1 L29.9 3.9 L30.4 4.1 L30.8 3.9 L31.3 3.9 L31.8 3.9 L32.2 4.2 L32.7 4.1 L33.1 4.0 L33.6 4.1 L34.0 4.1 L34.5 4.1 L34.9 4.3 L35.4 4.2 L35.8 4.1 L36.3 4.1 L36.8 4.2 L37.2 4.2 L37.7 4.2 L38.1 4.2 L38.6 4.3 L39.0 4.3 L39.5 4.3 L39.9 4.2 L40.4 4.4 L40.9 4.3 L41.3 4.4 L41.8 4.4 L42.2 4.3 L42.7 4.4 L43.1 4.4 L43.6 4.4 L44.0 4.4 L44.5 4.4 L45.0 4.5 L45.4 4.4 L45.9 4.4 L46.3 4.5 L46.8 4.5 L47.2 4.5 L47.7 4.5 L48.1 4.5 L48.6 4.5 L49.0 4.5 L49.5 4.5 L50.0 4.5 L50.4 4.5 L50.9 4.5 L51.3 4.6 L51.8 4.5 L52.2 4.6 L52.7 4.6 L53.1 4.6 L53.6 4.6 L54.1 4.6 L54.5 4.6 L55.0 4.6 L55.4 4.6 L55.9 4.6 L56.3 4.6 L56.8 4.6 L57.2 4.6 L57.7 4.6 L58.2 4.6 L58.6 4.6 L59.1 4.6 L59.5 4.6 L60.0 4.6 L60.4 4.6 L60.9 4.6 L61.3 4.6 L61.8 4.6 L62.2 4.6 L62.7 4.6 L63.2 4.6 L63.6 4.6 L64.1 4.6 L64.5 4.6 L65.0 4.7 L65.4 4.7 L65.9 4.7 L66.3 4.7 L66.8 4.7 L66.8 5.1 L66.3 5.2 L65.9 5.2 L65.4 5.2 L65.0 5.2 L64.5 5.1 L64.1 5.2 L63.6 5.1 L63.2 5.2 L62.7 5.1 L62.2 5.2 L61.8 5.1 L61.3 5.1 L60.9 5.1 L60.4 5.2 L60.0 5.2 L59.5 5.2 L59.1 5.1 L58.6 5.1 L58.2 5.1 L57.7 5.2 L57.2 5.2 L56.8 5.2 L56.3 5.2 L55.9 5.2 L55.4 5.2 L55.0 5.1 L54.5 5.2 L54.1 5.2 L53.6 5.2 L53.1 5.2 L52.7 5.2 L52.2 5.2 L51.8 5.3 L51.3 5.2 L50.9 5.2 L50.4 5.2 L50.0 5.2 L49.5 5.3 L49.0 5.3 L48.6 5.2 L48.1 5.3 L47.7 5.3 L47.2 5.2 L46.8 5.3 L46.3 5.3 L45.9 5.3 L45.4 5.4 L45.0 5.4 L44.5 5.3 L44.0 5.4 L43.6 5.3 L43.1 5.3 L42.7 5.4 L42.2 5.5 L41.8 5.3 L41.3 5.3 L40.9 5.4 L40.4 5.4 L39.9 5.4 L39.5 5.5 L39.0 5.4 L38.6 5.4 L38.1 5.5 L37.7 5.6 L37.2 5.5 L36.8 5.6 L36.3 5.6 L35.8 5.6 L35.4 5.5 L34.9 5.4 L34.5 5.7 L34.0 5.7 L33.6 5.5 L33.1 5.8 L32.7 5.7 L32.2 5.5 L31.8 5.8 L31.3 5.8 L30.8 5.8 L30.4 5.7 L29.9 5.7 L29.5 5.5 L29.0 5.8 L28.6 5.8 L28.1 5.9 L27.7 5.8 L27.2 5.8 L26.7 6.0 L26.3 5.6 L25.8 5.8 L25.4 5.8 L24.9 5.9 L24.5 6.1 L24.0 5.9 L23.6 6.0 L23.1 6.1 L22.6 6.2 L22.2 5.9 L21.7 6.2 L21.3 6.2 L20.8 6.2 L20.4 6.5 L19.9 6.1 L19.5 6.6 L19.0 6.2 L18.6 6.2 L18.1 6.4 L17.6 6.5 L17.2 6.3 L16.7 5.9 L16.3 6.5 L15.8 6.1 L15.4 6.5 L14.9 6.6 L14.5 6.3 L14.0 6.1 L13.5 6.5 L13.1 6.6 L12.6 7.0 L12.2 6.9 L11.7 6.9 L11.3 6.8 L10.8 6.2 L10.4 7.1 L9.9 6.8 L9.4 6.3 L9.0 6.4 L8.5 6.6 L8.1 6.4 L7.6 6.6 L7.2 6.6 L6.7 6.5 L6.3 6.9 L5.8 7.0 L5.4 6.6 L4.9 6.3 L4.4 7.0 L4.0 6.9 L3.5 6.7 L3.1 6.5 L2.6 6.7 L2.2 6.8 L1.7 6.0 L1.3 5.9 L0.8 5.4 Z" fill="#1a2a78"/><path d="M0.8 12.34 H88.30" stroke="#1a2a78" stroke-width="0.45" opacity="0.55"/><path d="M0.8 11.8 L1.3 11.1 L1.7 10.4 L2.2 10.1 L2.6 10.7 L3.1 10.2 L3.5 10.3 L4.0 10.8 L4.4 10.8 L4.9 10.0 L5.4 10.0 L5.8 10.0 L6.3 10.5 L6.7 10.3 L7.2 10.3 L7.6 10.2 L8.1 10.7 L8.5 10.3 L9.0 10.5 L9.4 10.3 L9.9 10.5 L10.4 10.6 L10.8 10.1 L11.3 10.6 L11.7 10.2 L12.2 10.1 L12.6 10.3 L13.1 10.7 L13.5 10.2 L14.0 10.2 L14.5 10.9 L14.9 10.8 L15.4 10.8 L15.8 11.0 L16.3 10.7 L16.7 11.0 L17.2 10.6 L17.6 10.6 L18.1 11.0 L18.6 11.2 L19.0 10.9 L19.5 10.7 L19.9 10.9 L20.4 10.9 L20.8 10.6 L21.3 10.7 L21.7 11.2 L22.2 11.1 L22.6 10.9 L23.1 11.2 L23.6 11.3 L24.0 11.4 L24.5 11.1 L24.9 11.4 L25.4 11.2 L25.8 11.1 L26.3 11.0 L26.7 11.5 L27.2 11.2 L27.7 11.2 L28.1 11.4 L28.6 11.2 L29.0 11.2 L29.5 11.2 L29.9 11.5 L30.4 11.5 L30.8 11.4 L31.3 11.3 L31.8 11.5 L32.2 11.3 L32.7 11.4 L33.1 11.4 L33.6 11.5 L34.0 11.6 L34.5 11.5 L34.9 11.7 L35.4 11.7 L35.8 11.6 L36.3 11.7 L36.8 11.7 L37.2 11.6 L37.7 11.8 L38.1 11.7 L38.6 11.7 L39.0 11.8 L39.5 11.6 L39.9 11.7 L40.4 11.8 L40.9 11.7 L41.3 11.8 L41.8 11.7 L42.2 11.8 L42.7 11.8 L43.1 11.8 L43.6 11.9 L44.0 11.9 L44.5 11.8 L45.0 11.9 L45.4 11.9 L45.9 11.9 L46.3 11.9 L46.8 11.9 L47.2 11.9 L47.7 11.9 L48.1 11.9 L48.6 11.9 L49.0 11.9 L49.5 12.0 L50.0 11.9 L50.4 12.0 L50.9 12.0 L51.3 12.0 L51.8 12.0 L52.2 12.0 L52.7 12.0 L53.1 12.0 L53.6 12.0 L54.1 12.0 L54.5 12.0 L55.0 12.0 L55.4 12.0 L55.9 12.0 L56.3 12.0 L56.8 12.0 L57.2 12.0 L57.7 12.0 L58.2 12.1 L58.6 12.1 L59.1 12.1 L59.5 12.1 L60.0 12.1 L60.4 12.1 L60.9 12.1 L61.3 12.1 L61.8 12.1 L62.2 12.1 L62.7 12.1 L63.2 12.1 L63.6 12.1 L64.1 12.1 L64.5 12.1 L65.0 12.1 L65.4 12.1 L65.9 12.1 L66.3 12.1 L66.8 12.1 L66.8 12.6 L66.3 12.6 L65.9 12.6 L65.4 12.6 L65.0 12.6 L64.5 12.5 L64.1 12.6 L63.6 12.6 L63.2 12.5 L62.7 12.6 L62.2 12.6 L61.8 12.5 L61.3 12.6 L60.9 12.6 L60.4 12.5 L60.0 12.6 L59.5 12.6 L59.1 12.6 L58.6 12.6 L58.2 12.6 L57.7 12.6 L57.2 12.6 L56.8 12.6 L56.3 12.6 L55.9 12.6 L55.4 12.6 L55.0 12.6 L54.5 12.6 L54.1 12.6 L53.6 12.6 L53.1 12.6 L52.7 12.6 L52.2 12.6 L51.8 12.7 L51.3 12.6 L50.9 12.7 L50.4 12.7 L50.0 12.7 L49.5 12.7 L49.0 12.8 L48.6 12.7 L48.1 12.7 L47.7 12.7 L47.2 12.8 L46.8 12.7 L46.3 12.7 L45.9 12.8 L45.4 12.7 L45.0 12.8 L44.5 12.8 L44.0 12.7 L43.6 12.7 L43.1 12.8 L42.7 12.9 L42.2 12.8 L41.8 12.8 L41.3 12.9 L40.9 12.8 L40.4 12.8 L39.9 12.8 L39.5 12.9 L39.0 12.8 L38.6 12.9 L38.1 13.0 L37.7 12.9 L37.2 13.0 L36.8 12.8 L36.3 13.0 L35.8 12.9 L35.4 13.0 L34.9 12.8 L34.5 13.2 L34.0 12.9 L33.6 13.2 L33.1 13.2 L32.7 13.1 L32.2 13.1 L31.8 13.1 L31.3 13.1 L30.8 13.2 L30.4 13.0 L29.9 13.2 L29.5 13.2 L29.0 13.3 L28.6 13.5 L28.1 13.2 L27.7 13.5 L27.2 13.4 L26.7 13.1 L26.3 13.6 L25.8 13.5 L25.4 13.3 L24.9 13.2 L24.5 13.5 L24.0 13.3 L23.6 13.2 L23.1 13.5 L22.6 13.7 L22.2 13.6 L21.7 13.5 L21.3 13.6 L20.8 13.7 L20.4 13.8 L19.9 13.8 L19.5 13.7 L19.0 13.5 L18.6 13.5 L18.1 13.7 L17.6 13.8 L17.2 14.1 L16.7 13.5 L16.3 13.8 L15.8 13.8 L15.4 13.6 L14.9 13.8 L14.5 13.6 L14.0 14.1 L13.5 14.0 L13.1 13.7 L12.6 14.0 L12.2 14.0 L11.7 14.1 L11.3 13.7 L10.8 14.6 L10.4 13.9 L9.9 13.9 L9.4 13.9 L9.0 13.9 L8.5 14.2 L8.1 13.6 L7.6 14.3 L7.2 13.9 L6.7 14.0 L6.3 14.1 L5.8 14.5 L5.4 14.8 L4.9 14.6 L4.4 13.6 L4.0 13.7 L3.5 14.1 L3.1 14.1 L2.6 14.0 L2.2 14.1 L1.7 14.3 L1.3 13.4 L0.8 12.8 Z" fill="#1a2a78"/><path d="M9.80 0.6 V16.30" stroke="#3c3430" stroke-width="0.55" fill="none" opacity="0.85"/><path d="M9.80 0.60 C19.32 6.49 41.52 8.35 88.50 8.45" stroke="#3c3430" stroke-width="0.55" fill="none" opacity="0.85"/><path d="M9.80 8.45 C19.32 14.34 41.52 16.20 88.50 16.30" stroke="#3c3430" stroke-width="0.55" fill="none" opacity="0.85"/><path d="M0.6 8.45 H88.50" stroke="#4a4442" stroke-width="0.5" opacity="0.7"/><rect x="1.60" y="1.9" width="8.38" height="4.6" rx="0.8" fill="#554a46" fill-opacity="0.85" stroke="#e8e8e8" stroke-opacity="0.85" stroke-width="0.55"/><text x="2.70" y="5.75" font-family="Liberation Sans" font-weight="bold" font-size="4.5" fill="#fff" stroke="#fff" stroke-width="0.32" textLength="5.98" lengthAdjust="spacingAndGlyphs">2-1</text><rect x="0.4" y="0.4" width="88.30" height="16.10" fill="none" stroke="#4a4442" stroke-width="0.8"/></svg>
<svg class="a" style="left:672.60px;top:399.95px" width="30.40" height="16.90" viewBox="0 0 30.40 16.90"><rect x="0.4" y="0.4" width="29.60" height="16.10" fill="#b2eaaa"/><path d="M0.8 4.90 H29.60" stroke="#22c818" stroke-width="0.45" opacity="0.55"/><path d="M1.4 4.6 L1.9 4.3 L2.3 4.2 L2.8 4.1 L3.2 4.0 L3.7 4.2 L4.2 4.0 L4.6 4.1 L5.1 4.1 L5.5 4.2 L6.0 4.0 L6.5 4.0 L6.9 3.9 L7.4 4.0 L7.8 4.1 L8.3 4.0 L8.8 3.9 L9.2 4.0 L9.7 4.1 L10.1 3.9 L10.6 4.2 L11.1 3.9 L11.5 4.1 L12.0 3.9 L12.4 3.9 L12.9 4.1 L13.4 4.0 L13.8 4.1 L14.3 4.0 L14.7 4.2 L15.2 4.1 L15.7 4.2 L16.1 4.1 L16.6 4.2 L17.0 4.2 L17.5 4.0 L18.0 4.2 L18.4 4.2 L18.9 4.4 L19.3 4.4 L19.8 4.4 L20.3 4.4 L20.7 4.5 L21.2 4.5 L21.6 4.6 L22.1 4.6 L22.6 4.6 L23.0 4.6 L23.5 4.6 L23.9 4.6 L24.4 4.7 L24.4 5.2 L23.9 5.2 L23.5 5.1 L23.0 5.1 L22.6 5.1 L22.1 5.2 L21.6 5.2 L21.2 5.3 L20.7 5.2 L20.3 5.3 L19.8 5.3 L19.3 5.4 L18.9 5.4 L18.4 5.4 L18.0 5.5 L17.5 5.6 L17.0 5.6 L16.6 5.6 L16.1 5.5 L15.7 5.6 L15.2 5.5 L14.7 5.5 L14.3 5.5 L13.8 5.7 L13.4 5.9 L12.9 5.7 L12.4 5.7 L12.0 5.9 L11.5 5.5 L11.1 5.8 L10.6 5.6 L10.1 5.7 L9.7 5.6 L9.2 5.9 L8.8 5.9 L8.3 5.8 L7.8 5.6 L7.4 5.7 L6.9 5.7 L6.5 5.8 L6.0 5.8 L5.5 5.5 L5.1 5.6 L4.6 5.6 L4.2 5.7 L3.7 5.6 L3.2 5.8 L2.8 5.6 L2.3 5.6 L1.9 5.4 L1.4 5.2 Z" fill="#22c818"/><path d="M0.8 12.34 H29.60" stroke="#22c818" stroke-width="0.45" opacity="0.55"/><path d="M1.4 12.0 L1.9 11.8 L2.3 11.5 L2.8 11.3 L3.2 11.7 L3.7 11.5 L4.2 11.4 L4.6 11.7 L5.1 11.6 L5.5 11.5 L6.0 11.5 L6.5 11.4 L6.9 11.3 L7.4 11.5 L7.8 11.6 L8.3 11.6 L8.8 11.4 L9.2 11.6 L9.7 11.4 L10.1 11.6 L10.6 11.6 L11.1 11.6 L11.5 11.6 L12.0 11.6 L12.4 11.7 L12.9 11.5 L13.4 11.4 L13.8 11.4 L14.3 11.4 L14.7 11.5 L15.2 11.5 L15.7 11.6 L16.1 11.5 L16.6 11.5 L17.0 11.6 L17.5 11.7 L18.0 11.6 L18.4 11.6 L18.9 11.7 L19.3 11.8 L19.8 11.9 L20.3 11.9 L20.7 11.9 L21.2 12.0 L21.6 12.0 L22.1 12.0 L22.6 12.1 L23.0 12.1 L23.5 12.1 L23.9 12.1 L24.4 12.1 L24.4 12.6 L23.9 12.6 L23.5 12.6 L23.0 12.6 L22.6 12.6 L22.1 12.6 L21.6 12.7 L21.2 12.6 L20.7 12.7 L20.3 12.7 L19.8 12.7 L19.3 12.8 L18.9 12.8 L18.4 12.9 L18.0 12.9 L17.5 13.0 L17.0 12.9 L16.6 13.2 L16.1 13.1 L15.7 12.9 L15.2 13.0 L14.7 13.2 L14.3 13.1 L13.8 13.1 L13.4 13.2 L12.9 13.1 L12.4 12.9 L12.0 12.9 L11.5 13.1 L11.1 13.0 L10.6 13.0 L10.1 13.0 L9.7 13.1 L9.2 13.1 L8.8 13.1 L8.3 13.0 L7.8 13.0 L7.4 13.2 L6.9 13.3 L6.5 13.3 L6.0 13.0 L5.5 13.0 L5.1 13.1 L4.6 12.9 L4.2 13.1 L3.7 13.2 L3.2 13.0 L2.8 13.3 L2.3 13.1 L1.9 12.9 L1.4 12.6 Z" fill="#22c818"/><path d="M22.40 0.6 V16.30" stroke="#3c3430" stroke-width="0.55" fill="none" opacity="0.85"/><path d="M22.40 0.60 L29.80 8.45" stroke="#3c3430" stroke-width="0.55" fill="none" opacity="0.85"/><path d="M22.40 8.45 L29.80 16.30" stroke="#3c3430" stroke-width="0.55" fill="none" opacity="0.85"/><path d="M0.6 8.45 H29.80" stroke="#4a4442" stroke-width="0.5" opacity="0.7"/><rect x="1.90" y="1.9" width="19.43" height="4.6" rx="0.8" fill="#554a46" fill-opacity="0.85" stroke="#e8e8e8" stroke-opacity="0.85" stroke-width="0.55"/><text x="3.00" y="5.75" font-family="Liberation Sans" font-weight="bold" font-size="4.5" fill="#fff" stroke="#fff" stroke-width="0.32" textLength="17.03" lengthAdjust="spacingAndGlyphs">Just_Tra</text><rect x="1.8" y="10.60" width="18.73" height="4.6" rx="0.7" fill="#554a46" fill-opacity="0.85" stroke="#e8e8e8" stroke-opacity="0.85" stroke-width="0.55"/><circle cx="4.2" cy="12.90" r="1.5" fill="none" stroke="#fff" stroke-width="0.45"/><path d="M4.2 11.90 v2" stroke="#fff" stroke-width="0.45"/><text x="6.4" y="14.60" font-family="Liberation Sans" font-weight="bold" font-size="4.3" fill="#fff" stroke="#fff" stroke-width="0.3">+0.7 d</text><rect x="0.4" y="0.4" width="29.60" height="16.10" fill="none" stroke="#4a4442" stroke-width="0.8"/></svg>
<svg class="a" style="left:198.30px;top:418.45px" width="61.60" height="16.90" viewBox="0 0 61.60 16.90"><rect x="0.4" y="0.4" width="60.80" height="16.10" fill="#efc2ba"/><path d="M0.8 4.90 H60.80" stroke="#d41414" stroke-width="0.45" opacity="0.55"/><path d="M0.7 4.4 L1.2 4.0 L1.6 3.4 L2.1 3.2 L2.5 3.3 L3.0 3.4 L3.4 3.5 L3.9 3.3 L4.4 3.1 L4.8 3.1 L5.3 3.3 L5.7 3.5 L6.2 3.6 L6.6 3.1 L7.1 3.5 L7.6 3.4 L8.0 3.3 L8.5 3.6 L8.9 3.4 L9.4 3.4 L9.8 3.3 L10.3 3.1 L10.8 3.1 L11.2 3.5 L11.7 3.1 L12.1 3.3 L12.6 3.1 L13.1 3.3 L13.5 3.4 L14.0 3.1 L14.4 3.2 L14.9 3.7 L15.3 3.7 L15.8 3.5 L16.3 3.5 L16.7 3.9 L17.2 3.7 L17.6 3.6 L18.1 3.5 L18.5 3.7 L19.0 3.8 L19.5 3.9 L19.9 3.8 L20.4 3.7 L20.8 3.9 L21.3 4.1 L21.7 4.0 L22.2 4.1 L22.7 4.0 L23.1 4.2 L23.6 4.0 L24.0 4.2 L24.5 4.1 L24.9 4.2 L25.4 4.2 L25.9 4.1 L26.3 4.2 L26.8 4.2 L27.2 4.3 L27.7 4.4 L28.1 4.3 L28.6 4.4 L29.1 4.3 L29.5 4.5 L30.0 4.4 L30.4 4.4 L30.9 4.5 L31.3 4.5 L31.8 4.5 L32.3 4.5 L32.7 4.5 L33.2 4.5 L33.6 4.5 L34.1 4.5 L34.6 4.5 L35.0 4.5 L35.5 4.6 L35.9 4.6 L36.4 4.6 L36.8 4.6 L37.3 4.6 L37.8 4.6 L38.2 4.6 L38.7 4.6 L39.1 4.6 L39.6 4.6 L40.0 4.6 L40.5 4.6 L41.0 4.6 L41.4 4.6 L41.9 4.6 L42.3 4.6 L42.8 4.7 L43.2 4.7 L43.7 4.7 L43.7 5.1 L43.2 5.2 L42.8 5.1 L42.3 5.2 L41.9 5.1 L41.4 5.1 L41.0 5.2 L40.5 5.2 L40.0 5.1 L39.6 5.2 L39.1 5.1 L38.7 5.1 L38.2 5.2 L37.8 5.1 L37.3 5.1 L36.8 5.1 L36.4 5.2 L35.9 5.2 L35.5 5.2 L35.0 5.2 L34.6 5.3 L34.1 5.3 L33.6 5.2 L33.2 5.3 L32.7 5.3 L32.3 5.3 L31.8 5.2 L31.3 5.3 L30.9 5.3 L30.4 5.3 L30.0 5.4 L29.5 5.3 L29.1 5.5 L28.6 5.4 L28.1 5.5 L27.7 5.5 L27.2 5.4 L26.8 5.4 L26.3 5.5 L25.9 5.5 L25.4 5.6 L24.9 5.5 L24.5 5.6 L24.0 5.5 L23.6 5.8 L23.1 5.5 L22.7 5.6 L22.2 5.7 L21.7 5.7 L21.3 5.7 L20.8 5.8 L20.4 5.8 L19.9 5.9 L19.5 5.9 L19.0 5.9 L18.5 6.0 L18.1 6.2 L17.6 6.2 L17.2 5.9 L16.7 5.9 L16.3 6.0 L15.8 6.2 L15.3 5.8 L14.9 6.0 L14.4 6.4 L14.0 6.7 L13.5 6.3 L13.1 6.6 L12.6 6.6 L12.1 6.2 L11.7 6.7 L11.2 6.4 L10.8 6.7 L10.3 6.7 L9.8 6.5 L9.4 6.1 L8.9 6.4 L8.5 6.1 L8.0 6.4 L7.6 6.3 L7.1 6.4 L6.6 6.3 L6.2 6.1 L5.7 6.4 L5.3 6.5 L4.8 6.7 L4.4 6.8 L3.9 6.5 L3.4 6.0 L3.0 6.3 L2.5 6.2 L2.1 6.6 L1.6 6.2 L1.2 5.7 L0.7 5.3 Z" fill="#d41414"/><path d="M0.8 12.34 H60.80" stroke="#d41414" stroke-width="0.45" opacity="0.55"/><path d="M0.7 11.9 L1.2 11.6 L1.6 11.2 L2.1 10.8 L2.5 10.5 L3.0 11.0 L3.4 10.6 L3.9 10.8 L4.4 11.2 L4.8 10.7 L5.3 10.6 L5.7 10.9 L6.2 10.8 L6.6 10.9 L7.1 10.6 L7.6 11.0 L8.0 11.1 L8.5 10.8 L8.9 10.8 L9.4 10.6 L9.8 11.1 L10.3 10.8 L10.8 10.5 L11.2 10.9 L11.7 10.7 L12.1 11.1 L12.6 10.5 L13.1 10.9 L13.5 11.1 L14.0 11.1 L14.4 10.6 L14.9 11.1 L15.3 11.0 L15.8 11.0 L16.3 10.9 L16.7 10.9 L17.2 10.9 L17.6 11.1 L18.1 11.1 L18.5 11.2 L19.0 11.0 L19.5 11.0 L19.9 11.4 L20.4 11.5 L20.8 11.4 L21.3 11.3 L21.7 11.6 L22.2 11.4 L22.7 11.6 L23.1 11.4 L23.6 11.6 L24.0 11.5 L24.5 11.7 L24.9 11.6 L25.4 11.5 L25.9 11.7 L26.3 11.7 L26.8 11.7 L27.2 11.7 L27.7 11.6 L28.1 11.8 L28.6 11.8 L29.1 11.7 L29.5 11.8 L30.0 11.8 L30.4 11.9 L30.9 11.9 L31.3 11.9 L31.8 11.9 L32.3 11.9 L32.7 11.9 L33.2 12.0 L33.6 11.9 L34.1 12.0 L34.6 12.0 L35.0 12.0 L35.5 12.0 L35.9 12.0 L36.4 12.0 L36.8 12.0 L37.3 12.0 L37.8 12.1 L38.2 12.1 L38.7 12.1 L39.1 12.1 L39.6 12.1 L40.0 12.1 L40.5 12.1 L41.0 12.1 L41.4 12.1 L41.9 12.1 L42.3 12.1 L42.8 12.1 L43.2 12.1 L43.7 12.1 L43.7 12.5 L43.2 12.5 L42.8 12.5 L42.3 12.6 L41.9 12.6 L41.4 12.6 L41.0 12.6 L40.5 12.6 L40.0 12.5 L39.6 12.6 L39.1 12.6 L38.7 12.6 L38.2 12.6 L37.8 12.6 L37.3 12.6 L36.8 12.6 L36.4 12.6 L35.9 12.7 L35.5 12.6 L35.0 12.7 L34.6 12.7 L34.1 12.7 L33.6 12.7 L33.2 12.7 L32.7 12.8 L32.3 12.7 L31.8 12.8 L31.3 12.7 L30.9 12.8 L30.4 12.7 L30.0 12.8 L29.5 12.8 L29.1 12.9 L28.6 12.9 L28.1 12.8 L27.7 13.0 L27.2 12.9 L26.8 13.0 L26.3 12.8 L25.9 12.9 L25.4 13.1 L24.9 13.0 L24.5 13.0 L24.0 13.2 L23.6 12.9 L23.1 13.2 L22.7 13.1 L22.2 13.2 L21.7 12.9 L21.3 13.1 L20.8 13.3 L20.4 13.1 L19.9 13.1 L19.5 13.6 L19.0 13.7 L18.5 13.2 L18.1 13.3 L17.6 13.7 L17.2 13.5 L16.7 13.7 L16.3 13.6 L15.8 13.5 L15.3 13.4 L14.9 13.5 L14.4 13.7 L14.0 13.5 L13.5 13.4 L13.1 13.8 L12.6 14.1 L12.1 13.6 L11.7 13.9 L11.2 13.5 L10.8 14.2 L10.3 13.9 L9.8 13.5 L9.4 13.8 L8.9 13.8 L8.5 13.6 L8.0 13.3 L7.6 13.5 L7.1 13.9 L6.6 13.8 L6.2 13.7 L5.7 13.5 L5.3 14.1 L4.8 13.9 L4.4 13.4 L3.9 13.9 L3.4 14.2 L3.0 13.6 L2.5 13.9 L2.1 13.8 L1.6 13.3 L1.2 13.0 L0.7 12.8 Z" fill="#d41414"/><path d="M14.70 0.6 V16.30" stroke="#3c3430" stroke-width="0.55" fill="none" opacity="0.85"/><path d="M14.70 0.60 L61.00 8.45" stroke="#3c3430" stroke-width="0.55" fill="none" opacity="0.85"/><path d="M14.70 8.45 L61.00 16.30" stroke="#3c3430" stroke-width="0.55" fill="none" opacity="0.85"/><path d="M0.6 8.45 H61.00" stroke="#4a4442" stroke-width="0.5" opacity="0.7"/><rect x="1.70" y="1.9" width="12.06" height="4.6" rx="0.8" fill="#554a46" fill-opacity="0.85" stroke="#e8e8e8" stroke-opacity="0.85" stroke-width="0.55"/><text x="2.80" y="5.75" font-family="Liberation Sans" font-weight="bold" font-size="4.5" fill="#fff" stroke="#fff" stroke-width="0.32" textLength="9.66" lengthAdjust="spacingAndGlyphs">SOT-</text><rect x="0.4" y="0.4" width="60.80" height="16.10" fill="none" stroke="#4a4442" stroke-width="0.8"/></svg>
<svg class="a" style="left:384.30px;top:418.45px" width="76.30" height="16.90" viewBox="0 0 76.30 16.90"><rect x="0.4" y="0.4" width="75.50" height="16.10" fill="#9aa8e6"/><path d="M0.8 4.90 H75.50" stroke="#1a2a78" stroke-width="0.45" opacity="0.55"/><path d="M1.7 4.5 L2.2 4.2 L2.6 3.6 L3.1 3.9 L3.5 3.5 L4.0 3.5 L4.4 3.9 L4.9 3.7 L5.3 3.6 L5.8 3.8 L6.3 3.5 L6.7 3.8 L7.2 3.4 L7.6 3.5 L8.1 3.8 L8.5 3.4 L9.0 3.4 L9.4 3.9 L9.9 3.4 L10.4 3.7 L10.8 3.5 L11.3 3.8 L11.7 3.4 L12.2 3.7 L12.6 3.7 L13.1 3.6 L13.5 3.7 L14.0 3.4 L14.5 3.3 L14.9 3.6 L15.4 3.4 L15.8 3.5 L16.3 3.4 L16.7 3.7 L17.2 3.4 L17.6 3.6 L18.1 3.5 L18.6 3.4 L19.0 3.4 L19.5 3.8 L19.9 3.6 L20.4 3.7 L20.8 3.7 L21.3 3.6 L21.8 3.8 L22.2 3.9 L22.7 3.8 L23.1 3.9 L23.6 3.7 L24.0 3.5 L24.5 3.9 L24.9 3.4 L25.4 3.7 L25.9 3.6 L26.3 3.6 L26.8 3.8 L27.2 3.7 L27.7 3.5 L28.1 3.6 L28.6 3.4 L29.0 3.5 L29.5 3.7 L30.0 3.6 L30.4 3.4 L30.9 3.7 L31.3 3.9 L31.8 3.4 L32.2 3.6 L32.7 3.3 L33.1 3.7 L33.6 3.9 L34.1 3.8 L34.5 3.7 L35.0 3.6 L35.4 3.8 L35.9 3.7 L36.3 3.4 L36.8 3.8 L37.2 3.4 L37.7 3.4 L38.2 3.9 L38.6 3.4 L39.1 3.4 L39.5 3.4 L40.0 3.3 L40.4 3.7 L40.9 3.5 L41.3 3.4 L41.8 3.4 L42.3 3.8 L42.7 3.8 L43.2 3.5 L43.6 3.6 L44.1 3.3 L44.5 3.8 L45.0 3.9 L45.4 3.5 L45.9 3.7 L46.4 3.4 L46.8 3.7 L47.3 3.7 L47.7 3.4 L48.2 3.7 L48.6 3.6 L49.1 4.0 L49.5 3.9 L50.0 3.9 L50.5 3.6 L50.9 3.7 L51.4 3.8 L51.8 4.0 L52.3 3.9 L52.7 3.8 L53.2 4.2 L53.6 4.1 L54.1 4.0 L54.6 4.0 L55.0 4.3 L55.5 4.2 L55.9 4.2 L56.4 4.1 L56.8 4.3 L57.3 4.2 L57.8 4.4 L58.2 4.4 L58.7 4.4 L59.1 4.4 L59.6 4.3 L60.0 4.5 L60.5 4.4 L60.9 4.4 L61.4 4.5 L61.9 4.4 L62.3 4.5 L62.8 4.5 L63.2 4.5 L63.7 4.5 L64.1 4.5 L64.6 4.5 L65.0 4.6 L65.5 4.6 L66.0 4.6 L66.4 4.6 L66.9 4.6 L67.3 4.6 L67.8 4.6 L68.2 4.6 L68.7 4.6 L69.1 4.6 L69.6 4.6 L70.1 4.6 L70.5 4.6 L71.0 4.6 L71.4 4.6 L71.9 4.6 L72.3 4.6 L72.8 4.7 L73.2 4.7 L73.7 4.7 L73.7 5.1 L73.2 5.1 L72.8 5.1 L72.3 5.1 L71.9 5.1 L71.4 5.1 L71.0 5.1 L70.5 5.1 L70.1 5.1 L69.6 5.2 L69.1 5.1 L68.7 5.2 L68.2 5.1 L67.8 5.2 L67.3 5.1 L66.9 5.2 L66.4 5.1 L66.0 5.1 L65.5 5.2 L65.0 5.2 L64.6 5.3 L64.1 5.2 L63.7 5.2 L63.2 5.2 L62.8 5.2 L62.3 5.2 L61.9 5.4 L61.4 5.2 L60.9 5.3 L60.5 5.4 L60.0 5.3 L59.6 5.4 L59.1 5.3 L58.7 5.3 L58.2 5.4 L57.8 5.4 L57.3 5.5 L56.8 5.4 L56.4 5.5 L55.9 5.4 L55.5 5.5 L55.0 5.4 L54.6 5.8 L54.1 5.7 L53.6 5.6 L53.2 5.5 L52.7 5.8 L52.3 5.8 L51.8 5.6 L51.4 5.9 L50.9 6.1 L50.5 5.9 L50.0 5.9 L49.5 5.7 L49.1 5.9 L48.6 6.0 L48.2 6.1 L47.7 6.4 L47.3 5.9 L46.8 5.9 L46.4 6.1 L45.9 5.8 L45.4 6.2 L45.0 5.9 L44.5 5.9 L44.1 6.2 L43.6 6.2 L43.2 6.3 L42.7 5.7 L42.3 5.9 L41.8 6.1 L41.3 6.3 L40.9 6.2 L40.4 6.1 L40.0 6.5 L39.5 6.1 L39.1 6.2 L38.6 6.1 L38.2 5.9 L37.7 6.1 L37.2 6.3 L36.8 5.8 L36.3 6.4 L35.9 6.1 L35.4 5.8 L35.0 6.3 L34.5 5.9 L34.1 5.9 L33.6 5.8 L33.1 5.9 L32.7 6.5 L32.2 6.0 L31.8 6.2 L31.3 5.9 L30.9 5.8 L30.4 6.0 L30.0 6.1 L29.5 6.0 L29.0 6.1 L28.6 6.4 L28.1 6.1 L27.7 6.1 L27.2 5.9 L26.8 5.9 L26.3 6.1 L25.9 6.3 L25.4 6.1 L24.9 6.1 L24.5 5.7 L24.0 6.1 L23.6 6.0 L23.1 5.8 L22.7 5.9 L22.2 5.7 L21.8 5.8 L21.3 5.9 L20.8 5.9 L20.4 6.0 L19.9 6.0 L19.5 5.8 L19.0 6.2 L18.6 6.4 L18.1 6.3 L17.6 6.0 L17.2 6.4 L16.7 6.0 L16.3 6.3 L15.8 6.1 L15.4 6.2 L14.9 5.9 L14.5 6.2 L14.0 6.2 L13.5 5.9 L13.1 6.0 L12.6 6.0 L12.2 6.2 L11.7 6.5 L11.3 5.8 L10.8 6.0 L10.4 6.0 L9.9 6.1 L9.4 5.9 L9.0 6.4 L8.5 6.4 L8.1 6.0 L7.6 6.1 L7.2 6.3 L6.7 6.1 L6.3 6.1 L5.8 5.7 L5.3 6.0 L4.9 6.0 L4.4 5.7 L4.0 6.0 L3.5 6.2 L3.1 5.9 L2.6 6.1 L2.2 5.7 L1.7 5.2 Z" fill="#1a2a78"/><path d="M0.8 12.34 H75.50" stroke="#1a2a78" stroke-width="0.45" opacity="0.55"/><path d="M1.7 11.9 L2.2 11.6 L2.6 11.4 L3.1 11.3 L3.5 10.8 L4.0 11.2 L4.4 11.1 L4.9 10.8 L5.3 11.1 L5.8 11.0 L6.3 10.8 L6.7 11.0 L7.2 10.8 L7.6 11.0 L8.1 10.9 L8.5 10.9 L9.0 10.8 L9.4 11.0 L9.9 11.2 L10.4 11.1 L10.8 11.0 L11.3 11.2 L11.7 11.2 L12.2 11.2 L12.6 11.0 L13.1 11.1 L13.5 10.8 L14.0 11.2 L14.5 11.3 L14.9 11.0 L15.4 11.0 L15.8 10.8 L16.3 11.0 L16.7 11.1 L17.2 11.3 L17.6 10.9 L18.1 11.0 L18.6 10.7 L19.0 11.0 L19.5 10.9 L19.9 10.9 L20.4 11.0 L20.8 10.8 L21.3 11.1 L21.8 10.9 L22.2 10.7 L22.7 10.9 L23.1 11.3 L23.6 11.3 L24.0 11.2 L24.5 10.8 L24.9 10.9 L25.4 10.9 L25.9 11.2 L26.3 11.3 L26.8 11.3 L27.2 11.3 L27.7 10.8 L28.1 11.2 L28.6 11.3 L29.0 10.9 L29.5 11.3 L30.0 11.1 L30.4 11.2 L30.9 11.2 L31.3 10.9 L31.8 11.0 L32.2 10.8 L32.7 11.0 L33.1 10.9 L33.6 10.9 L34.1 11.0 L34.5 11.1 L35.0 11.0 L35.4 10.8 L35.9 10.8 L36.3 10.8 L36.8 10.8 L37.2 10.7 L37.7 11.3 L38.2 10.8 L38.6 10.9 L39.1 10.7 L39.5 11.0 L40.0 10.9 L40.4 11.2 L40.9 11.0 L41.3 11.2 L41.8 11.1 L42.3 10.9 L42.7 11.2 L43.2 11.3 L43.6 11.1 L44.1 10.9 L44.5 10.7 L45.0 11.2 L45.4 11.2 L45.9 10.8 L46.4 10.9 L46.8 10.8 L47.3 10.8 L47.7 10.9 L48.2 11.1 L48.6 10.9 L49.1 11.3 L49.5 11.3 L50.0 11.0 L50.5 11.1 L50.9 11.2 L51.4 11.4 L51.8 11.3 L52.3 11.4 L52.7 11.5 L53.2 11.4 L53.6 11.3 L54.1 11.5 L54.6 11.5 L55.0 11.5 L55.5 11.5 L55.9 11.5 L56.4 11.7 L56.8 11.6 L57.3 11.6 L57.8 11.8 L58.2 11.7 L58.7 11.7 L59.1 11.7 L59.6 11.8 L60.0 11.8 L60.5 11.9 L60.9 11.9 L61.4 11.9 L61.9 11.9 L62.3 11.9 L62.8 11.9 L63.2 11.9 L63.7 12.0 L64.1 12.0 L64.6 12.0 L65.0 12.0 L65.5 12.0 L66.0 12.0 L66.4 12.0 L66.9 12.0 L67.3 12.0 L67.8 12.0 L68.2 12.1 L68.7 12.1 L69.1 12.1 L69.6 12.1 L70.1 12.1 L70.5 12.1 L71.0 12.1 L71.4 12.1 L71.9 12.1 L72.3 12.1 L72.8 12.1 L73.2 12.1 L73.7 12.1 L73.7 12.5 L73.2 12.6 L72.8 12.6 L72.3 12.5 L71.9 12.6 L71.4 12.6 L71.0 12.6 L70.5 12.6 L70.1 12.6 L69.6 12.6 L69.1 12.6 L68.7 12.6 L68.2 12.6 L67.8 12.6 L67.3 12.6 L66.9 12.6 L66.4 12.6 L66.0 12.6 L65.5 12.7 L65.0 12.7 L64.6 12.6 L64.1 12.7 L63.7 12.7 L63.2 12.8 L62.8 12.7 L62.3 12.7 L61.9 12.6 L61.4 12.8 L60.9 12.7 L60.5 12.7 L60.0 12.9 L59.6 12.8 L59.1 12.8 L58.7 13.0 L58.2 12.8 L57.8 12.8 L57.3 13.0 L56.8 13.1 L56.4 12.9 L55.9 13.2 L55.5 13.0 L55.0 13.2 L54.6 13.0 L54.1 13.1 L53.6 13.3 L53.2 13.3 L52.7 13.2 L52.3 13.4 L51.8 13.2 L51.4 13.2 L50.9 13.5 L50.5 13.5 L50.0 13.7 L49.5 13.2 L49.1 13.4 L48.6 13.5 L48.2 13.3 L47.7 13.5 L47.3 13.8 L46.8 13.9 L46.4 13.6 L45.9 13.6 L45.4 13.4 L45.0 13.2 L44.5 13.8 L44.1 13.7 L43.6 13.3 L43.2 13.3 L42.7 13.2 L42.3 13.4 L41.8 13.5 L41.3 13.4 L40.9 13.6 L40.4 13.5 L40.0 13.6 L39.5 13.8 L39.1 13.9 L38.6 13.6 L38.2 13.6 L37.7 13.4 L37.2 13.9 L36.8 13.9 L36.3 13.6 L35.9 14.0 L35.4 13.8 L35.0 13.4 L34.5 13.3 L34.1 13.7 L33.6 13.8 L33.1 13.7 L32.7 13.4 L32.2 13.8 L31.8 13.6 L31.3 13.5 L30.9 13.3 L30.4 13.4 L30.0 13.5 L29.5 13.2 L29.0 13.5 L28.6 13.2 L28.1 13.5 L27.7 13.6 L27.2 13.2 L26.8 13.4 L26.3 13.3 L25.9 13.2 L25.4 13.4 L24.9 13.7 L24.5 14.0 L24.0 13.2 L23.6 13.1 L23.1 13.4 L22.7 13.8 L22.2 13.8 L21.8 13.7 L21.3 13.4 L20.8 13.9 L20.4 13.5 L19.9 13.6 L19.5 13.5 L19.0 13.5 L18.6 13.7 L18.1 13.3 L17.6 13.5 L17.2 13.2 L16.7 13.3 L16.3 13.5 L15.8 13.9 L15.4 13.7 L14.9 13.3 L14.5 13.2 L14.0 13.4 L13.5 13.9 L13.1 13.3 L12.6 13.8 L12.2 13.4 L11.7 13.3 L11.3 13.2 L10.8 13.6 L10.4 13.4 L9.9 13.4 L9.4 13.6 L9.0 13.8 L8.5 13.6 L8.1 13.6 L7.6 13.7 L7.2 13.9 L6.7 13.4 L6.3 13.7 L5.8 13.6 L5.3 13.4 L4.9 13.7 L4.4 13.3 L4.0 13.3 L3.5 13.8 L3.1 13.2 L2.6 13.3 L2.2 13.1 L1.7 12.8 Z" fill="#1a2a78"/><path d="M1.70 0.6 V16.30" stroke="#3c3430" stroke-width="0.55" fill="none" opacity="0.85"/><path d="M46.10 0.6 V16.30" stroke="#3c3430" stroke-width="0.55" fill="none" opacity="0.85"/><path d="M0.6 8.45 L1.70 0.60" stroke="#3c3430" stroke-width="0.55" fill="none" opacity="0.85"/><path d="M46.10 0.60 L75.70 8.45" stroke="#3c3430" stroke-width="0.55" fill="none" opacity="0.85"/><path d="M0.6 16.30 L1.70 8.45" stroke="#3c3430" stroke-width="0.55" fill="none" opacity="0.85"/><path d="M46.10 8.45 L75.70 16.30" stroke="#3c3430" stroke-width="0.55" fill="none" opacity="0.85"/><path d="M0.6 8.45 H75.70" stroke="#4a4442" stroke-width="0.5" opacity="0.7"/><rect x="2.20" y="1.9" width="39.81" height="4.6" rx="0.8" fill="#554a46" fill-opacity="0.85" stroke="#e8e8e8" stroke-opacity="0.85" stroke-width="0.55"/><text x="3.30" y="5.75" font-family="Liberation Sans" font-weight="bold" font-size="4.5" fill="#fff" stroke="#fff" stroke-width="0.32" textLength="37.41" lengthAdjust="spacingAndGlyphs">CEDS UNDER WAT</text><rect x="1.8" y="10.60" width="22.79" height="4.6" rx="0.7" fill="#554a46" fill-opacity="0.85" stroke="#e8e8e8" stroke-opacity="0.85" stroke-width="0.55"/><circle cx="4.2" cy="12.90" r="1.5" fill="none" stroke="#fff" stroke-width="0.45"/><path d="M4.2 11.90 v2" stroke="#fff" stroke-width="0.45"/><text x="6.4" y="14.60" font-family="Liberation Sans" font-weight="bold" font-size="4.3" fill="#fff" stroke="#fff" stroke-width="0.3">-13.8 dB</text><rect x="0.4" y="0.4" width="75.50" height="16.10" fill="none" stroke="#4a4442" stroke-width="0.8"/></svg>
<svg class="a" style="left:383.20px;top:436.95px" width="151.40" height="16.90" viewBox="0 0 151.40 16.90"><rect x="0.4" y="0.4" width="150.60" height="16.10" fill="#9aa8e6"/><path d="M0.8 4.90 H150.60" stroke="#1a2a78" stroke-width="0.45" opacity="0.55"/><path d="M0.8 4.5 L1.3 3.9 L1.7 3.5 L2.2 3.0 L2.6 3.3 L3.1 3.5 L3.5 3.1 L4.0 3.2 L4.4 3.7 L4.9 3.2 L5.4 3.5 L5.8 3.1 L6.3 3.7 L6.7 3.1 L7.2 3.1 L7.6 3.1 L8.1 3.3 L8.5 3.7 L9.0 3.3 L9.4 3.3 L9.9 3.4 L10.4 3.1 L10.8 3.4 L11.3 3.2 L11.7 3.5 L12.2 3.1 L12.6 3.6 L13.1 3.2 L13.5 3.6 L14.0 3.3 L14.5 3.7 L14.9 3.5 L15.4 3.0 L15.8 3.7 L16.3 3.4 L16.7 3.2 L17.2 3.5 L17.6 3.3 L18.1 3.4 L18.5 3.1 L19.0 3.5 L19.5 3.2 L19.9 3.7 L20.4 3.7 L20.8 3.7 L21.3 3.5 L21.7 3.6 L22.2 3.2 L22.6 3.2 L23.1 3.3 L23.6 3.1 L24.0 3.7 L24.5 3.7 L24.9 3.4 L25.4 3.3 L25.8 3.3 L26.3 3.6 L26.7 3.2 L27.2 3.3 L27.7 3.4 L28.1 3.6 L28.6 3.1 L29.0 3.7 L29.5 3.2 L29.9 3.1 L30.4 3.2 L30.8 3.7 L31.3 3.6 L31.7 3.6 L32.2 3.0 L32.7 3.2 L33.1 3.2 L33.6 3.4 L34.0 3.6 L34.5 3.2 L34.9 3.5 L35.4 3.4 L35.8 3.0 L36.3 3.1 L36.8 3.4 L37.2 3.6 L37.7 3.3 L38.1 3.1 L38.6 3.2 L39.0 3.2 L39.5 3.7 L39.9 3.6 L40.4 3.6 L40.8 3.0 L41.3 3.4 L41.8 3.0 L42.2 3.1 L42.7 3.4 L43.1 3.4 L43.6 3.3 L44.0 3.5 L44.5 3.7 L44.9 3.3 L45.4 3.6 L45.9 3.1 L46.3 3.0 L46.8 3.3 L47.2 3.5 L47.7 3.6 L48.1 3.7 L48.6 3.5 L49.0 3.3 L49.5 3.4 L50.0 3.5 L50.4 3.7 L50.9 3.2 L51.3 3.6 L51.8 3.5 L52.2 3.6 L52.7 3.4 L53.1 3.1 L53.6 3.7 L54.0 3.1 L54.5 3.4 L55.0 3.2 L55.4 3.1 L55.9 3.1 L56.3 3.1 L56.8 3.6 L57.2 3.2 L57.7 3.5 L58.1 3.2 L58.6 3.2 L59.1 3.3 L59.5 3.5 L60.0 3.3 L60.4 3.2 L60.9 3.1 L61.3 3.0 L61.8 3.5 L62.2 3.2 L62.7 3.4 L63.1 3.3 L63.6 3.2 L64.1 3.0 L64.5 3.3 L65.0 3.1 L65.4 3.2 L65.9 3.5 L66.3 3.4 L66.8 3.2 L67.2 3.3 L67.7 3.1 L68.2 3.7 L68.6 3.2 L69.1 3.7 L69.5 3.6 L70.0 3.3 L70.4 3.2 L70.9 3.1 L71.3 3.4 L71.8 3.3 L72.3 3.1 L72.7 3.4 L73.2 3.5 L73.6 3.4 L74.1 3.2 L74.5 3.5 L75.0 3.7 L75.4 3.7 L75.9 3.0 L76.3 3.4 L76.8 3.1 L77.3 3.1 L77.7 3.6 L78.2 3.1 L78.6 3.7 L79.1 3.3 L79.5 3.1 L80.0 3.5 L80.4 3.0 L80.9 3.1 L81.4 3.5 L81.8 3.2 L82.3 3.1 L82.7 3.6 L83.2 3.4 L83.6 3.2 L84.1 3.1 L84.5 3.3 L85.0 3.1 L85.5 3.2 L85.9 3.2 L86.4 3.6 L86.8 3.8 L87.3 3.4 L87.7 3.6 L88.2 3.3 L88.6 3.8 L89.1 3.4 L89.5 3.6 L90.0 3.8 L90.5 3.5 L90.9 3.7 L91.4 3.7 L91.8 4.0 L92.3 3.8 L92.7 3.8 L93.2 4.0 L93.6 3.6 L94.1 3.9 L94.6 3.8 L95.0 3.8 L95.5 3.8 L95.9 4.0 L96.4 4.0 L96.8 3.8 L97.3 4.0 L97.7 3.9 L98.2 3.8 L98.6 3.9 L99.1 3.9 L99.6 4.1 L100.0 3.9 L100.5 3.9 L100.9 4.0 L101.4 3.9 L101.8 3.9 L102.3 4.0 L102.7 4.0 L103.2 4.2 L103.7 4.0 L104.1 4.1 L104.6 4.2 L105.0 4.1 L105.5 4.2 L105.9 4.2 L106.4 4.1 L106.8 4.2 L107.3 4.3 L107.8 4.3 L108.2 4.2 L108.7 4.1 L109.1 4.2 L109.6 4.3 L110.0 4.2 L110.5 4.2 L110.9 4.3 L111.4 4.3 L111.8 4.2 L112.3 4.3 L112.8 4.4 L113.2 4.4 L113.7 4.3 L114.1 4.3 L114.6 4.3 L115.0 4.4 L115.5 4.4 L115.9 4.4 L116.4 4.4 L116.9 4.4 L117.3 4.4 L117.8 4.5 L118.2 4.4 L118.7 4.4 L119.1 4.4 L119.6 4.4 L120.0 4.5 L120.5 4.4 L120.9 4.5 L121.4 4.5 L121.9 4.5 L122.3 4.5 L122.8 4.5 L123.2 4.5 L123.7 4.5 L124.1 4.5 L124.6 4.5 L125.0 4.5 L125.5 4.6 L126.0 4.5 L126.4 4.5 L126.9 4.5 L127.3 4.5 L127.8 4.6 L128.2 4.5 L128.7 4.6 L129.1 4.6 L129.6 4.6 L130.1 4.6 L130.5 4.6 L131.0 4.6 L131.4 4.6 L131.9 4.6 L132.3 4.6 L132.8 4.6 L133.2 4.6 L133.7 4.6 L134.1 4.6 L134.6 4.6 L135.1 4.6 L135.5 4.6 L136.0 4.6 L136.4 4.6 L136.9 4.6 L137.3 4.6 L137.8 4.6 L138.2 4.6 L138.7 4.6 L139.2 4.6 L139.6 4.6 L140.1 4.6 L140.5 4.6 L141.0 4.6 L141.4 4.6 L141.9 4.6 L142.3 4.6 L142.8 4.6 L143.2 4.6 L143.7 4.6 L144.2 4.6 L144.6 4.6 L145.1 4.6 L145.5 4.7 L146.0 4.7 L146.4 4.7 L146.9 4.7 L147.3 4.7 L147.8 4.7 L147.8 5.2 L147.3 5.1 L146.9 5.2 L146.4 5.1 L146.0 5.1 L145.5 5.1 L145.1 5.1 L144.6 5.1 L144.2 5.1 L143.7 5.1 L143.2 5.1 L142.8 5.1 L142.3 5.1 L141.9 5.1 L141.4 5.1 L141.0 5.1 L140.5 5.1 L140.1 5.1 L139.6 5.1 L139.2 5.1 L138.7 5.2 L138.2 5.2 L137.8 5.2 L137.3 5.2 L136.9 5.1 L136.4 5.1 L136.0 5.1 L135.5 5.1 L135.1 5.1 L134.6 5.2 L134.1 5.2 L133.7 5.2 L133.2 5.2 L132.8 5.1 L132.3 5.2 L131.9 5.2 L131.4 5.2 L131.0 5.2 L130.5 5.2 L130.1 5.1 L129.6 5.2 L129.1 5.1 L128.7 5.2 L128.2 5.2 L127.8 5.3 L127.3 5.2 L126.9 5.3 L126.4 5.2 L126.0 5.2 L125.5 5.2 L125.0 5.2 L124.6 5.2 L124.1 5.3 L123.7 5.3 L123.2 5.2 L122.8 5.2 L122.3 5.3 L121.9 5.3 L121.4 5.3 L120.9 5.2 L120.5 5.3 L120.0 5.3 L119.6 5.3 L119.1 5.3 L118.7 5.3 L118.2 5.3 L117.8 5.4 L117.3 5.3 L116.9 5.4 L116.4 5.4 L115.9 5.3 L115.5 5.4 L115.0 5.3 L114.6 5.3 L114.1 5.5 L113.7 5.5 L113.2 5.4 L112.8 5.3 L112.3 5.5 L111.8 5.6 L111.4 5.4 L110.9 5.4 L110.5 5.6 L110.0 5.4 L109.6 5.4 L109.1 5.6 L108.7 5.5 L108.2 5.5 L107.8 5.4 L107.3 5.4 L106.8 5.6 L106.4 5.6 L105.9 5.6 L105.5 5.6 L105.0 5.5 L104.6 5.5 L104.1 5.6 L103.7 5.8 L103.2 5.7 L102.7 5.8 L102.3 5.7 L101.8 5.9 L101.4 5.8 L100.9 5.8 L100.5 5.8 L100.0 5.9 L99.6 5.7 L99.1 5.9 L98.6 5.8 L98.2 6.0 L97.7 5.8 L97.3 5.7 L96.8 5.8 L96.4 5.7 L95.9 5.6 L95.5 5.9 L95.0 5.9 L94.6 6.1 L94.1 5.7 L93.6 6.1 L93.2 5.8 L92.7 5.9 L92.3 6.0 L91.8 5.8 L91.4 5.9 L90.9 5.8 L90.5 6.3 L90.0 6.0 L89.5 6.0 L89.1 6.0 L88.6 6.0 L88.2 6.5 L87.7 6.0 L87.3 6.1 L86.8 5.8 L86.4 6.0 L85.9 6.6 L85.5 6.7 L85.0 6.7 L84.5 6.1 L84.1 6.3 L83.6 6.6 L83.2 6.4 L82.7 6.0 L82.3 6.5 L81.8 6.6 L81.4 6.3 L80.9 6.6 L80.4 6.5 L80.0 6.2 L79.5 6.4 L79.1 6.4 L78.6 5.8 L78.2 6.6 L77.7 5.9 L77.3 6.4 L76.8 6.3 L76.3 6.5 L75.9 6.5 L75.4 5.9 L75.0 6.0 L74.5 6.1 L74.1 6.7 L73.6 6.4 L73.2 6.2 L72.7 6.5 L72.3 6.5 L71.8 6.3 L71.3 6.2 L70.9 6.5 L70.4 6.5 L70.0 6.2 L69.5 6.3 L69.1 6.1 L68.6 6.5 L68.2 5.8 L67.7 6.7 L67.2 6.5 L66.8 6.5 L66.3 6.3 L65.9 6.3 L65.4 6.6 L65.0 6.3 L64.5 6.2 L64.1 6.6 L63.6 6.4 L63.1 6.3 L62.7 6.3 L62.2 6.4 L61.8 6.0 L61.3 6.5 L60.9 6.5 L60.4 6.6 L60.0 6.2 L59.5 6.2 L59.1 6.3 L58.6 6.4 L58.1 6.6 L57.7 6.4 L57.2 6.5 L56.8 6.0 L56.3 6.7 L55.9 6.6 L55.4 6.3 L55.0 6.6 L54.5 6.2 L54.0 6.4 L53.6 5.9 L53.1 6.7 L52.7 6.2 L52.2 6.0 L51.8 6.3 L51.3 5.9 L50.9 6.4 L50.4 5.9 L50.0 6.1 L49.5 6.4 L49.0 6.3 L48.6 6.2 L48.1 6.1 L47.7 6.1 L47.2 6.2 L46.8 6.1 L46.3 6.5 L45.9 6.3 L45.4 6.1 L44.9 6.2 L44.5 6.1 L44.0 6.1 L43.6 6.3 L43.1 6.4 L42.7 6.1 L42.2 6.5 L41.8 6.8 L41.3 6.1 L40.8 6.7 L40.4 6.0 L39.9 5.9 L39.5 5.8 L39.0 6.4 L38.6 6.2 L38.1 6.4 L37.7 6.5 L37.2 6.2 L36.8 6.1 L36.3 6.3 L35.8 6.8 L35.4 6.3 L34.9 6.2 L34.5 6.5 L34.0 6.2 L33.6 6.2 L33.1 6.4 L32.7 6.7 L32.2 6.5 L31.7 6.1 L31.3 6.1 L30.8 6.1 L30.4 6.4 L29.9 6.3 L29.5 6.5 L29.0 6.1 L28.6 6.8 L28.1 6.1 L27.7 6.1 L27.2 6.5 L26.7 6.3 L26.3 6.0 L25.8 6.3 L25.4 6.3 L24.9 6.3 L24.5 6.2 L24.0 6.0 L23.6 6.5 L23.1 6.4 L22.6 6.6 L22.2 6.3 L21.7 6.2 L21.3 6.1 L20.8 5.9 L20.4 6.1 L19.9 6.1 L19.5 6.4 L19.0 6.1 L18.5 6.7 L18.1 6.3 L17.6 6.2 L17.2 6.2 L16.7 6.6 L16.3 6.3 L15.8 6.0 L15.4 6.7 L14.9 6.1 L14.5 6.1 L14.0 6.6 L13.5 6.0 L13.1 6.5 L12.6 6.1 L12.2 6.7 L11.7 6.2 L11.3 6.5 L10.8 6.1 L10.4 6.7 L9.9 6.4 L9.4 6.6 L9.0 6.5 L8.5 6.2 L8.1 6.2 L7.6 6.8 L7.2 6.7 L6.7 6.6 L6.3 5.9 L5.8 6.4 L5.4 6.0 L4.9 6.2 L4.4 5.9 L4.0 6.6 L3.5 6.8 L3.1 6.0 L2.6 6.5 L2.2 6.8 L1.7 6.2 L1.3 5.8 L0.8 5.2 Z" fill="#1a2a78"/><path d="M0.8 12.34 H150.60" stroke="#1a2a78" stroke-width="0.45" opacity="0.55"/><path d="M0.8 11.9 L1.3 11.4 L1.7 10.9 L2.2 10.5 L2.6 10.6 L3.1 11.0 L3.5 10.7 L4.0 10.6 L4.4 10.8 L4.9 10.7 L5.4 10.5 L5.8 10.7 L6.3 10.8 L6.7 10.8 L7.2 10.8 L7.6 11.0 L8.1 10.5 L8.5 10.6 L9.0 10.6 L9.4 11.0 L9.9 10.8 L10.4 10.5 L10.8 10.9 L11.3 10.7 L11.7 11.1 L12.2 11.2 L12.6 10.5 L13.1 10.8 L13.5 11.0 L14.0 10.7 L14.5 10.7 L14.9 10.9 L15.4 10.5 L15.8 11.1 L16.3 11.1 L16.7 10.5 L17.2 10.7 L17.6 11.2 L18.1 11.1 L18.5 10.5 L19.0 11.0 L19.5 10.6 L19.9 11.2 L20.4 11.1 L20.8 10.4 L21.3 10.6 L21.7 10.5 L22.2 10.5 L22.6 11.2 L23.1 11.1 L23.6 10.8 L24.0 10.9 L24.5 10.6 L24.9 10.5 L25.4 10.6 L25.8 10.7 L26.3 10.6 L26.7 10.9 L27.2 10.7 L27.7 11.0 L28.1 10.7 L28.6 10.9 L29.0 10.5 L29.5 10.6 L29.9 10.9 L30.4 10.5 L30.8 10.9 L31.3 10.9 L31.7 11.1 L32.2 11.1 L32.7 11.1 L33.1 10.6 L33.6 10.9 L34.0 10.5 L34.5 11.0 L34.9 10.6 L35.4 10.5 L35.8 10.6 L36.3 10.5 L36.8 10.7 L37.2 10.6 L37.7 10.7 L38.1 10.8 L38.6 10.9 L39.0 10.7 L39.5 10.9 L39.9 10.9 L40.4 10.8 L40.8 10.7 L41.3 10.5 L41.8 10.8 L42.2 10.9 L42.7 10.5 L43.1 10.5 L43.6 10.8 L44.0 11.2 L44.5 10.8 L44.9 10.8 L45.4 11.0 L45.9 11.0 L46.3 10.6 L46.8 10.9 L47.2 10.8 L47.7 11.1 L48.1 10.7 L48.6 10.8 L49.0 10.7 L49.5 11.1 L50.0 10.5 L50.4 11.0 L50.9 10.7 L51.3 10.9 L51.8 10.5 L52.2 10.7 L52.7 10.8 L53.1 11.1 L53.6 11.1 L54.0 10.5 L54.5 10.8 L55.0 10.8 L55.4 11.1 L55.9 10.5 L56.3 11.1 L56.8 10.6 L57.2 11.2 L57.7 10.5 L58.1 10.9 L58.6 10.6 L59.1 10.8 L59.5 11.0 L60.0 11.1 L60.4 10.7 L60.9 10.9 L61.3 10.9 L61.8 10.6 L62.2 10.6 L62.7 10.5 L63.1 10.6 L63.6 10.8 L64.1 10.9 L64.5 10.6 L65.0 10.5 L65.4 10.5 L65.9 10.8 L66.3 10.7 L66.8 10.7 L67.2 11.1 L67.7 11.1 L68.2 10.9 L68.6 10.5 L69.1 10.9 L69.5 11.0 L70.0 10.7 L70.4 10.8 L70.9 10.7 L71.3 10.6 L71.8 11.1 L72.3 11.0 L72.7 10.6 L73.2 11.0 L73.6 10.5 L74.1 10.6 L74.5 11.0 L75.0 10.5 L75.4 10.9 L75.9 10.8 L76.3 10.9 L76.8 11.0 L77.3 10.5 L77.7 11.0 L78.2 10.5 L78.6 11.1 L79.1 10.8 L79.5 10.6 L80.0 10.5 L80.4 10.8 L80.9 11.0 L81.4 10.9 L81.8 10.6 L82.3 10.8 L82.7 11.0 L83.2 10.8 L83.6 10.6 L84.1 11.0 L84.5 10.8 L85.0 11.0 L85.5 10.9 L85.9 10.9 L86.4 11.1 L86.8 10.8 L87.3 10.9 L87.7 11.0 L88.2 10.9 L88.6 11.3 L89.1 11.1 L89.5 11.1 L90.0 10.9 L90.5 11.1 L90.9 11.2 L91.4 11.1 L91.8 11.4 L92.3 11.0 L92.7 11.3 L93.2 11.2 L93.6 11.2 L94.1 11.4 L94.6 11.3 L95.0 11.4 L95.5 11.4 L95.9 11.4 L96.4 11.2 L96.8 11.5 L97.3 11.4 L97.7 11.2 L98.2 11.4 L98.6 11.3 L99.1 11.3 L99.6 11.5 L100.0 11.3 L100.5 11.4 L100.9 11.5 L101.4 11.5 L101.8 11.7 L102.3 11.5 L102.7 11.5 L103.2 11.5 L103.7 11.5 L104.1 11.5 L104.6 11.6 L105.0 11.6 L105.5 11.5 L105.9 11.5 L106.4 11.5 L106.8 11.8 L107.3 11.7 L107.8 11.5 L108.2 11.5 L108.7 11.6 L109.1 11.7 L109.6 11.7 L110.0 11.8 L110.5 11.8 L110.9 11.7 L111.4 11.7 L111.8 11.8 L112.3 11.7 L112.8 11.8 L113.2 11.8 L113.7 11.7 L114.1 11.8 L114.6 11.9 L115.0 11.8 L115.5 11.9 L115.9 11.7 L116.4 11.8 L116.9 11.8 L117.3 11.8 L117.8 11.9 L118.2 11.9 L118.7 11.8 L119.1 11.8 L119.6 11.9 L120.0 11.8 L120.5 11.9 L120.9 11.9 L121.4 11.9 L121.9 11.9 L122.3 11.9 L122.8 12.0 L123.2 12.0 L123.7 11.9 L124.1 11.9 L124.6 12.0 L125.0 12.0 L125.5 12.0 L126.0 12.0 L126.4 11.9 L126.9 12.0 L127.3 12.0 L127.8 12.0 L128.2 12.0 L128.7 12.0 L129.1 12.0 L129.6 12.0 L130.1 12.0 L130.5 12.0 L131.0 12.0 L131.4 12.0 L131.9 12.0 L132.3 12.0 L132.8 12.0 L133.2 12.0 L133.7 12.0 L134.1 12.0 L134.6 12.1 L135.1 12.0 L135.5 12.1 L136.0 12.1 L136.4 12.1 L136.9 12.1 L137.3 12.1 L137.8 12.1 L138.2 12.1 L138.7 12.1 L139.2 12.1 L139.6 12.1 L140.1 12.1 L140.5 12.1 L141.0 12.1 L141.4 12.1 L141.9 12.1 L142.3 12.1 L142.8 12.1 L143.2 12.1 L143.7 12.1 L144.2 12.1 L144.6 12.1 L145.1 12.1 L145.5 12.1 L146.0 12.1 L146.4 12.1 L146.9 12.1 L147.3 12.1 L147.8 12.1 L147.8 12.6 L147.3 12.5 L146.9 12.5 L146.4 12.6 L146.0 12.6 L145.5 12.6 L145.1 12.5 L144.6 12.5 L144.2 12.6 L143.7 12.6 L143.2 12.6 L142.8 12.5 L142.3 12.6 L141.9 12.6 L141.4 12.6 L141.0 12.6 L140.5 12.6 L140.1 12.6 L139.6 12.6 L139.2 12.6 L138.7 12.6 L138.2 12.6 L137.8 12.6 L137.3 12.6 L136.9 12.6 L136.4 12.6 L136.0 12.6 L135.5 12.6 L135.1 12.6 L134.6 12.6 L134.1 12.6 L133.7 12.6 L133.2 12.6 L132.8 12.6 L132.3 12.6 L131.9 12.6 L131.4 12.6 L131.0 12.6 L130.5 12.7 L130.1 12.6 L129.6 12.6 L129.1 12.6 L128.7 12.6 L128.2 12.7 L127.8 12.7 L127.3 12.7 L126.9 12.6 L126.4 12.7 L126.0 12.7 L125.5 12.6 L125.0 12.7 L124.6 12.7 L124.1 12.7 L123.7 12.7 L123.2 12.7 L122.8 12.7 L122.3 12.8 L121.9 12.7 L121.4 12.8 L120.9 12.8 L120.5 12.7 L120.0 12.8 L119.6 12.8 L119.1 12.8 L118.7 12.9 L118.2 12.7 L117.8 12.8 L117.3 12.8 L116.9 12.8 L116.4 12.9 L115.9 12.8 L115.5 12.7 L115.0 12.8 L114.6 12.8 L114.1 12.7 L113.7 12.8 L113.2 12.7 L112.8 12.8 L112.3 12.9 L111.8 12.8 L111.4 12.9 L110.9 13.0 L110.5 12.9 L110.0 12.8 L109.6 12.9 L109.1 12.8 L108.7 13.0 L108.2 13.0 L107.8 12.9 L107.3 13.0 L106.8 12.8 L106.4 13.0 L105.9 13.1 L105.5 13.1 L105.0 13.1 L104.6 13.1 L104.1 13.2 L103.7 13.0 L103.2 13.0 L102.7 13.1 L102.3 13.0 L101.8 12.9 L101.4 13.2 L100.9 13.2 L100.5 13.3 L100.0 13.3 L99.6 13.0 L99.1 13.4 L98.6 13.2 L98.2 13.3 L97.7 13.3 L97.3 13.2 L96.8 13.2 L96.4 13.5 L95.9 13.0 L95.5 13.0 L95.0 13.2 L94.6 13.3 L94.1 13.2 L93.6 13.5 L93.2 13.4 L92.7 13.4 L92.3 13.6 L91.8 13.1 L91.4 13.5 L90.9 13.2 L90.5 13.4 L90.0 13.6 L89.5 13.5 L89.1 13.6 L88.6 13.2 L88.2 13.7 L87.7 13.4 L87.3 13.7 L86.8 13.7 L86.4 13.4 L85.9 13.4 L85.5 13.6 L85.0 13.4 L84.5 13.8 L84.1 13.7 L83.6 13.6 L83.2 13.8 L82.7 13.5 L82.3 13.9 L81.8 14.0 L81.4 13.5 L80.9 13.3 L80.4 13.6 L80.0 13.9 L79.5 13.9 L79.1 13.7 L78.6 13.5 L78.2 13.9 L77.7 13.7 L77.3 14.0 L76.8 13.7 L76.3 13.8 L75.9 13.8 L75.4 13.5 L75.0 14.1 L74.5 13.6 L74.1 14.2 L73.6 14.0 L73.2 13.4 L72.7 13.7 L72.3 13.6 L71.8 13.4 L71.3 13.8 L70.9 13.6 L70.4 13.7 L70.0 13.7 L69.5 13.4 L69.1 13.7 L68.6 14.2 L68.2 13.5 L67.7 13.3 L67.2 13.6 L66.8 13.7 L66.3 13.9 L65.9 13.9 L65.4 13.7 L65.0 14.2 L64.5 13.8 L64.1 13.6 L63.6 13.8 L63.1 14.1 L62.7 13.9 L62.2 13.9 L61.8 13.7 L61.3 13.6 L60.9 13.8 L60.4 13.7 L60.0 13.6 L59.5 13.5 L59.1 13.8 L58.6 13.8 L58.1 13.8 L57.7 13.9 L57.2 13.3 L56.8 14.1 L56.3 13.4 L55.9 14.2 L55.4 13.3 L55.0 13.9 L54.5 13.7 L54.0 13.9 L53.6 13.6 L53.1 13.5 L52.7 13.7 L52.2 13.7 L51.8 13.8 L51.3 13.5 L50.9 13.8 L50.4 13.5 L50.0 14.1 L49.5 13.4 L49.0 13.9 L48.6 13.6 L48.1 13.9 L47.7 13.3 L47.2 13.6 L46.8 13.6 L46.3 13.8 L45.9 13.4 L45.4 13.6 L44.9 13.8 L44.5 13.7 L44.0 13.3 L43.6 13.5 L43.1 14.0 L42.7 13.9 L42.2 13.6 L41.8 13.9 L41.3 14.0 L40.8 13.7 L40.4 13.9 L39.9 13.7 L39.5 13.7 L39.0 13.6 L38.6 13.8 L38.1 13.8 L37.7 14.1 L37.2 13.9 L36.8 13.9 L36.3 14.2 L35.8 14.0 L35.4 13.9 L34.9 13.8 L34.5 13.4 L34.0 14.3 L33.6 13.9 L33.1 14.2 L32.7 13.5 L32.2 13.6 L31.7 13.3 L31.3 13.9 L30.8 13.5 L30.4 14.2 L29.9 13.5 L29.5 13.8 L29.0 13.8 L28.6 13.5 L28.1 13.6 L27.7 13.7 L27.2 13.7 L26.7 13.7 L26.3 13.8 L25.8 13.7 L25.4 13.7 L24.9 13.7 L24.5 13.8 L24.0 13.6 L23.6 13.8 L23.1 13.6 L22.6 13.2 L22.2 13.8 L21.7 13.9 L21.3 14.2 L20.8 13.8 L20.4 13.6 L19.9 13.3 L19.5 14.0 L19.0 13.5 L18.5 13.8 L18.1 13.5 L17.6 13.2 L17.2 13.9 L16.7 14.1 L16.3 13.6 L15.8 13.4 L15.4 13.8 L14.9 13.7 L14.5 14.0 L14.0 13.8 L13.5 13.4 L13.1 14.0 L12.6 13.9 L12.2 13.5 L11.7 13.4 L11.3 14.0 L10.8 13.6 L10.4 14.2 L9.9 13.7 L9.4 13.5 L9.0 13.8 L8.5 14.0 L8.1 14.1 L7.6 13.7 L7.2 13.6 L6.7 13.6 L6.3 13.6 L5.8 13.7 L5.4 13.9 L4.9 14.1 L4.4 13.5 L4.0 14.0 L3.5 13.6 L3.1 13.7 L2.6 14.0 L2.2 13.8 L1.7 13.6 L1.3 13.3 L0.8 12.7 Z" fill="#1a2a78"/><path d="M2.80 0.6 V16.30" stroke="#3c3430" stroke-width="0.55" fill="none" opacity="0.85"/><path d="M82.10 0.6 V16.30" stroke="#3c3430" stroke-width="0.55" fill="none" opacity="0.85"/><path d="M0.6 8.45 L2.80 0.60" stroke="#3c3430" stroke-width="0.55" fill="none" opacity="0.85"/><path d="M82.10 0.60 C90.42 6.49 109.82 8.35 150.80 8.45" stroke="#3c3430" stroke-width="0.55" fill="none" opacity="0.85"/><path d="M0.6 16.30 L2.80 8.45" stroke="#3c3430" stroke-width="0.55" fill="none" opacity="0.85"/><path d="M82.10 8.45 C90.42 14.34 109.82 16.20 150.80 16.30" stroke="#3c3430" stroke-width="0.55" fill="none" opacity="0.85"/><path d="M0.6 8.45 H150.80" stroke="#4a4442" stroke-width="0.5" opacity="0.7"/><rect x="4.80" y="1.9" width="71.97" height="4.6" rx="0.8" fill="#554a46" fill-opacity="0.85" stroke="#e8e8e8" stroke-opacity="0.85" stroke-width="0.55"/><text x="5.90" y="5.75" font-family="Liberation Sans" font-weight="bold" font-size="4.5" fill="#fff" stroke="#fff" stroke-width="0.32" textLength="69.57" lengthAdjust="spacingAndGlyphs">SOT-02_09_03_Water; Underwater (</text><rect x="1.8" y="10.30" width="4.4" height="5" rx="0.6" fill="#5a5250" fill-opacity="0.8" stroke="#f4f4f4" stroke-opacity="0.85" stroke-width="0.6"/><rect x="0.4" y="0.4" width="150.60" height="16.10" fill="none" stroke="#4a4442" stroke-width="0.8"/></svg>
<div class="a" style="left:650.70px;top:103.75px;width:4.40px;height:16.90px;background:#d82020;border:0.6px solid #6a1010"></div>
<div class="a" style="left:651.8px;top:104.75px;width:2px;height:2px;border-radius:50%;background:#fff"></div>
<div class="a" style="left:651.8px;top:117.25px;width:2px;height:2px;border-radius:50%;background:#fff"></div>
<div class="a" style="left:382.60px;top:454.00px;width:121.40px;height:0.80px;background:#6a6a6a"></div>
<div class="a" style="left:817.00px;top:102.55px;width:6.00px;height:361.45px;background:#b5b5b5"></div>
<div class="a" style="left:817.00px;top:119.60px;width:6.00px;height:104.10px;background:linear-gradient(90deg,#6a6a6a,#8a8a8a 50%,#6a6a6a)"></div>
<div class="a" style="left:817.00px;top:104.00px;width:6.00px;height:7.00px;background:#c8c8c8"></div>
<svg class="a" style="left:817px;top:104px" width="6" height="16"><path d="M1.5 3v3M3 3v3l2-1.5z" stroke="#333" stroke-width="0.6" fill="#333"/><path d="M1.5 12l3 1" stroke="#333" stroke-width="0.9"/></svg>
<div class="a" style="left:823.00px;top:36.00px;width:2.00px;height:428.00px;background:#2a2a2a"></div>
<div class="a" style="left:817.00px;top:428.50px;width:6.00px;height:7.00px;background:linear-gradient(#8a8a8a,#666)"></div>
<div class="a" style="left:817.00px;top:435.80px;width:6.00px;height:7.00px;background:linear-gradient(#8a8a8a,#666)"></div>
<div class="a" style="left:817.00px;top:443.10px;width:6.00px;height:5.80px;background:linear-gradient(#d4d4d4,#b0b0b0)"></div>
<div class="a" style="left:817.00px;top:449.20px;width:6.00px;height:5.80px;background:linear-gradient(#d4d4d4,#b0b0b0)"></div>
<svg class="a" style="left:817px;top:430px" width="6" height="26"><path d="M1.5 3.8l1.5-2l1.5 2z M1.5 9.5l1.5 2l1.5-2z" fill="#fff"/><path d="M1.8 16h2.4" stroke="#222" stroke-width="0.9"/><path d="M1.8 22h2.4M3 20.8v2.4" stroke="#222" stroke-width="0.8"/></svg>
<div class="a" style="left:0.00px;top:454.25px;width:122.00px;height:9.75px;background:#404040"></div>
<div class="a" style="left:2.00px;top:454.25px;width:120.00px;height:0.75px;background:#2a2a2a"></div>
<svg class="a" style="left:3px;top:455.5px" width="6" height="6"><path d="M1 1v4" stroke="#ddd" stroke-width="0.7"/><path d="M2 3h2.5" stroke="#ddd" stroke-width="1.2"/></svg>
<div class="a" style="left:122.00px;top:454.60px;width:6.00px;height:7.40px;background:#8a8a8a"></div>
<div class="a" style="left:128.00px;top:455.00px;width:655.00px;height:7.00px;background:linear-gradient(#b8b8b8,#a8a8a8)"></div>
<div class="a" style="left:783.00px;top:455.00px;width:34.00px;height:7.00px;background:#777"></div>
<div class="a" style="left:771.70px;top:455.00px;width:2.70px;height:7.00px;background:#7a7a7a"></div>
<div class="a" style="left:783.00px;top:455.30px;width:6.80px;height:6.50px;background:linear-gradient(#8a8a8a,#5a5a5a)"></div>
<div class="a" style="left:790.00px;top:455.30px;width:6.80px;height:6.50px;background:linear-gradient(#8a8a8a,#5a5a5a)"></div>
<div class="a" style="left:797.00px;top:455.30px;width:6.30px;height:6.50px;background:linear-gradient(#d0d0d0,#a8a8a8)"></div>
<div class="a" style="left:803.50px;top:455.30px;width:6.30px;height:6.50px;background:linear-gradient(#d0d0d0,#a8a8a8)"></div>
<div class="a" style="left:810.00px;top:455.30px;width:6.30px;height:6.50px;background:linear-gradient(#8a8a8a,#5a5a5a)"></div>
<svg class="a" style="left:783px;top:455px" width="40" height="7"><path d="M3.5 2l-1.5 1.5l1.5 1.5z M9 2l1.5 1.5l-1.5 1.5z" fill="#eee"/><path d="M16 3.5h2.5" stroke="#222" stroke-width="0.8"/><path d="M22 3.5h3M23.5 2v3" stroke="#222" stroke-width="0.8"/><path d="M28.5 3.5h3M32 2v3M28.5 2v3" stroke="#fff" stroke-width="0.7"/></svg>
<div class="a" style="left:817.00px;top:462.00px;width:8.00px;height:2.00px;background:#2a2a2a"></div>
<div class="a" style="left:0.00px;top:462.00px;width:825.00px;height:2.00px;background:#2e2e2e"></div>
<div class="a" style="left:0.00px;top:36.00px;width:2.00px;height:428.00px;background:#2a2a2a"></div></div></body></html>
